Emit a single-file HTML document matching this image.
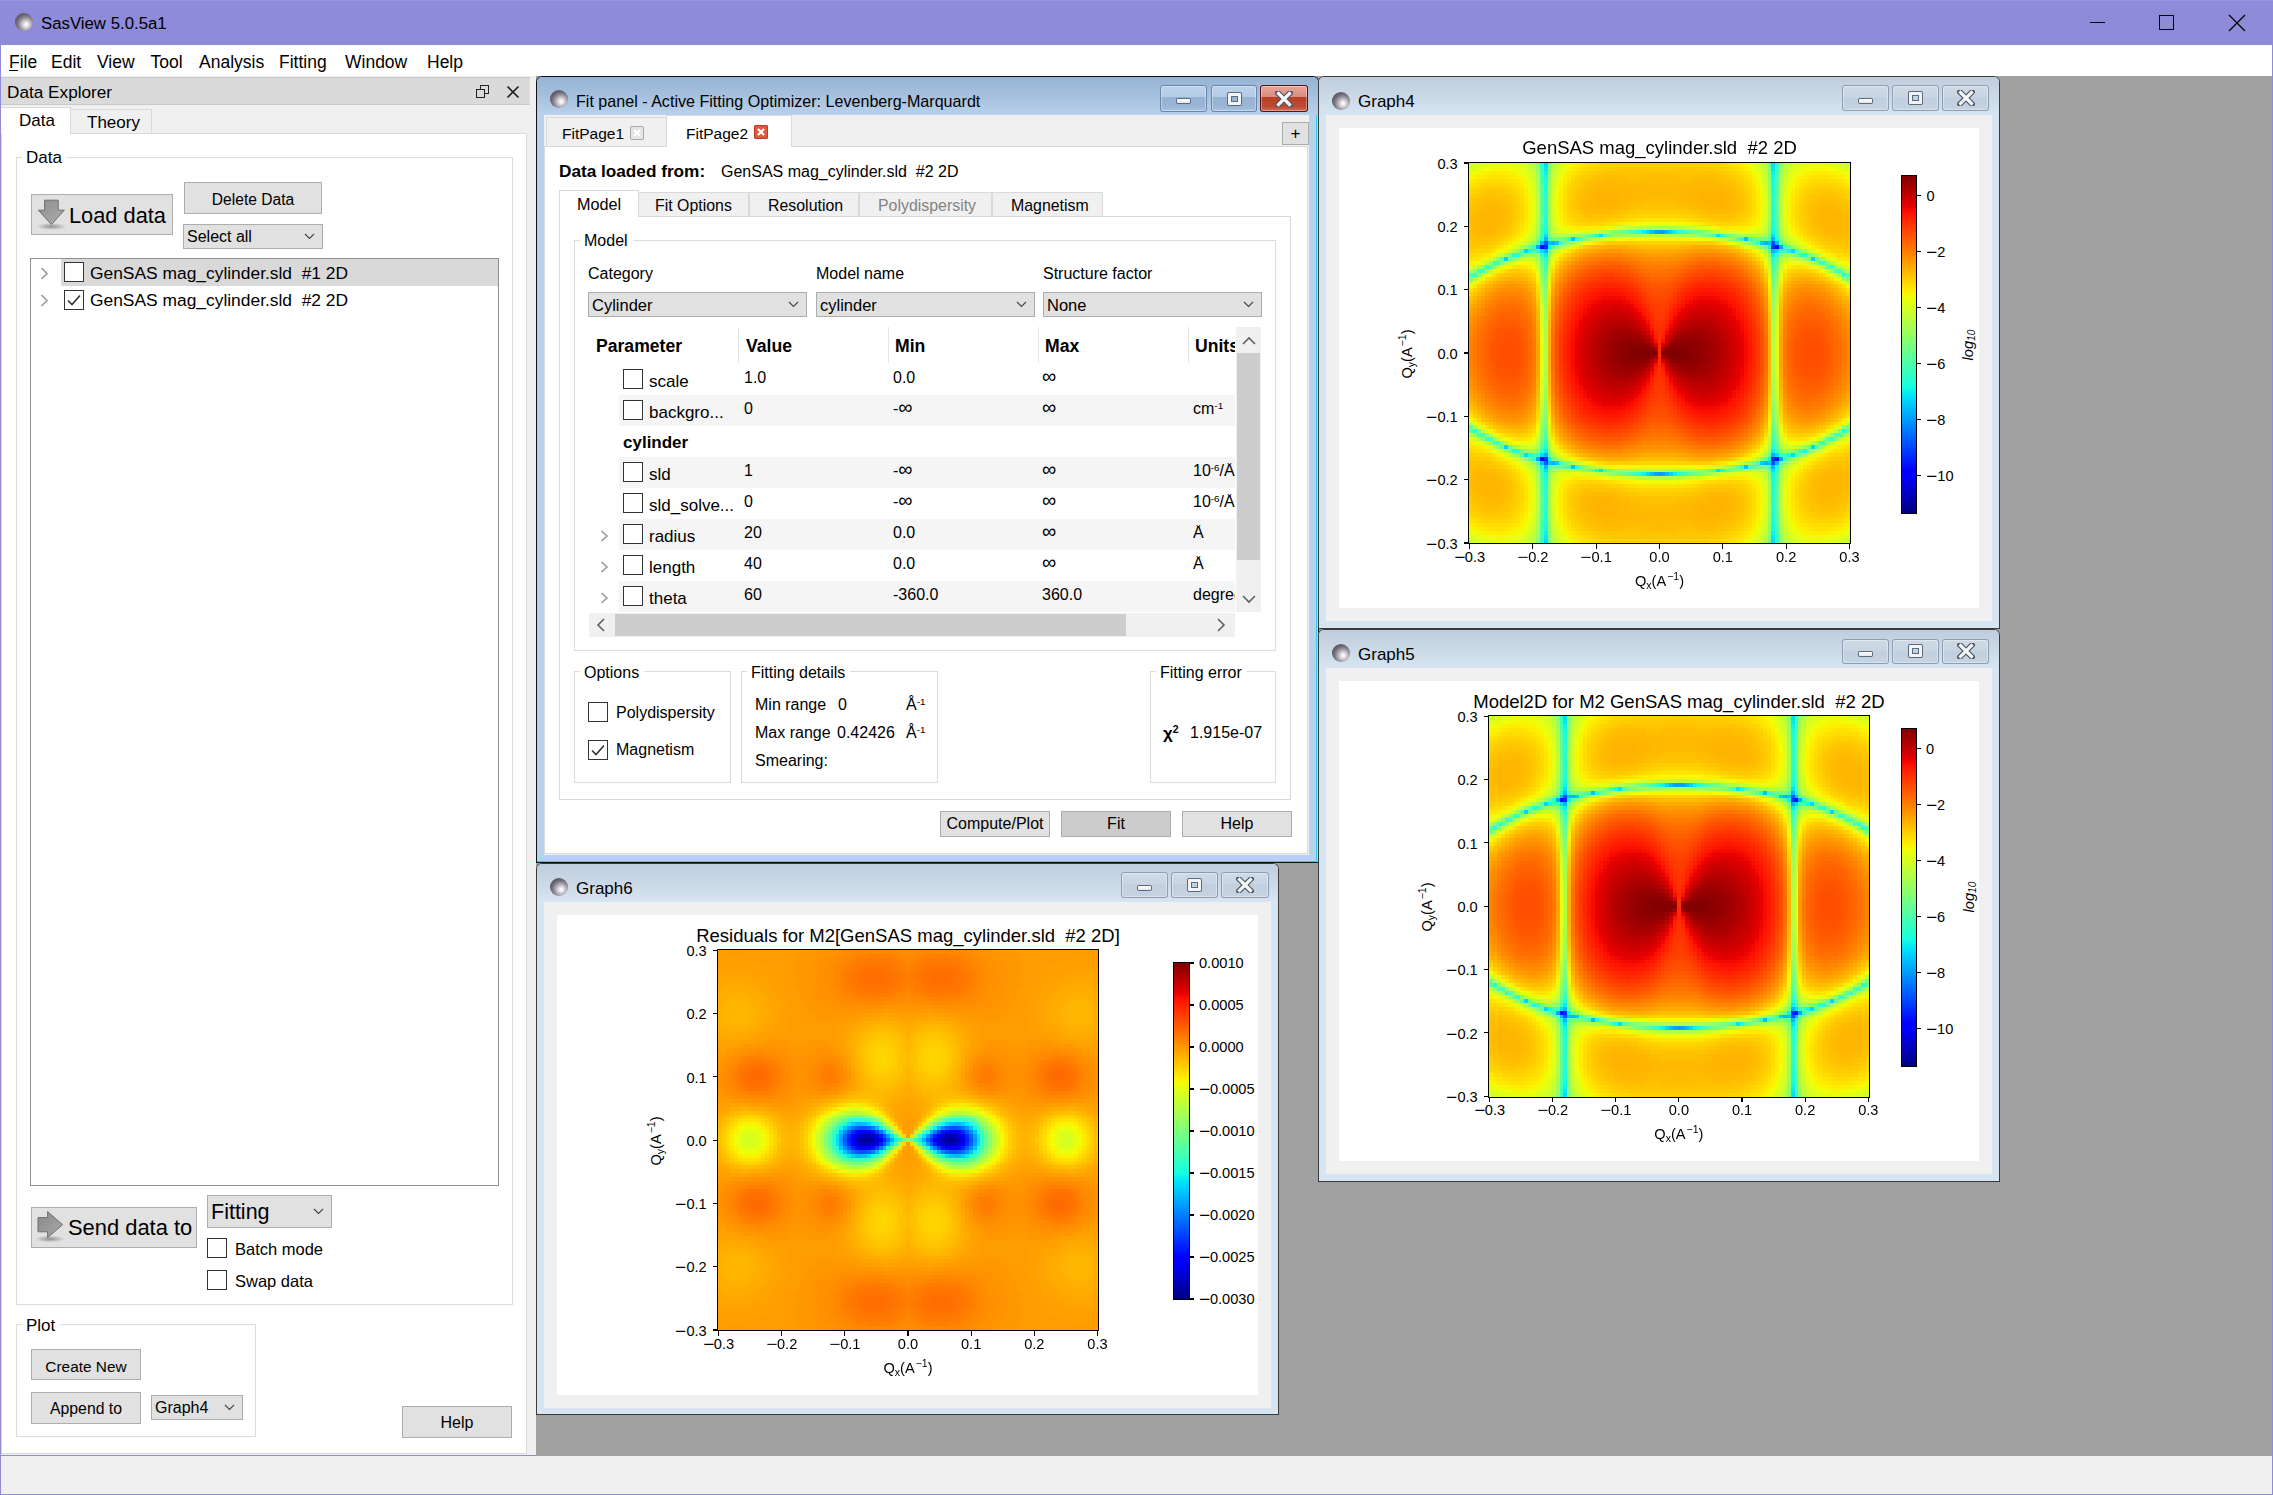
<!DOCTYPE html>
<html><head><meta charset="utf-8"><title>SasView</title><style>
*{margin:0;padding:0;box-sizing:border-box}
html,body{width:2273px;height:1495px;overflow:hidden;background:#a0a0a0}
body{position:relative;font-family:"Liberation Sans",sans-serif;color:#000}
.a{position:absolute}
.t{position:absolute;white-space:pre}
canvas{image-rendering:pixelated}
.hm{overflow:hidden}.hm>div{position:absolute;left:0;width:100%}
sup{font-size:0.62em;vertical-align:0.55em;line-height:0}
sub{font-size:0.7em;vertical-align:-0.25em;line-height:0}
sup.ms{font-size:0.72em;vertical-align:0.6em;margin-left:1px}
sub.ms{font-size:0.72em;vertical-align:-0.3em}
</style></head>
<body>
<div class="a" style="left:0px;top:0px;width:2273px;height:1495px;background:#8e8bd8;"></div>
<div class="a" style="left:1px;top:45px;width:2271px;height:31px;background:#fff;"></div>
<div class="a" style="left:1px;top:76px;width:527px;height:1379px;background:#f0f0f0;"></div>
<div class="a" style="left:528px;top:76px;width:8px;height:1379px;background:#f0f0f0;"></div>
<div class="a" style="left:536px;top:76px;width:1736px;height:1380px;background:#a0a0a0;"></div>
<div class="a" style="left:1px;top:1456px;width:2271px;height:38px;background:#f0f0f0;"></div>
<div class="a" style="left:0px;top:0px;width:2273px;height:1px;background:#9894dc;"></div>
<div class="a" style="left:15px;top:13px;width:18px;height:18px;border-radius:50%;background:radial-gradient(circle farthest-corner at 62% 64%, #ffffff 0%, #f3eff3 10%, #b4b0b8 32%, #75717e 55%, #4d4a58 80%, #474453 100%);"></div>
<div class="t" style="top:15.78px;font-size:16.8px;line-height:16.8px;left:41px;">SasView 5.0.5a1</div>
<div class="a" style="left:2090px;top:22px;width:15px;height:1px;background:#000;"></div>
<div class="a" style="left:2159px;top:15px;width:15px;height:15px;box-shadow:inset 0 0 0 1px #000;"></div>
<svg class="a" style="left:2228px;top:14px" width="18" height="18"><path d="M1 1 L17 17 M17 1 L1 17" stroke="#000" stroke-width="1.2"/></svg>
<div class="t" style="top:53.69px;font-size:17.5px;line-height:17.5px;left:9px;">File</div>
<div class="t" style="top:53.69px;font-size:17.5px;line-height:17.5px;left:51px;">Edit</div>
<div class="t" style="top:53.69px;font-size:17.5px;line-height:17.5px;left:97px;">View</div>
<div class="t" style="top:53.69px;font-size:17.5px;line-height:17.5px;left:150.5px;">Tool</div>
<div class="t" style="top:53.69px;font-size:17.5px;line-height:17.5px;left:199px;">Analysis</div>
<div class="t" style="top:53.69px;font-size:17.5px;line-height:17.5px;left:279px;">Fitting</div>
<div class="t" style="top:53.69px;font-size:17.5px;line-height:17.5px;left:345px;">Window</div>
<div class="t" style="top:53.69px;font-size:17.5px;line-height:17.5px;left:427px;">Help</div>
<div class="a" style="left:9px;top:70px;width:9px;height:1px;background:#000;"></div>
<div class="a" style="left:1px;top:77px;width:529px;height:28px;background:#dadada;box-shadow:inset 0 1px 0 #c9c9c9, inset 0 -1px 0 #c9c9c9;"></div>
<div class="t" style="top:84.44px;font-size:17.2px;line-height:17.2px;left:7px;">Data Explorer</div>
<div class="a" style="left:480px;top:85px;width:9px;height:9px;box-shadow:inset 0 0 0 1px #222;"></div>
<div class="a" style="left:476px;top:89px;width:9px;height:9px;background:#dadada;box-shadow:inset 0 0 0 1px #222;"></div>
<svg class="a" style="left:506px;top:85px" width="14" height="14"><path d="M1.5 1.5 L12.5 12.5 M12.5 1.5 L1.5 12.5" stroke="#222" stroke-width="1.7"/></svg>
<div class="a" style="left:1px;top:133px;width:526px;height:1321px;background:#fff;box-shadow:inset 0 0 0 1px #d9d9d9;"></div>
<div class="a" style="left:70px;top:109px;width:82px;height:25px;background:#f0f0f0;box-shadow:inset 0 0 0 1px #d9d9d9;"></div>
<div class="a" style="left:1px;top:107px;width:70px;height:27px;background:#fff;box-shadow:inset -1px 1px 0 #d9d9d9;"></div>
<div class="t" style="top:112.41px;font-size:17px;line-height:17px;left:19px;">Data</div>
<div class="t" style="top:114.11px;font-size:17px;line-height:17px;left:87px;">Theory</div>
<div class="a" style="left:16px;top:157px;width:497px;height:1148px;box-shadow:inset 0 0 0 1px #dcdcdc;"></div>
<div class="a" style="left:22px;top:155px;width:44.90718749999999px;height:4px;background:#fff;"></div>
<div class="t" style="top:149.31px;font-size:17px;line-height:17px;left:26px;">Data</div>
<div class="a" style="left:31px;top:194px;width:142px;height:41px;background:#e1e1e1;box-shadow:inset 0 0 0 1px #adadad;"></div>
<svg class="a" style="left:36px;top:198px" width="32" height="34"><defs><linearGradient id="ga" x1="0" y1="0" x2="1" y2="1"><stop offset="0" stop-color="#8f8f8f"/><stop offset="0.5" stop-color="#9d9d9b"/><stop offset="1" stop-color="#b0b0ae"/></linearGradient><radialGradient id="gs"><stop offset="0" stop-color="#888" stop-opacity="0.9"/><stop offset="1" stop-color="#888" stop-opacity="0"/></radialGradient></defs><ellipse cx="15.4" cy="28.5" rx="15" ry="3.5" fill="url(#gs)"/><path d="M8.6 2.2 H22.2 V12.2 H28.3 L15.4 26.6 L2.4 12.2 H8.6 Z" fill="url(#ga)" stroke="#6f6f6f" stroke-width="1"/></svg>
<div class="t" style="top:204.55px;font-size:21.8px;line-height:21.8px;left:69px;">Load data</div>
<div class="a" style="left:184px;top:182px;width:138px;height:32px;background:#e1e1e1;box-shadow:inset 0 0 0 1px #adadad;"></div>
<div class="t" style="top:191.69px;font-size:15.6px;line-height:15.6px;left:253.0px;transform:translateX(-50%);">Delete Data</div>
<div class="a" style="left:183px;top:224px;width:140px;height:25px;background:#e1e1e1;box-shadow:inset 0 0 0 1px #adadad;"></div>
<div class="t" style="top:229.36px;font-size:16px;line-height:16px;left:187px;">Select all</div>
<svg class="a" style="left:303.5px;top:233.25px" width="11" height="6.5"><path d="M1 1 L5.5 5.5 L10 1" fill="none" stroke="#444" stroke-width="1.1"/></svg>
<div class="a" style="left:30px;top:258px;width:469px;height:928px;background:#fff;box-shadow:inset 0 0 0 1px #8e8f99;"></div>
<div class="a" style="left:61px;top:259px;width:437px;height:27px;background:#d9d9d9;"></div>
<svg class="a" style="left:40px;top:267px" width="9" height="13"><path d="M1.5 1 L7 6.5 L1.5 12" fill="none" stroke="#9a9a9a" stroke-width="1.6"/></svg>
<svg class="a" style="left:40px;top:294px" width="9" height="13"><path d="M1.5 1 L7 6.5 L1.5 12" fill="none" stroke="#9a9a9a" stroke-width="1.6"/></svg>
<div class="a" style="left:64px;top:262px;width:20px;height:20px;background:#fff;box-shadow:inset 0 0 0 1px #333;"></div>
<div class="a" style="left:64px;top:290px;width:20px;height:20px;background:#fff;box-shadow:inset 0 0 0 1px #333;"><svg width="20" height="20" style="position:absolute;left:0;top:0"><path d="M4 10.5 L8 14.5 L16 5.5" fill="none" stroke="#333" stroke-width="1.6"/></svg></div>
<div class="t" style="top:264.57px;font-size:17.4px;line-height:17.4px;left:90px;">GenSAS mag_cylinder.sld  #1 2D</div>
<div class="t" style="top:292.07px;font-size:17.4px;line-height:17.4px;left:90px;">GenSAS mag_cylinder.sld  #2 2D</div>
<div class="a" style="left:31px;top:1207px;width:166px;height:41px;background:#e1e1e1;box-shadow:inset 0 0 0 1px #adadad;"></div>
<svg class="a" style="left:35px;top:1208px" width="32" height="36"><defs><linearGradient id="gb" x1="0" y1="0" x2="1" y2="1"><stop offset="0" stop-color="#8a8b87"/><stop offset="0.6" stop-color="#9c9d9a"/><stop offset="1" stop-color="#a8a9a6"/></linearGradient><radialGradient id="gs2"><stop offset="0" stop-color="#888" stop-opacity="0.9"/><stop offset="1" stop-color="#888" stop-opacity="0"/></radialGradient></defs><ellipse cx="15" cy="31" rx="15" ry="3.5" fill="url(#gs2)"/><path d="M3 9.6 H12.6 V3.6 L27.6 16.7 L12.6 29.6 V23.8 H3 Z" fill="url(#gb)" stroke="#6f6f6f" stroke-width="1" stroke-linejoin="round"/></svg>
<div class="t" style="top:1216.96px;font-size:21.9px;line-height:21.9px;left:68px;">Send data to</div>
<div class="a" style="left:207px;top:1195px;width:125px;height:33px;background:#e1e1e1;box-shadow:inset 0 0 0 1px #adadad;"></div>
<div class="t" style="top:1201.50px;font-size:21.5px;line-height:21.5px;left:211px;">Fitting</div>
<svg class="a" style="left:312.5px;top:1208.25px" width="11" height="6.5"><path d="M1 1 L5.5 5.5 L10 1" fill="none" stroke="#444" stroke-width="1.1"/></svg>
<div class="a" style="left:207px;top:1238px;width:20px;height:20px;background:#fff;box-shadow:inset 0 0 0 1px #333;"></div>
<div class="t" style="top:1240.73px;font-size:16.5px;line-height:16.5px;left:235px;">Batch mode</div>
<div class="a" style="left:207px;top:1270px;width:20px;height:20px;background:#fff;box-shadow:inset 0 0 0 1px #333;"></div>
<div class="t" style="top:1272.73px;font-size:16.5px;line-height:16.5px;left:235px;">Swap data</div>
<div class="a" style="left:16px;top:1324px;width:240px;height:113px;box-shadow:inset 0 0 0 1px #dcdcdc;"></div>
<div class="a" style="left:22px;top:1322px;width:38.293125px;height:4px;background:#fff;"></div>
<div class="t" style="top:1316.61px;font-size:17px;line-height:17px;left:26px;">Plot</div>
<div class="a" style="left:31px;top:1349px;width:110px;height:31px;background:#e1e1e1;box-shadow:inset 0 0 0 1px #adadad;"></div>
<div class="t" style="top:1358.66px;font-size:15.4px;line-height:15.4px;left:86.0px;transform:translateX(-50%);">Create New</div>
<div class="a" style="left:31px;top:1392px;width:110px;height:32px;background:#e1e1e1;box-shadow:inset 0 0 0 1px #adadad;"></div>
<div class="t" style="top:1401.43px;font-size:15.8px;line-height:15.8px;left:86.0px;transform:translateX(-50%);">Append to</div>
<div class="a" style="left:151px;top:1395px;width:92px;height:25px;background:#e1e1e1;box-shadow:inset 0 0 0 1px #adadad;"></div>
<div class="t" style="top:1400.06px;font-size:16px;line-height:16px;left:155px;">Graph4</div>
<svg class="a" style="left:223.5px;top:1404.25px" width="11" height="6.5"><path d="M1 1 L5.5 5.5 L10 1" fill="none" stroke="#444" stroke-width="1.1"/></svg>
<div class="a" style="left:402px;top:1406px;width:110px;height:32px;background:#e1e1e1;box-shadow:inset 0 0 0 1px #adadad;"></div>
<div class="t" style="top:1414.86px;font-size:16px;line-height:16px;left:457.0px;transform:translateX(-50%);">Help</div>
<div class="a" style="left:536px;top:76px;width:783px;height:787px;background:#b9d1ea;box-shadow:inset 0 0 0 1px #111;border-radius:6px 6px 0 0;"></div>
<div class="a" style="left:537px;top:77px;width:781px;height:38px;background:linear-gradient(#97b3d3 0%,#a6c1df 50%,#b9d1ea 100%);border-radius:5px 5px 0 0;"></div>
<div class="a" style="left:550px;top:90px;width:18px;height:18px;border-radius:50%;background:radial-gradient(circle farthest-corner at 62% 64%, #ffffff 0%, #f3eff3 10%, #b4b0b8 32%, #75717e 55%, #4d4a58 80%, #474453 100%);"></div>
<div class="t" style="top:93.37px;font-size:16.1px;line-height:16.1px;left:576px;">Fit panel - Active Fitting Optimizer: Levenberg-Marquardt</div>
<div class="a" style="left:1160px;top:85px;width:47px;height:27px;background:linear-gradient(#bcd3ea 0%,#b3cbe5 45%,#98b2d2 46%,#9ab5d6 80%,#aec8e6 100%);border-radius:3px;box-shadow:inset 0 0 0 1px #6b86a8, inset 0 0 0 2px rgba(255,255,255,0.35);"></div>
<div class="a" style="left:1177.0px;top:99.0px;width:13px;height:4px;background:linear-gradient(#fff,#e6e6e6);box-shadow:0 0 0 1px #5a6a80;border-radius:1px;"></div>
<div class="a" style="left:1211px;top:85px;width:46px;height:27px;background:linear-gradient(#bcd3ea 0%,#b3cbe5 45%,#98b2d2 46%,#9ab5d6 80%,#aec8e6 100%);border-radius:3px;box-shadow:inset 0 0 0 1px #6b86a8, inset 0 0 0 2px rgba(255,255,255,0.35);"></div>
<div class="a" style="left:1227.5px;top:92.5px;width:13px;height:12px;box-shadow:inset 0 0 0 3px #f4f4f4,0 0 0 1px #5a6a80,inset 0 0 0 4px #5a6a80;border-radius:1px;"></div>
<div class="a" style="left:1260px;top:85px;width:48px;height:27px;background:linear-gradient(#eaa79c 0%,#d98c7d 45%,#b83f25 46%,#c04a31 80%,#d07868 100%);border-radius:3px;box-shadow:inset 0 0 0 1px #4f1515, inset 0 0 0 2px rgba(255,255,255,0.35);"></div>
<svg class="a" style="left:1275.0px;top:90.5px" width="18" height="16"><path d="M3 2 L15 14 M15 2 L3 14" stroke="#4a5668" stroke-width="5.5" stroke-linecap="square"/><path d="M3.5 2.5 L14.5 13.5 M14.5 2.5 L3.5 13.5" stroke="#f7f7f7" stroke-width="3.2" stroke-linecap="square"/></svg>
<div class="a" style="left:544px;top:115px;width:765px;height:740px;background:#f0f0f0;"></div>
<div class="a" style="left:1316px;top:115px;width:1px;height:747px;background:#2fd0f0;"></div>
<div class="a" style="left:537px;top:861px;width:780px;height:1px;background:#2fd0f0;"></div>
<div class="a" style="left:544px;top:146px;width:764px;height:708px;background:#fff;box-shadow:inset 0 0 0 1px #d9d9d9;"></div>
<div class="a" style="left:546px;top:117px;width:121px;height:30px;background:#f0f0f0;box-shadow:inset 0 0 0 1px #d9d9d9;"></div>
<div class="a" style="left:666px;top:115px;width:126px;height:32px;background:#fff;box-shadow:inset 1px 1px 0 #d9d9d9, inset -1px 0 0 #d9d9d9;"></div>
<div class="t" style="top:125.98px;font-size:15.5px;line-height:15.5px;left:562px;">FitPage1</div>
<div class="a" style="left:630px;top:126px;width:14px;height:14px;background:#e4e4e4;box-shadow:inset 0 0 0 1px #aaa;border-radius:2px;"></div>
<svg class="a" style="left:630px;top:126px" width="14" height="14"><path d="M4 4 L10 10 M10 4 L4 10" stroke="#fff" stroke-width="2.2"/></svg>
<div class="t" style="top:125.98px;font-size:15.5px;line-height:15.5px;left:686px;">FitPage2</div>
<div class="a" style="left:754px;top:125px;width:14px;height:14px;background:#e05a3c;box-shadow:inset 0 0 0 1px #c0392b;border-radius:2px;"></div>
<svg class="a" style="left:754px;top:125px" width="14" height="14"><path d="M4 4 L10 10 M10 4 L4 10" stroke="#fff" stroke-width="2.2"/></svg>
<div class="a" style="left:1282px;top:122px;width:27px;height:23px;background:#e1e1e1;box-shadow:inset 0 0 0 1px #adadad;"></div>
<div class="t" style="top:125.11px;font-size:17px;line-height:17px;left:1295.5px;transform:translateX(-50%);">+</div>
<div class="t" style="top:162.84px;font-size:17.2px;line-height:17.2px;left:559px;font-weight:bold;">Data loaded from:</div>
<div class="t" style="top:163.86px;font-size:16px;line-height:16px;left:721px;">GenSAS mag_cylinder.sld  #2 2D</div>
<div class="a" style="left:559px;top:216px;width:732px;height:584px;background:#fff;box-shadow:inset 0 0 0 1px #d9d9d9;"></div>
<div class="a" style="left:638px;top:192px;width:111px;height:25px;background:#f0f0f0;box-shadow:inset 0 0 0 1px #d9d9d9;"></div>
<div class="t" style="top:198.04px;font-size:15.9px;line-height:15.9px;left:655px;">Fit Options</div>
<div class="a" style="left:749px;top:192px;width:110px;height:25px;background:#f0f0f0;box-shadow:inset 0 0 0 1px #d9d9d9;"></div>
<div class="t" style="top:198.04px;font-size:15.9px;line-height:15.9px;left:768px;">Resolution</div>
<div class="a" style="left:859px;top:192px;width:133px;height:25px;background:#f0f0f0;box-shadow:inset 0 0 0 1px #d9d9d9;"></div>
<div class="t" style="top:198.04px;font-size:15.9px;line-height:15.9px;left:878px;color:#838383;">Polydispersity</div>
<div class="a" style="left:992px;top:192px;width:111px;height:25px;background:#f0f0f0;box-shadow:inset 0 0 0 1px #d9d9d9;"></div>
<div class="t" style="top:198.04px;font-size:15.9px;line-height:15.9px;left:1011px;">Magnetism</div>
<div class="a" style="left:559px;top:190px;width:80px;height:27px;background:#fff;box-shadow:inset 1px 1px 0 #d9d9d9, inset -1px 0 0 #d9d9d9;"></div>
<div class="t" style="top:195.69px;font-size:16.2px;line-height:16.2px;left:577px;">Model</div>
<div class="a" style="left:574px;top:240px;width:702px;height:411px;box-shadow:inset 0 0 0 1px #dcdcdc;"></div>
<div class="a" style="left:580px;top:238px;width:52.575000000000045px;height:4px;background:#fff;"></div>
<div class="t" style="top:233.06px;font-size:16px;line-height:16px;left:584px;">Model</div>
<div class="t" style="top:266.16px;font-size:16px;line-height:16px;left:588px;">Category</div>
<div class="t" style="top:266.16px;font-size:16px;line-height:16px;left:816px;">Model name</div>
<div class="t" style="top:266.16px;font-size:16px;line-height:16px;left:1043px;">Structure factor</div>
<div class="a" style="left:588px;top:292px;width:219px;height:25px;background:#e1e1e1;box-shadow:inset 0 0 0 1px #adadad;"></div>
<div class="t" style="top:296.73px;font-size:16.5px;line-height:16.5px;left:592px;">Cylinder</div>
<svg class="a" style="left:787.5px;top:301.25px" width="11" height="6.5"><path d="M1 1 L5.5 5.5 L10 1" fill="none" stroke="#444" stroke-width="1.1"/></svg>
<div class="a" style="left:816px;top:292px;width:219px;height:25px;background:#e1e1e1;box-shadow:inset 0 0 0 1px #adadad;"></div>
<div class="t" style="top:296.73px;font-size:16.5px;line-height:16.5px;left:820px;">cylinder</div>
<svg class="a" style="left:1015.5px;top:301.25px" width="11" height="6.5"><path d="M1 1 L5.5 5.5 L10 1" fill="none" stroke="#444" stroke-width="1.1"/></svg>
<div class="a" style="left:1043px;top:292px;width:219px;height:25px;background:#e1e1e1;box-shadow:inset 0 0 0 1px #adadad;"></div>
<div class="t" style="top:296.73px;font-size:16.5px;line-height:16.5px;left:1047px;">None</div>
<svg class="a" style="left:1242.5px;top:301.25px" width="11" height="6.5"><path d="M1 1 L5.5 5.5 L10 1" fill="none" stroke="#444" stroke-width="1.1"/></svg>
<div class="a" style="left:738px;top:327px;width:1px;height:36px;background:#e6e6e6;"></div>
<div class="a" style="left:888px;top:327px;width:1px;height:36px;background:#e6e6e6;"></div>
<div class="a" style="left:1038px;top:327px;width:1px;height:36px;background:#e6e6e6;"></div>
<div class="a" style="left:1188px;top:327px;width:1px;height:36px;background:#e6e6e6;"></div>
<div class="t" style="top:338.30px;font-size:17.6px;line-height:17.6px;left:596px;font-weight:bold;">Parameter</div>
<div class="t" style="top:338.30px;font-size:17.6px;line-height:17.6px;left:746px;font-weight:bold;">Value</div>
<div class="t" style="top:338.30px;font-size:17.6px;line-height:17.6px;left:895px;font-weight:bold;">Min</div>
<div class="t" style="top:338.30px;font-size:17.6px;line-height:17.6px;left:1045px;font-weight:bold;">Max</div>
<div class="t" style="top:338.30px;font-size:17.6px;line-height:17.6px;left:1195px;font-weight:bold;width:40px;overflow:hidden;">Units</div>
<div class="a" style="left:623px;top:369px;width:20px;height:20px;background:#fff;box-shadow:inset 0 0 0 1px #333;"></div>
<div class="t" style="top:373.01px;font-size:17px;line-height:17px;left:649px;">scale</div>
<div class="t" style="top:369.76px;font-size:16px;line-height:16px;left:744px;">1.0</div>
<div class="t" style="top:369.76px;font-size:16px;line-height:16px;left:893px;">0.0</div>
<div class="t" style="top:369.76px;font-size:16px;line-height:16px;left:1042px;"><span style="font-size:1.25em;line-height:0">∞</span></div>
<div class="a" style="left:619px;top:395px;width:616px;height:31px;background:#f5f5f5;"></div>
<div class="a" style="left:623px;top:400px;width:20px;height:20px;background:#fff;box-shadow:inset 0 0 0 1px #333;"></div>
<div class="t" style="top:404.01px;font-size:17px;line-height:17px;left:649px;">backgro...</div>
<div class="t" style="top:400.76px;font-size:16px;line-height:16px;left:744px;">0</div>
<div class="t" style="top:400.76px;font-size:16px;line-height:16px;left:893px;">-<span style="font-size:1.25em;line-height:0">∞</span></div>
<div class="t" style="top:400.76px;font-size:16px;line-height:16px;left:1042px;"><span style="font-size:1.25em;line-height:0">∞</span></div>
<div class="t" style="top:400.76px;font-size:16px;line-height:16px;left:1193px;width:42px;overflow:hidden;">cm<sup>-1</sup></div>
<div class="t" style="top:434.01px;font-size:17px;line-height:17px;left:623px;font-weight:bold;">cylinder</div>
<div class="a" style="left:619px;top:457px;width:616px;height:31px;background:#f5f5f5;"></div>
<div class="a" style="left:623px;top:462px;width:20px;height:20px;background:#fff;box-shadow:inset 0 0 0 1px #333;"></div>
<div class="t" style="top:466.01px;font-size:17px;line-height:17px;left:649px;">sld</div>
<div class="t" style="top:462.76px;font-size:16px;line-height:16px;left:744px;">1</div>
<div class="t" style="top:462.76px;font-size:16px;line-height:16px;left:893px;">-<span style="font-size:1.25em;line-height:0">∞</span></div>
<div class="t" style="top:462.76px;font-size:16px;line-height:16px;left:1042px;"><span style="font-size:1.25em;line-height:0">∞</span></div>
<div class="t" style="top:462.76px;font-size:16px;line-height:16px;left:1193px;width:42px;overflow:hidden;">10<sup>-6</sup>/Å</div>
<div class="a" style="left:623px;top:493px;width:20px;height:20px;background:#fff;box-shadow:inset 0 0 0 1px #333;"></div>
<div class="t" style="top:497.01px;font-size:17px;line-height:17px;left:649px;">sld_solve...</div>
<div class="t" style="top:493.76px;font-size:16px;line-height:16px;left:744px;">0</div>
<div class="t" style="top:493.76px;font-size:16px;line-height:16px;left:893px;">-<span style="font-size:1.25em;line-height:0">∞</span></div>
<div class="t" style="top:493.76px;font-size:16px;line-height:16px;left:1042px;"><span style="font-size:1.25em;line-height:0">∞</span></div>
<div class="t" style="top:493.76px;font-size:16px;line-height:16px;left:1193px;width:42px;overflow:hidden;">10<sup>-6</sup>/Å</div>
<div class="a" style="left:619px;top:519px;width:616px;height:31px;background:#f5f5f5;"></div>
<div class="a" style="left:623px;top:524px;width:20px;height:20px;background:#fff;box-shadow:inset 0 0 0 1px #333;"></div>
<div class="t" style="top:528.01px;font-size:17px;line-height:17px;left:649px;">radius</div>
<div class="t" style="top:524.76px;font-size:16px;line-height:16px;left:744px;">20</div>
<div class="t" style="top:524.76px;font-size:16px;line-height:16px;left:893px;">0.0</div>
<div class="t" style="top:524.76px;font-size:16px;line-height:16px;left:1042px;"><span style="font-size:1.25em;line-height:0">∞</span></div>
<div class="t" style="top:524.76px;font-size:16px;line-height:16px;left:1193px;width:42px;overflow:hidden;">Å</div>
<svg class="a" style="left:600px;top:530px" width="9" height="12"><path d="M1.5 1 L7 6.0 L1.5 11" fill="none" stroke="#999" stroke-width="1.6"/></svg>
<div class="a" style="left:623px;top:555px;width:20px;height:20px;background:#fff;box-shadow:inset 0 0 0 1px #333;"></div>
<div class="t" style="top:559.01px;font-size:17px;line-height:17px;left:649px;">length</div>
<div class="t" style="top:555.76px;font-size:16px;line-height:16px;left:744px;">40</div>
<div class="t" style="top:555.76px;font-size:16px;line-height:16px;left:893px;">0.0</div>
<div class="t" style="top:555.76px;font-size:16px;line-height:16px;left:1042px;"><span style="font-size:1.25em;line-height:0">∞</span></div>
<div class="t" style="top:555.76px;font-size:16px;line-height:16px;left:1193px;width:42px;overflow:hidden;">Å</div>
<svg class="a" style="left:600px;top:561px" width="9" height="12"><path d="M1.5 1 L7 6.0 L1.5 11" fill="none" stroke="#999" stroke-width="1.6"/></svg>
<div class="a" style="left:619px;top:581px;width:616px;height:31px;background:#f5f5f5;"></div>
<div class="a" style="left:623px;top:586px;width:20px;height:20px;background:#fff;box-shadow:inset 0 0 0 1px #333;"></div>
<div class="t" style="top:590.01px;font-size:17px;line-height:17px;left:649px;">theta</div>
<div class="t" style="top:586.76px;font-size:16px;line-height:16px;left:744px;">60</div>
<div class="t" style="top:586.76px;font-size:16px;line-height:16px;left:893px;">-360.0</div>
<div class="t" style="top:586.76px;font-size:16px;line-height:16px;left:1042px;">360.0</div>
<div class="t" style="top:586.76px;font-size:16px;line-height:16px;left:1193px;width:42px;overflow:hidden;">degrees</div>
<svg class="a" style="left:600px;top:592px" width="9" height="12"><path d="M1.5 1 L7 6.0 L1.5 11" fill="none" stroke="#999" stroke-width="1.6"/></svg>
<div class="a" style="left:1236px;top:327px;width:25px;height:285px;background:#f0f0f0;"></div>
<div class="a" style="left:1237px;top:353px;width:23px;height:207px;background:#cdcdcd;"></div>
<svg class="a" style="left:1241px;top:336px" width="16" height="10"><path d="M2 8 L8 2 L14 8" fill="none" stroke="#606060" stroke-width="1.6"/></svg>
<svg class="a" style="left:1241px;top:594px" width="16" height="10"><path d="M2 2 L8 8 L14 2" fill="none" stroke="#606060" stroke-width="1.6"/></svg>
<div class="a" style="left:589px;top:613px;width:646px;height:24px;background:#f0f0f0;"></div>
<div class="a" style="left:615px;top:614px;width:511px;height:22px;background:#cdcdcd;"></div>
<svg class="a" style="left:596px;top:617px" width="10" height="16"><path d="M8 2 L2 8 L8 14" fill="none" stroke="#606060" stroke-width="1.6"/></svg>
<svg class="a" style="left:1216px;top:617px" width="10" height="16"><path d="M2 2 L8 8 L2 14" fill="none" stroke="#606060" stroke-width="1.6"/></svg>
<div class="a" style="left:574px;top:671px;width:157px;height:112px;box-shadow:inset 0 0 0 1px #dcdcdc;"></div>
<div class="a" style="left:580px;top:669px;width:64.13750000000005px;height:4px;background:#fff;"></div>
<div class="t" style="top:664.76px;font-size:16px;line-height:16px;left:584px;">Options</div>
<div class="a" style="left:588px;top:702px;width:20px;height:20px;background:#fff;box-shadow:inset 0 0 0 1px #333;"></div>
<div class="t" style="top:704.96px;font-size:16px;line-height:16px;left:616px;">Polydispersity</div>
<div class="a" style="left:588px;top:740px;width:20px;height:20px;background:#fff;box-shadow:inset 0 0 0 1px #333;"><svg width="20" height="20" style="position:absolute;left:0;top:0"><path d="M4 10.5 L8 14.5 L16 5.5" fill="none" stroke="#333" stroke-width="1.6"/></svg></div>
<div class="t" style="top:742.46px;font-size:16px;line-height:16px;left:616px;">Magnetism</div>
<div class="a" style="left:741px;top:671px;width:197px;height:112px;box-shadow:inset 0 0 0 1px #dcdcdc;"></div>
<div class="a" style="left:747px;top:669px;width:103.25999999999999px;height:4px;background:#fff;"></div>
<div class="t" style="top:664.76px;font-size:16px;line-height:16px;left:751px;">Fitting details</div>
<div class="t" style="top:697.46px;font-size:16px;line-height:16px;left:755px;">Min range</div>
<div class="t" style="top:697.46px;font-size:16px;line-height:16px;left:838px;">0</div>
<div class="t" style="top:697.46px;font-size:16px;line-height:16px;left:906px;">Å<sup>-1</sup></div>
<div class="t" style="top:725.16px;font-size:16px;line-height:16px;left:755px;">Max range</div>
<div class="t" style="top:725.16px;font-size:16px;line-height:16px;left:837px;">0.42426</div>
<div class="t" style="top:725.16px;font-size:16px;line-height:16px;left:906px;">Å<sup>-1</sup></div>
<div class="t" style="top:753.46px;font-size:16px;line-height:16px;left:755px;">Smearing:</div>
<div class="a" style="left:1150px;top:671px;width:126px;height:112px;box-shadow:inset 0 0 0 1px #dcdcdc;"></div>
<div class="a" style="left:1156px;top:669px;width:90.78999999999996px;height:4px;background:#fff;"></div>
<div class="t" style="top:664.76px;font-size:16px;line-height:16px;left:1160px;">Fitting error</div>
<div class="t" style="top:724.61px;font-size:17px;line-height:17px;left:1163px;font-weight:bold;">χ<sup>2</sup></div>
<div class="t" style="top:725.46px;font-size:16px;line-height:16px;left:1190px;">1.915e-07</div>
<div class="a" style="left:940px;top:811px;width:110px;height:26px;background:#e1e1e1;box-shadow:inset 0 0 0 1px #adadad;"></div>
<div class="t" style="top:816.46px;font-size:16px;line-height:16px;left:995.0px;transform:translateX(-50%);">Compute/Plot</div>
<div class="a" style="left:1061px;top:811px;width:110px;height:26px;background:#cccccc;box-shadow:inset 0 0 0 1px #adadad;"></div>
<div class="t" style="top:816.46px;font-size:16px;line-height:16px;left:1116.0px;transform:translateX(-50%);">Fit</div>
<div class="a" style="left:1182px;top:811px;width:110px;height:26px;background:#e1e1e1;box-shadow:inset 0 0 0 1px #adadad;"></div>
<div class="t" style="top:816.46px;font-size:16px;line-height:16px;left:1237.0px;transform:translateX(-50%);">Help</div>
<div class="a" style="left:1318px;top:76px;width:682px;height:553px;background:#d7e4f2;box-shadow:inset 0 0 0 1px #3a3a3a;border-radius:6px 6px 0 0;"></div>
<div class="a" style="left:1319px;top:77px;width:680px;height:38px;background:linear-gradient(#bfcddd 0%,#cbd8e6 50%,#d7e4f2 100%);border-radius:5px 5px 0 0;"></div>
<div class="a" style="left:1332px;top:91.6px;width:18px;height:18px;border-radius:50%;background:radial-gradient(circle farthest-corner at 62% 64%, #ffffff 0%, #f3eff3 10%, #b4b0b8 32%, #75717e 55%, #4d4a58 80%, #474453 100%);"></div>
<div class="t" style="top:93.21px;font-size:17px;line-height:17px;left:1358px;">Graph4</div>
<div class="a" style="left:1842px;top:85px;width:47px;height:26px;background:linear-gradient(#cfdae6 0%,#c9d5e2 45%,#c2cfde 50%,#c6d3e1 100%);border-radius:3px;box-shadow:inset 0 0 0 1px #8e9db0, inset 0 0 0 2px rgba(255,255,255,0.35);"></div>
<div class="a" style="left:1859.0px;top:98.5px;width:13px;height:4px;background:linear-gradient(#fff,#e6e6e6);box-shadow:0 0 0 1px #5a6a80;border-radius:1px;"></div>
<div class="a" style="left:1892px;top:85px;width:47px;height:26px;background:linear-gradient(#cfdae6 0%,#c9d5e2 45%,#c2cfde 50%,#c6d3e1 100%);border-radius:3px;box-shadow:inset 0 0 0 1px #8e9db0, inset 0 0 0 2px rgba(255,255,255,0.35);"></div>
<div class="a" style="left:1909.0px;top:92.0px;width:13px;height:12px;box-shadow:inset 0 0 0 3px #f4f4f4,0 0 0 1px #5a6a80,inset 0 0 0 4px #5a6a80;border-radius:1px;"></div>
<div class="a" style="left:1942px;top:85px;width:47px;height:26px;background:linear-gradient(#cfdae6 0%,#c9d5e2 45%,#c2cfde 50%,#c6d3e1 100%);border-radius:3px;box-shadow:inset 0 0 0 1px #8e9db0, inset 0 0 0 2px rgba(255,255,255,0.35);"></div>
<svg class="a" style="left:1956.5px;top:90.0px" width="18" height="16"><path d="M3 2 L15 14 M15 2 L3 14" stroke="#4a5668" stroke-width="5.5" stroke-linecap="square"/><path d="M3.5 2.5 L14.5 13.5 M14.5 2.5 L3.5 13.5" stroke="#f7f7f7" stroke-width="3.2" stroke-linecap="square"/></svg>
<div class="a" style="left:1326px;top:115px;width:666px;height:506px;background:#f0f0f0;"></div>
<div class="a" style="left:1339px;top:128px;width:640px;height:480px;background:#fff;"></div>
<div class="a hm" style="left:1469.5px;top:163px;width:380.0px;height:380px"><div style="top:0.00px;height:4.52px;background:linear-gradient(90deg,#caff2c 0.52%,#d1ff26,#d7ff1f,#deff19,#e1ff16,#e4ff13,#e7ff0f,#e7ff0f,#e7ff0f,#e7ff0f,#e7ff0f,#e4ff13,#deff19,#d7ff1f,#d1ff26,#c4ff33,#b4ff43,#8dff6a,#33ffc4,#00e0fb,#7aff7d,#b1ff46,#caff2c,#d7ff1f,#e4ff13,#eeff09,#f8f500,#feed00,#ffe600,#ffe200,#ffde00,#ffdb00,#ffd700,#ffd300,#ffd300,#ffd300,#ffd000,#ffd000,#ffd000,#ffd000,#ffd000,#ffd000,#ffd000,#ffd000,#ffd000,#ffd000,#ffcc00,#ffcc00,#ffcc00,#ffcc00,#ffcc00,#ffd000,#ffd000,#ffd000,#ffd000,#ffd000,#ffd000,#ffd000,#ffd000,#ffd000,#ffd000,#ffd300,#ffd300,#ffd300,#ffd700,#ffdb00,#ffde00,#ffe200,#ffe600,#feed00,#f8f500,#eeff09,#e4ff13,#d7ff1f,#caff2c,#b1ff46,#7aff7d,#00e0fb,#33ffc4,#8dff6a,#b4ff43,#c4ff33,#d1ff26,#d7ff1f,#deff19,#e4ff13,#e7ff0f,#e7ff0f,#e7ff0f,#e7ff0f,#e7ff0f,#e4ff13,#e1ff16,#deff19,#d7ff1f,#d1ff26,#caff2c 99.48%)"></div><div style="top:3.92px;height:4.52px;background:linear-gradient(90deg,#dbff1c 0.52%,#e1ff16,#e7ff0f,#ebff0c,#eeff09,#f1fc06,#f4f802,#f4f802,#f4f802,#f4f802,#f1fc06,#eeff09,#ebff0c,#e4ff13,#dbff1c,#ceff29,#beff39,#97ff60,#39ffbe,#02e9f4,#80ff77,#baff3c,#d1ff26,#e1ff16,#eeff09,#f8f500,#feed00,#ffe600,#ffde00,#ffdb00,#ffd300,#ffd300,#ffd000,#ffcc00,#ffcc00,#ffcc00,#ffc800,#ffc800,#ffc800,#ffc800,#ffc800,#ffc800,#ffc800,#ffc800,#ffc800,#ffc800,#ffc800,#ffc800,#ffc800,#ffc800,#ffc800,#ffc800,#ffc800,#ffc800,#ffc800,#ffc800,#ffc800,#ffc800,#ffc800,#ffc800,#ffc800,#ffcc00,#ffcc00,#ffcc00,#ffd000,#ffd300,#ffd300,#ffdb00,#ffde00,#ffe600,#feed00,#f8f500,#eeff09,#e1ff16,#d1ff26,#baff3c,#80ff77,#02e9f4,#39ffbe,#97ff60,#beff39,#ceff29,#dbff1c,#e4ff13,#ebff0c,#eeff09,#f1fc06,#f4f802,#f4f802,#f4f802,#f4f802,#f1fc06,#eeff09,#ebff0c,#e7ff0f,#e1ff16,#dbff1c 99.48%)"></div><div style="top:7.84px;height:4.52px;background:linear-gradient(90deg,#ebff0c 0.52%,#eeff09,#f4f802,#f8f500,#fbf100,#feed00,#feed00,#feed00,#feed00,#feed00,#fbf100,#f8f500,#f1fc06,#ebff0c,#e4ff13,#d7ff1f,#c4ff33,#9dff5a,#43ffb4,#0cf4eb,#8aff6d,#c1ff36,#d7ff1f,#e7ff0f,#f4f802,#feed00,#ffe600,#ffde00,#ffd700,#ffd300,#ffd000,#ffcc00,#ffc800,#ffc800,#ffc400,#ffc400,#ffc400,#ffc400,#ffc400,#ffc400,#ffc400,#ffc400,#ffc400,#ffc400,#ffc400,#ffc100,#ffc100,#ffc100,#ffc100,#ffc100,#ffc100,#ffc100,#ffc400,#ffc400,#ffc400,#ffc400,#ffc400,#ffc400,#ffc400,#ffc400,#ffc400,#ffc400,#ffc400,#ffc800,#ffc800,#ffcc00,#ffd000,#ffd300,#ffd700,#ffde00,#ffe600,#feed00,#f4f802,#e7ff0f,#d7ff1f,#c1ff36,#8aff6d,#0cf4eb,#43ffb4,#9dff5a,#c4ff33,#d7ff1f,#e4ff13,#ebff0c,#f1fc06,#f8f500,#fbf100,#feed00,#feed00,#feed00,#feed00,#feed00,#fbf100,#f8f500,#f4f802,#eeff09,#ebff0c 99.48%)"></div><div style="top:11.75px;height:4.52px;background:linear-gradient(90deg,#f4f802 0.52%,#fbf100,#feed00,#ffea00,#ffe600,#ffe200,#ffe200,#ffe200,#ffe200,#ffe600,#ffea00,#feed00,#fbf100,#f4f802,#ebff0c,#deff19,#caff2c,#a7ff50,#49ffad,#13fce4,#90ff66,#c7ff30,#deff19,#eeff09,#fbf100,#ffe600,#ffde00,#ffd700,#ffd000,#ffcc00,#ffc800,#ffc400,#ffc100,#ffc100,#ffc100,#ffbd00,#ffbd00,#ffbd00,#ffbd00,#ffbd00,#ffc100,#ffc100,#ffc100,#ffc100,#ffbd00,#ffbd00,#ffbd00,#ffbd00,#ffbd00,#ffbd00,#ffbd00,#ffbd00,#ffbd00,#ffc100,#ffc100,#ffc100,#ffc100,#ffbd00,#ffbd00,#ffbd00,#ffbd00,#ffbd00,#ffc100,#ffc100,#ffc100,#ffc400,#ffc800,#ffcc00,#ffd000,#ffd700,#ffde00,#ffe600,#fbf100,#eeff09,#deff19,#c7ff30,#90ff66,#13fce4,#49ffad,#a7ff50,#caff2c,#deff19,#ebff0c,#f4f802,#fbf100,#feed00,#ffea00,#ffe600,#ffe200,#ffe200,#ffe200,#ffe200,#ffe600,#ffea00,#feed00,#fbf100,#f4f802 99.48%)"></div><div style="top:15.67px;height:4.52px;background:linear-gradient(90deg,#feed00 0.52%,#ffea00,#ffe200,#ffde00,#ffde00,#ffdb00,#ffdb00,#ffdb00,#ffdb00,#ffde00,#ffde00,#ffe600,#ffea00,#fbf100,#f1fc06,#e4ff13,#d1ff26,#aaff4d,#50ffa7,#19ffde,#94ff63,#ceff29,#e4ff13,#f4f802,#feed00,#ffe200,#ffd700,#ffd000,#ffcc00,#ffc400,#ffc100,#ffc100,#ffbd00,#ffbd00,#ffb900,#ffb900,#ffb900,#ffb900,#ffb900,#ffb900,#ffbd00,#ffbd00,#ffbd00,#ffbd00,#ffbd00,#ffbd00,#ffbd00,#ffb900,#ffb900,#ffb900,#ffbd00,#ffbd00,#ffbd00,#ffbd00,#ffbd00,#ffbd00,#ffbd00,#ffb900,#ffb900,#ffb900,#ffb900,#ffb900,#ffb900,#ffbd00,#ffbd00,#ffc100,#ffc100,#ffc400,#ffcc00,#ffd000,#ffd700,#ffe200,#feed00,#f4f802,#e4ff13,#ceff29,#94ff63,#19ffde,#50ffa7,#aaff4d,#d1ff26,#e4ff13,#f1fc06,#fbf100,#ffea00,#ffe600,#ffde00,#ffde00,#ffdb00,#ffdb00,#ffdb00,#ffdb00,#ffde00,#ffde00,#ffe200,#ffea00,#feed00 99.48%)"></div><div style="top:19.59px;height:4.52px;background:linear-gradient(90deg,#ffe600 0.52%,#ffde00,#ffdb00,#ffd700,#ffd300,#ffd300,#ffd300,#ffd300,#ffd300,#ffd700,#ffdb00,#ffde00,#ffe200,#feed00,#f4f802,#ebff0c,#d7ff1f,#b1ff46,#53ffa4,#1cffdb,#9aff5d,#d1ff26,#e7ff0f,#f8f500,#ffe600,#ffdb00,#ffd300,#ffcc00,#ffc800,#ffc100,#ffbd00,#ffbd00,#ffb900,#ffb900,#ffb600,#ffb600,#ffb600,#ffb600,#ffb900,#ffb900,#ffb900,#ffb900,#ffb900,#ffb900,#ffb900,#ffb900,#ffb900,#ffb900,#ffb900,#ffb900,#ffb900,#ffb900,#ffb900,#ffb900,#ffb900,#ffb900,#ffb900,#ffb900,#ffb900,#ffb600,#ffb600,#ffb600,#ffb600,#ffb900,#ffb900,#ffbd00,#ffbd00,#ffc100,#ffc800,#ffcc00,#ffd300,#ffdb00,#ffe600,#f8f500,#e7ff0f,#d1ff26,#9aff5d,#1cffdb,#53ffa4,#b1ff46,#d7ff1f,#ebff0c,#f4f802,#feed00,#ffe200,#ffde00,#ffdb00,#ffd700,#ffd300,#ffd300,#ffd300,#ffd300,#ffd300,#ffd700,#ffdb00,#ffde00,#ffe600 99.48%)"></div><div style="top:23.51px;height:4.52px;background:linear-gradient(90deg,#ffdb00 0.52%,#ffd700,#ffd300,#ffd000,#ffcc00,#ffcc00,#ffcc00,#ffcc00,#ffcc00,#ffd000,#ffd300,#ffd700,#ffde00,#ffe600,#fbf100,#eeff09,#dbff1c,#b4ff43,#5aff9d,#1fffd7,#9dff5a,#d4ff23,#eeff09,#fbf100,#ffe200,#ffd700,#ffd000,#ffc800,#ffc400,#ffbd00,#ffb900,#ffb900,#ffb600,#ffb600,#ffb600,#ffb600,#ffb600,#ffb600,#ffb600,#ffb600,#ffb600,#ffb900,#ffb900,#ffb900,#ffb900,#ffb900,#ffb900,#ffb900,#ffb900,#ffb900,#ffb900,#ffb900,#ffb900,#ffb900,#ffb900,#ffb900,#ffb600,#ffb600,#ffb600,#ffb600,#ffb600,#ffb600,#ffb600,#ffb600,#ffb600,#ffb900,#ffb900,#ffbd00,#ffc400,#ffc800,#ffd000,#ffd700,#ffe200,#fbf100,#eeff09,#d4ff23,#9dff5a,#1fffd7,#5aff9d,#b4ff43,#dbff1c,#eeff09,#fbf100,#ffe600,#ffde00,#ffd700,#ffd300,#ffd000,#ffcc00,#ffcc00,#ffcc00,#ffcc00,#ffcc00,#ffd000,#ffd300,#ffd700,#ffdb00 99.48%)"></div><div style="top:27.42px;height:4.52px;background:linear-gradient(90deg,#ffd700 0.52%,#ffd000,#ffcc00,#ffc800,#ffc800,#ffc400,#ffc400,#ffc800,#ffc800,#ffcc00,#ffd000,#ffd300,#ffdb00,#ffe200,#feed00,#f1fc06,#deff19,#b7ff40,#5dff9a,#23ffd4,#a0ff56,#d7ff1f,#eeff09,#feed00,#ffde00,#ffd300,#ffcc00,#ffc400,#ffc100,#ffbd00,#ffb900,#ffb600,#ffb600,#ffb200,#ffb200,#ffb200,#ffb200,#ffb200,#ffb600,#ffb600,#ffb600,#ffb600,#ffb900,#ffb900,#ffb900,#ffb900,#ffb900,#ffb900,#ffb900,#ffb900,#ffb900,#ffb900,#ffb900,#ffb900,#ffb900,#ffb600,#ffb600,#ffb600,#ffb600,#ffb200,#ffb200,#ffb200,#ffb200,#ffb200,#ffb600,#ffb600,#ffb900,#ffbd00,#ffc100,#ffc400,#ffcc00,#ffd300,#ffde00,#feed00,#eeff09,#d7ff1f,#a0ff56,#23ffd4,#5dff9a,#b7ff40,#deff19,#f1fc06,#feed00,#ffe200,#ffdb00,#ffd300,#ffd000,#ffcc00,#ffc800,#ffc800,#ffc400,#ffc400,#ffc800,#ffc800,#ffcc00,#ffd000,#ffd700 99.48%)"></div><div style="top:31.34px;height:4.52px;background:linear-gradient(90deg,#ffd000 0.52%,#ffcc00,#ffc800,#ffc400,#ffc100,#ffc100,#ffc100,#ffc100,#ffc400,#ffc400,#ffc800,#ffd000,#ffd700,#ffde00,#ffea00,#f4f802,#e1ff16,#baff3c,#5dff9a,#26ffd1,#a4ff53,#dbff1c,#f1fc06,#ffea00,#ffde00,#ffd300,#ffcc00,#ffc400,#ffbd00,#ffb900,#ffb600,#ffb600,#ffb200,#ffb200,#ffb200,#ffb200,#ffb200,#ffb200,#ffb600,#ffb600,#ffb600,#ffb900,#ffb900,#ffb900,#ffb900,#ffb900,#ffb900,#ffb900,#ffb900,#ffb900,#ffb900,#ffb900,#ffb900,#ffb900,#ffb900,#ffb900,#ffb600,#ffb600,#ffb600,#ffb200,#ffb200,#ffb200,#ffb200,#ffb200,#ffb200,#ffb600,#ffb600,#ffb900,#ffbd00,#ffc400,#ffcc00,#ffd300,#ffde00,#ffea00,#f1fc06,#dbff1c,#a4ff53,#26ffd1,#5dff9a,#baff3c,#e1ff16,#f4f802,#ffea00,#ffde00,#ffd700,#ffd000,#ffc800,#ffc400,#ffc400,#ffc100,#ffc100,#ffc100,#ffc100,#ffc400,#ffc800,#ffcc00,#ffd000 99.48%)"></div><div style="top:35.26px;height:4.52px;background:linear-gradient(90deg,#ffcc00 0.52%,#ffc400,#ffc400,#ffc100,#ffbd00,#ffbd00,#ffbd00,#ffbd00,#ffc100,#ffc100,#ffc800,#ffcc00,#ffd300,#ffdb00,#ffe600,#f8f500,#e4ff13,#beff39,#60ff97,#29ffce,#a4ff53,#dbff1c,#f4f802,#ffea00,#ffdb00,#ffd000,#ffc800,#ffc100,#ffbd00,#ffb900,#ffb600,#ffb600,#ffb200,#ffb200,#ffb200,#ffb200,#ffb200,#ffb200,#ffb600,#ffb600,#ffb900,#ffb900,#ffb900,#ffb900,#ffbd00,#ffbd00,#ffbd00,#ffbd00,#ffbd00,#ffbd00,#ffbd00,#ffbd00,#ffbd00,#ffb900,#ffb900,#ffb900,#ffb900,#ffb600,#ffb600,#ffb200,#ffb200,#ffb200,#ffb200,#ffb200,#ffb200,#ffb600,#ffb600,#ffb900,#ffbd00,#ffc100,#ffc800,#ffd000,#ffdb00,#ffea00,#f4f802,#dbff1c,#a4ff53,#29ffce,#60ff97,#beff39,#e4ff13,#f8f500,#ffe600,#ffdb00,#ffd300,#ffcc00,#ffc800,#ffc100,#ffc100,#ffbd00,#ffbd00,#ffbd00,#ffbd00,#ffc100,#ffc400,#ffc400,#ffcc00 99.48%)"></div><div style="top:39.18px;height:4.52px;background:linear-gradient(90deg,#ffc800 0.52%,#ffc100,#ffbd00,#ffbd00,#ffb900,#ffb900,#ffb900,#ffb900,#ffbd00,#ffc100,#ffc400,#ffc800,#ffd000,#ffdb00,#ffe600,#f8f500,#e4ff13,#beff39,#60ff97,#29ffce,#a7ff50,#deff19,#f4f802,#ffea00,#ffdb00,#ffd000,#ffc800,#ffc100,#ffbd00,#ffb900,#ffb600,#ffb600,#ffb200,#ffb200,#ffb200,#ffb200,#ffb600,#ffb600,#ffb600,#ffb900,#ffb900,#ffbd00,#ffbd00,#ffbd00,#ffc100,#ffc100,#ffc100,#ffc100,#ffc100,#ffc100,#ffc100,#ffc100,#ffc100,#ffbd00,#ffbd00,#ffbd00,#ffb900,#ffb900,#ffb600,#ffb600,#ffb600,#ffb200,#ffb200,#ffb200,#ffb200,#ffb600,#ffb600,#ffb900,#ffbd00,#ffc100,#ffc800,#ffd000,#ffdb00,#ffea00,#f4f802,#deff19,#a7ff50,#29ffce,#60ff97,#beff39,#e4ff13,#f8f500,#ffe600,#ffdb00,#ffd000,#ffc800,#ffc400,#ffc100,#ffbd00,#ffb900,#ffb900,#ffb900,#ffb900,#ffbd00,#ffbd00,#ffc100,#ffc800 99.48%)"></div><div style="top:43.09px;height:4.52px;background:linear-gradient(90deg,#ffc400 0.52%,#ffbd00,#ffbd00,#ffb900,#ffb900,#ffb600,#ffb600,#ffb900,#ffb900,#ffbd00,#ffc100,#ffc800,#ffd000,#ffd700,#ffe200,#fbf100,#e7ff0f,#beff39,#63ff94,#29ffce,#a7ff50,#deff19,#f4f802,#ffea00,#ffdb00,#ffd300,#ffc800,#ffc400,#ffbd00,#ffb900,#ffb900,#ffb600,#ffb600,#ffb600,#ffb600,#ffb600,#ffb600,#ffb900,#ffb900,#ffbd00,#ffbd00,#ffc100,#ffc100,#ffc400,#ffc400,#ffc400,#ffc400,#ffc400,#ffc400,#ffc400,#ffc400,#ffc400,#ffc400,#ffc400,#ffc100,#ffc100,#ffbd00,#ffbd00,#ffb900,#ffb900,#ffb600,#ffb600,#ffb600,#ffb600,#ffb600,#ffb600,#ffb900,#ffb900,#ffbd00,#ffc400,#ffc800,#ffd300,#ffdb00,#ffea00,#f4f802,#deff19,#a7ff50,#29ffce,#63ff94,#beff39,#e7ff0f,#fbf100,#ffe200,#ffd700,#ffd000,#ffc800,#ffc100,#ffbd00,#ffb900,#ffb900,#ffb600,#ffb600,#ffb900,#ffb900,#ffbd00,#ffbd00,#ffc400 99.48%)"></div><div style="top:47.01px;height:4.52px;background:linear-gradient(90deg,#ffc100 0.52%,#ffbd00,#ffb900,#ffb600,#ffb600,#ffb600,#ffb600,#ffb600,#ffb900,#ffbd00,#ffc100,#ffc800,#ffd000,#ffd700,#ffe200,#fbf100,#e7ff0f,#beff39,#60ff97,#29ffce,#a4ff53,#dbff1c,#f1fc06,#ffea00,#ffde00,#ffd300,#ffcc00,#ffc800,#ffc100,#ffbd00,#ffbd00,#ffb900,#ffb900,#ffb900,#ffb900,#ffb900,#ffbd00,#ffbd00,#ffc100,#ffc400,#ffc400,#ffc800,#ffc800,#ffcc00,#ffcc00,#ffcc00,#ffcc00,#ffcc00,#ffcc00,#ffcc00,#ffcc00,#ffcc00,#ffcc00,#ffcc00,#ffc800,#ffc800,#ffc400,#ffc400,#ffc100,#ffbd00,#ffbd00,#ffb900,#ffb900,#ffb900,#ffb900,#ffb900,#ffbd00,#ffbd00,#ffc100,#ffc800,#ffcc00,#ffd300,#ffde00,#ffea00,#f1fc06,#dbff1c,#a4ff53,#29ffce,#60ff97,#beff39,#e7ff0f,#fbf100,#ffe200,#ffd700,#ffd000,#ffc800,#ffc100,#ffbd00,#ffb900,#ffb600,#ffb600,#ffb600,#ffb600,#ffb600,#ffb900,#ffbd00,#ffc100 99.48%)"></div><div style="top:50.93px;height:4.52px;background:linear-gradient(90deg,#ffbd00 0.52%,#ffb900,#ffb600,#ffb600,#ffb600,#ffb600,#ffb600,#ffb600,#ffb900,#ffbd00,#ffc100,#ffc800,#ffd000,#ffd700,#ffe600,#f8f500,#e4ff13,#beff39,#60ff97,#26ffd1,#a4ff53,#d7ff1f,#f1fc06,#feed00,#ffe200,#ffd700,#ffd000,#ffcc00,#ffc800,#ffc400,#ffc100,#ffc100,#ffc100,#ffc100,#ffc100,#ffc100,#ffc400,#ffc400,#ffc800,#ffcc00,#ffd000,#ffd000,#ffd300,#ffd300,#ffd700,#ffd700,#ffd700,#ffd700,#ffd700,#ffd700,#ffd700,#ffd700,#ffd700,#ffd300,#ffd300,#ffd000,#ffd000,#ffcc00,#ffc800,#ffc400,#ffc400,#ffc100,#ffc100,#ffc100,#ffc100,#ffc100,#ffc100,#ffc400,#ffc800,#ffcc00,#ffd000,#ffd700,#ffe200,#feed00,#f1fc06,#d7ff1f,#a4ff53,#26ffd1,#60ff97,#beff39,#e4ff13,#f8f500,#ffe600,#ffd700,#ffd000,#ffc800,#ffc100,#ffbd00,#ffb900,#ffb600,#ffb600,#ffb600,#ffb600,#ffb600,#ffb600,#ffb900,#ffbd00 99.48%)"></div><div style="top:54.85px;height:4.52px;background:linear-gradient(90deg,#ffbd00 0.52%,#ffb900,#ffb600,#ffb600,#ffb600,#ffb600,#ffb600,#ffb600,#ffb900,#ffbd00,#ffc100,#ffc800,#ffd000,#ffdb00,#ffe600,#f8f500,#e4ff13,#baff3c,#5dff9a,#23ffd4,#a0ff56,#d4ff23,#ebff0c,#fbf100,#ffe600,#ffde00,#ffd700,#ffd000,#ffcc00,#ffcc00,#ffc800,#ffc800,#ffc800,#ffc800,#ffc800,#ffcc00,#ffd000,#ffd000,#ffd300,#ffd700,#ffdb00,#ffde00,#ffe200,#ffe200,#ffe600,#ffe600,#ffe600,#ffe600,#ffe600,#ffe600,#ffe600,#ffe600,#ffe600,#ffe200,#ffe200,#ffde00,#ffdb00,#ffd700,#ffd300,#ffd000,#ffd000,#ffcc00,#ffc800,#ffc800,#ffc800,#ffc800,#ffc800,#ffcc00,#ffcc00,#ffd000,#ffd700,#ffde00,#ffe600,#fbf100,#ebff0c,#d4ff23,#a0ff56,#23ffd4,#5dff9a,#baff3c,#e4ff13,#f8f500,#ffe600,#ffdb00,#ffd000,#ffc800,#ffc100,#ffbd00,#ffb900,#ffb600,#ffb600,#ffb600,#ffb600,#ffb600,#ffb600,#ffb900,#ffbd00 99.48%)"></div><div style="top:58.76px;height:4.52px;background:linear-gradient(90deg,#ffbd00 0.52%,#ffb900,#ffb600,#ffb600,#ffb600,#ffb600,#ffb600,#ffb900,#ffb900,#ffbd00,#ffc400,#ffcc00,#ffd300,#ffde00,#ffea00,#f4f802,#deff19,#b7ff40,#5aff9d,#1fffd7,#9aff5d,#d1ff26,#e4ff13,#f4f802,#feed00,#ffe600,#ffde00,#ffdb00,#ffd700,#ffd700,#ffd300,#ffd300,#ffd700,#ffd700,#ffdb00,#ffdb00,#ffde00,#ffe200,#ffea00,#feed00,#fbf100,#f8f500,#f4f802,#f1fc06,#eeff09,#eeff09,#ebff0c,#ebff0c,#ebff0c,#ebff0c,#ebff0c,#eeff09,#eeff09,#f1fc06,#f4f802,#f8f500,#fbf100,#feed00,#ffea00,#ffe200,#ffde00,#ffdb00,#ffdb00,#ffd700,#ffd700,#ffd300,#ffd300,#ffd700,#ffd700,#ffdb00,#ffde00,#ffe600,#feed00,#f4f802,#e4ff13,#d1ff26,#9aff5d,#1fffd7,#5aff9d,#b7ff40,#deff19,#f4f802,#ffea00,#ffde00,#ffd300,#ffcc00,#ffc400,#ffbd00,#ffb900,#ffb900,#ffb600,#ffb600,#ffb600,#ffb600,#ffb600,#ffb900,#ffbd00 99.48%)"></div><div style="top:62.68px;height:4.52px;background:linear-gradient(90deg,#ffbd00 0.52%,#ffb900,#ffb600,#ffb600,#ffb600,#ffb600,#ffb600,#ffb900,#ffbd00,#ffc100,#ffc800,#ffd000,#ffd700,#ffe200,#feed00,#eeff09,#dbff1c,#b1ff46,#53ffa4,#19ffde,#94ff63,#c7ff30,#deff19,#ebff0c,#f1fc06,#f8f500,#feed00,#ffea00,#ffea00,#ffea00,#ffea00,#feed00,#feed00,#f8f500,#f4f802,#eeff09,#e7ff0f,#e1ff16,#dbff1c,#d4ff23,#ceff29,#c7ff30,#c1ff36,#baff3c,#b7ff40,#b4ff43,#b1ff46,#b1ff46,#b1ff46,#b1ff46,#b1ff46,#b4ff43,#b7ff40,#baff3c,#c1ff36,#c7ff30,#ceff29,#d4ff23,#dbff1c,#e1ff16,#e7ff0f,#eeff09,#f4f802,#f8f500,#feed00,#feed00,#ffea00,#ffea00,#ffea00,#ffea00,#feed00,#f8f500,#f1fc06,#ebff0c,#deff19,#c7ff30,#94ff63,#19ffde,#53ffa4,#b1ff46,#dbff1c,#eeff09,#feed00,#ffe200,#ffd700,#ffd000,#ffc800,#ffc100,#ffbd00,#ffb900,#ffb600,#ffb600,#ffb600,#ffb600,#ffb600,#ffb900,#ffbd00 99.48%)"></div><div style="top:66.60px;height:4.52px;background:linear-gradient(90deg,#ffbd00 0.52%,#ffb900,#ffb900,#ffb600,#ffb600,#ffb900,#ffb900,#ffbd00,#ffc100,#ffc400,#ffcc00,#ffd300,#ffde00,#ffea00,#f8f500,#e7ff0f,#d1ff26,#aaff4d,#49ffad,#0ff9e7,#87ff70,#baff3c,#d1ff26,#dbff1c,#e1ff16,#e4ff13,#e7ff0f,#e4ff13,#e1ff16,#deff19,#d7ff1f,#ceff29,#c7ff30,#baff3c,#b1ff46,#a4ff53,#97ff60,#8aff6d,#7aff7d,#6dff8a,#5dff9a,#49ffad,#36ffc1,#23ffd4,#0cf4eb,#00d9ff,#00bcff,#00a4ff,#009cff,#00a4ff,#00bcff,#00d9ff,#0cf4eb,#23ffd4,#36ffc1,#49ffad,#5dff9a,#6dff8a,#7aff7d,#8aff6d,#97ff60,#a4ff53,#b1ff46,#baff3c,#c7ff30,#ceff29,#d7ff1f,#deff19,#e1ff16,#e4ff13,#e7ff0f,#e4ff13,#e1ff16,#dbff1c,#d1ff26,#baff3c,#87ff70,#0ff9e7,#49ffad,#aaff4d,#d1ff26,#e7ff0f,#f8f500,#ffea00,#ffde00,#ffd300,#ffcc00,#ffc400,#ffc100,#ffbd00,#ffb900,#ffb900,#ffb600,#ffb600,#ffb900,#ffb900,#ffbd00 99.48%)"></div><div style="top:70.52px;height:4.52px;background:linear-gradient(90deg,#ffbd00 0.52%,#ffbd00,#ffb900,#ffb900,#ffb900,#ffbd00,#ffbd00,#ffc100,#ffc400,#ffcc00,#ffd300,#ffdb00,#ffe600,#fbf100,#eeff09,#deff19,#c7ff30,#9dff5a,#3cffba,#00e4f8,#77ff80,#a4ff53,#b4ff43,#baff3c,#baff3c,#b4ff43,#adff49,#a4ff53,#97ff60,#87ff70,#70ff87,#53ffa4,#16ffe1,#00e4f8,#46ffb1,#66ff90,#7aff7d,#8aff6d,#94ff63,#9aff5d,#a0ff56,#a4ff53,#a7ff50,#aaff4d,#adff49,#adff49,#b1ff46,#b1ff46,#b1ff46,#b1ff46,#b1ff46,#adff49,#adff49,#aaff4d,#a7ff50,#a4ff53,#a0ff56,#9aff5d,#94ff63,#8aff6d,#7aff7d,#66ff90,#46ffb1,#00e4f8,#16ffe1,#53ffa4,#70ff87,#87ff70,#97ff60,#a4ff53,#adff49,#b4ff43,#baff3c,#baff3c,#b4ff43,#a4ff53,#77ff80,#00e4f8,#3cffba,#9dff5a,#c7ff30,#deff19,#eeff09,#fbf100,#ffe600,#ffdb00,#ffd300,#ffcc00,#ffc400,#ffc100,#ffbd00,#ffbd00,#ffb900,#ffb900,#ffb900,#ffbd00,#ffbd00 99.48%)"></div><div style="top:74.43px;height:4.52px;background:linear-gradient(90deg,#ffc100 0.52%,#ffc100,#ffbd00,#ffbd00,#ffc100,#ffc100,#ffc400,#ffc800,#ffcc00,#ffd300,#ffdb00,#ffe600,#fbf100,#eeff09,#e1ff16,#ceff29,#b7ff40,#87ff70,#1fffd7,#00b9ff,#49ffad,#70ff87,#73ff83,#6dff8a,#5dff9a,#3cffba,#00c0ff,#29ffce,#63ff94,#83ff73,#9dff5a,#b1ff46,#c1ff36,#ceff29,#d7ff1f,#e1ff16,#e7ff0f,#eeff09,#f1fc06,#f1fc06,#f4f802,#f4f802,#f4f802,#f4f802,#f4f802,#f4f802,#f4f802,#f4f802,#f4f802,#f4f802,#f4f802,#f4f802,#f4f802,#f4f802,#f4f802,#f4f802,#f4f802,#f1fc06,#f1fc06,#eeff09,#e7ff0f,#e1ff16,#d7ff1f,#ceff29,#c1ff36,#b1ff46,#9dff5a,#83ff73,#63ff94,#29ffce,#00c0ff,#3cffba,#5dff9a,#6dff8a,#73ff83,#70ff87,#49ffad,#00b9ff,#1fffd7,#87ff70,#b7ff40,#ceff29,#e1ff16,#eeff09,#fbf100,#ffe600,#ffdb00,#ffd300,#ffcc00,#ffc800,#ffc400,#ffc100,#ffc100,#ffbd00,#ffbd00,#ffc100,#ffc100 99.48%)"></div><div style="top:78.35px;height:4.52px;background:linear-gradient(90deg,#ffc400 0.52%,#ffc400,#ffc400,#ffc400,#ffc400,#ffc800,#ffcc00,#ffd000,#ffd700,#ffde00,#ffea00,#f8f500,#ebff0c,#deff19,#caff2c,#b1ff46,#8dff6a,#53ffa4,#00bcff,#0055ff,#00c4ff,#00b4ff,#00ccff,#40ffb7,#70ff87,#90ff66,#adff49,#c4ff33,#d7ff1f,#e7ff0f,#f4f802,#ffea00,#ffe200,#ffdb00,#ffd300,#ffd000,#ffcc00,#ffcc00,#ffcc00,#ffcc00,#ffcc00,#ffd000,#ffd000,#ffd300,#ffd300,#ffd300,#ffd300,#ffd300,#ffd300,#ffd300,#ffd300,#ffd300,#ffd300,#ffd300,#ffd000,#ffd000,#ffcc00,#ffcc00,#ffcc00,#ffcc00,#ffcc00,#ffd000,#ffd300,#ffdb00,#ffe200,#ffea00,#f4f802,#e7ff0f,#d7ff1f,#c4ff33,#adff49,#90ff66,#70ff87,#40ffb7,#00ccff,#00b4ff,#00c4ff,#0055ff,#00bcff,#53ffa4,#8dff6a,#b1ff46,#caff2c,#deff19,#ebff0c,#f8f500,#ffea00,#ffde00,#ffd700,#ffd000,#ffcc00,#ffc800,#ffc400,#ffc400,#ffc400,#ffc400,#ffc400 99.48%)"></div><div style="top:82.27px;height:4.52px;background:linear-gradient(90deg,#ffc800 0.52%,#ffc800,#ffc800,#ffcc00,#ffcc00,#ffd000,#ffd700,#ffde00,#ffe600,#fbf100,#f1fc06,#e1ff16,#ceff29,#b4ff43,#94ff63,#6aff8d,#33ffc4,#00a9ff,#0008ff,#002dff,#0cf4eb,#60ff97,#90ff66,#b1ff46,#ceff29,#e1ff16,#f4f802,#ffea00,#ffdb00,#ffd000,#ffc400,#ffbd00,#ffb900,#ffb600,#ffb200,#ffae00,#ffae00,#ffae00,#ffae00,#ffae00,#ffb200,#ffb600,#ffb600,#ffb900,#ffbd00,#ffbd00,#ffbd00,#ffbd00,#ffbd00,#ffbd00,#ffbd00,#ffbd00,#ffbd00,#ffb900,#ffb600,#ffb600,#ffb200,#ffae00,#ffae00,#ffae00,#ffae00,#ffae00,#ffb200,#ffb600,#ffb900,#ffbd00,#ffc400,#ffd000,#ffdb00,#ffea00,#f4f802,#e1ff16,#ceff29,#b1ff46,#90ff66,#60ff97,#0cf4eb,#002dff,#0008ff,#00a9ff,#33ffc4,#6aff8d,#94ff63,#b4ff43,#ceff29,#e1ff16,#f1fc06,#fbf100,#ffe600,#ffde00,#ffd700,#ffd000,#ffcc00,#ffcc00,#ffc800,#ffc800,#ffc800 99.48%)"></div><div style="top:86.19px;height:4.52px;background:linear-gradient(90deg,#ffd000 0.52%,#ffd000,#ffd300,#ffd300,#ffd700,#ffde00,#ffe600,#fbf100,#f1fc06,#deff19,#caff2c,#aaff4d,#87ff70,#56ffa0,#00d9ff,#13fce4,#3cffba,#39ffbe,#00dcfe,#00b4ff,#66ff90,#aaff4d,#ceff29,#e7ff0f,#fbf100,#ffe200,#ffd300,#ffc400,#ffb900,#ffb200,#ffab00,#ffa300,#ff9f00,#ff9c00,#ff9800,#ff9800,#ff9800,#ff9800,#ff9800,#ff9c00,#ff9c00,#ff9f00,#ffa300,#ffa700,#ffab00,#ffab00,#ffab00,#ffab00,#ffab00,#ffab00,#ffab00,#ffab00,#ffab00,#ffa700,#ffa300,#ff9f00,#ff9c00,#ff9c00,#ff9800,#ff9800,#ff9800,#ff9800,#ff9800,#ff9c00,#ff9f00,#ffa300,#ffab00,#ffb200,#ffb900,#ffc400,#ffd300,#ffe200,#fbf100,#e7ff0f,#ceff29,#aaff4d,#66ff90,#00b4ff,#00dcfe,#39ffbe,#3cffba,#13fce4,#00d9ff,#56ffa0,#87ff70,#aaff4d,#caff2c,#deff19,#f1fc06,#fbf100,#ffe600,#ffde00,#ffd700,#ffd300,#ffd300,#ffd000,#ffd000 99.48%)"></div><div style="top:90.10px;height:4.52px;background:linear-gradient(90deg,#ffd700 0.52%,#ffdb00,#ffde00,#ffe200,#ffea00,#fbf100,#eeff09,#dbff1c,#c1ff36,#a0ff56,#73ff83,#1fffd7,#2cffca,#66ff90,#87ff70,#97ff60,#9aff5d,#87ff70,#36ffc1,#09f0ee,#90ff66,#ceff29,#ebff0c,#ffea00,#ffd700,#ffc800,#ffb900,#ffae00,#ffa300,#ff9c00,#ff9400,#ff9100,#ff8d00,#ff8900,#ff8600,#ff8600,#ff8600,#ff8600,#ff8600,#ff8900,#ff8d00,#ff9100,#ff9400,#ff9800,#ff9800,#ff9c00,#ff9c00,#ff9c00,#ff9c00,#ff9c00,#ff9c00,#ff9c00,#ff9800,#ff9800,#ff9400,#ff9100,#ff8d00,#ff8900,#ff8600,#ff8600,#ff8600,#ff8600,#ff8600,#ff8900,#ff8d00,#ff9100,#ff9400,#ff9c00,#ffa300,#ffae00,#ffb900,#ffc800,#ffd700,#ffea00,#ebff0c,#ceff29,#90ff66,#09f0ee,#36ffc1,#87ff70,#9aff5d,#97ff60,#87ff70,#66ff90,#2cffca,#1fffd7,#73ff83,#a0ff56,#c1ff36,#dbff1c,#eeff09,#fbf100,#ffea00,#ffe200,#ffde00,#ffdb00,#ffd700 99.48%)"></div><div style="top:94.02px;height:4.52px;background:linear-gradient(90deg,#ffe200 0.52%,#ffe600,#feed00,#f8f500,#ebff0c,#d7ff1f,#baff3c,#94ff63,#5aff9d,#00d4ff,#6aff8d,#94ff63,#b1ff46,#c4ff33,#ceff29,#d1ff26,#c7ff30,#aaff4d,#56ffa0,#26ffd1,#a7ff50,#e4ff13,#ffea00,#ffd300,#ffc100,#ffb200,#ffa700,#ff9c00,#ff9100,#ff8900,#ff8200,#ff7e00,#ff7a00,#ff7700,#ff7300,#ff7300,#ff7300,#ff7300,#ff7700,#ff7a00,#ff7e00,#ff8200,#ff8600,#ff8900,#ff8d00,#ff8d00,#ff9100,#ff9100,#ff9100,#ff9100,#ff9100,#ff8d00,#ff8d00,#ff8900,#ff8600,#ff8200,#ff7e00,#ff7a00,#ff7700,#ff7300,#ff7300,#ff7300,#ff7300,#ff7700,#ff7a00,#ff7e00,#ff8200,#ff8900,#ff9100,#ff9c00,#ffa700,#ffb200,#ffc100,#ffd300,#ffea00,#e4ff13,#a7ff50,#26ffd1,#56ffa0,#aaff4d,#c7ff30,#d1ff26,#ceff29,#c4ff33,#b1ff46,#94ff63,#6aff8d,#00d4ff,#5aff9d,#94ff63,#baff3c,#d7ff1f,#ebff0c,#f8f500,#feed00,#ffe600,#ffe200 99.48%)"></div><div style="top:97.94px;height:4.52px;background:linear-gradient(90deg,#fbf100 0.52%,#f1fc06,#e7ff0f,#d4ff23,#b4ff43,#8aff6d,#40ffb7,#3cffba,#87ff70,#b1ff46,#ceff29,#e1ff16,#ebff0c,#f1fc06,#f1fc06,#ebff0c,#e1ff16,#c1ff36,#6aff8d,#36ffc1,#baff3c,#f4f802,#ffd700,#ffc100,#ffae00,#ff9f00,#ff9400,#ff8900,#ff8200,#ff7a00,#ff7300,#ff6f00,#ff6c00,#ff6800,#ff6400,#ff6400,#ff6400,#ff6400,#ff6800,#ff6c00,#ff6f00,#ff7300,#ff7700,#ff7e00,#ff8200,#ff8200,#ff8600,#ff8600,#ff8600,#ff8600,#ff8600,#ff8200,#ff8200,#ff7e00,#ff7700,#ff7300,#ff6f00,#ff6c00,#ff6800,#ff6400,#ff6400,#ff6400,#ff6400,#ff6800,#ff6c00,#ff6f00,#ff7300,#ff7a00,#ff8200,#ff8900,#ff9400,#ff9f00,#ffae00,#ffc100,#ffd700,#f4f802,#baff3c,#36ffc1,#6aff8d,#c1ff36,#e1ff16,#ebff0c,#f1fc06,#f1fc06,#ebff0c,#e1ff16,#ceff29,#b1ff46,#87ff70,#3cffba,#40ffb7,#8aff6d,#b4ff43,#d4ff23,#e7ff0f,#f1fc06,#fbf100 99.48%)"></div><div style="top:101.86px;height:4.52px;background:linear-gradient(90deg,#e4ff13 0.52%,#d1ff26,#b4ff43,#87ff70,#36ffc1,#50ffa7,#97ff60,#c1ff36,#deff19,#f1fc06,#fbf100,#ffe600,#ffe200,#ffe200,#ffe600,#feed00,#f1fc06,#d1ff26,#7aff7d,#46ffb1,#c7ff30,#ffea00,#ffc800,#ffb200,#ff9f00,#ff9100,#ff8600,#ff7a00,#ff7300,#ff6c00,#ff6400,#ff6000,#ff5d00,#ff5900,#ff5900,#ff5900,#ff5900,#ff5900,#ff5900,#ff5d00,#ff6000,#ff6800,#ff6c00,#ff7300,#ff7700,#ff7a00,#ff7a00,#ff7a00,#ff7a00,#ff7a00,#ff7a00,#ff7a00,#ff7700,#ff7300,#ff6c00,#ff6800,#ff6000,#ff5d00,#ff5900,#ff5900,#ff5900,#ff5900,#ff5900,#ff5900,#ff5d00,#ff6000,#ff6400,#ff6c00,#ff7300,#ff7a00,#ff8600,#ff9100,#ff9f00,#ffb200,#ffc800,#ffea00,#c7ff30,#46ffb1,#7aff7d,#d1ff26,#f1fc06,#feed00,#ffe600,#ffe200,#ffe200,#ffe600,#fbf100,#f1fc06,#deff19,#c1ff36,#97ff60,#50ffa7,#36ffc1,#87ff70,#b4ff43,#d1ff26,#e4ff13 99.48%)"></div><div style="top:105.77px;height:4.52px;background:linear-gradient(90deg,#b4ff43 0.52%,#8aff6d,#40ffb7,#49ffad,#97ff60,#c4ff33,#e4ff13,#f8f500,#ffe600,#ffdb00,#ffd300,#ffd000,#ffcc00,#ffd000,#ffd300,#ffdb00,#ffea00,#deff19,#87ff70,#53ffa4,#d4ff23,#ffdb00,#ffb900,#ffa300,#ff9400,#ff8600,#ff7a00,#ff6f00,#ff6800,#ff6000,#ff5900,#ff5500,#ff5200,#ff4e00,#ff4a00,#ff4a00,#ff4a00,#ff4e00,#ff4e00,#ff5200,#ff5500,#ff5d00,#ff6000,#ff6800,#ff6c00,#ff6f00,#ff7300,#ff7300,#ff7300,#ff7300,#ff7300,#ff6f00,#ff6c00,#ff6800,#ff6000,#ff5d00,#ff5500,#ff5200,#ff4e00,#ff4e00,#ff4a00,#ff4a00,#ff4a00,#ff4e00,#ff5200,#ff5500,#ff5900,#ff6000,#ff6800,#ff6f00,#ff7a00,#ff8600,#ff9400,#ffa300,#ffb900,#ffdb00,#d4ff23,#53ffa4,#87ff70,#deff19,#ffea00,#ffdb00,#ffd300,#ffd000,#ffcc00,#ffd000,#ffd300,#ffdb00,#ffe600,#f8f500,#e4ff13,#c4ff33,#97ff60,#49ffad,#40ffb7,#8aff6d,#b4ff43 99.48%)"></div><div style="top:109.69px;height:4.52px;background:linear-gradient(90deg,#56ffa0 0.52%,#26ffd1,#8aff6d,#beff39,#e1ff16,#fbf100,#ffe200,#ffd300,#ffcc00,#ffc400,#ffc100,#ffbd00,#ffbd00,#ffbd00,#ffc400,#ffcc00,#ffdb00,#ebff0c,#94ff63,#60ff97,#deff19,#ffcc00,#ffae00,#ff9800,#ff8900,#ff7a00,#ff6f00,#ff6400,#ff5d00,#ff5500,#ff4e00,#ff4a00,#ff4700,#ff4300,#ff3f00,#ff3f00,#ff3f00,#ff4300,#ff4300,#ff4700,#ff4a00,#ff5200,#ff5500,#ff5d00,#ff6400,#ff6800,#ff6c00,#ff6c00,#ff6c00,#ff6c00,#ff6c00,#ff6800,#ff6400,#ff5d00,#ff5500,#ff5200,#ff4a00,#ff4700,#ff4300,#ff4300,#ff3f00,#ff3f00,#ff3f00,#ff4300,#ff4700,#ff4a00,#ff4e00,#ff5500,#ff5d00,#ff6400,#ff6f00,#ff7a00,#ff8900,#ff9800,#ffae00,#ffcc00,#deff19,#60ff97,#94ff63,#ebff0c,#ffdb00,#ffcc00,#ffc400,#ffbd00,#ffbd00,#ffbd00,#ffc100,#ffc400,#ffcc00,#ffd300,#ffe200,#fbf100,#e1ff16,#beff39,#8aff6d,#26ffd1,#56ffa0 99.48%)"></div><div style="top:113.61px;height:4.52px;background:linear-gradient(90deg,#6dff8a 0.52%,#adff49,#d7ff1f,#f4f802,#ffe200,#ffd300,#ffc800,#ffc100,#ffb900,#ffb200,#ffae00,#ffae00,#ffae00,#ffb200,#ffb600,#ffc100,#ffd000,#f4f802,#9dff5a,#6aff8d,#e7ff0f,#ffc100,#ffa300,#ff8d00,#ff7e00,#ff6f00,#ff6400,#ff5900,#ff5200,#ff4a00,#ff4300,#ff3f00,#ff3b00,#ff3800,#ff3400,#ff3400,#ff3400,#ff3800,#ff3800,#ff3b00,#ff3f00,#ff4700,#ff4e00,#ff5500,#ff5900,#ff6000,#ff6400,#ff6400,#ff6400,#ff6400,#ff6400,#ff6000,#ff5900,#ff5500,#ff4e00,#ff4700,#ff3f00,#ff3b00,#ff3800,#ff3800,#ff3400,#ff3400,#ff3400,#ff3800,#ff3b00,#ff3f00,#ff4300,#ff4a00,#ff5200,#ff5900,#ff6400,#ff6f00,#ff7e00,#ff8d00,#ffa300,#ffc100,#e7ff0f,#6aff8d,#9dff5a,#f4f802,#ffd000,#ffc100,#ffb600,#ffb200,#ffae00,#ffae00,#ffae00,#ffb200,#ffb900,#ffc100,#ffc800,#ffd300,#ffe200,#f4f802,#d7ff1f,#adff49,#6dff8a 99.48%)"></div><div style="top:117.53px;height:4.52px;background:linear-gradient(90deg,#c4ff33 0.52%,#e7ff0f,#feed00,#ffdb00,#ffcc00,#ffc100,#ffb600,#ffae00,#ffab00,#ffa300,#ffa300,#ff9f00,#ffa300,#ffa300,#ffab00,#ffb600,#ffc400,#feed00,#a7ff50,#70ff87,#f1fc06,#ffb900,#ff9800,#ff8600,#ff7300,#ff6400,#ff5900,#ff4e00,#ff4700,#ff3f00,#ff3800,#ff3400,#ff3000,#ff2d00,#ff2d00,#ff2900,#ff2d00,#ff2d00,#ff2d00,#ff3000,#ff3800,#ff3b00,#ff4300,#ff4a00,#ff5200,#ff5900,#ff5d00,#ff5d00,#ff5d00,#ff5d00,#ff5d00,#ff5900,#ff5200,#ff4a00,#ff4300,#ff3b00,#ff3800,#ff3000,#ff2d00,#ff2d00,#ff2d00,#ff2900,#ff2d00,#ff2d00,#ff3000,#ff3400,#ff3800,#ff3f00,#ff4700,#ff4e00,#ff5900,#ff6400,#ff7300,#ff8600,#ff9800,#ffb900,#f1fc06,#70ff87,#a7ff50,#feed00,#ffc400,#ffb600,#ffab00,#ffa300,#ffa300,#ff9f00,#ffa300,#ffa300,#ffab00,#ffae00,#ffb600,#ffc100,#ffcc00,#ffdb00,#feed00,#e7ff0f,#c4ff33 99.48%)"></div><div style="top:121.44px;height:4.52px;background:linear-gradient(90deg,#f1fc06 0.52%,#ffe600,#ffd300,#ffc400,#ffb900,#ffae00,#ffa700,#ff9f00,#ff9c00,#ff9800,#ff9400,#ff9400,#ff9800,#ff9c00,#ff9f00,#ffab00,#ffb900,#ffe200,#adff49,#7aff7d,#fbf100,#ffae00,#ff9100,#ff7a00,#ff6c00,#ff5d00,#ff5200,#ff4700,#ff3f00,#ff3800,#ff3000,#ff2d00,#ff2900,#ff2500,#ff2200,#ff2200,#ff2200,#ff2200,#ff2500,#ff2900,#ff2d00,#ff3400,#ff3b00,#ff4300,#ff4a00,#ff5200,#ff5500,#ff5500,#ff5900,#ff5500,#ff5500,#ff5200,#ff4a00,#ff4300,#ff3b00,#ff3400,#ff2d00,#ff2900,#ff2500,#ff2200,#ff2200,#ff2200,#ff2200,#ff2500,#ff2900,#ff2d00,#ff3000,#ff3800,#ff3f00,#ff4700,#ff5200,#ff5d00,#ff6c00,#ff7a00,#ff9100,#ffae00,#fbf100,#7aff7d,#adff49,#ffe200,#ffb900,#ffab00,#ff9f00,#ff9c00,#ff9800,#ff9400,#ff9400,#ff9800,#ff9c00,#ff9f00,#ffa700,#ffae00,#ffb900,#ffc400,#ffd300,#ffe600,#f1fc06 99.48%)"></div><div style="top:125.36px;height:4.52px;background:linear-gradient(90deg,#ffe200 0.52%,#ffd000,#ffc400,#ffb600,#ffab00,#ffa300,#ff9c00,#ff9400,#ff9100,#ff8d00,#ff8d00,#ff8d00,#ff8d00,#ff9100,#ff9800,#ffa300,#ffb200,#ffdb00,#b4ff43,#80ff77,#ffea00,#ffa700,#ff8900,#ff7300,#ff6000,#ff5500,#ff4700,#ff3f00,#ff3400,#ff2d00,#ff2900,#ff2200,#ff1e00,#ff1a00,#ff1a00,#ff1600,#ff1600,#ff1a00,#ff1a00,#ff1e00,#ff2500,#ff2900,#ff3000,#ff3b00,#ff4300,#ff4a00,#ff4e00,#ff5200,#ff5200,#ff5200,#ff4e00,#ff4a00,#ff4300,#ff3b00,#ff3000,#ff2900,#ff2500,#ff1e00,#ff1a00,#ff1a00,#ff1600,#ff1600,#ff1a00,#ff1a00,#ff1e00,#ff2200,#ff2900,#ff2d00,#ff3400,#ff3f00,#ff4700,#ff5500,#ff6000,#ff7300,#ff8900,#ffa700,#ffea00,#80ff77,#b4ff43,#ffdb00,#ffb200,#ffa300,#ff9800,#ff9100,#ff8d00,#ff8d00,#ff8d00,#ff8d00,#ff9100,#ff9400,#ff9c00,#ffa300,#ffab00,#ffb600,#ffc400,#ffd000,#ffe200 99.48%)"></div><div style="top:129.28px;height:4.52px;background:linear-gradient(90deg,#ffd000 0.52%,#ffc100,#ffb600,#ffab00,#ff9f00,#ff9800,#ff9100,#ff8d00,#ff8600,#ff8600,#ff8200,#ff8200,#ff8600,#ff8900,#ff9100,#ff9800,#ffab00,#ffd300,#baff3c,#87ff70,#ffe200,#ff9f00,#ff8200,#ff6c00,#ff5900,#ff4e00,#ff3f00,#ff3800,#ff2d00,#ff2500,#ff2200,#ff1a00,#ff1600,#ff1300,#fa0f00,#fa0f00,#fa0f00,#fa0f00,#ff1300,#ff1600,#ff1a00,#ff2200,#ff2900,#ff3000,#ff3b00,#ff4300,#ff4a00,#ff4e00,#ff4e00,#ff4e00,#ff4a00,#ff4300,#ff3b00,#ff3000,#ff2900,#ff2200,#ff1a00,#ff1600,#ff1300,#fa0f00,#fa0f00,#fa0f00,#fa0f00,#ff1300,#ff1600,#ff1a00,#ff2200,#ff2500,#ff2d00,#ff3800,#ff3f00,#ff4e00,#ff5900,#ff6c00,#ff8200,#ff9f00,#ffe200,#87ff70,#baff3c,#ffd300,#ffab00,#ff9800,#ff9100,#ff8900,#ff8600,#ff8200,#ff8200,#ff8600,#ff8600,#ff8d00,#ff9100,#ff9800,#ff9f00,#ffab00,#ffb600,#ffc100,#ffd000 99.48%)"></div><div style="top:133.20px;height:4.52px;background:linear-gradient(90deg,#ffc400 0.52%,#ffb600,#ffab00,#ff9f00,#ff9400,#ff8d00,#ff8900,#ff8200,#ff7e00,#ff7e00,#ff7a00,#ff7a00,#ff7e00,#ff8200,#ff8900,#ff9100,#ffa300,#ffcc00,#c1ff36,#8dff6a,#ffdb00,#ff9800,#ff7a00,#ff6400,#ff5200,#ff4700,#ff3800,#ff3000,#ff2500,#ff1e00,#ff1a00,#ff1300,#fa0f00,#f60b00,#f10800,#f10800,#f10800,#f10800,#f10800,#f60b00,#ff1300,#ff1600,#ff1e00,#ff2900,#ff3400,#ff3f00,#ff4700,#ff4700,#ff4a00,#ff4700,#ff4700,#ff3f00,#ff3400,#ff2900,#ff1e00,#ff1600,#ff1300,#f60b00,#f10800,#f10800,#f10800,#f10800,#f10800,#f60b00,#fa0f00,#ff1300,#ff1a00,#ff1e00,#ff2500,#ff3000,#ff3800,#ff4700,#ff5200,#ff6400,#ff7a00,#ff9800,#ffdb00,#8dff6a,#c1ff36,#ffcc00,#ffa300,#ff9100,#ff8900,#ff8200,#ff7e00,#ff7a00,#ff7a00,#ff7e00,#ff7e00,#ff8200,#ff8900,#ff8d00,#ff9400,#ff9f00,#ffab00,#ffb600,#ffc400 99.48%)"></div><div style="top:137.11px;height:4.52px;background:linear-gradient(90deg,#ffb600 0.52%,#ffab00,#ff9f00,#ff9400,#ff8d00,#ff8600,#ff7e00,#ff7a00,#ff7700,#ff7700,#ff7300,#ff7300,#ff7700,#ff7a00,#ff8200,#ff8d00,#ff9c00,#ffc400,#c7ff30,#94ff63,#ffd700,#ff9100,#ff7300,#ff5d00,#ff4e00,#ff3f00,#ff3400,#ff2900,#ff2200,#ff1600,#ff1300,#f60b00,#f10800,#ed0400,#e80000,#e80000,#e80000,#e80000,#e80000,#ed0400,#f10800,#fa0f00,#ff1600,#ff2200,#ff2d00,#ff3800,#ff3f00,#ff4300,#ff4300,#ff4300,#ff3f00,#ff3800,#ff2d00,#ff2200,#ff1600,#fa0f00,#f10800,#ed0400,#e80000,#e80000,#e80000,#e80000,#e80000,#ed0400,#f10800,#f60b00,#ff1300,#ff1600,#ff2200,#ff2900,#ff3400,#ff3f00,#ff4e00,#ff5d00,#ff7300,#ff9100,#ffd700,#94ff63,#c7ff30,#ffc400,#ff9c00,#ff8d00,#ff8200,#ff7a00,#ff7700,#ff7300,#ff7300,#ff7700,#ff7700,#ff7a00,#ff7e00,#ff8600,#ff8d00,#ff9400,#ff9f00,#ffab00,#ffb600 99.48%)"></div><div style="top:141.03px;height:4.52px;background:linear-gradient(90deg,#ffae00 0.52%,#ffa300,#ff9800,#ff8d00,#ff8600,#ff7e00,#ff7a00,#ff7300,#ff6f00,#ff6f00,#ff6f00,#ff6f00,#ff6f00,#ff7300,#ff7a00,#ff8600,#ff9800,#ffc100,#ceff29,#97ff60,#ffd000,#ff8d00,#ff6f00,#ff5900,#ff4700,#ff3800,#ff2d00,#ff2200,#ff1a00,#ff1300,#f60b00,#ed0400,#e80000,#e40000,#df0000,#df0000,#da0000,#da0000,#df0000,#e40000,#e80000,#ed0400,#fa0f00,#ff1600,#ff2500,#ff3000,#ff3b00,#ff3f00,#ff3f00,#ff3f00,#ff3b00,#ff3000,#ff2500,#ff1600,#fa0f00,#ed0400,#e80000,#e40000,#df0000,#da0000,#da0000,#df0000,#df0000,#e40000,#e80000,#ed0400,#f60b00,#ff1300,#ff1a00,#ff2200,#ff2d00,#ff3800,#ff4700,#ff5900,#ff6f00,#ff8d00,#ffd000,#97ff60,#ceff29,#ffc100,#ff9800,#ff8600,#ff7a00,#ff7300,#ff6f00,#ff6f00,#ff6f00,#ff6f00,#ff6f00,#ff7300,#ff7a00,#ff7e00,#ff8600,#ff8d00,#ff9800,#ffa300,#ffae00 99.48%)"></div><div style="top:144.95px;height:4.52px;background:linear-gradient(90deg,#ffa700 0.52%,#ff9800,#ff9100,#ff8600,#ff7e00,#ff7700,#ff7300,#ff6f00,#ff6c00,#ff6800,#ff6800,#ff6800,#ff6c00,#ff6f00,#ff7700,#ff8200,#ff9100,#ffb900,#d1ff26,#9dff5a,#ffcc00,#ff8900,#ff6800,#ff5200,#ff4300,#ff3400,#ff2900,#ff1e00,#ff1300,#f60b00,#ed0400,#e80000,#df0000,#da0000,#d60000,#d60000,#d10000,#d10000,#d60000,#d60000,#da0000,#e40000,#ed0400,#fa0f00,#ff1a00,#ff2900,#ff3400,#ff3b00,#ff3f00,#ff3b00,#ff3400,#ff2900,#ff1a00,#fa0f00,#ed0400,#e40000,#da0000,#d60000,#d60000,#d10000,#d10000,#d60000,#d60000,#da0000,#df0000,#e80000,#ed0400,#f60b00,#ff1300,#ff1e00,#ff2900,#ff3400,#ff4300,#ff5200,#ff6800,#ff8900,#ffcc00,#9dff5a,#d1ff26,#ffb900,#ff9100,#ff8200,#ff7700,#ff6f00,#ff6c00,#ff6800,#ff6800,#ff6800,#ff6c00,#ff6f00,#ff7300,#ff7700,#ff7e00,#ff8600,#ff9100,#ff9800,#ffa700 99.48%)"></div><div style="top:148.87px;height:4.52px;background:linear-gradient(90deg,#ff9f00 0.52%,#ff9400,#ff8900,#ff8200,#ff7a00,#ff7300,#ff6c00,#ff6800,#ff6400,#ff6400,#ff6400,#ff6400,#ff6800,#ff6c00,#ff7300,#ff7a00,#ff8d00,#ffb600,#d4ff23,#a0ff56,#ffc400,#ff8200,#ff6400,#ff4e00,#ff3b00,#ff3000,#ff2200,#ff1600,#fa0f00,#f10800,#e80000,#df0000,#da0000,#d60000,#d10000,#cd0000,#c80000,#c80000,#cd0000,#cd0000,#d10000,#d60000,#e40000,#ed0400,#ff1300,#ff2200,#ff3000,#ff3800,#ff3b00,#ff3800,#ff3000,#ff2200,#ff1300,#ed0400,#e40000,#d60000,#d10000,#cd0000,#cd0000,#c80000,#c80000,#cd0000,#d10000,#d60000,#da0000,#df0000,#e80000,#f10800,#fa0f00,#ff1600,#ff2200,#ff3000,#ff3b00,#ff4e00,#ff6400,#ff8200,#ffc400,#a0ff56,#d4ff23,#ffb600,#ff8d00,#ff7a00,#ff7300,#ff6c00,#ff6800,#ff6400,#ff6400,#ff6400,#ff6400,#ff6800,#ff6c00,#ff7300,#ff7a00,#ff8200,#ff8900,#ff9400,#ff9f00 99.48%)"></div><div style="top:152.78px;height:4.52px;background:linear-gradient(90deg,#ff9800 0.52%,#ff8d00,#ff8200,#ff7a00,#ff7300,#ff6c00,#ff6800,#ff6400,#ff6000,#ff6000,#ff6000,#ff6000,#ff6000,#ff6800,#ff6c00,#ff7700,#ff8900,#ffb200,#d7ff1f,#a4ff53,#ffc100,#ff7e00,#ff6000,#ff4a00,#ff3800,#ff2900,#ff1e00,#ff1300,#f60b00,#e80000,#df0000,#da0000,#d10000,#cd0000,#c80000,#c40000,#c40000,#bf0000,#bf0000,#c40000,#c80000,#cd0000,#d60000,#e40000,#f10800,#ff1a00,#ff2900,#ff3800,#ff3800,#ff3800,#ff2900,#ff1a00,#f10800,#e40000,#d60000,#cd0000,#c80000,#c40000,#bf0000,#bf0000,#c40000,#c40000,#c80000,#cd0000,#d10000,#da0000,#df0000,#e80000,#f60b00,#ff1300,#ff1e00,#ff2900,#ff3800,#ff4a00,#ff6000,#ff7e00,#ffc100,#a4ff53,#d7ff1f,#ffb200,#ff8900,#ff7700,#ff6c00,#ff6800,#ff6000,#ff6000,#ff6000,#ff6000,#ff6000,#ff6400,#ff6800,#ff6c00,#ff7300,#ff7a00,#ff8200,#ff8d00,#ff9800 99.48%)"></div><div style="top:156.70px;height:4.52px;background:linear-gradient(90deg,#ff9400 0.52%,#ff8900,#ff7e00,#ff7700,#ff6f00,#ff6800,#ff6400,#ff6000,#ff5d00,#ff5d00,#ff5d00,#ff5d00,#ff5d00,#ff6400,#ff6800,#ff7300,#ff8600,#ffae00,#dbff1c,#a7ff50,#ffbd00,#ff7a00,#ff5d00,#ff4700,#ff3400,#ff2500,#ff1a00,#fa0f00,#ed0400,#e40000,#da0000,#d10000,#cd0000,#c80000,#bf0000,#bf0000,#bb0000,#bb0000,#bb0000,#bb0000,#bb0000,#c40000,#c80000,#d60000,#e80000,#fa0f00,#ff2500,#ff3400,#ff3400,#ff3400,#ff2500,#fa0f00,#e80000,#d60000,#c80000,#c40000,#bb0000,#bb0000,#bb0000,#bb0000,#bb0000,#bf0000,#bf0000,#c80000,#cd0000,#d10000,#da0000,#e40000,#ed0400,#fa0f00,#ff1a00,#ff2500,#ff3400,#ff4700,#ff5d00,#ff7a00,#ffbd00,#a7ff50,#dbff1c,#ffae00,#ff8600,#ff7300,#ff6800,#ff6400,#ff5d00,#ff5d00,#ff5d00,#ff5d00,#ff5d00,#ff6000,#ff6400,#ff6800,#ff6f00,#ff7700,#ff7e00,#ff8900,#ff9400 99.48%)"></div><div style="top:160.62px;height:4.52px;background:linear-gradient(90deg,#ff8d00 0.52%,#ff8600,#ff7a00,#ff7300,#ff6c00,#ff6400,#ff6000,#ff5d00,#ff5900,#ff5900,#ff5900,#ff5900,#ff5d00,#ff6000,#ff6800,#ff6f00,#ff8200,#ffab00,#deff19,#aaff4d,#ffb900,#ff7700,#ff5900,#ff4300,#ff3000,#ff2200,#ff1600,#f60b00,#e80000,#df0000,#d60000,#cd0000,#c80000,#bf0000,#bb0000,#b60000,#b10000,#b10000,#b10000,#b10000,#b10000,#b60000,#bf0000,#c80000,#da0000,#ed0400,#ff1e00,#ff3000,#ff3400,#ff3000,#ff1e00,#ed0400,#da0000,#c80000,#bf0000,#b60000,#b10000,#b10000,#b10000,#b10000,#b10000,#b60000,#bb0000,#bf0000,#c80000,#cd0000,#d60000,#df0000,#e80000,#f60b00,#ff1600,#ff2200,#ff3000,#ff4300,#ff5900,#ff7700,#ffb900,#aaff4d,#deff19,#ffab00,#ff8200,#ff6f00,#ff6800,#ff6000,#ff5d00,#ff5900,#ff5900,#ff5900,#ff5900,#ff5d00,#ff6000,#ff6400,#ff6c00,#ff7300,#ff7a00,#ff8600,#ff8d00 99.48%)"></div><div style="top:164.54px;height:4.52px;background:linear-gradient(90deg,#ff8900 0.52%,#ff8200,#ff7700,#ff6f00,#ff6800,#ff6000,#ff5d00,#ff5900,#ff5500,#ff5500,#ff5500,#ff5500,#ff5900,#ff5d00,#ff6400,#ff6f00,#ff7e00,#ffa700,#e1ff16,#adff49,#ffb900,#ff7300,#ff5500,#ff3f00,#ff2d00,#ff1e00,#ff1300,#f10800,#e40000,#da0000,#d10000,#c80000,#c40000,#bb0000,#b60000,#b10000,#ad0000,#a80000,#a80000,#a80000,#a80000,#ad0000,#b10000,#bb0000,#c80000,#df0000,#ff1300,#ff2d00,#ff3000,#ff2d00,#ff1300,#df0000,#c80000,#bb0000,#b10000,#ad0000,#a80000,#a80000,#a80000,#a80000,#ad0000,#b10000,#b60000,#bb0000,#c40000,#c80000,#d10000,#da0000,#e40000,#f10800,#ff1300,#ff1e00,#ff2d00,#ff3f00,#ff5500,#ff7300,#ffb900,#adff49,#e1ff16,#ffa700,#ff7e00,#ff6f00,#ff6400,#ff5d00,#ff5900,#ff5500,#ff5500,#ff5500,#ff5500,#ff5900,#ff5d00,#ff6000,#ff6800,#ff6f00,#ff7700,#ff8200,#ff8900 99.48%)"></div><div style="top:168.45px;height:4.52px;background:linear-gradient(90deg,#ff8900 0.52%,#ff7e00,#ff7300,#ff6c00,#ff6400,#ff6000,#ff5900,#ff5500,#ff5500,#ff5200,#ff5200,#ff5200,#ff5500,#ff5900,#ff6000,#ff6c00,#ff7e00,#ffa700,#e4ff13,#adff49,#ffb600,#ff7300,#ff5200,#ff3b00,#ff2d00,#ff1e00,#fa0f00,#ed0400,#e40000,#d60000,#cd0000,#c40000,#bf0000,#b60000,#b10000,#ad0000,#a80000,#a40000,#9f0000,#9f0000,#9f0000,#a40000,#a80000,#ad0000,#bb0000,#d10000,#f10800,#ff2500,#ff3000,#ff2500,#f10800,#d10000,#bb0000,#ad0000,#a80000,#a40000,#9f0000,#9f0000,#9f0000,#a40000,#a80000,#ad0000,#b10000,#b60000,#bf0000,#c40000,#cd0000,#d60000,#e40000,#ed0400,#fa0f00,#ff1e00,#ff2d00,#ff3b00,#ff5200,#ff7300,#ffb600,#adff49,#e4ff13,#ffa700,#ff7e00,#ff6c00,#ff6000,#ff5900,#ff5500,#ff5200,#ff5200,#ff5200,#ff5500,#ff5500,#ff5900,#ff6000,#ff6400,#ff6c00,#ff7300,#ff7e00,#ff8900 99.48%)"></div><div style="top:172.37px;height:4.52px;background:linear-gradient(90deg,#ff8600 0.52%,#ff7a00,#ff7300,#ff6c00,#ff6400,#ff5d00,#ff5900,#ff5500,#ff5200,#ff5200,#ff5200,#ff5200,#ff5500,#ff5900,#ff6000,#ff6c00,#ff7a00,#ffa300,#e4ff13,#b1ff46,#ffb200,#ff6f00,#ff5200,#ff3b00,#ff2900,#ff1a00,#fa0f00,#ed0400,#df0000,#d60000,#c80000,#c40000,#bb0000,#b10000,#ad0000,#a80000,#a40000,#9f0000,#9b0000,#9b0000,#960000,#9b0000,#9b0000,#9f0000,#a80000,#bb0000,#da0000,#ff1e00,#ff3000,#ff1e00,#da0000,#bb0000,#a80000,#9f0000,#9b0000,#9b0000,#960000,#9b0000,#9b0000,#9f0000,#a40000,#a80000,#ad0000,#b10000,#bb0000,#c40000,#c80000,#d60000,#df0000,#ed0400,#fa0f00,#ff1a00,#ff2900,#ff3b00,#ff5200,#ff6f00,#ffb200,#b1ff46,#e4ff13,#ffa300,#ff7a00,#ff6c00,#ff6000,#ff5900,#ff5500,#ff5200,#ff5200,#ff5200,#ff5200,#ff5500,#ff5900,#ff5d00,#ff6400,#ff6c00,#ff7300,#ff7a00,#ff8600 99.48%)"></div><div style="top:176.29px;height:4.52px;background:linear-gradient(90deg,#ff8200 0.52%,#ff7a00,#ff6f00,#ff6800,#ff6000,#ff5d00,#ff5500,#ff5200,#ff5200,#ff4e00,#ff4e00,#ff5200,#ff5200,#ff5500,#ff5d00,#ff6800,#ff7a00,#ffa300,#e4ff13,#b1ff46,#ffb200,#ff6f00,#ff4e00,#ff3800,#ff2900,#ff1a00,#f60b00,#e80000,#df0000,#d10000,#c80000,#bf0000,#b60000,#b10000,#a80000,#a40000,#9f0000,#9b0000,#960000,#920000,#920000,#920000,#920000,#960000,#9b0000,#a80000,#c40000,#fa0f00,#ff2d00,#fa0f00,#c40000,#a80000,#9b0000,#960000,#920000,#920000,#920000,#920000,#960000,#9b0000,#9f0000,#a40000,#a80000,#b10000,#b60000,#bf0000,#c80000,#d10000,#df0000,#e80000,#f60b00,#ff1a00,#ff2900,#ff3800,#ff4e00,#ff6f00,#ffb200,#b1ff46,#e4ff13,#ffa300,#ff7a00,#ff6800,#ff5d00,#ff5500,#ff5200,#ff5200,#ff4e00,#ff4e00,#ff5200,#ff5200,#ff5500,#ff5d00,#ff6000,#ff6800,#ff6f00,#ff7a00,#ff8200 99.48%)"></div><div style="top:180.21px;height:4.52px;background:linear-gradient(90deg,#ff8200 0.52%,#ff7700,#ff6f00,#ff6800,#ff6000,#ff5900,#ff5500,#ff5200,#ff4e00,#ff4e00,#ff4e00,#ff4e00,#ff5200,#ff5500,#ff5d00,#ff6800,#ff7a00,#ffa300,#e7ff0f,#b4ff43,#ffb200,#ff6c00,#ff4e00,#ff3800,#ff2500,#ff1600,#f60b00,#e80000,#da0000,#d10000,#c80000,#bf0000,#b60000,#ad0000,#a80000,#9f0000,#9b0000,#960000,#920000,#8d0000,#8d0000,#890000,#890000,#890000,#8d0000,#920000,#a80000,#da0000,#ff2d00,#da0000,#a80000,#920000,#8d0000,#890000,#890000,#890000,#8d0000,#8d0000,#920000,#960000,#9b0000,#9f0000,#a80000,#ad0000,#b60000,#bf0000,#c80000,#d10000,#da0000,#e80000,#f60b00,#ff1600,#ff2500,#ff3800,#ff4e00,#ff6c00,#ffb200,#b4ff43,#e7ff0f,#ffa300,#ff7a00,#ff6800,#ff5d00,#ff5500,#ff5200,#ff4e00,#ff4e00,#ff4e00,#ff4e00,#ff5200,#ff5500,#ff5900,#ff6000,#ff6800,#ff6f00,#ff7700,#ff8200 99.48%)"></div><div style="top:184.12px;height:4.52px;background:linear-gradient(90deg,#ff8200 0.52%,#ff7700,#ff6f00,#ff6800,#ff6000,#ff5900,#ff5500,#ff5200,#ff4e00,#ff4e00,#ff4e00,#ff4e00,#ff5200,#ff5500,#ff5d00,#ff6800,#ff7700,#ff9f00,#e7ff0f,#b4ff43,#ffb200,#ff6c00,#ff4e00,#ff3800,#ff2500,#ff1600,#f60b00,#e80000,#da0000,#d10000,#c40000,#bb0000,#b10000,#ad0000,#a40000,#9f0000,#9b0000,#960000,#920000,#8d0000,#890000,#840000,#840000,#840000,#800000,#840000,#890000,#a40000,#ff2d00,#a40000,#890000,#840000,#800000,#840000,#840000,#840000,#890000,#8d0000,#920000,#960000,#9b0000,#9f0000,#a40000,#ad0000,#b10000,#bb0000,#c40000,#d10000,#da0000,#e80000,#f60b00,#ff1600,#ff2500,#ff3800,#ff4e00,#ff6c00,#ffb200,#b4ff43,#e7ff0f,#ff9f00,#ff7700,#ff6800,#ff5d00,#ff5500,#ff5200,#ff4e00,#ff4e00,#ff4e00,#ff4e00,#ff5200,#ff5500,#ff5900,#ff6000,#ff6800,#ff6f00,#ff7700,#ff8200 99.48%)"></div><div style="top:188.04px;height:4.52px;background:linear-gradient(90deg,#ff8200 0.52%,#ff7700,#ff6f00,#ff6800,#ff6000,#ff5900,#ff5500,#ff5200,#ff4e00,#ff4e00,#ff4e00,#ff4e00,#ff5200,#ff5500,#ff5d00,#ff6800,#ff7700,#ff9f00,#e7ff0f,#b4ff43,#ffae00,#ff6c00,#ff4e00,#ff3800,#ff2500,#ff1600,#f60b00,#e80000,#da0000,#cd0000,#c40000,#bb0000,#b10000,#ad0000,#a40000,#9f0000,#9b0000,#920000,#8d0000,#8d0000,#890000,#840000,#840000,#800000,#800000,#800000,#800000,#800000,#ff2d00,#800000,#800000,#800000,#800000,#800000,#840000,#840000,#890000,#8d0000,#8d0000,#920000,#9b0000,#9f0000,#a40000,#ad0000,#b10000,#bb0000,#c40000,#cd0000,#da0000,#e80000,#f60b00,#ff1600,#ff2500,#ff3800,#ff4e00,#ff6c00,#ffae00,#b4ff43,#e7ff0f,#ff9f00,#ff7700,#ff6800,#ff5d00,#ff5500,#ff5200,#ff4e00,#ff4e00,#ff4e00,#ff4e00,#ff5200,#ff5500,#ff5900,#ff6000,#ff6800,#ff6f00,#ff7700,#ff8200 99.48%)"></div><div style="top:191.96px;height:4.52px;background:linear-gradient(90deg,#ff8200 0.52%,#ff7700,#ff6f00,#ff6800,#ff6000,#ff5900,#ff5500,#ff5200,#ff4e00,#ff4e00,#ff4e00,#ff4e00,#ff5200,#ff5500,#ff5d00,#ff6800,#ff7700,#ff9f00,#e7ff0f,#b4ff43,#ffb200,#ff6c00,#ff4e00,#ff3800,#ff2500,#ff1600,#f60b00,#e80000,#da0000,#d10000,#c40000,#bb0000,#b10000,#ad0000,#a40000,#9f0000,#9b0000,#960000,#920000,#8d0000,#890000,#840000,#840000,#840000,#800000,#840000,#890000,#a40000,#ff2d00,#a40000,#890000,#840000,#800000,#840000,#840000,#840000,#890000,#8d0000,#920000,#960000,#9b0000,#9f0000,#a40000,#ad0000,#b10000,#bb0000,#c40000,#d10000,#da0000,#e80000,#f60b00,#ff1600,#ff2500,#ff3800,#ff4e00,#ff6c00,#ffb200,#b4ff43,#e7ff0f,#ff9f00,#ff7700,#ff6800,#ff5d00,#ff5500,#ff5200,#ff4e00,#ff4e00,#ff4e00,#ff4e00,#ff5200,#ff5500,#ff5900,#ff6000,#ff6800,#ff6f00,#ff7700,#ff8200 99.48%)"></div><div style="top:195.88px;height:4.52px;background:linear-gradient(90deg,#ff8200 0.52%,#ff7700,#ff6f00,#ff6800,#ff6000,#ff5900,#ff5500,#ff5200,#ff4e00,#ff4e00,#ff4e00,#ff4e00,#ff5200,#ff5500,#ff5d00,#ff6800,#ff7a00,#ffa300,#e7ff0f,#b4ff43,#ffb200,#ff6c00,#ff4e00,#ff3800,#ff2500,#ff1600,#f60b00,#e80000,#da0000,#d10000,#c80000,#bf0000,#b60000,#ad0000,#a80000,#9f0000,#9b0000,#960000,#920000,#8d0000,#8d0000,#890000,#890000,#890000,#8d0000,#920000,#a80000,#da0000,#ff2d00,#da0000,#a80000,#920000,#8d0000,#890000,#890000,#890000,#8d0000,#8d0000,#920000,#960000,#9b0000,#9f0000,#a80000,#ad0000,#b60000,#bf0000,#c80000,#d10000,#da0000,#e80000,#f60b00,#ff1600,#ff2500,#ff3800,#ff4e00,#ff6c00,#ffb200,#b4ff43,#e7ff0f,#ffa300,#ff7a00,#ff6800,#ff5d00,#ff5500,#ff5200,#ff4e00,#ff4e00,#ff4e00,#ff4e00,#ff5200,#ff5500,#ff5900,#ff6000,#ff6800,#ff6f00,#ff7700,#ff8200 99.48%)"></div><div style="top:199.79px;height:4.52px;background:linear-gradient(90deg,#ff8200 0.52%,#ff7a00,#ff6f00,#ff6800,#ff6000,#ff5d00,#ff5500,#ff5200,#ff5200,#ff4e00,#ff4e00,#ff5200,#ff5200,#ff5500,#ff5d00,#ff6800,#ff7a00,#ffa300,#e4ff13,#b1ff46,#ffb200,#ff6f00,#ff4e00,#ff3800,#ff2900,#ff1a00,#f60b00,#e80000,#df0000,#d10000,#c80000,#bf0000,#b60000,#b10000,#a80000,#a40000,#9f0000,#9b0000,#960000,#920000,#920000,#920000,#920000,#960000,#9b0000,#a80000,#c40000,#fa0f00,#ff2d00,#fa0f00,#c40000,#a80000,#9b0000,#960000,#920000,#920000,#920000,#920000,#960000,#9b0000,#9f0000,#a40000,#a80000,#b10000,#b60000,#bf0000,#c80000,#d10000,#df0000,#e80000,#f60b00,#ff1a00,#ff2900,#ff3800,#ff4e00,#ff6f00,#ffb200,#b1ff46,#e4ff13,#ffa300,#ff7a00,#ff6800,#ff5d00,#ff5500,#ff5200,#ff5200,#ff4e00,#ff4e00,#ff5200,#ff5200,#ff5500,#ff5d00,#ff6000,#ff6800,#ff6f00,#ff7a00,#ff8200 99.48%)"></div><div style="top:203.71px;height:4.52px;background:linear-gradient(90deg,#ff8600 0.52%,#ff7a00,#ff7300,#ff6c00,#ff6400,#ff5d00,#ff5900,#ff5500,#ff5200,#ff5200,#ff5200,#ff5200,#ff5500,#ff5900,#ff6000,#ff6c00,#ff7a00,#ffa300,#e4ff13,#b1ff46,#ffb200,#ff6f00,#ff5200,#ff3b00,#ff2900,#ff1a00,#fa0f00,#ed0400,#df0000,#d60000,#c80000,#c40000,#bb0000,#b10000,#ad0000,#a80000,#a40000,#9f0000,#9b0000,#9b0000,#960000,#9b0000,#9b0000,#9f0000,#a80000,#bb0000,#da0000,#ff1e00,#ff3000,#ff1e00,#da0000,#bb0000,#a80000,#9f0000,#9b0000,#9b0000,#960000,#9b0000,#9b0000,#9f0000,#a40000,#a80000,#ad0000,#b10000,#bb0000,#c40000,#c80000,#d60000,#df0000,#ed0400,#fa0f00,#ff1a00,#ff2900,#ff3b00,#ff5200,#ff6f00,#ffb200,#b1ff46,#e4ff13,#ffa300,#ff7a00,#ff6c00,#ff6000,#ff5900,#ff5500,#ff5200,#ff5200,#ff5200,#ff5200,#ff5500,#ff5900,#ff5d00,#ff6400,#ff6c00,#ff7300,#ff7a00,#ff8600 99.48%)"></div><div style="top:207.63px;height:4.52px;background:linear-gradient(90deg,#ff8900 0.52%,#ff7e00,#ff7300,#ff6c00,#ff6400,#ff6000,#ff5900,#ff5500,#ff5500,#ff5200,#ff5200,#ff5200,#ff5500,#ff5900,#ff6000,#ff6c00,#ff7e00,#ffa700,#e4ff13,#adff49,#ffb600,#ff7300,#ff5200,#ff3b00,#ff2d00,#ff1e00,#fa0f00,#ed0400,#e40000,#d60000,#cd0000,#c40000,#bf0000,#b60000,#b10000,#ad0000,#a80000,#a40000,#9f0000,#9f0000,#9f0000,#a40000,#a80000,#ad0000,#bb0000,#d10000,#f10800,#ff2500,#ff3000,#ff2500,#f10800,#d10000,#bb0000,#ad0000,#a80000,#a40000,#9f0000,#9f0000,#9f0000,#a40000,#a80000,#ad0000,#b10000,#b60000,#bf0000,#c40000,#cd0000,#d60000,#e40000,#ed0400,#fa0f00,#ff1e00,#ff2d00,#ff3b00,#ff5200,#ff7300,#ffb600,#adff49,#e4ff13,#ffa700,#ff7e00,#ff6c00,#ff6000,#ff5900,#ff5500,#ff5200,#ff5200,#ff5200,#ff5500,#ff5500,#ff5900,#ff6000,#ff6400,#ff6c00,#ff7300,#ff7e00,#ff8900 99.48%)"></div><div style="top:211.55px;height:4.52px;background:linear-gradient(90deg,#ff8900 0.52%,#ff8200,#ff7700,#ff6f00,#ff6800,#ff6000,#ff5d00,#ff5900,#ff5500,#ff5500,#ff5500,#ff5500,#ff5900,#ff5d00,#ff6400,#ff6f00,#ff7e00,#ffa700,#e1ff16,#adff49,#ffb900,#ff7300,#ff5500,#ff3f00,#ff2d00,#ff1e00,#ff1300,#f10800,#e40000,#da0000,#d10000,#c80000,#c40000,#bb0000,#b60000,#b10000,#ad0000,#a80000,#a80000,#a80000,#a80000,#ad0000,#b10000,#bb0000,#c80000,#df0000,#ff1300,#ff2d00,#ff3000,#ff2d00,#ff1300,#df0000,#c80000,#bb0000,#b10000,#ad0000,#a80000,#a80000,#a80000,#a80000,#ad0000,#b10000,#b60000,#bb0000,#c40000,#c80000,#d10000,#da0000,#e40000,#f10800,#ff1300,#ff1e00,#ff2d00,#ff3f00,#ff5500,#ff7300,#ffb900,#adff49,#e1ff16,#ffa700,#ff7e00,#ff6f00,#ff6400,#ff5d00,#ff5900,#ff5500,#ff5500,#ff5500,#ff5500,#ff5900,#ff5d00,#ff6000,#ff6800,#ff6f00,#ff7700,#ff8200,#ff8900 99.48%)"></div><div style="top:215.46px;height:4.52px;background:linear-gradient(90deg,#ff8d00 0.52%,#ff8600,#ff7a00,#ff7300,#ff6c00,#ff6400,#ff6000,#ff5d00,#ff5900,#ff5900,#ff5900,#ff5900,#ff5d00,#ff6000,#ff6800,#ff6f00,#ff8200,#ffab00,#deff19,#aaff4d,#ffb900,#ff7700,#ff5900,#ff4300,#ff3000,#ff2200,#ff1600,#f60b00,#e80000,#df0000,#d60000,#cd0000,#c80000,#bf0000,#bb0000,#b60000,#b10000,#b10000,#b10000,#b10000,#b10000,#b60000,#bf0000,#c80000,#da0000,#ed0400,#ff1e00,#ff3000,#ff3400,#ff3000,#ff1e00,#ed0400,#da0000,#c80000,#bf0000,#b60000,#b10000,#b10000,#b10000,#b10000,#b10000,#b60000,#bb0000,#bf0000,#c80000,#cd0000,#d60000,#df0000,#e80000,#f60b00,#ff1600,#ff2200,#ff3000,#ff4300,#ff5900,#ff7700,#ffb900,#aaff4d,#deff19,#ffab00,#ff8200,#ff6f00,#ff6800,#ff6000,#ff5d00,#ff5900,#ff5900,#ff5900,#ff5900,#ff5d00,#ff6000,#ff6400,#ff6c00,#ff7300,#ff7a00,#ff8600,#ff8d00 99.48%)"></div><div style="top:219.38px;height:4.52px;background:linear-gradient(90deg,#ff9400 0.52%,#ff8900,#ff7e00,#ff7700,#ff6f00,#ff6800,#ff6400,#ff6000,#ff5d00,#ff5d00,#ff5d00,#ff5d00,#ff5d00,#ff6400,#ff6800,#ff7300,#ff8600,#ffae00,#dbff1c,#a7ff50,#ffbd00,#ff7a00,#ff5d00,#ff4700,#ff3400,#ff2500,#ff1a00,#fa0f00,#ed0400,#e40000,#da0000,#d10000,#cd0000,#c80000,#bf0000,#bf0000,#bb0000,#bb0000,#bb0000,#bb0000,#bb0000,#c40000,#c80000,#d60000,#e80000,#fa0f00,#ff2500,#ff3400,#ff3400,#ff3400,#ff2500,#fa0f00,#e80000,#d60000,#c80000,#c40000,#bb0000,#bb0000,#bb0000,#bb0000,#bb0000,#bf0000,#bf0000,#c80000,#cd0000,#d10000,#da0000,#e40000,#ed0400,#fa0f00,#ff1a00,#ff2500,#ff3400,#ff4700,#ff5d00,#ff7a00,#ffbd00,#a7ff50,#dbff1c,#ffae00,#ff8600,#ff7300,#ff6800,#ff6400,#ff5d00,#ff5d00,#ff5d00,#ff5d00,#ff5d00,#ff6000,#ff6400,#ff6800,#ff6f00,#ff7700,#ff7e00,#ff8900,#ff9400 99.48%)"></div><div style="top:223.30px;height:4.52px;background:linear-gradient(90deg,#ff9800 0.52%,#ff8d00,#ff8200,#ff7a00,#ff7300,#ff6c00,#ff6800,#ff6400,#ff6000,#ff6000,#ff6000,#ff6000,#ff6000,#ff6800,#ff6c00,#ff7700,#ff8900,#ffb200,#d7ff1f,#a4ff53,#ffc100,#ff7e00,#ff6000,#ff4a00,#ff3800,#ff2900,#ff1e00,#ff1300,#f60b00,#e80000,#df0000,#da0000,#d10000,#cd0000,#c80000,#c40000,#c40000,#bf0000,#bf0000,#c40000,#c80000,#cd0000,#d60000,#e40000,#f10800,#ff1a00,#ff2900,#ff3800,#ff3800,#ff3800,#ff2900,#ff1a00,#f10800,#e40000,#d60000,#cd0000,#c80000,#c40000,#bf0000,#bf0000,#c40000,#c40000,#c80000,#cd0000,#d10000,#da0000,#df0000,#e80000,#f60b00,#ff1300,#ff1e00,#ff2900,#ff3800,#ff4a00,#ff6000,#ff7e00,#ffc100,#a4ff53,#d7ff1f,#ffb200,#ff8900,#ff7700,#ff6c00,#ff6800,#ff6000,#ff6000,#ff6000,#ff6000,#ff6000,#ff6400,#ff6800,#ff6c00,#ff7300,#ff7a00,#ff8200,#ff8d00,#ff9800 99.48%)"></div><div style="top:227.22px;height:4.52px;background:linear-gradient(90deg,#ff9f00 0.52%,#ff9400,#ff8900,#ff8200,#ff7a00,#ff7300,#ff6c00,#ff6800,#ff6400,#ff6400,#ff6400,#ff6400,#ff6800,#ff6c00,#ff7300,#ff7a00,#ff8d00,#ffb600,#d4ff23,#a0ff56,#ffc400,#ff8200,#ff6400,#ff4e00,#ff3b00,#ff3000,#ff2200,#ff1600,#fa0f00,#f10800,#e80000,#df0000,#da0000,#d60000,#d10000,#cd0000,#c80000,#c80000,#cd0000,#cd0000,#d10000,#d60000,#e40000,#ed0400,#ff1300,#ff2200,#ff3000,#ff3800,#ff3b00,#ff3800,#ff3000,#ff2200,#ff1300,#ed0400,#e40000,#d60000,#d10000,#cd0000,#cd0000,#c80000,#c80000,#cd0000,#d10000,#d60000,#da0000,#df0000,#e80000,#f10800,#fa0f00,#ff1600,#ff2200,#ff3000,#ff3b00,#ff4e00,#ff6400,#ff8200,#ffc400,#a0ff56,#d4ff23,#ffb600,#ff8d00,#ff7a00,#ff7300,#ff6c00,#ff6800,#ff6400,#ff6400,#ff6400,#ff6400,#ff6800,#ff6c00,#ff7300,#ff7a00,#ff8200,#ff8900,#ff9400,#ff9f00 99.48%)"></div><div style="top:231.13px;height:4.52px;background:linear-gradient(90deg,#ffa700 0.52%,#ff9800,#ff9100,#ff8600,#ff7e00,#ff7700,#ff7300,#ff6f00,#ff6c00,#ff6800,#ff6800,#ff6800,#ff6c00,#ff6f00,#ff7700,#ff8200,#ff9100,#ffb900,#d1ff26,#9dff5a,#ffcc00,#ff8900,#ff6800,#ff5200,#ff4300,#ff3400,#ff2900,#ff1e00,#ff1300,#f60b00,#ed0400,#e80000,#df0000,#da0000,#d60000,#d60000,#d10000,#d10000,#d60000,#d60000,#da0000,#e40000,#ed0400,#fa0f00,#ff1a00,#ff2900,#ff3400,#ff3b00,#ff3f00,#ff3b00,#ff3400,#ff2900,#ff1a00,#fa0f00,#ed0400,#e40000,#da0000,#d60000,#d60000,#d10000,#d10000,#d60000,#d60000,#da0000,#df0000,#e80000,#ed0400,#f60b00,#ff1300,#ff1e00,#ff2900,#ff3400,#ff4300,#ff5200,#ff6800,#ff8900,#ffcc00,#9dff5a,#d1ff26,#ffb900,#ff9100,#ff8200,#ff7700,#ff6f00,#ff6c00,#ff6800,#ff6800,#ff6800,#ff6c00,#ff6f00,#ff7300,#ff7700,#ff7e00,#ff8600,#ff9100,#ff9800,#ffa700 99.48%)"></div><div style="top:235.05px;height:4.52px;background:linear-gradient(90deg,#ffae00 0.52%,#ffa300,#ff9800,#ff8d00,#ff8600,#ff7e00,#ff7a00,#ff7300,#ff6f00,#ff6f00,#ff6f00,#ff6f00,#ff6f00,#ff7300,#ff7a00,#ff8600,#ff9800,#ffc100,#ceff29,#97ff60,#ffd000,#ff8d00,#ff6f00,#ff5900,#ff4700,#ff3800,#ff2d00,#ff2200,#ff1a00,#ff1300,#f60b00,#ed0400,#e80000,#e40000,#df0000,#df0000,#da0000,#da0000,#df0000,#e40000,#e80000,#ed0400,#fa0f00,#ff1600,#ff2500,#ff3000,#ff3b00,#ff3f00,#ff3f00,#ff3f00,#ff3b00,#ff3000,#ff2500,#ff1600,#fa0f00,#ed0400,#e80000,#e40000,#df0000,#da0000,#da0000,#df0000,#df0000,#e40000,#e80000,#ed0400,#f60b00,#ff1300,#ff1a00,#ff2200,#ff2d00,#ff3800,#ff4700,#ff5900,#ff6f00,#ff8d00,#ffd000,#97ff60,#ceff29,#ffc100,#ff9800,#ff8600,#ff7a00,#ff7300,#ff6f00,#ff6f00,#ff6f00,#ff6f00,#ff6f00,#ff7300,#ff7a00,#ff7e00,#ff8600,#ff8d00,#ff9800,#ffa300,#ffae00 99.48%)"></div><div style="top:238.97px;height:4.52px;background:linear-gradient(90deg,#ffb600 0.52%,#ffab00,#ff9f00,#ff9400,#ff8d00,#ff8600,#ff7e00,#ff7a00,#ff7700,#ff7700,#ff7300,#ff7300,#ff7700,#ff7a00,#ff8200,#ff8d00,#ff9c00,#ffc400,#c7ff30,#94ff63,#ffd700,#ff9100,#ff7300,#ff5d00,#ff4e00,#ff3f00,#ff3400,#ff2900,#ff2200,#ff1600,#ff1300,#f60b00,#f10800,#ed0400,#e80000,#e80000,#e80000,#e80000,#e80000,#ed0400,#f10800,#fa0f00,#ff1600,#ff2200,#ff2d00,#ff3800,#ff3f00,#ff4300,#ff4300,#ff4300,#ff3f00,#ff3800,#ff2d00,#ff2200,#ff1600,#fa0f00,#f10800,#ed0400,#e80000,#e80000,#e80000,#e80000,#e80000,#ed0400,#f10800,#f60b00,#ff1300,#ff1600,#ff2200,#ff2900,#ff3400,#ff3f00,#ff4e00,#ff5d00,#ff7300,#ff9100,#ffd700,#94ff63,#c7ff30,#ffc400,#ff9c00,#ff8d00,#ff8200,#ff7a00,#ff7700,#ff7300,#ff7300,#ff7700,#ff7700,#ff7a00,#ff7e00,#ff8600,#ff8d00,#ff9400,#ff9f00,#ffab00,#ffb600 99.48%)"></div><div style="top:242.89px;height:4.52px;background:linear-gradient(90deg,#ffc400 0.52%,#ffb600,#ffab00,#ff9f00,#ff9400,#ff8d00,#ff8900,#ff8200,#ff7e00,#ff7e00,#ff7a00,#ff7a00,#ff7e00,#ff8200,#ff8900,#ff9100,#ffa300,#ffcc00,#c1ff36,#8dff6a,#ffdb00,#ff9800,#ff7a00,#ff6400,#ff5200,#ff4700,#ff3800,#ff3000,#ff2500,#ff1e00,#ff1a00,#ff1300,#fa0f00,#f60b00,#f10800,#f10800,#f10800,#f10800,#f10800,#f60b00,#ff1300,#ff1600,#ff1e00,#ff2900,#ff3400,#ff3f00,#ff4700,#ff4700,#ff4a00,#ff4700,#ff4700,#ff3f00,#ff3400,#ff2900,#ff1e00,#ff1600,#ff1300,#f60b00,#f10800,#f10800,#f10800,#f10800,#f10800,#f60b00,#fa0f00,#ff1300,#ff1a00,#ff1e00,#ff2500,#ff3000,#ff3800,#ff4700,#ff5200,#ff6400,#ff7a00,#ff9800,#ffdb00,#8dff6a,#c1ff36,#ffcc00,#ffa300,#ff9100,#ff8900,#ff8200,#ff7e00,#ff7a00,#ff7a00,#ff7e00,#ff7e00,#ff8200,#ff8900,#ff8d00,#ff9400,#ff9f00,#ffab00,#ffb600,#ffc400 99.48%)"></div><div style="top:246.80px;height:4.52px;background:linear-gradient(90deg,#ffd000 0.52%,#ffc100,#ffb600,#ffab00,#ff9f00,#ff9800,#ff9100,#ff8d00,#ff8600,#ff8600,#ff8200,#ff8200,#ff8600,#ff8900,#ff9100,#ff9800,#ffab00,#ffd300,#baff3c,#87ff70,#ffe200,#ff9f00,#ff8200,#ff6c00,#ff5900,#ff4e00,#ff3f00,#ff3800,#ff2d00,#ff2500,#ff2200,#ff1a00,#ff1600,#ff1300,#fa0f00,#fa0f00,#fa0f00,#fa0f00,#ff1300,#ff1600,#ff1a00,#ff2200,#ff2900,#ff3000,#ff3b00,#ff4300,#ff4a00,#ff4e00,#ff4e00,#ff4e00,#ff4a00,#ff4300,#ff3b00,#ff3000,#ff2900,#ff2200,#ff1a00,#ff1600,#ff1300,#fa0f00,#fa0f00,#fa0f00,#fa0f00,#ff1300,#ff1600,#ff1a00,#ff2200,#ff2500,#ff2d00,#ff3800,#ff3f00,#ff4e00,#ff5900,#ff6c00,#ff8200,#ff9f00,#ffe200,#87ff70,#baff3c,#ffd300,#ffab00,#ff9800,#ff9100,#ff8900,#ff8600,#ff8200,#ff8200,#ff8600,#ff8600,#ff8d00,#ff9100,#ff9800,#ff9f00,#ffab00,#ffb600,#ffc100,#ffd000 99.48%)"></div><div style="top:250.72px;height:4.52px;background:linear-gradient(90deg,#ffe200 0.52%,#ffd000,#ffc400,#ffb600,#ffab00,#ffa300,#ff9c00,#ff9400,#ff9100,#ff8d00,#ff8d00,#ff8d00,#ff8d00,#ff9100,#ff9800,#ffa300,#ffb200,#ffdb00,#b4ff43,#80ff77,#ffea00,#ffa700,#ff8900,#ff7300,#ff6000,#ff5500,#ff4700,#ff3f00,#ff3400,#ff2d00,#ff2900,#ff2200,#ff1e00,#ff1a00,#ff1a00,#ff1600,#ff1600,#ff1a00,#ff1a00,#ff1e00,#ff2500,#ff2900,#ff3000,#ff3b00,#ff4300,#ff4a00,#ff4e00,#ff5200,#ff5200,#ff5200,#ff4e00,#ff4a00,#ff4300,#ff3b00,#ff3000,#ff2900,#ff2500,#ff1e00,#ff1a00,#ff1a00,#ff1600,#ff1600,#ff1a00,#ff1a00,#ff1e00,#ff2200,#ff2900,#ff2d00,#ff3400,#ff3f00,#ff4700,#ff5500,#ff6000,#ff7300,#ff8900,#ffa700,#ffea00,#80ff77,#b4ff43,#ffdb00,#ffb200,#ffa300,#ff9800,#ff9100,#ff8d00,#ff8d00,#ff8d00,#ff8d00,#ff9100,#ff9400,#ff9c00,#ffa300,#ffab00,#ffb600,#ffc400,#ffd000,#ffe200 99.48%)"></div><div style="top:254.64px;height:4.52px;background:linear-gradient(90deg,#f1fc06 0.52%,#ffe600,#ffd300,#ffc400,#ffb900,#ffae00,#ffa700,#ff9f00,#ff9c00,#ff9800,#ff9400,#ff9400,#ff9800,#ff9c00,#ff9f00,#ffab00,#ffb900,#ffe200,#adff49,#7aff7d,#fbf100,#ffae00,#ff9100,#ff7a00,#ff6c00,#ff5d00,#ff5200,#ff4700,#ff3f00,#ff3800,#ff3000,#ff2d00,#ff2900,#ff2500,#ff2200,#ff2200,#ff2200,#ff2200,#ff2500,#ff2900,#ff2d00,#ff3400,#ff3b00,#ff4300,#ff4a00,#ff5200,#ff5500,#ff5500,#ff5900,#ff5500,#ff5500,#ff5200,#ff4a00,#ff4300,#ff3b00,#ff3400,#ff2d00,#ff2900,#ff2500,#ff2200,#ff2200,#ff2200,#ff2200,#ff2500,#ff2900,#ff2d00,#ff3000,#ff3800,#ff3f00,#ff4700,#ff5200,#ff5d00,#ff6c00,#ff7a00,#ff9100,#ffae00,#fbf100,#7aff7d,#adff49,#ffe200,#ffb900,#ffab00,#ff9f00,#ff9c00,#ff9800,#ff9400,#ff9400,#ff9800,#ff9c00,#ff9f00,#ffa700,#ffae00,#ffb900,#ffc400,#ffd300,#ffe600,#f1fc06 99.48%)"></div><div style="top:258.56px;height:4.52px;background:linear-gradient(90deg,#c4ff33 0.52%,#e7ff0f,#feed00,#ffdb00,#ffcc00,#ffc100,#ffb600,#ffae00,#ffab00,#ffa300,#ffa300,#ff9f00,#ffa300,#ffa300,#ffab00,#ffb600,#ffc400,#feed00,#a7ff50,#70ff87,#f1fc06,#ffb900,#ff9800,#ff8600,#ff7300,#ff6400,#ff5900,#ff4e00,#ff4700,#ff3f00,#ff3800,#ff3400,#ff3000,#ff2d00,#ff2d00,#ff2900,#ff2d00,#ff2d00,#ff2d00,#ff3000,#ff3800,#ff3b00,#ff4300,#ff4a00,#ff5200,#ff5900,#ff5d00,#ff5d00,#ff5d00,#ff5d00,#ff5d00,#ff5900,#ff5200,#ff4a00,#ff4300,#ff3b00,#ff3800,#ff3000,#ff2d00,#ff2d00,#ff2d00,#ff2900,#ff2d00,#ff2d00,#ff3000,#ff3400,#ff3800,#ff3f00,#ff4700,#ff4e00,#ff5900,#ff6400,#ff7300,#ff8600,#ff9800,#ffb900,#f1fc06,#70ff87,#a7ff50,#feed00,#ffc400,#ffb600,#ffab00,#ffa300,#ffa300,#ff9f00,#ffa300,#ffa300,#ffab00,#ffae00,#ffb600,#ffc100,#ffcc00,#ffdb00,#feed00,#e7ff0f,#c4ff33 99.48%)"></div><div style="top:262.47px;height:4.52px;background:linear-gradient(90deg,#6dff8a 0.52%,#adff49,#d7ff1f,#f4f802,#ffe200,#ffd300,#ffc800,#ffc100,#ffb900,#ffb200,#ffae00,#ffae00,#ffae00,#ffb200,#ffb600,#ffc100,#ffd000,#f4f802,#9dff5a,#6aff8d,#e7ff0f,#ffc100,#ffa300,#ff8d00,#ff7e00,#ff6f00,#ff6400,#ff5900,#ff5200,#ff4a00,#ff4300,#ff3f00,#ff3b00,#ff3800,#ff3400,#ff3400,#ff3400,#ff3800,#ff3800,#ff3b00,#ff3f00,#ff4700,#ff4e00,#ff5500,#ff5900,#ff6000,#ff6400,#ff6400,#ff6400,#ff6400,#ff6400,#ff6000,#ff5900,#ff5500,#ff4e00,#ff4700,#ff3f00,#ff3b00,#ff3800,#ff3800,#ff3400,#ff3400,#ff3400,#ff3800,#ff3b00,#ff3f00,#ff4300,#ff4a00,#ff5200,#ff5900,#ff6400,#ff6f00,#ff7e00,#ff8d00,#ffa300,#ffc100,#e7ff0f,#6aff8d,#9dff5a,#f4f802,#ffd000,#ffc100,#ffb600,#ffb200,#ffae00,#ffae00,#ffae00,#ffb200,#ffb900,#ffc100,#ffc800,#ffd300,#ffe200,#f4f802,#d7ff1f,#adff49,#6dff8a 99.48%)"></div><div style="top:266.39px;height:4.52px;background:linear-gradient(90deg,#56ffa0 0.52%,#26ffd1,#8aff6d,#beff39,#e1ff16,#fbf100,#ffe200,#ffd300,#ffcc00,#ffc400,#ffc100,#ffbd00,#ffbd00,#ffbd00,#ffc400,#ffcc00,#ffdb00,#ebff0c,#94ff63,#60ff97,#deff19,#ffcc00,#ffae00,#ff9800,#ff8900,#ff7a00,#ff6f00,#ff6400,#ff5d00,#ff5500,#ff4e00,#ff4a00,#ff4700,#ff4300,#ff3f00,#ff3f00,#ff3f00,#ff4300,#ff4300,#ff4700,#ff4a00,#ff5200,#ff5500,#ff5d00,#ff6400,#ff6800,#ff6c00,#ff6c00,#ff6c00,#ff6c00,#ff6c00,#ff6800,#ff6400,#ff5d00,#ff5500,#ff5200,#ff4a00,#ff4700,#ff4300,#ff4300,#ff3f00,#ff3f00,#ff3f00,#ff4300,#ff4700,#ff4a00,#ff4e00,#ff5500,#ff5d00,#ff6400,#ff6f00,#ff7a00,#ff8900,#ff9800,#ffae00,#ffcc00,#deff19,#60ff97,#94ff63,#ebff0c,#ffdb00,#ffcc00,#ffc400,#ffbd00,#ffbd00,#ffbd00,#ffc100,#ffc400,#ffcc00,#ffd300,#ffe200,#fbf100,#e1ff16,#beff39,#8aff6d,#26ffd1,#56ffa0 99.48%)"></div><div style="top:270.31px;height:4.52px;background:linear-gradient(90deg,#b4ff43 0.52%,#8aff6d,#40ffb7,#49ffad,#97ff60,#c4ff33,#e4ff13,#f8f500,#ffe600,#ffdb00,#ffd300,#ffd000,#ffcc00,#ffd000,#ffd300,#ffdb00,#ffea00,#deff19,#87ff70,#53ffa4,#d4ff23,#ffdb00,#ffb900,#ffa300,#ff9400,#ff8600,#ff7a00,#ff6f00,#ff6800,#ff6000,#ff5900,#ff5500,#ff5200,#ff4e00,#ff4a00,#ff4a00,#ff4a00,#ff4e00,#ff4e00,#ff5200,#ff5500,#ff5d00,#ff6000,#ff6800,#ff6c00,#ff6f00,#ff7300,#ff7300,#ff7300,#ff7300,#ff7300,#ff6f00,#ff6c00,#ff6800,#ff6000,#ff5d00,#ff5500,#ff5200,#ff4e00,#ff4e00,#ff4a00,#ff4a00,#ff4a00,#ff4e00,#ff5200,#ff5500,#ff5900,#ff6000,#ff6800,#ff6f00,#ff7a00,#ff8600,#ff9400,#ffa300,#ffb900,#ffdb00,#d4ff23,#53ffa4,#87ff70,#deff19,#ffea00,#ffdb00,#ffd300,#ffd000,#ffcc00,#ffd000,#ffd300,#ffdb00,#ffe600,#f8f500,#e4ff13,#c4ff33,#97ff60,#49ffad,#40ffb7,#8aff6d,#b4ff43 99.48%)"></div><div style="top:274.23px;height:4.52px;background:linear-gradient(90deg,#e4ff13 0.52%,#d1ff26,#b4ff43,#87ff70,#36ffc1,#50ffa7,#97ff60,#c1ff36,#deff19,#f1fc06,#fbf100,#ffe600,#ffe200,#ffe200,#ffe600,#feed00,#f1fc06,#d1ff26,#7aff7d,#46ffb1,#c7ff30,#ffea00,#ffc800,#ffb200,#ff9f00,#ff9100,#ff8600,#ff7a00,#ff7300,#ff6c00,#ff6400,#ff6000,#ff5d00,#ff5900,#ff5900,#ff5900,#ff5900,#ff5900,#ff5900,#ff5d00,#ff6000,#ff6800,#ff6c00,#ff7300,#ff7700,#ff7a00,#ff7a00,#ff7a00,#ff7a00,#ff7a00,#ff7a00,#ff7a00,#ff7700,#ff7300,#ff6c00,#ff6800,#ff6000,#ff5d00,#ff5900,#ff5900,#ff5900,#ff5900,#ff5900,#ff5900,#ff5d00,#ff6000,#ff6400,#ff6c00,#ff7300,#ff7a00,#ff8600,#ff9100,#ff9f00,#ffb200,#ffc800,#ffea00,#c7ff30,#46ffb1,#7aff7d,#d1ff26,#f1fc06,#feed00,#ffe600,#ffe200,#ffe200,#ffe600,#fbf100,#f1fc06,#deff19,#c1ff36,#97ff60,#50ffa7,#36ffc1,#87ff70,#b4ff43,#d1ff26,#e4ff13 99.48%)"></div><div style="top:278.14px;height:4.52px;background:linear-gradient(90deg,#fbf100 0.52%,#f1fc06,#e7ff0f,#d4ff23,#b4ff43,#8aff6d,#40ffb7,#3cffba,#87ff70,#b1ff46,#ceff29,#e1ff16,#ebff0c,#f1fc06,#f1fc06,#ebff0c,#e1ff16,#c1ff36,#6aff8d,#36ffc1,#baff3c,#f4f802,#ffd700,#ffc100,#ffae00,#ff9f00,#ff9400,#ff8900,#ff8200,#ff7a00,#ff7300,#ff6f00,#ff6c00,#ff6800,#ff6400,#ff6400,#ff6400,#ff6400,#ff6800,#ff6c00,#ff6f00,#ff7300,#ff7700,#ff7e00,#ff8200,#ff8200,#ff8600,#ff8600,#ff8600,#ff8600,#ff8600,#ff8200,#ff8200,#ff7e00,#ff7700,#ff7300,#ff6f00,#ff6c00,#ff6800,#ff6400,#ff6400,#ff6400,#ff6400,#ff6800,#ff6c00,#ff6f00,#ff7300,#ff7a00,#ff8200,#ff8900,#ff9400,#ff9f00,#ffae00,#ffc100,#ffd700,#f4f802,#baff3c,#36ffc1,#6aff8d,#c1ff36,#e1ff16,#ebff0c,#f1fc06,#f1fc06,#ebff0c,#e1ff16,#ceff29,#b1ff46,#87ff70,#3cffba,#40ffb7,#8aff6d,#b4ff43,#d4ff23,#e7ff0f,#f1fc06,#fbf100 99.48%)"></div><div style="top:282.06px;height:4.52px;background:linear-gradient(90deg,#ffe200 0.52%,#ffe600,#feed00,#f8f500,#ebff0c,#d7ff1f,#baff3c,#94ff63,#5aff9d,#00d4ff,#6aff8d,#94ff63,#b1ff46,#c4ff33,#ceff29,#d1ff26,#c7ff30,#aaff4d,#56ffa0,#26ffd1,#a7ff50,#e4ff13,#ffea00,#ffd300,#ffc100,#ffb200,#ffa700,#ff9c00,#ff9100,#ff8900,#ff8200,#ff7e00,#ff7a00,#ff7700,#ff7300,#ff7300,#ff7300,#ff7300,#ff7700,#ff7a00,#ff7e00,#ff8200,#ff8600,#ff8900,#ff8d00,#ff8d00,#ff9100,#ff9100,#ff9100,#ff9100,#ff9100,#ff8d00,#ff8d00,#ff8900,#ff8600,#ff8200,#ff7e00,#ff7a00,#ff7700,#ff7300,#ff7300,#ff7300,#ff7300,#ff7700,#ff7a00,#ff7e00,#ff8200,#ff8900,#ff9100,#ff9c00,#ffa700,#ffb200,#ffc100,#ffd300,#ffea00,#e4ff13,#a7ff50,#26ffd1,#56ffa0,#aaff4d,#c7ff30,#d1ff26,#ceff29,#c4ff33,#b1ff46,#94ff63,#6aff8d,#00d4ff,#5aff9d,#94ff63,#baff3c,#d7ff1f,#ebff0c,#f8f500,#feed00,#ffe600,#ffe200 99.48%)"></div><div style="top:285.98px;height:4.52px;background:linear-gradient(90deg,#ffd700 0.52%,#ffdb00,#ffde00,#ffe200,#ffea00,#fbf100,#eeff09,#dbff1c,#c1ff36,#a0ff56,#73ff83,#1fffd7,#2cffca,#66ff90,#87ff70,#97ff60,#9aff5d,#87ff70,#36ffc1,#09f0ee,#90ff66,#ceff29,#ebff0c,#ffea00,#ffd700,#ffc800,#ffb900,#ffae00,#ffa300,#ff9c00,#ff9400,#ff9100,#ff8d00,#ff8900,#ff8600,#ff8600,#ff8600,#ff8600,#ff8600,#ff8900,#ff8d00,#ff9100,#ff9400,#ff9800,#ff9800,#ff9c00,#ff9c00,#ff9c00,#ff9c00,#ff9c00,#ff9c00,#ff9c00,#ff9800,#ff9800,#ff9400,#ff9100,#ff8d00,#ff8900,#ff8600,#ff8600,#ff8600,#ff8600,#ff8600,#ff8900,#ff8d00,#ff9100,#ff9400,#ff9c00,#ffa300,#ffae00,#ffb900,#ffc800,#ffd700,#ffea00,#ebff0c,#ceff29,#90ff66,#09f0ee,#36ffc1,#87ff70,#9aff5d,#97ff60,#87ff70,#66ff90,#2cffca,#1fffd7,#73ff83,#a0ff56,#c1ff36,#dbff1c,#eeff09,#fbf100,#ffea00,#ffe200,#ffde00,#ffdb00,#ffd700 99.48%)"></div><div style="top:289.90px;height:4.52px;background:linear-gradient(90deg,#ffd000 0.52%,#ffd000,#ffd300,#ffd300,#ffd700,#ffde00,#ffe600,#fbf100,#f1fc06,#deff19,#caff2c,#aaff4d,#87ff70,#56ffa0,#00d9ff,#13fce4,#3cffba,#39ffbe,#00dcfe,#00b4ff,#66ff90,#aaff4d,#ceff29,#e7ff0f,#fbf100,#ffe200,#ffd300,#ffc400,#ffb900,#ffb200,#ffab00,#ffa300,#ff9f00,#ff9c00,#ff9800,#ff9800,#ff9800,#ff9800,#ff9800,#ff9c00,#ff9c00,#ff9f00,#ffa300,#ffa700,#ffab00,#ffab00,#ffab00,#ffab00,#ffab00,#ffab00,#ffab00,#ffab00,#ffab00,#ffa700,#ffa300,#ff9f00,#ff9c00,#ff9c00,#ff9800,#ff9800,#ff9800,#ff9800,#ff9800,#ff9c00,#ff9f00,#ffa300,#ffab00,#ffb200,#ffb900,#ffc400,#ffd300,#ffe200,#fbf100,#e7ff0f,#ceff29,#aaff4d,#66ff90,#00b4ff,#00dcfe,#39ffbe,#3cffba,#13fce4,#00d9ff,#56ffa0,#87ff70,#aaff4d,#caff2c,#deff19,#f1fc06,#fbf100,#ffe600,#ffde00,#ffd700,#ffd300,#ffd300,#ffd000,#ffd000 99.48%)"></div><div style="top:293.81px;height:4.52px;background:linear-gradient(90deg,#ffc800 0.52%,#ffc800,#ffc800,#ffcc00,#ffcc00,#ffd000,#ffd700,#ffde00,#ffe600,#fbf100,#f1fc06,#e1ff16,#ceff29,#b4ff43,#94ff63,#6aff8d,#33ffc4,#00a9ff,#0008ff,#002dff,#0cf4eb,#60ff97,#90ff66,#b1ff46,#ceff29,#e1ff16,#f4f802,#ffea00,#ffdb00,#ffd000,#ffc400,#ffbd00,#ffb900,#ffb600,#ffb200,#ffae00,#ffae00,#ffae00,#ffae00,#ffae00,#ffb200,#ffb600,#ffb600,#ffb900,#ffbd00,#ffbd00,#ffbd00,#ffbd00,#ffbd00,#ffbd00,#ffbd00,#ffbd00,#ffbd00,#ffb900,#ffb600,#ffb600,#ffb200,#ffae00,#ffae00,#ffae00,#ffae00,#ffae00,#ffb200,#ffb600,#ffb900,#ffbd00,#ffc400,#ffd000,#ffdb00,#ffea00,#f4f802,#e1ff16,#ceff29,#b1ff46,#90ff66,#60ff97,#0cf4eb,#002dff,#0008ff,#00a9ff,#33ffc4,#6aff8d,#94ff63,#b4ff43,#ceff29,#e1ff16,#f1fc06,#fbf100,#ffe600,#ffde00,#ffd700,#ffd000,#ffcc00,#ffcc00,#ffc800,#ffc800,#ffc800 99.48%)"></div><div style="top:297.73px;height:4.52px;background:linear-gradient(90deg,#ffc400 0.52%,#ffc400,#ffc400,#ffc400,#ffc400,#ffc800,#ffcc00,#ffd000,#ffd700,#ffde00,#ffea00,#f8f500,#ebff0c,#deff19,#caff2c,#b1ff46,#8dff6a,#53ffa4,#00bcff,#0055ff,#00c4ff,#00b4ff,#00ccff,#40ffb7,#70ff87,#90ff66,#adff49,#c4ff33,#d7ff1f,#e7ff0f,#f4f802,#ffea00,#ffe200,#ffdb00,#ffd300,#ffd000,#ffcc00,#ffcc00,#ffcc00,#ffcc00,#ffcc00,#ffd000,#ffd000,#ffd300,#ffd300,#ffd300,#ffd300,#ffd300,#ffd300,#ffd300,#ffd300,#ffd300,#ffd300,#ffd300,#ffd000,#ffd000,#ffcc00,#ffcc00,#ffcc00,#ffcc00,#ffcc00,#ffd000,#ffd300,#ffdb00,#ffe200,#ffea00,#f4f802,#e7ff0f,#d7ff1f,#c4ff33,#adff49,#90ff66,#70ff87,#40ffb7,#00ccff,#00b4ff,#00c4ff,#0055ff,#00bcff,#53ffa4,#8dff6a,#b1ff46,#caff2c,#deff19,#ebff0c,#f8f500,#ffea00,#ffde00,#ffd700,#ffd000,#ffcc00,#ffc800,#ffc400,#ffc400,#ffc400,#ffc400,#ffc400 99.48%)"></div><div style="top:301.65px;height:4.52px;background:linear-gradient(90deg,#ffc100 0.52%,#ffc100,#ffbd00,#ffbd00,#ffc100,#ffc100,#ffc400,#ffc800,#ffcc00,#ffd300,#ffdb00,#ffe600,#fbf100,#eeff09,#e1ff16,#ceff29,#b7ff40,#87ff70,#1fffd7,#00b9ff,#49ffad,#70ff87,#73ff83,#6dff8a,#5dff9a,#3cffba,#00c0ff,#29ffce,#63ff94,#83ff73,#9dff5a,#b1ff46,#c1ff36,#ceff29,#d7ff1f,#e1ff16,#e7ff0f,#eeff09,#f1fc06,#f1fc06,#f4f802,#f4f802,#f4f802,#f4f802,#f4f802,#f4f802,#f4f802,#f4f802,#f4f802,#f4f802,#f4f802,#f4f802,#f4f802,#f4f802,#f4f802,#f4f802,#f4f802,#f1fc06,#f1fc06,#eeff09,#e7ff0f,#e1ff16,#d7ff1f,#ceff29,#c1ff36,#b1ff46,#9dff5a,#83ff73,#63ff94,#29ffce,#00c0ff,#3cffba,#5dff9a,#6dff8a,#73ff83,#70ff87,#49ffad,#00b9ff,#1fffd7,#87ff70,#b7ff40,#ceff29,#e1ff16,#eeff09,#fbf100,#ffe600,#ffdb00,#ffd300,#ffcc00,#ffc800,#ffc400,#ffc100,#ffc100,#ffbd00,#ffbd00,#ffc100,#ffc100 99.48%)"></div><div style="top:305.57px;height:4.52px;background:linear-gradient(90deg,#ffbd00 0.52%,#ffbd00,#ffb900,#ffb900,#ffb900,#ffbd00,#ffbd00,#ffc100,#ffc400,#ffcc00,#ffd300,#ffdb00,#ffe600,#fbf100,#eeff09,#deff19,#c7ff30,#9dff5a,#3cffba,#00e4f8,#77ff80,#a4ff53,#b4ff43,#baff3c,#baff3c,#b4ff43,#adff49,#a4ff53,#97ff60,#87ff70,#70ff87,#53ffa4,#16ffe1,#00e4f8,#46ffb1,#66ff90,#7aff7d,#8aff6d,#94ff63,#9aff5d,#a0ff56,#a4ff53,#a7ff50,#aaff4d,#adff49,#adff49,#b1ff46,#b1ff46,#b1ff46,#b1ff46,#b1ff46,#adff49,#adff49,#aaff4d,#a7ff50,#a4ff53,#a0ff56,#9aff5d,#94ff63,#8aff6d,#7aff7d,#66ff90,#46ffb1,#00e4f8,#16ffe1,#53ffa4,#70ff87,#87ff70,#97ff60,#a4ff53,#adff49,#b4ff43,#baff3c,#baff3c,#b4ff43,#a4ff53,#77ff80,#00e4f8,#3cffba,#9dff5a,#c7ff30,#deff19,#eeff09,#fbf100,#ffe600,#ffdb00,#ffd300,#ffcc00,#ffc400,#ffc100,#ffbd00,#ffbd00,#ffb900,#ffb900,#ffb900,#ffbd00,#ffbd00 99.48%)"></div><div style="top:309.48px;height:4.52px;background:linear-gradient(90deg,#ffbd00 0.52%,#ffb900,#ffb900,#ffb600,#ffb600,#ffb900,#ffb900,#ffbd00,#ffc100,#ffc400,#ffcc00,#ffd300,#ffde00,#ffea00,#f8f500,#e7ff0f,#d1ff26,#aaff4d,#49ffad,#0ff9e7,#87ff70,#baff3c,#d1ff26,#dbff1c,#e1ff16,#e4ff13,#e7ff0f,#e4ff13,#e1ff16,#deff19,#d7ff1f,#ceff29,#c7ff30,#baff3c,#b1ff46,#a4ff53,#97ff60,#8aff6d,#7aff7d,#6dff8a,#5dff9a,#49ffad,#36ffc1,#23ffd4,#0cf4eb,#00d9ff,#00bcff,#00a4ff,#009cff,#00a4ff,#00bcff,#00d9ff,#0cf4eb,#23ffd4,#36ffc1,#49ffad,#5dff9a,#6dff8a,#7aff7d,#8aff6d,#97ff60,#a4ff53,#b1ff46,#baff3c,#c7ff30,#ceff29,#d7ff1f,#deff19,#e1ff16,#e4ff13,#e7ff0f,#e4ff13,#e1ff16,#dbff1c,#d1ff26,#baff3c,#87ff70,#0ff9e7,#49ffad,#aaff4d,#d1ff26,#e7ff0f,#f8f500,#ffea00,#ffde00,#ffd300,#ffcc00,#ffc400,#ffc100,#ffbd00,#ffb900,#ffb900,#ffb600,#ffb600,#ffb900,#ffb900,#ffbd00 99.48%)"></div><div style="top:313.40px;height:4.52px;background:linear-gradient(90deg,#ffbd00 0.52%,#ffb900,#ffb600,#ffb600,#ffb600,#ffb600,#ffb600,#ffb900,#ffbd00,#ffc100,#ffc800,#ffd000,#ffd700,#ffe200,#feed00,#eeff09,#dbff1c,#b1ff46,#53ffa4,#19ffde,#94ff63,#c7ff30,#deff19,#ebff0c,#f1fc06,#f8f500,#feed00,#ffea00,#ffea00,#ffea00,#ffea00,#feed00,#feed00,#f8f500,#f4f802,#eeff09,#e7ff0f,#e1ff16,#dbff1c,#d4ff23,#ceff29,#c7ff30,#c1ff36,#baff3c,#b7ff40,#b4ff43,#b1ff46,#b1ff46,#b1ff46,#b1ff46,#b1ff46,#b4ff43,#b7ff40,#baff3c,#c1ff36,#c7ff30,#ceff29,#d4ff23,#dbff1c,#e1ff16,#e7ff0f,#eeff09,#f4f802,#f8f500,#feed00,#feed00,#ffea00,#ffea00,#ffea00,#ffea00,#feed00,#f8f500,#f1fc06,#ebff0c,#deff19,#c7ff30,#94ff63,#19ffde,#53ffa4,#b1ff46,#dbff1c,#eeff09,#feed00,#ffe200,#ffd700,#ffd000,#ffc800,#ffc100,#ffbd00,#ffb900,#ffb600,#ffb600,#ffb600,#ffb600,#ffb600,#ffb900,#ffbd00 99.48%)"></div><div style="top:317.32px;height:4.52px;background:linear-gradient(90deg,#ffbd00 0.52%,#ffb900,#ffb600,#ffb600,#ffb600,#ffb600,#ffb600,#ffb900,#ffb900,#ffbd00,#ffc400,#ffcc00,#ffd300,#ffde00,#ffea00,#f4f802,#deff19,#b7ff40,#5aff9d,#1fffd7,#9aff5d,#d1ff26,#e4ff13,#f4f802,#feed00,#ffe600,#ffde00,#ffdb00,#ffd700,#ffd700,#ffd300,#ffd300,#ffd700,#ffd700,#ffdb00,#ffdb00,#ffde00,#ffe200,#ffea00,#feed00,#fbf100,#f8f500,#f4f802,#f1fc06,#eeff09,#eeff09,#ebff0c,#ebff0c,#ebff0c,#ebff0c,#ebff0c,#eeff09,#eeff09,#f1fc06,#f4f802,#f8f500,#fbf100,#feed00,#ffea00,#ffe200,#ffde00,#ffdb00,#ffdb00,#ffd700,#ffd700,#ffd300,#ffd300,#ffd700,#ffd700,#ffdb00,#ffde00,#ffe600,#feed00,#f4f802,#e4ff13,#d1ff26,#9aff5d,#1fffd7,#5aff9d,#b7ff40,#deff19,#f4f802,#ffea00,#ffde00,#ffd300,#ffcc00,#ffc400,#ffbd00,#ffb900,#ffb900,#ffb600,#ffb600,#ffb600,#ffb600,#ffb600,#ffb900,#ffbd00 99.48%)"></div><div style="top:321.24px;height:4.52px;background:linear-gradient(90deg,#ffbd00 0.52%,#ffb900,#ffb600,#ffb600,#ffb600,#ffb600,#ffb600,#ffb600,#ffb900,#ffbd00,#ffc100,#ffc800,#ffd000,#ffdb00,#ffe600,#f8f500,#e4ff13,#baff3c,#5dff9a,#23ffd4,#a0ff56,#d4ff23,#ebff0c,#fbf100,#ffe600,#ffde00,#ffd700,#ffd000,#ffcc00,#ffcc00,#ffc800,#ffc800,#ffc800,#ffc800,#ffc800,#ffcc00,#ffd000,#ffd000,#ffd300,#ffd700,#ffdb00,#ffde00,#ffe200,#ffe200,#ffe600,#ffe600,#ffe600,#ffe600,#ffe600,#ffe600,#ffe600,#ffe600,#ffe600,#ffe200,#ffe200,#ffde00,#ffdb00,#ffd700,#ffd300,#ffd000,#ffd000,#ffcc00,#ffc800,#ffc800,#ffc800,#ffc800,#ffc800,#ffcc00,#ffcc00,#ffd000,#ffd700,#ffde00,#ffe600,#fbf100,#ebff0c,#d4ff23,#a0ff56,#23ffd4,#5dff9a,#baff3c,#e4ff13,#f8f500,#ffe600,#ffdb00,#ffd000,#ffc800,#ffc100,#ffbd00,#ffb900,#ffb600,#ffb600,#ffb600,#ffb600,#ffb600,#ffb600,#ffb900,#ffbd00 99.48%)"></div><div style="top:325.15px;height:4.52px;background:linear-gradient(90deg,#ffbd00 0.52%,#ffb900,#ffb600,#ffb600,#ffb600,#ffb600,#ffb600,#ffb600,#ffb900,#ffbd00,#ffc100,#ffc800,#ffd000,#ffd700,#ffe600,#f8f500,#e4ff13,#beff39,#60ff97,#26ffd1,#a4ff53,#d7ff1f,#f1fc06,#feed00,#ffe200,#ffd700,#ffd000,#ffcc00,#ffc800,#ffc400,#ffc100,#ffc100,#ffc100,#ffc100,#ffc100,#ffc100,#ffc400,#ffc400,#ffc800,#ffcc00,#ffd000,#ffd000,#ffd300,#ffd300,#ffd700,#ffd700,#ffd700,#ffd700,#ffd700,#ffd700,#ffd700,#ffd700,#ffd700,#ffd300,#ffd300,#ffd000,#ffd000,#ffcc00,#ffc800,#ffc400,#ffc400,#ffc100,#ffc100,#ffc100,#ffc100,#ffc100,#ffc100,#ffc400,#ffc800,#ffcc00,#ffd000,#ffd700,#ffe200,#feed00,#f1fc06,#d7ff1f,#a4ff53,#26ffd1,#60ff97,#beff39,#e4ff13,#f8f500,#ffe600,#ffd700,#ffd000,#ffc800,#ffc100,#ffbd00,#ffb900,#ffb600,#ffb600,#ffb600,#ffb600,#ffb600,#ffb600,#ffb900,#ffbd00 99.48%)"></div><div style="top:329.07px;height:4.52px;background:linear-gradient(90deg,#ffc100 0.52%,#ffbd00,#ffb900,#ffb600,#ffb600,#ffb600,#ffb600,#ffb600,#ffb900,#ffbd00,#ffc100,#ffc800,#ffd000,#ffd700,#ffe200,#fbf100,#e7ff0f,#beff39,#60ff97,#29ffce,#a4ff53,#dbff1c,#f1fc06,#ffea00,#ffde00,#ffd300,#ffcc00,#ffc800,#ffc100,#ffbd00,#ffbd00,#ffb900,#ffb900,#ffb900,#ffb900,#ffb900,#ffbd00,#ffbd00,#ffc100,#ffc400,#ffc400,#ffc800,#ffc800,#ffcc00,#ffcc00,#ffcc00,#ffcc00,#ffcc00,#ffcc00,#ffcc00,#ffcc00,#ffcc00,#ffcc00,#ffcc00,#ffc800,#ffc800,#ffc400,#ffc400,#ffc100,#ffbd00,#ffbd00,#ffb900,#ffb900,#ffb900,#ffb900,#ffb900,#ffbd00,#ffbd00,#ffc100,#ffc800,#ffcc00,#ffd300,#ffde00,#ffea00,#f1fc06,#dbff1c,#a4ff53,#29ffce,#60ff97,#beff39,#e7ff0f,#fbf100,#ffe200,#ffd700,#ffd000,#ffc800,#ffc100,#ffbd00,#ffb900,#ffb600,#ffb600,#ffb600,#ffb600,#ffb600,#ffb900,#ffbd00,#ffc100 99.48%)"></div><div style="top:332.99px;height:4.52px;background:linear-gradient(90deg,#ffc400 0.52%,#ffbd00,#ffbd00,#ffb900,#ffb900,#ffb600,#ffb600,#ffb900,#ffb900,#ffbd00,#ffc100,#ffc800,#ffd000,#ffd700,#ffe200,#fbf100,#e7ff0f,#beff39,#63ff94,#29ffce,#a7ff50,#deff19,#f4f802,#ffea00,#ffdb00,#ffd300,#ffc800,#ffc400,#ffbd00,#ffb900,#ffb900,#ffb600,#ffb600,#ffb600,#ffb600,#ffb600,#ffb600,#ffb900,#ffb900,#ffbd00,#ffbd00,#ffc100,#ffc100,#ffc400,#ffc400,#ffc400,#ffc400,#ffc400,#ffc400,#ffc400,#ffc400,#ffc400,#ffc400,#ffc400,#ffc100,#ffc100,#ffbd00,#ffbd00,#ffb900,#ffb900,#ffb600,#ffb600,#ffb600,#ffb600,#ffb600,#ffb600,#ffb900,#ffb900,#ffbd00,#ffc400,#ffc800,#ffd300,#ffdb00,#ffea00,#f4f802,#deff19,#a7ff50,#29ffce,#63ff94,#beff39,#e7ff0f,#fbf100,#ffe200,#ffd700,#ffd000,#ffc800,#ffc100,#ffbd00,#ffb900,#ffb900,#ffb600,#ffb600,#ffb900,#ffb900,#ffbd00,#ffbd00,#ffc400 99.48%)"></div><div style="top:336.91px;height:4.52px;background:linear-gradient(90deg,#ffc800 0.52%,#ffc100,#ffbd00,#ffbd00,#ffb900,#ffb900,#ffb900,#ffb900,#ffbd00,#ffc100,#ffc400,#ffc800,#ffd000,#ffdb00,#ffe600,#f8f500,#e4ff13,#beff39,#60ff97,#29ffce,#a7ff50,#deff19,#f4f802,#ffea00,#ffdb00,#ffd000,#ffc800,#ffc100,#ffbd00,#ffb900,#ffb600,#ffb600,#ffb200,#ffb200,#ffb200,#ffb200,#ffb600,#ffb600,#ffb600,#ffb900,#ffb900,#ffbd00,#ffbd00,#ffbd00,#ffc100,#ffc100,#ffc100,#ffc100,#ffc100,#ffc100,#ffc100,#ffc100,#ffc100,#ffbd00,#ffbd00,#ffbd00,#ffb900,#ffb900,#ffb600,#ffb600,#ffb600,#ffb200,#ffb200,#ffb200,#ffb200,#ffb600,#ffb600,#ffb900,#ffbd00,#ffc100,#ffc800,#ffd000,#ffdb00,#ffea00,#f4f802,#deff19,#a7ff50,#29ffce,#60ff97,#beff39,#e4ff13,#f8f500,#ffe600,#ffdb00,#ffd000,#ffc800,#ffc400,#ffc100,#ffbd00,#ffb900,#ffb900,#ffb900,#ffb900,#ffbd00,#ffbd00,#ffc100,#ffc800 99.48%)"></div><div style="top:340.82px;height:4.52px;background:linear-gradient(90deg,#ffcc00 0.52%,#ffc400,#ffc400,#ffc100,#ffbd00,#ffbd00,#ffbd00,#ffbd00,#ffc100,#ffc100,#ffc800,#ffcc00,#ffd300,#ffdb00,#ffe600,#f8f500,#e4ff13,#beff39,#60ff97,#29ffce,#a4ff53,#dbff1c,#f4f802,#ffea00,#ffdb00,#ffd000,#ffc800,#ffc100,#ffbd00,#ffb900,#ffb600,#ffb600,#ffb200,#ffb200,#ffb200,#ffb200,#ffb200,#ffb200,#ffb600,#ffb600,#ffb900,#ffb900,#ffb900,#ffb900,#ffbd00,#ffbd00,#ffbd00,#ffbd00,#ffbd00,#ffbd00,#ffbd00,#ffbd00,#ffbd00,#ffb900,#ffb900,#ffb900,#ffb900,#ffb600,#ffb600,#ffb200,#ffb200,#ffb200,#ffb200,#ffb200,#ffb200,#ffb600,#ffb600,#ffb900,#ffbd00,#ffc100,#ffc800,#ffd000,#ffdb00,#ffea00,#f4f802,#dbff1c,#a4ff53,#29ffce,#60ff97,#beff39,#e4ff13,#f8f500,#ffe600,#ffdb00,#ffd300,#ffcc00,#ffc800,#ffc100,#ffc100,#ffbd00,#ffbd00,#ffbd00,#ffbd00,#ffc100,#ffc400,#ffc400,#ffcc00 99.48%)"></div><div style="top:344.74px;height:4.52px;background:linear-gradient(90deg,#ffd000 0.52%,#ffcc00,#ffc800,#ffc400,#ffc100,#ffc100,#ffc100,#ffc100,#ffc400,#ffc400,#ffc800,#ffd000,#ffd700,#ffde00,#ffea00,#f4f802,#e1ff16,#baff3c,#5dff9a,#26ffd1,#a4ff53,#dbff1c,#f1fc06,#ffea00,#ffde00,#ffd300,#ffcc00,#ffc400,#ffbd00,#ffb900,#ffb600,#ffb600,#ffb200,#ffb200,#ffb200,#ffb200,#ffb200,#ffb200,#ffb600,#ffb600,#ffb600,#ffb900,#ffb900,#ffb900,#ffb900,#ffb900,#ffb900,#ffb900,#ffb900,#ffb900,#ffb900,#ffb900,#ffb900,#ffb900,#ffb900,#ffb900,#ffb600,#ffb600,#ffb600,#ffb200,#ffb200,#ffb200,#ffb200,#ffb200,#ffb200,#ffb600,#ffb600,#ffb900,#ffbd00,#ffc400,#ffcc00,#ffd300,#ffde00,#ffea00,#f1fc06,#dbff1c,#a4ff53,#26ffd1,#5dff9a,#baff3c,#e1ff16,#f4f802,#ffea00,#ffde00,#ffd700,#ffd000,#ffc800,#ffc400,#ffc400,#ffc100,#ffc100,#ffc100,#ffc100,#ffc400,#ffc800,#ffcc00,#ffd000 99.48%)"></div><div style="top:348.66px;height:4.52px;background:linear-gradient(90deg,#ffd700 0.52%,#ffd000,#ffcc00,#ffc800,#ffc800,#ffc400,#ffc400,#ffc800,#ffc800,#ffcc00,#ffd000,#ffd300,#ffdb00,#ffe200,#feed00,#f1fc06,#deff19,#b7ff40,#5dff9a,#23ffd4,#a0ff56,#d7ff1f,#eeff09,#feed00,#ffde00,#ffd300,#ffcc00,#ffc400,#ffc100,#ffbd00,#ffb900,#ffb600,#ffb600,#ffb200,#ffb200,#ffb200,#ffb200,#ffb200,#ffb600,#ffb600,#ffb600,#ffb600,#ffb900,#ffb900,#ffb900,#ffb900,#ffb900,#ffb900,#ffb900,#ffb900,#ffb900,#ffb900,#ffb900,#ffb900,#ffb900,#ffb600,#ffb600,#ffb600,#ffb600,#ffb200,#ffb200,#ffb200,#ffb200,#ffb200,#ffb600,#ffb600,#ffb900,#ffbd00,#ffc100,#ffc400,#ffcc00,#ffd300,#ffde00,#feed00,#eeff09,#d7ff1f,#a0ff56,#23ffd4,#5dff9a,#b7ff40,#deff19,#f1fc06,#feed00,#ffe200,#ffdb00,#ffd300,#ffd000,#ffcc00,#ffc800,#ffc800,#ffc400,#ffc400,#ffc800,#ffc800,#ffcc00,#ffd000,#ffd700 99.48%)"></div><div style="top:352.58px;height:4.52px;background:linear-gradient(90deg,#ffdb00 0.52%,#ffd700,#ffd300,#ffd000,#ffcc00,#ffcc00,#ffcc00,#ffcc00,#ffcc00,#ffd000,#ffd300,#ffd700,#ffde00,#ffe600,#fbf100,#eeff09,#dbff1c,#b4ff43,#5aff9d,#1fffd7,#9dff5a,#d4ff23,#eeff09,#fbf100,#ffe200,#ffd700,#ffd000,#ffc800,#ffc400,#ffbd00,#ffb900,#ffb900,#ffb600,#ffb600,#ffb600,#ffb600,#ffb600,#ffb600,#ffb600,#ffb600,#ffb600,#ffb900,#ffb900,#ffb900,#ffb900,#ffb900,#ffb900,#ffb900,#ffb900,#ffb900,#ffb900,#ffb900,#ffb900,#ffb900,#ffb900,#ffb900,#ffb600,#ffb600,#ffb600,#ffb600,#ffb600,#ffb600,#ffb600,#ffb600,#ffb600,#ffb900,#ffb900,#ffbd00,#ffc400,#ffc800,#ffd000,#ffd700,#ffe200,#fbf100,#eeff09,#d4ff23,#9dff5a,#1fffd7,#5aff9d,#b4ff43,#dbff1c,#eeff09,#fbf100,#ffe600,#ffde00,#ffd700,#ffd300,#ffd000,#ffcc00,#ffcc00,#ffcc00,#ffcc00,#ffcc00,#ffd000,#ffd300,#ffd700,#ffdb00 99.48%)"></div><div style="top:356.49px;height:4.52px;background:linear-gradient(90deg,#ffe600 0.52%,#ffde00,#ffdb00,#ffd700,#ffd300,#ffd300,#ffd300,#ffd300,#ffd300,#ffd700,#ffdb00,#ffde00,#ffe200,#feed00,#f4f802,#ebff0c,#d7ff1f,#b1ff46,#53ffa4,#1cffdb,#9aff5d,#d1ff26,#e7ff0f,#f8f500,#ffe600,#ffdb00,#ffd300,#ffcc00,#ffc800,#ffc100,#ffbd00,#ffbd00,#ffb900,#ffb900,#ffb600,#ffb600,#ffb600,#ffb600,#ffb900,#ffb900,#ffb900,#ffb900,#ffb900,#ffb900,#ffb900,#ffb900,#ffb900,#ffb900,#ffb900,#ffb900,#ffb900,#ffb900,#ffb900,#ffb900,#ffb900,#ffb900,#ffb900,#ffb900,#ffb900,#ffb600,#ffb600,#ffb600,#ffb600,#ffb900,#ffb900,#ffbd00,#ffbd00,#ffc100,#ffc800,#ffcc00,#ffd300,#ffdb00,#ffe600,#f8f500,#e7ff0f,#d1ff26,#9aff5d,#1cffdb,#53ffa4,#b1ff46,#d7ff1f,#ebff0c,#f4f802,#feed00,#ffe200,#ffde00,#ffdb00,#ffd700,#ffd300,#ffd300,#ffd300,#ffd300,#ffd300,#ffd700,#ffdb00,#ffde00,#ffe600 99.48%)"></div><div style="top:360.41px;height:4.52px;background:linear-gradient(90deg,#feed00 0.52%,#ffea00,#ffe200,#ffde00,#ffde00,#ffdb00,#ffdb00,#ffdb00,#ffdb00,#ffde00,#ffde00,#ffe600,#ffea00,#fbf100,#f1fc06,#e4ff13,#d1ff26,#aaff4d,#50ffa7,#19ffde,#94ff63,#ceff29,#e4ff13,#f4f802,#feed00,#ffe200,#ffd700,#ffd000,#ffcc00,#ffc400,#ffc100,#ffc100,#ffbd00,#ffbd00,#ffb900,#ffb900,#ffb900,#ffb900,#ffb900,#ffb900,#ffbd00,#ffbd00,#ffbd00,#ffbd00,#ffbd00,#ffbd00,#ffbd00,#ffb900,#ffb900,#ffb900,#ffbd00,#ffbd00,#ffbd00,#ffbd00,#ffbd00,#ffbd00,#ffbd00,#ffb900,#ffb900,#ffb900,#ffb900,#ffb900,#ffb900,#ffbd00,#ffbd00,#ffc100,#ffc100,#ffc400,#ffcc00,#ffd000,#ffd700,#ffe200,#feed00,#f4f802,#e4ff13,#ceff29,#94ff63,#19ffde,#50ffa7,#aaff4d,#d1ff26,#e4ff13,#f1fc06,#fbf100,#ffea00,#ffe600,#ffde00,#ffde00,#ffdb00,#ffdb00,#ffdb00,#ffdb00,#ffde00,#ffde00,#ffe200,#ffea00,#feed00 99.48%)"></div><div style="top:364.33px;height:4.52px;background:linear-gradient(90deg,#f4f802 0.52%,#fbf100,#feed00,#ffea00,#ffe600,#ffe200,#ffe200,#ffe200,#ffe200,#ffe600,#ffea00,#feed00,#fbf100,#f4f802,#ebff0c,#deff19,#caff2c,#a7ff50,#49ffad,#13fce4,#90ff66,#c7ff30,#deff19,#eeff09,#fbf100,#ffe600,#ffde00,#ffd700,#ffd000,#ffcc00,#ffc800,#ffc400,#ffc100,#ffc100,#ffc100,#ffbd00,#ffbd00,#ffbd00,#ffbd00,#ffbd00,#ffc100,#ffc100,#ffc100,#ffc100,#ffbd00,#ffbd00,#ffbd00,#ffbd00,#ffbd00,#ffbd00,#ffbd00,#ffbd00,#ffbd00,#ffc100,#ffc100,#ffc100,#ffc100,#ffbd00,#ffbd00,#ffbd00,#ffbd00,#ffbd00,#ffc100,#ffc100,#ffc100,#ffc400,#ffc800,#ffcc00,#ffd000,#ffd700,#ffde00,#ffe600,#fbf100,#eeff09,#deff19,#c7ff30,#90ff66,#13fce4,#49ffad,#a7ff50,#caff2c,#deff19,#ebff0c,#f4f802,#fbf100,#feed00,#ffea00,#ffe600,#ffe200,#ffe200,#ffe200,#ffe200,#ffe600,#ffea00,#feed00,#fbf100,#f4f802 99.48%)"></div><div style="top:368.25px;height:4.52px;background:linear-gradient(90deg,#ebff0c 0.52%,#eeff09,#f4f802,#f8f500,#fbf100,#feed00,#feed00,#feed00,#feed00,#feed00,#fbf100,#f8f500,#f1fc06,#ebff0c,#e4ff13,#d7ff1f,#c4ff33,#9dff5a,#43ffb4,#0cf4eb,#8aff6d,#c1ff36,#d7ff1f,#e7ff0f,#f4f802,#feed00,#ffe600,#ffde00,#ffd700,#ffd300,#ffd000,#ffcc00,#ffc800,#ffc800,#ffc400,#ffc400,#ffc400,#ffc400,#ffc400,#ffc400,#ffc400,#ffc400,#ffc400,#ffc400,#ffc400,#ffc100,#ffc100,#ffc100,#ffc100,#ffc100,#ffc100,#ffc100,#ffc400,#ffc400,#ffc400,#ffc400,#ffc400,#ffc400,#ffc400,#ffc400,#ffc400,#ffc400,#ffc400,#ffc800,#ffc800,#ffcc00,#ffd000,#ffd300,#ffd700,#ffde00,#ffe600,#feed00,#f4f802,#e7ff0f,#d7ff1f,#c1ff36,#8aff6d,#0cf4eb,#43ffb4,#9dff5a,#c4ff33,#d7ff1f,#e4ff13,#ebff0c,#f1fc06,#f8f500,#fbf100,#feed00,#feed00,#feed00,#feed00,#feed00,#fbf100,#f8f500,#f4f802,#eeff09,#ebff0c 99.48%)"></div><div style="top:372.16px;height:4.52px;background:linear-gradient(90deg,#dbff1c 0.52%,#e1ff16,#e7ff0f,#ebff0c,#eeff09,#f1fc06,#f4f802,#f4f802,#f4f802,#f4f802,#f1fc06,#eeff09,#ebff0c,#e4ff13,#dbff1c,#ceff29,#beff39,#97ff60,#39ffbe,#02e9f4,#80ff77,#baff3c,#d1ff26,#e1ff16,#eeff09,#f8f500,#feed00,#ffe600,#ffde00,#ffdb00,#ffd300,#ffd300,#ffd000,#ffcc00,#ffcc00,#ffcc00,#ffc800,#ffc800,#ffc800,#ffc800,#ffc800,#ffc800,#ffc800,#ffc800,#ffc800,#ffc800,#ffc800,#ffc800,#ffc800,#ffc800,#ffc800,#ffc800,#ffc800,#ffc800,#ffc800,#ffc800,#ffc800,#ffc800,#ffc800,#ffc800,#ffc800,#ffcc00,#ffcc00,#ffcc00,#ffd000,#ffd300,#ffd300,#ffdb00,#ffde00,#ffe600,#feed00,#f8f500,#eeff09,#e1ff16,#d1ff26,#baff3c,#80ff77,#02e9f4,#39ffbe,#97ff60,#beff39,#ceff29,#dbff1c,#e4ff13,#ebff0c,#eeff09,#f1fc06,#f4f802,#f4f802,#f4f802,#f4f802,#f1fc06,#eeff09,#ebff0c,#e7ff0f,#e1ff16,#dbff1c 99.48%)"></div><div style="top:376.08px;height:4.52px;background:linear-gradient(90deg,#caff2c 0.52%,#d1ff26,#d7ff1f,#deff19,#e1ff16,#e4ff13,#e7ff0f,#e7ff0f,#e7ff0f,#e7ff0f,#e7ff0f,#e4ff13,#deff19,#d7ff1f,#d1ff26,#c4ff33,#b4ff43,#8dff6a,#33ffc4,#00e0fb,#7aff7d,#b1ff46,#caff2c,#d7ff1f,#e4ff13,#eeff09,#f8f500,#feed00,#ffe600,#ffe200,#ffde00,#ffdb00,#ffd700,#ffd300,#ffd300,#ffd300,#ffd000,#ffd000,#ffd000,#ffd000,#ffd000,#ffd000,#ffd000,#ffd000,#ffd000,#ffd000,#ffcc00,#ffcc00,#ffcc00,#ffcc00,#ffcc00,#ffd000,#ffd000,#ffd000,#ffd000,#ffd000,#ffd000,#ffd000,#ffd000,#ffd000,#ffd000,#ffd300,#ffd300,#ffd300,#ffd700,#ffdb00,#ffde00,#ffe200,#ffe600,#feed00,#f8f500,#eeff09,#e4ff13,#d7ff1f,#caff2c,#b1ff46,#7aff7d,#00e0fb,#33ffc4,#8dff6a,#b4ff43,#c4ff33,#d1ff26,#d7ff1f,#deff19,#e4ff13,#e7ff0f,#e7ff0f,#e7ff0f,#e7ff0f,#e7ff0f,#e4ff13,#e1ff16,#deff19,#d7ff1f,#d1ff26,#caff2c 99.48%)"></div></div>
<canvas id="g4" class="a" style="left:1469.1px;top:162.6px;width:380.8px;height:380.8px;outline:1.1px solid #000"></canvas>
<div class="t" style="top:139.34px;font-size:18.5px;line-height:18.5px;left:1659.5px;transform:translateX(-50%);">GenSAS mag_cylinder.sld  #2 2D</div>
<div class="a" style="left:1468.95px;top:543.5px;width:1.1px;height:5px;background:#000;"></div>
<div class="t" style="top:550.14px;font-size:14.6px;line-height:14.6px;left:1469.5px;transform:translateX(-50%);"><span style="display:inline-block;width:0.75em;text-align:center;transform:scaleX(1.3)">−</span>0.3</div>
<div class="a" style="left:1464.0px;top:542.45px;width:5px;height:1.1px;background:#000;"></div>
<div class="t" style="top:536.67px;font-size:14.6px;line-height:14.6px;right:815.3px;"><span style="display:inline-block;width:0.75em;text-align:center;transform:scaleX(1.3)">−</span>0.3</div>
<div class="a" style="left:1532.2833333333333px;top:543.5px;width:1.1px;height:5px;background:#000;"></div>
<div class="t" style="top:550.14px;font-size:14.6px;line-height:14.6px;left:1532.8333333333333px;transform:translateX(-50%);"><span style="display:inline-block;width:0.75em;text-align:center;transform:scaleX(1.3)">−</span>0.2</div>
<div class="a" style="left:1464.0px;top:479.1166666666667px;width:5px;height:1.1px;background:#000;"></div>
<div class="t" style="top:473.33px;font-size:14.6px;line-height:14.6px;right:815.3px;"><span style="display:inline-block;width:0.75em;text-align:center;transform:scaleX(1.3)">−</span>0.2</div>
<div class="a" style="left:1595.6166666666668px;top:543.5px;width:1.1px;height:5px;background:#000;"></div>
<div class="t" style="top:550.14px;font-size:14.6px;line-height:14.6px;left:1596.1666666666667px;transform:translateX(-50%);"><span style="display:inline-block;width:0.75em;text-align:center;transform:scaleX(1.3)">−</span>0.1</div>
<div class="a" style="left:1464.0px;top:415.7833333333333px;width:5px;height:1.1px;background:#000;"></div>
<div class="t" style="top:410.00px;font-size:14.6px;line-height:14.6px;right:815.3px;"><span style="display:inline-block;width:0.75em;text-align:center;transform:scaleX(1.3)">−</span>0.1</div>
<div class="a" style="left:1658.95px;top:543.5px;width:1.1px;height:5px;background:#000;"></div>
<div class="t" style="top:550.14px;font-size:14.6px;line-height:14.6px;left:1659.5px;transform:translateX(-50%);">0.0</div>
<div class="a" style="left:1464.0px;top:352.45px;width:5px;height:1.1px;background:#000;"></div>
<div class="t" style="top:346.67px;font-size:14.6px;line-height:14.6px;right:815.3px;">0.0</div>
<div class="a" style="left:1722.2833333333333px;top:543.5px;width:1.1px;height:5px;background:#000;"></div>
<div class="t" style="top:550.14px;font-size:14.6px;line-height:14.6px;left:1722.8333333333333px;transform:translateX(-50%);">0.1</div>
<div class="a" style="left:1464.0px;top:289.1166666666666px;width:5px;height:1.1px;background:#000;"></div>
<div class="t" style="top:283.33px;font-size:14.6px;line-height:14.6px;right:815.3px;">0.1</div>
<div class="a" style="left:1785.6166666666668px;top:543.5px;width:1.1px;height:5px;background:#000;"></div>
<div class="t" style="top:550.14px;font-size:14.6px;line-height:14.6px;left:1786.1666666666667px;transform:translateX(-50%);">0.2</div>
<div class="a" style="left:1464.0px;top:225.7833333333333px;width:5px;height:1.1px;background:#000;"></div>
<div class="t" style="top:220.00px;font-size:14.6px;line-height:14.6px;right:815.3px;">0.2</div>
<div class="a" style="left:1848.95px;top:543.5px;width:1.1px;height:5px;background:#000;"></div>
<div class="t" style="top:550.14px;font-size:14.6px;line-height:14.6px;left:1849.5px;transform:translateX(-50%);">0.3</div>
<div class="a" style="left:1464.0px;top:162.45px;width:5px;height:1.1px;background:#000;"></div>
<div class="t" style="top:156.67px;font-size:14.6px;line-height:14.6px;right:815.3px;">0.3</div>
<div class="t" style="top:574.24px;font-size:14.6px;line-height:14.6px;left:1659.5px;transform:translateX(-50%);">Q<sub class="ms">x</sub>(A<sup class="ms">−1</sup>)</div>
<div class="t" style="left:1407.0px;top:353.6px;font-size:14.6px;line-height:14.6px;transform:translate(-50%,-50%) rotate(-90deg);">Q<sub class="ms">y</sub>(A<sup class="ms">−1</sup>)</div>
<div class="a" style="left:1901.8px;top:175.9px;width:14.500000000000046px;height:337.5px;background:linear-gradient(to top,rgb(0,0,128) 0.0%,rgb(0,0,255) 11.0%,rgb(0,0,255) 12.5%,rgb(0,219,255) 34.0%,rgb(0,229,247) 35.0%,rgb(21,255,226) 37.5%,rgb(239,255,8) 64.0%,rgb(247,246,0) 65.0%,rgb(255,236,0) 66.0%,rgb(255,19,0) 89.0%,rgb(232,0,0) 91.0%,rgb(128,0,0) 100.0%);outline:1.1px solid #000"></div>
<div class="a" style="left:1916.4px;top:194.63927917429663px;width:5px;height:1.1px;background:#000;"></div>
<div class="t" style="top:188.56px;font-size:14.6px;line-height:14.6px;left:1926.4px;">0</div>
<div class="a" style="left:1916.4px;top:250.69055268853003px;width:5px;height:1.1px;background:#000;"></div>
<div class="t" style="top:244.61px;font-size:14.6px;line-height:14.6px;left:1926.4px;"><span style="display:inline-block;width:0.75em;text-align:center;transform:scaleX(1.3)">−</span>2</div>
<div class="a" style="left:1916.4px;top:306.74182620276343px;width:5px;height:1.1px;background:#000;"></div>
<div class="t" style="top:300.66px;font-size:14.6px;line-height:14.6px;left:1926.4px;"><span style="display:inline-block;width:0.75em;text-align:center;transform:scaleX(1.3)">−</span>4</div>
<div class="a" style="left:1916.4px;top:362.79309971699684px;width:5px;height:1.1px;background:#000;"></div>
<div class="t" style="top:356.71px;font-size:14.6px;line-height:14.6px;left:1926.4px;"><span style="display:inline-block;width:0.75em;text-align:center;transform:scaleX(1.3)">−</span>6</div>
<div class="a" style="left:1916.4px;top:418.84437323123024px;width:5px;height:1.1px;background:#000;"></div>
<div class="t" style="top:412.76px;font-size:14.6px;line-height:14.6px;left:1926.4px;"><span style="display:inline-block;width:0.75em;text-align:center;transform:scaleX(1.3)">−</span>8</div>
<div class="a" style="left:1916.4px;top:474.89564674546364px;width:5px;height:1.1px;background:#000;"></div>
<div class="t" style="top:468.81px;font-size:14.6px;line-height:14.6px;left:1926.4px;"><span style="display:inline-block;width:0.75em;text-align:center;transform:scaleX(1.3)">−</span>10</div>
<div class="t" style="left:1968px;top:344.5px;font-size:14.6px;line-height:14.6px;font-style:italic;transform:translate(-50%,-50%) rotate(-90deg);">log<sub>10</sub></div>
<div class="a" style="left:1318px;top:629px;width:682px;height:553px;background:#d7e4f2;box-shadow:inset 0 0 0 1px #3a3a3a;border-radius:6px 6px 0 0;"></div>
<div class="a" style="left:1319px;top:630px;width:680px;height:38px;background:linear-gradient(#bfcddd 0%,#cbd8e6 50%,#d7e4f2 100%);border-radius:5px 5px 0 0;"></div>
<div class="a" style="left:1332px;top:644px;width:18px;height:18px;border-radius:50%;background:radial-gradient(circle farthest-corner at 62% 64%, #ffffff 0%, #f3eff3 10%, #b4b0b8 32%, #75717e 55%, #4d4a58 80%, #474453 100%);"></div>
<div class="t" style="top:646.21px;font-size:17px;line-height:17px;left:1358px;">Graph5</div>
<div class="a" style="left:1842px;top:638.6px;width:47px;height:25.699999999999932px;background:linear-gradient(#cfdae6 0%,#c9d5e2 45%,#c2cfde 50%,#c6d3e1 100%);border-radius:3px;box-shadow:inset 0 0 0 1px #8e9db0, inset 0 0 0 2px rgba(255,255,255,0.35);"></div>
<div class="a" style="left:1859.0px;top:651.95px;width:13px;height:4px;background:linear-gradient(#fff,#e6e6e6);box-shadow:0 0 0 1px #5a6a80;border-radius:1px;"></div>
<div class="a" style="left:1892px;top:638.6px;width:47px;height:25.699999999999932px;background:linear-gradient(#cfdae6 0%,#c9d5e2 45%,#c2cfde 50%,#c6d3e1 100%);border-radius:3px;box-shadow:inset 0 0 0 1px #8e9db0, inset 0 0 0 2px rgba(255,255,255,0.35);"></div>
<div class="a" style="left:1909.0px;top:645.45px;width:13px;height:12px;box-shadow:inset 0 0 0 3px #f4f4f4,0 0 0 1px #5a6a80,inset 0 0 0 4px #5a6a80;border-radius:1px;"></div>
<div class="a" style="left:1942px;top:638.6px;width:47px;height:25.699999999999932px;background:linear-gradient(#cfdae6 0%,#c9d5e2 45%,#c2cfde 50%,#c6d3e1 100%);border-radius:3px;box-shadow:inset 0 0 0 1px #8e9db0, inset 0 0 0 2px rgba(255,255,255,0.35);"></div>
<svg class="a" style="left:1956.5px;top:643.45px" width="18" height="16"><path d="M3 2 L15 14 M15 2 L3 14" stroke="#4a5668" stroke-width="5.5" stroke-linecap="square"/><path d="M3.5 2.5 L14.5 13.5 M14.5 2.5 L3.5 13.5" stroke="#f7f7f7" stroke-width="3.2" stroke-linecap="square"/></svg>
<div class="a" style="left:1326px;top:668px;width:666px;height:506px;background:#f0f0f0;"></div>
<div class="a" style="left:1339px;top:681px;width:640px;height:480px;background:#fff;"></div>
<div class="a hm" style="left:1489.5px;top:716.2px;width:378.79999999999995px;height:380.0px"><div style="top:0.00px;height:4.52px;background:linear-gradient(90deg,#caff2c 0.52%,#d1ff26,#d7ff1f,#deff19,#e1ff16,#e4ff13,#e7ff0f,#e7ff0f,#e7ff0f,#e7ff0f,#e7ff0f,#e4ff13,#deff19,#d7ff1f,#d1ff26,#c4ff33,#b4ff43,#8dff6a,#33ffc4,#00e0fb,#7aff7d,#b1ff46,#caff2c,#d7ff1f,#e4ff13,#eeff09,#f8f500,#feed00,#ffe600,#ffe200,#ffde00,#ffdb00,#ffd700,#ffd300,#ffd300,#ffd300,#ffd000,#ffd000,#ffd000,#ffd000,#ffd000,#ffd000,#ffd000,#ffd000,#ffd000,#ffd000,#ffcc00,#ffcc00,#ffcc00,#ffcc00,#ffcc00,#ffd000,#ffd000,#ffd000,#ffd000,#ffd000,#ffd000,#ffd000,#ffd000,#ffd000,#ffd000,#ffd300,#ffd300,#ffd300,#ffd700,#ffdb00,#ffde00,#ffe200,#ffe600,#feed00,#f8f500,#eeff09,#e4ff13,#d7ff1f,#caff2c,#b1ff46,#7aff7d,#00e0fb,#33ffc4,#8dff6a,#b4ff43,#c4ff33,#d1ff26,#d7ff1f,#deff19,#e4ff13,#e7ff0f,#e7ff0f,#e7ff0f,#e7ff0f,#e7ff0f,#e4ff13,#e1ff16,#deff19,#d7ff1f,#d1ff26,#caff2c 99.48%)"></div><div style="top:3.92px;height:4.52px;background:linear-gradient(90deg,#dbff1c 0.52%,#e1ff16,#e7ff0f,#ebff0c,#eeff09,#f1fc06,#f4f802,#f4f802,#f4f802,#f4f802,#f1fc06,#eeff09,#ebff0c,#e4ff13,#dbff1c,#ceff29,#beff39,#97ff60,#39ffbe,#02e9f4,#80ff77,#baff3c,#d1ff26,#e1ff16,#eeff09,#f8f500,#feed00,#ffe600,#ffde00,#ffdb00,#ffd300,#ffd300,#ffd000,#ffcc00,#ffcc00,#ffcc00,#ffc800,#ffc800,#ffc800,#ffc800,#ffc800,#ffc800,#ffc800,#ffc800,#ffc800,#ffc800,#ffc800,#ffc800,#ffc800,#ffc800,#ffc800,#ffc800,#ffc800,#ffc800,#ffc800,#ffc800,#ffc800,#ffc800,#ffc800,#ffc800,#ffc800,#ffcc00,#ffcc00,#ffcc00,#ffd000,#ffd300,#ffd300,#ffdb00,#ffde00,#ffe600,#feed00,#f8f500,#eeff09,#e1ff16,#d1ff26,#baff3c,#80ff77,#02e9f4,#39ffbe,#97ff60,#beff39,#ceff29,#dbff1c,#e4ff13,#ebff0c,#eeff09,#f1fc06,#f4f802,#f4f802,#f4f802,#f4f802,#f1fc06,#eeff09,#ebff0c,#e7ff0f,#e1ff16,#dbff1c 99.48%)"></div><div style="top:7.84px;height:4.52px;background:linear-gradient(90deg,#ebff0c 0.52%,#eeff09,#f4f802,#f8f500,#fbf100,#feed00,#feed00,#feed00,#feed00,#feed00,#fbf100,#f8f500,#f1fc06,#ebff0c,#e4ff13,#d7ff1f,#c4ff33,#9dff5a,#43ffb4,#0cf4eb,#8aff6d,#c1ff36,#d7ff1f,#e7ff0f,#f4f802,#feed00,#ffe600,#ffde00,#ffd700,#ffd300,#ffd000,#ffcc00,#ffc800,#ffc800,#ffc400,#ffc400,#ffc400,#ffc400,#ffc400,#ffc400,#ffc400,#ffc400,#ffc400,#ffc400,#ffc400,#ffc100,#ffc100,#ffc100,#ffc100,#ffc100,#ffc100,#ffc100,#ffc400,#ffc400,#ffc400,#ffc400,#ffc400,#ffc400,#ffc400,#ffc400,#ffc400,#ffc400,#ffc400,#ffc800,#ffc800,#ffcc00,#ffd000,#ffd300,#ffd700,#ffde00,#ffe600,#feed00,#f4f802,#e7ff0f,#d7ff1f,#c1ff36,#8aff6d,#0cf4eb,#43ffb4,#9dff5a,#c4ff33,#d7ff1f,#e4ff13,#ebff0c,#f1fc06,#f8f500,#fbf100,#feed00,#feed00,#feed00,#feed00,#feed00,#fbf100,#f8f500,#f4f802,#eeff09,#ebff0c 99.48%)"></div><div style="top:11.75px;height:4.52px;background:linear-gradient(90deg,#f4f802 0.52%,#fbf100,#feed00,#ffea00,#ffe600,#ffe200,#ffe200,#ffe200,#ffe200,#ffe600,#ffea00,#feed00,#fbf100,#f4f802,#ebff0c,#deff19,#caff2c,#a7ff50,#49ffad,#13fce4,#90ff66,#c7ff30,#deff19,#eeff09,#fbf100,#ffe600,#ffde00,#ffd700,#ffd000,#ffcc00,#ffc800,#ffc400,#ffc100,#ffc100,#ffc100,#ffbd00,#ffbd00,#ffbd00,#ffbd00,#ffbd00,#ffc100,#ffc100,#ffc100,#ffc100,#ffbd00,#ffbd00,#ffbd00,#ffbd00,#ffbd00,#ffbd00,#ffbd00,#ffbd00,#ffbd00,#ffc100,#ffc100,#ffc100,#ffc100,#ffbd00,#ffbd00,#ffbd00,#ffbd00,#ffbd00,#ffc100,#ffc100,#ffc100,#ffc400,#ffc800,#ffcc00,#ffd000,#ffd700,#ffde00,#ffe600,#fbf100,#eeff09,#deff19,#c7ff30,#90ff66,#13fce4,#49ffad,#a7ff50,#caff2c,#deff19,#ebff0c,#f4f802,#fbf100,#feed00,#ffea00,#ffe600,#ffe200,#ffe200,#ffe200,#ffe200,#ffe600,#ffea00,#feed00,#fbf100,#f4f802 99.48%)"></div><div style="top:15.67px;height:4.52px;background:linear-gradient(90deg,#feed00 0.52%,#ffea00,#ffe200,#ffde00,#ffde00,#ffdb00,#ffdb00,#ffdb00,#ffdb00,#ffde00,#ffde00,#ffe600,#ffea00,#fbf100,#f1fc06,#e4ff13,#d1ff26,#aaff4d,#50ffa7,#19ffde,#94ff63,#ceff29,#e4ff13,#f4f802,#feed00,#ffe200,#ffd700,#ffd000,#ffcc00,#ffc400,#ffc100,#ffc100,#ffbd00,#ffbd00,#ffb900,#ffb900,#ffb900,#ffb900,#ffb900,#ffb900,#ffbd00,#ffbd00,#ffbd00,#ffbd00,#ffbd00,#ffbd00,#ffbd00,#ffb900,#ffb900,#ffb900,#ffbd00,#ffbd00,#ffbd00,#ffbd00,#ffbd00,#ffbd00,#ffbd00,#ffb900,#ffb900,#ffb900,#ffb900,#ffb900,#ffb900,#ffbd00,#ffbd00,#ffc100,#ffc100,#ffc400,#ffcc00,#ffd000,#ffd700,#ffe200,#feed00,#f4f802,#e4ff13,#ceff29,#94ff63,#19ffde,#50ffa7,#aaff4d,#d1ff26,#e4ff13,#f1fc06,#fbf100,#ffea00,#ffe600,#ffde00,#ffde00,#ffdb00,#ffdb00,#ffdb00,#ffdb00,#ffde00,#ffde00,#ffe200,#ffea00,#feed00 99.48%)"></div><div style="top:19.59px;height:4.52px;background:linear-gradient(90deg,#ffe600 0.52%,#ffde00,#ffdb00,#ffd700,#ffd300,#ffd300,#ffd300,#ffd300,#ffd300,#ffd700,#ffdb00,#ffde00,#ffe200,#feed00,#f4f802,#ebff0c,#d7ff1f,#b1ff46,#53ffa4,#1cffdb,#9aff5d,#d1ff26,#e7ff0f,#f8f500,#ffe600,#ffdb00,#ffd300,#ffcc00,#ffc800,#ffc100,#ffbd00,#ffbd00,#ffb900,#ffb900,#ffb600,#ffb600,#ffb600,#ffb600,#ffb900,#ffb900,#ffb900,#ffb900,#ffb900,#ffb900,#ffb900,#ffb900,#ffb900,#ffb900,#ffb900,#ffb900,#ffb900,#ffb900,#ffb900,#ffb900,#ffb900,#ffb900,#ffb900,#ffb900,#ffb900,#ffb600,#ffb600,#ffb600,#ffb600,#ffb900,#ffb900,#ffbd00,#ffbd00,#ffc100,#ffc800,#ffcc00,#ffd300,#ffdb00,#ffe600,#f8f500,#e7ff0f,#d1ff26,#9aff5d,#1cffdb,#53ffa4,#b1ff46,#d7ff1f,#ebff0c,#f4f802,#feed00,#ffe200,#ffde00,#ffdb00,#ffd700,#ffd300,#ffd300,#ffd300,#ffd300,#ffd300,#ffd700,#ffdb00,#ffde00,#ffe600 99.48%)"></div><div style="top:23.51px;height:4.52px;background:linear-gradient(90deg,#ffdb00 0.52%,#ffd700,#ffd300,#ffd000,#ffcc00,#ffcc00,#ffcc00,#ffcc00,#ffcc00,#ffd000,#ffd300,#ffd700,#ffde00,#ffe600,#fbf100,#eeff09,#dbff1c,#b4ff43,#5aff9d,#1fffd7,#9dff5a,#d4ff23,#eeff09,#fbf100,#ffe200,#ffd700,#ffd000,#ffc800,#ffc400,#ffbd00,#ffb900,#ffb900,#ffb600,#ffb600,#ffb600,#ffb600,#ffb600,#ffb600,#ffb600,#ffb600,#ffb600,#ffb900,#ffb900,#ffb900,#ffb900,#ffb900,#ffb900,#ffb900,#ffb900,#ffb900,#ffb900,#ffb900,#ffb900,#ffb900,#ffb900,#ffb900,#ffb600,#ffb600,#ffb600,#ffb600,#ffb600,#ffb600,#ffb600,#ffb600,#ffb600,#ffb900,#ffb900,#ffbd00,#ffc400,#ffc800,#ffd000,#ffd700,#ffe200,#fbf100,#eeff09,#d4ff23,#9dff5a,#1fffd7,#5aff9d,#b4ff43,#dbff1c,#eeff09,#fbf100,#ffe600,#ffde00,#ffd700,#ffd300,#ffd000,#ffcc00,#ffcc00,#ffcc00,#ffcc00,#ffcc00,#ffd000,#ffd300,#ffd700,#ffdb00 99.48%)"></div><div style="top:27.42px;height:4.52px;background:linear-gradient(90deg,#ffd700 0.52%,#ffd000,#ffcc00,#ffc800,#ffc800,#ffc400,#ffc400,#ffc800,#ffc800,#ffcc00,#ffd000,#ffd300,#ffdb00,#ffe200,#feed00,#f1fc06,#deff19,#b7ff40,#5dff9a,#23ffd4,#a0ff56,#d7ff1f,#eeff09,#feed00,#ffde00,#ffd300,#ffcc00,#ffc400,#ffc100,#ffbd00,#ffb900,#ffb600,#ffb600,#ffb200,#ffb200,#ffb200,#ffb200,#ffb200,#ffb600,#ffb600,#ffb600,#ffb600,#ffb900,#ffb900,#ffb900,#ffb900,#ffb900,#ffb900,#ffb900,#ffb900,#ffb900,#ffb900,#ffb900,#ffb900,#ffb900,#ffb600,#ffb600,#ffb600,#ffb600,#ffb200,#ffb200,#ffb200,#ffb200,#ffb200,#ffb600,#ffb600,#ffb900,#ffbd00,#ffc100,#ffc400,#ffcc00,#ffd300,#ffde00,#feed00,#eeff09,#d7ff1f,#a0ff56,#23ffd4,#5dff9a,#b7ff40,#deff19,#f1fc06,#feed00,#ffe200,#ffdb00,#ffd300,#ffd000,#ffcc00,#ffc800,#ffc800,#ffc400,#ffc400,#ffc800,#ffc800,#ffcc00,#ffd000,#ffd700 99.48%)"></div><div style="top:31.34px;height:4.52px;background:linear-gradient(90deg,#ffd000 0.52%,#ffcc00,#ffc800,#ffc400,#ffc100,#ffc100,#ffc100,#ffc100,#ffc400,#ffc400,#ffc800,#ffd000,#ffd700,#ffde00,#ffea00,#f4f802,#e1ff16,#baff3c,#5dff9a,#26ffd1,#a4ff53,#dbff1c,#f1fc06,#ffea00,#ffde00,#ffd300,#ffcc00,#ffc400,#ffbd00,#ffb900,#ffb600,#ffb600,#ffb200,#ffb200,#ffb200,#ffb200,#ffb200,#ffb200,#ffb600,#ffb600,#ffb600,#ffb900,#ffb900,#ffb900,#ffb900,#ffb900,#ffb900,#ffb900,#ffb900,#ffb900,#ffb900,#ffb900,#ffb900,#ffb900,#ffb900,#ffb900,#ffb600,#ffb600,#ffb600,#ffb200,#ffb200,#ffb200,#ffb200,#ffb200,#ffb200,#ffb600,#ffb600,#ffb900,#ffbd00,#ffc400,#ffcc00,#ffd300,#ffde00,#ffea00,#f1fc06,#dbff1c,#a4ff53,#26ffd1,#5dff9a,#baff3c,#e1ff16,#f4f802,#ffea00,#ffde00,#ffd700,#ffd000,#ffc800,#ffc400,#ffc400,#ffc100,#ffc100,#ffc100,#ffc100,#ffc400,#ffc800,#ffcc00,#ffd000 99.48%)"></div><div style="top:35.26px;height:4.52px;background:linear-gradient(90deg,#ffcc00 0.52%,#ffc400,#ffc400,#ffc100,#ffbd00,#ffbd00,#ffbd00,#ffbd00,#ffc100,#ffc100,#ffc800,#ffcc00,#ffd300,#ffdb00,#ffe600,#f8f500,#e4ff13,#beff39,#60ff97,#29ffce,#a4ff53,#dbff1c,#f4f802,#ffea00,#ffdb00,#ffd000,#ffc800,#ffc100,#ffbd00,#ffb900,#ffb600,#ffb600,#ffb200,#ffb200,#ffb200,#ffb200,#ffb200,#ffb200,#ffb600,#ffb600,#ffb900,#ffb900,#ffb900,#ffb900,#ffbd00,#ffbd00,#ffbd00,#ffbd00,#ffbd00,#ffbd00,#ffbd00,#ffbd00,#ffbd00,#ffb900,#ffb900,#ffb900,#ffb900,#ffb600,#ffb600,#ffb200,#ffb200,#ffb200,#ffb200,#ffb200,#ffb200,#ffb600,#ffb600,#ffb900,#ffbd00,#ffc100,#ffc800,#ffd000,#ffdb00,#ffea00,#f4f802,#dbff1c,#a4ff53,#29ffce,#60ff97,#beff39,#e4ff13,#f8f500,#ffe600,#ffdb00,#ffd300,#ffcc00,#ffc800,#ffc100,#ffc100,#ffbd00,#ffbd00,#ffbd00,#ffbd00,#ffc100,#ffc400,#ffc400,#ffcc00 99.48%)"></div><div style="top:39.18px;height:4.52px;background:linear-gradient(90deg,#ffc800 0.52%,#ffc100,#ffbd00,#ffbd00,#ffb900,#ffb900,#ffb900,#ffb900,#ffbd00,#ffc100,#ffc400,#ffc800,#ffd000,#ffdb00,#ffe600,#f8f500,#e4ff13,#beff39,#60ff97,#29ffce,#a7ff50,#deff19,#f4f802,#ffea00,#ffdb00,#ffd000,#ffc800,#ffc100,#ffbd00,#ffb900,#ffb600,#ffb600,#ffb200,#ffb200,#ffb200,#ffb200,#ffb600,#ffb600,#ffb600,#ffb900,#ffb900,#ffbd00,#ffbd00,#ffbd00,#ffc100,#ffc100,#ffc100,#ffc100,#ffc100,#ffc100,#ffc100,#ffc100,#ffc100,#ffbd00,#ffbd00,#ffbd00,#ffb900,#ffb900,#ffb600,#ffb600,#ffb600,#ffb200,#ffb200,#ffb200,#ffb200,#ffb600,#ffb600,#ffb900,#ffbd00,#ffc100,#ffc800,#ffd000,#ffdb00,#ffea00,#f4f802,#deff19,#a7ff50,#29ffce,#60ff97,#beff39,#e4ff13,#f8f500,#ffe600,#ffdb00,#ffd000,#ffc800,#ffc400,#ffc100,#ffbd00,#ffb900,#ffb900,#ffb900,#ffb900,#ffbd00,#ffbd00,#ffc100,#ffc800 99.48%)"></div><div style="top:43.09px;height:4.52px;background:linear-gradient(90deg,#ffc400 0.52%,#ffbd00,#ffbd00,#ffb900,#ffb900,#ffb600,#ffb600,#ffb900,#ffb900,#ffbd00,#ffc100,#ffc800,#ffd000,#ffd700,#ffe200,#fbf100,#e7ff0f,#beff39,#63ff94,#29ffce,#a7ff50,#deff19,#f4f802,#ffea00,#ffdb00,#ffd300,#ffc800,#ffc400,#ffbd00,#ffb900,#ffb900,#ffb600,#ffb600,#ffb600,#ffb600,#ffb600,#ffb600,#ffb900,#ffb900,#ffbd00,#ffbd00,#ffc100,#ffc100,#ffc400,#ffc400,#ffc400,#ffc400,#ffc400,#ffc400,#ffc400,#ffc400,#ffc400,#ffc400,#ffc400,#ffc100,#ffc100,#ffbd00,#ffbd00,#ffb900,#ffb900,#ffb600,#ffb600,#ffb600,#ffb600,#ffb600,#ffb600,#ffb900,#ffb900,#ffbd00,#ffc400,#ffc800,#ffd300,#ffdb00,#ffea00,#f4f802,#deff19,#a7ff50,#29ffce,#63ff94,#beff39,#e7ff0f,#fbf100,#ffe200,#ffd700,#ffd000,#ffc800,#ffc100,#ffbd00,#ffb900,#ffb900,#ffb600,#ffb600,#ffb900,#ffb900,#ffbd00,#ffbd00,#ffc400 99.48%)"></div><div style="top:47.01px;height:4.52px;background:linear-gradient(90deg,#ffc100 0.52%,#ffbd00,#ffb900,#ffb600,#ffb600,#ffb600,#ffb600,#ffb600,#ffb900,#ffbd00,#ffc100,#ffc800,#ffd000,#ffd700,#ffe200,#fbf100,#e7ff0f,#beff39,#60ff97,#29ffce,#a4ff53,#dbff1c,#f1fc06,#ffea00,#ffde00,#ffd300,#ffcc00,#ffc800,#ffc100,#ffbd00,#ffbd00,#ffb900,#ffb900,#ffb900,#ffb900,#ffb900,#ffbd00,#ffbd00,#ffc100,#ffc400,#ffc400,#ffc800,#ffc800,#ffcc00,#ffcc00,#ffcc00,#ffcc00,#ffcc00,#ffcc00,#ffcc00,#ffcc00,#ffcc00,#ffcc00,#ffcc00,#ffc800,#ffc800,#ffc400,#ffc400,#ffc100,#ffbd00,#ffbd00,#ffb900,#ffb900,#ffb900,#ffb900,#ffb900,#ffbd00,#ffbd00,#ffc100,#ffc800,#ffcc00,#ffd300,#ffde00,#ffea00,#f1fc06,#dbff1c,#a4ff53,#29ffce,#60ff97,#beff39,#e7ff0f,#fbf100,#ffe200,#ffd700,#ffd000,#ffc800,#ffc100,#ffbd00,#ffb900,#ffb600,#ffb600,#ffb600,#ffb600,#ffb600,#ffb900,#ffbd00,#ffc100 99.48%)"></div><div style="top:50.93px;height:4.52px;background:linear-gradient(90deg,#ffbd00 0.52%,#ffb900,#ffb600,#ffb600,#ffb600,#ffb600,#ffb600,#ffb600,#ffb900,#ffbd00,#ffc100,#ffc800,#ffd000,#ffd700,#ffe600,#f8f500,#e4ff13,#beff39,#60ff97,#26ffd1,#a4ff53,#d7ff1f,#f1fc06,#feed00,#ffe200,#ffd700,#ffd000,#ffcc00,#ffc800,#ffc400,#ffc100,#ffc100,#ffc100,#ffc100,#ffc100,#ffc100,#ffc400,#ffc400,#ffc800,#ffcc00,#ffd000,#ffd000,#ffd300,#ffd300,#ffd700,#ffd700,#ffd700,#ffd700,#ffd700,#ffd700,#ffd700,#ffd700,#ffd700,#ffd300,#ffd300,#ffd000,#ffd000,#ffcc00,#ffc800,#ffc400,#ffc400,#ffc100,#ffc100,#ffc100,#ffc100,#ffc100,#ffc100,#ffc400,#ffc800,#ffcc00,#ffd000,#ffd700,#ffe200,#feed00,#f1fc06,#d7ff1f,#a4ff53,#26ffd1,#60ff97,#beff39,#e4ff13,#f8f500,#ffe600,#ffd700,#ffd000,#ffc800,#ffc100,#ffbd00,#ffb900,#ffb600,#ffb600,#ffb600,#ffb600,#ffb600,#ffb600,#ffb900,#ffbd00 99.48%)"></div><div style="top:54.85px;height:4.52px;background:linear-gradient(90deg,#ffbd00 0.52%,#ffb900,#ffb600,#ffb600,#ffb600,#ffb600,#ffb600,#ffb600,#ffb900,#ffbd00,#ffc100,#ffc800,#ffd000,#ffdb00,#ffe600,#f8f500,#e4ff13,#baff3c,#5dff9a,#23ffd4,#a0ff56,#d4ff23,#ebff0c,#fbf100,#ffe600,#ffde00,#ffd700,#ffd000,#ffcc00,#ffcc00,#ffc800,#ffc800,#ffc800,#ffc800,#ffc800,#ffcc00,#ffd000,#ffd000,#ffd300,#ffd700,#ffdb00,#ffde00,#ffe200,#ffe200,#ffe600,#ffe600,#ffe600,#ffe600,#ffe600,#ffe600,#ffe600,#ffe600,#ffe600,#ffe200,#ffe200,#ffde00,#ffdb00,#ffd700,#ffd300,#ffd000,#ffd000,#ffcc00,#ffc800,#ffc800,#ffc800,#ffc800,#ffc800,#ffcc00,#ffcc00,#ffd000,#ffd700,#ffde00,#ffe600,#fbf100,#ebff0c,#d4ff23,#a0ff56,#23ffd4,#5dff9a,#baff3c,#e4ff13,#f8f500,#ffe600,#ffdb00,#ffd000,#ffc800,#ffc100,#ffbd00,#ffb900,#ffb600,#ffb600,#ffb600,#ffb600,#ffb600,#ffb600,#ffb900,#ffbd00 99.48%)"></div><div style="top:58.76px;height:4.52px;background:linear-gradient(90deg,#ffbd00 0.52%,#ffb900,#ffb600,#ffb600,#ffb600,#ffb600,#ffb600,#ffb900,#ffb900,#ffbd00,#ffc400,#ffcc00,#ffd300,#ffde00,#ffea00,#f4f802,#deff19,#b7ff40,#5aff9d,#1fffd7,#9aff5d,#d1ff26,#e4ff13,#f4f802,#feed00,#ffe600,#ffde00,#ffdb00,#ffd700,#ffd700,#ffd300,#ffd300,#ffd700,#ffd700,#ffdb00,#ffdb00,#ffde00,#ffe200,#ffea00,#feed00,#fbf100,#f8f500,#f4f802,#f1fc06,#eeff09,#eeff09,#ebff0c,#ebff0c,#ebff0c,#ebff0c,#ebff0c,#eeff09,#eeff09,#f1fc06,#f4f802,#f8f500,#fbf100,#feed00,#ffea00,#ffe200,#ffde00,#ffdb00,#ffdb00,#ffd700,#ffd700,#ffd300,#ffd300,#ffd700,#ffd700,#ffdb00,#ffde00,#ffe600,#feed00,#f4f802,#e4ff13,#d1ff26,#9aff5d,#1fffd7,#5aff9d,#b7ff40,#deff19,#f4f802,#ffea00,#ffde00,#ffd300,#ffcc00,#ffc400,#ffbd00,#ffb900,#ffb900,#ffb600,#ffb600,#ffb600,#ffb600,#ffb600,#ffb900,#ffbd00 99.48%)"></div><div style="top:62.68px;height:4.52px;background:linear-gradient(90deg,#ffbd00 0.52%,#ffb900,#ffb600,#ffb600,#ffb600,#ffb600,#ffb600,#ffb900,#ffbd00,#ffc100,#ffc800,#ffd000,#ffd700,#ffe200,#feed00,#eeff09,#dbff1c,#b1ff46,#53ffa4,#19ffde,#94ff63,#c7ff30,#deff19,#ebff0c,#f1fc06,#f8f500,#feed00,#ffea00,#ffea00,#ffea00,#ffea00,#feed00,#feed00,#f8f500,#f4f802,#eeff09,#e7ff0f,#e1ff16,#dbff1c,#d4ff23,#ceff29,#c7ff30,#c1ff36,#baff3c,#b7ff40,#b4ff43,#b1ff46,#b1ff46,#b1ff46,#b1ff46,#b1ff46,#b4ff43,#b7ff40,#baff3c,#c1ff36,#c7ff30,#ceff29,#d4ff23,#dbff1c,#e1ff16,#e7ff0f,#eeff09,#f4f802,#f8f500,#feed00,#feed00,#ffea00,#ffea00,#ffea00,#ffea00,#feed00,#f8f500,#f1fc06,#ebff0c,#deff19,#c7ff30,#94ff63,#19ffde,#53ffa4,#b1ff46,#dbff1c,#eeff09,#feed00,#ffe200,#ffd700,#ffd000,#ffc800,#ffc100,#ffbd00,#ffb900,#ffb600,#ffb600,#ffb600,#ffb600,#ffb600,#ffb900,#ffbd00 99.48%)"></div><div style="top:66.60px;height:4.52px;background:linear-gradient(90deg,#ffbd00 0.52%,#ffb900,#ffb900,#ffb600,#ffb600,#ffb900,#ffb900,#ffbd00,#ffc100,#ffc400,#ffcc00,#ffd300,#ffde00,#ffea00,#f8f500,#e7ff0f,#d1ff26,#aaff4d,#49ffad,#0ff9e7,#87ff70,#baff3c,#d1ff26,#dbff1c,#e1ff16,#e4ff13,#e7ff0f,#e4ff13,#e1ff16,#deff19,#d7ff1f,#ceff29,#c7ff30,#baff3c,#b1ff46,#a4ff53,#97ff60,#8aff6d,#7aff7d,#6dff8a,#5dff9a,#49ffad,#36ffc1,#23ffd4,#0cf4eb,#00d9ff,#00bcff,#00a4ff,#009cff,#00a4ff,#00bcff,#00d9ff,#0cf4eb,#23ffd4,#36ffc1,#49ffad,#5dff9a,#6dff8a,#7aff7d,#8aff6d,#97ff60,#a4ff53,#b1ff46,#baff3c,#c7ff30,#ceff29,#d7ff1f,#deff19,#e1ff16,#e4ff13,#e7ff0f,#e4ff13,#e1ff16,#dbff1c,#d1ff26,#baff3c,#87ff70,#0ff9e7,#49ffad,#aaff4d,#d1ff26,#e7ff0f,#f8f500,#ffea00,#ffde00,#ffd300,#ffcc00,#ffc400,#ffc100,#ffbd00,#ffb900,#ffb900,#ffb600,#ffb600,#ffb900,#ffb900,#ffbd00 99.48%)"></div><div style="top:70.52px;height:4.52px;background:linear-gradient(90deg,#ffbd00 0.52%,#ffbd00,#ffb900,#ffb900,#ffb900,#ffbd00,#ffbd00,#ffc100,#ffc400,#ffcc00,#ffd300,#ffdb00,#ffe600,#fbf100,#eeff09,#deff19,#c7ff30,#9dff5a,#3cffba,#00e4f8,#77ff80,#a4ff53,#b4ff43,#baff3c,#baff3c,#b4ff43,#adff49,#a4ff53,#97ff60,#87ff70,#70ff87,#53ffa4,#16ffe1,#00e4f8,#46ffb1,#66ff90,#7aff7d,#8aff6d,#94ff63,#9aff5d,#a0ff56,#a4ff53,#a7ff50,#aaff4d,#adff49,#adff49,#b1ff46,#b1ff46,#b1ff46,#b1ff46,#b1ff46,#adff49,#adff49,#aaff4d,#a7ff50,#a4ff53,#a0ff56,#9aff5d,#94ff63,#8aff6d,#7aff7d,#66ff90,#46ffb1,#00e4f8,#16ffe1,#53ffa4,#70ff87,#87ff70,#97ff60,#a4ff53,#adff49,#b4ff43,#baff3c,#baff3c,#b4ff43,#a4ff53,#77ff80,#00e4f8,#3cffba,#9dff5a,#c7ff30,#deff19,#eeff09,#fbf100,#ffe600,#ffdb00,#ffd300,#ffcc00,#ffc400,#ffc100,#ffbd00,#ffbd00,#ffb900,#ffb900,#ffb900,#ffbd00,#ffbd00 99.48%)"></div><div style="top:74.43px;height:4.52px;background:linear-gradient(90deg,#ffc100 0.52%,#ffc100,#ffbd00,#ffbd00,#ffc100,#ffc100,#ffc400,#ffc800,#ffcc00,#ffd300,#ffdb00,#ffe600,#fbf100,#eeff09,#e1ff16,#ceff29,#b7ff40,#87ff70,#1fffd7,#00b9ff,#49ffad,#70ff87,#73ff83,#6dff8a,#5dff9a,#3cffba,#00c0ff,#29ffce,#63ff94,#83ff73,#9dff5a,#b1ff46,#c1ff36,#ceff29,#d7ff1f,#e1ff16,#e7ff0f,#eeff09,#f1fc06,#f1fc06,#f4f802,#f4f802,#f4f802,#f4f802,#f4f802,#f4f802,#f4f802,#f4f802,#f4f802,#f4f802,#f4f802,#f4f802,#f4f802,#f4f802,#f4f802,#f4f802,#f4f802,#f1fc06,#f1fc06,#eeff09,#e7ff0f,#e1ff16,#d7ff1f,#ceff29,#c1ff36,#b1ff46,#9dff5a,#83ff73,#63ff94,#29ffce,#00c0ff,#3cffba,#5dff9a,#6dff8a,#73ff83,#70ff87,#49ffad,#00b9ff,#1fffd7,#87ff70,#b7ff40,#ceff29,#e1ff16,#eeff09,#fbf100,#ffe600,#ffdb00,#ffd300,#ffcc00,#ffc800,#ffc400,#ffc100,#ffc100,#ffbd00,#ffbd00,#ffc100,#ffc100 99.48%)"></div><div style="top:78.35px;height:4.52px;background:linear-gradient(90deg,#ffc400 0.52%,#ffc400,#ffc400,#ffc400,#ffc400,#ffc800,#ffcc00,#ffd000,#ffd700,#ffde00,#ffea00,#f8f500,#ebff0c,#deff19,#caff2c,#b1ff46,#8dff6a,#53ffa4,#00bcff,#0055ff,#00c4ff,#00b4ff,#00ccff,#40ffb7,#70ff87,#90ff66,#adff49,#c4ff33,#d7ff1f,#e7ff0f,#f4f802,#ffea00,#ffe200,#ffdb00,#ffd300,#ffd000,#ffcc00,#ffcc00,#ffcc00,#ffcc00,#ffcc00,#ffd000,#ffd000,#ffd300,#ffd300,#ffd300,#ffd300,#ffd300,#ffd300,#ffd300,#ffd300,#ffd300,#ffd300,#ffd300,#ffd000,#ffd000,#ffcc00,#ffcc00,#ffcc00,#ffcc00,#ffcc00,#ffd000,#ffd300,#ffdb00,#ffe200,#ffea00,#f4f802,#e7ff0f,#d7ff1f,#c4ff33,#adff49,#90ff66,#70ff87,#40ffb7,#00ccff,#00b4ff,#00c4ff,#0055ff,#00bcff,#53ffa4,#8dff6a,#b1ff46,#caff2c,#deff19,#ebff0c,#f8f500,#ffea00,#ffde00,#ffd700,#ffd000,#ffcc00,#ffc800,#ffc400,#ffc400,#ffc400,#ffc400,#ffc400 99.48%)"></div><div style="top:82.27px;height:4.52px;background:linear-gradient(90deg,#ffc800 0.52%,#ffc800,#ffc800,#ffcc00,#ffcc00,#ffd000,#ffd700,#ffde00,#ffe600,#fbf100,#f1fc06,#e1ff16,#ceff29,#b4ff43,#94ff63,#6aff8d,#33ffc4,#00a9ff,#0008ff,#002dff,#0cf4eb,#60ff97,#90ff66,#b1ff46,#ceff29,#e1ff16,#f4f802,#ffea00,#ffdb00,#ffd000,#ffc400,#ffbd00,#ffb900,#ffb600,#ffb200,#ffae00,#ffae00,#ffae00,#ffae00,#ffae00,#ffb200,#ffb600,#ffb600,#ffb900,#ffbd00,#ffbd00,#ffbd00,#ffbd00,#ffbd00,#ffbd00,#ffbd00,#ffbd00,#ffbd00,#ffb900,#ffb600,#ffb600,#ffb200,#ffae00,#ffae00,#ffae00,#ffae00,#ffae00,#ffb200,#ffb600,#ffb900,#ffbd00,#ffc400,#ffd000,#ffdb00,#ffea00,#f4f802,#e1ff16,#ceff29,#b1ff46,#90ff66,#60ff97,#0cf4eb,#002dff,#0008ff,#00a9ff,#33ffc4,#6aff8d,#94ff63,#b4ff43,#ceff29,#e1ff16,#f1fc06,#fbf100,#ffe600,#ffde00,#ffd700,#ffd000,#ffcc00,#ffcc00,#ffc800,#ffc800,#ffc800 99.48%)"></div><div style="top:86.19px;height:4.52px;background:linear-gradient(90deg,#ffd000 0.52%,#ffd000,#ffd300,#ffd300,#ffd700,#ffde00,#ffe600,#fbf100,#f1fc06,#deff19,#caff2c,#aaff4d,#87ff70,#56ffa0,#00d9ff,#13fce4,#3cffba,#39ffbe,#00dcfe,#00b4ff,#66ff90,#aaff4d,#ceff29,#e7ff0f,#fbf100,#ffe200,#ffd300,#ffc400,#ffb900,#ffb200,#ffab00,#ffa300,#ff9f00,#ff9c00,#ff9800,#ff9800,#ff9800,#ff9800,#ff9800,#ff9c00,#ff9c00,#ff9f00,#ffa300,#ffa700,#ffab00,#ffab00,#ffab00,#ffab00,#ffab00,#ffab00,#ffab00,#ffab00,#ffab00,#ffa700,#ffa300,#ff9f00,#ff9c00,#ff9c00,#ff9800,#ff9800,#ff9800,#ff9800,#ff9800,#ff9c00,#ff9f00,#ffa300,#ffab00,#ffb200,#ffb900,#ffc400,#ffd300,#ffe200,#fbf100,#e7ff0f,#ceff29,#aaff4d,#66ff90,#00b4ff,#00dcfe,#39ffbe,#3cffba,#13fce4,#00d9ff,#56ffa0,#87ff70,#aaff4d,#caff2c,#deff19,#f1fc06,#fbf100,#ffe600,#ffde00,#ffd700,#ffd300,#ffd300,#ffd000,#ffd000 99.48%)"></div><div style="top:90.10px;height:4.52px;background:linear-gradient(90deg,#ffd700 0.52%,#ffdb00,#ffde00,#ffe200,#ffea00,#fbf100,#eeff09,#dbff1c,#c1ff36,#a0ff56,#73ff83,#1fffd7,#2cffca,#66ff90,#87ff70,#97ff60,#9aff5d,#87ff70,#36ffc1,#09f0ee,#90ff66,#ceff29,#ebff0c,#ffea00,#ffd700,#ffc800,#ffb900,#ffae00,#ffa300,#ff9c00,#ff9400,#ff9100,#ff8d00,#ff8900,#ff8600,#ff8600,#ff8600,#ff8600,#ff8600,#ff8900,#ff8d00,#ff9100,#ff9400,#ff9800,#ff9800,#ff9c00,#ff9c00,#ff9c00,#ff9c00,#ff9c00,#ff9c00,#ff9c00,#ff9800,#ff9800,#ff9400,#ff9100,#ff8d00,#ff8900,#ff8600,#ff8600,#ff8600,#ff8600,#ff8600,#ff8900,#ff8d00,#ff9100,#ff9400,#ff9c00,#ffa300,#ffae00,#ffb900,#ffc800,#ffd700,#ffea00,#ebff0c,#ceff29,#90ff66,#09f0ee,#36ffc1,#87ff70,#9aff5d,#97ff60,#87ff70,#66ff90,#2cffca,#1fffd7,#73ff83,#a0ff56,#c1ff36,#dbff1c,#eeff09,#fbf100,#ffea00,#ffe200,#ffde00,#ffdb00,#ffd700 99.48%)"></div><div style="top:94.02px;height:4.52px;background:linear-gradient(90deg,#ffe200 0.52%,#ffe600,#feed00,#f8f500,#ebff0c,#d7ff1f,#baff3c,#94ff63,#5aff9d,#00d4ff,#6aff8d,#94ff63,#b1ff46,#c4ff33,#ceff29,#d1ff26,#c7ff30,#aaff4d,#56ffa0,#26ffd1,#a7ff50,#e4ff13,#ffea00,#ffd300,#ffc100,#ffb200,#ffa700,#ff9c00,#ff9100,#ff8900,#ff8200,#ff7e00,#ff7a00,#ff7700,#ff7300,#ff7300,#ff7300,#ff7300,#ff7700,#ff7a00,#ff7e00,#ff8200,#ff8600,#ff8900,#ff8d00,#ff8d00,#ff9100,#ff9100,#ff9100,#ff9100,#ff9100,#ff8d00,#ff8d00,#ff8900,#ff8600,#ff8200,#ff7e00,#ff7a00,#ff7700,#ff7300,#ff7300,#ff7300,#ff7300,#ff7700,#ff7a00,#ff7e00,#ff8200,#ff8900,#ff9100,#ff9c00,#ffa700,#ffb200,#ffc100,#ffd300,#ffea00,#e4ff13,#a7ff50,#26ffd1,#56ffa0,#aaff4d,#c7ff30,#d1ff26,#ceff29,#c4ff33,#b1ff46,#94ff63,#6aff8d,#00d4ff,#5aff9d,#94ff63,#baff3c,#d7ff1f,#ebff0c,#f8f500,#feed00,#ffe600,#ffe200 99.48%)"></div><div style="top:97.94px;height:4.52px;background:linear-gradient(90deg,#fbf100 0.52%,#f1fc06,#e7ff0f,#d4ff23,#b4ff43,#8aff6d,#40ffb7,#3cffba,#87ff70,#b1ff46,#ceff29,#e1ff16,#ebff0c,#f1fc06,#f1fc06,#ebff0c,#e1ff16,#c1ff36,#6aff8d,#36ffc1,#baff3c,#f4f802,#ffd700,#ffc100,#ffae00,#ff9f00,#ff9400,#ff8900,#ff8200,#ff7a00,#ff7300,#ff6f00,#ff6c00,#ff6800,#ff6400,#ff6400,#ff6400,#ff6400,#ff6800,#ff6c00,#ff6f00,#ff7300,#ff7700,#ff7e00,#ff8200,#ff8200,#ff8600,#ff8600,#ff8600,#ff8600,#ff8600,#ff8200,#ff8200,#ff7e00,#ff7700,#ff7300,#ff6f00,#ff6c00,#ff6800,#ff6400,#ff6400,#ff6400,#ff6400,#ff6800,#ff6c00,#ff6f00,#ff7300,#ff7a00,#ff8200,#ff8900,#ff9400,#ff9f00,#ffae00,#ffc100,#ffd700,#f4f802,#baff3c,#36ffc1,#6aff8d,#c1ff36,#e1ff16,#ebff0c,#f1fc06,#f1fc06,#ebff0c,#e1ff16,#ceff29,#b1ff46,#87ff70,#3cffba,#40ffb7,#8aff6d,#b4ff43,#d4ff23,#e7ff0f,#f1fc06,#fbf100 99.48%)"></div><div style="top:101.86px;height:4.52px;background:linear-gradient(90deg,#e4ff13 0.52%,#d1ff26,#b4ff43,#87ff70,#36ffc1,#50ffa7,#97ff60,#c1ff36,#deff19,#f1fc06,#fbf100,#ffe600,#ffe200,#ffe200,#ffe600,#feed00,#f1fc06,#d1ff26,#7aff7d,#46ffb1,#c7ff30,#ffea00,#ffc800,#ffb200,#ff9f00,#ff9100,#ff8600,#ff7a00,#ff7300,#ff6c00,#ff6400,#ff6000,#ff5d00,#ff5900,#ff5900,#ff5900,#ff5900,#ff5900,#ff5900,#ff5d00,#ff6000,#ff6800,#ff6c00,#ff7300,#ff7700,#ff7a00,#ff7a00,#ff7a00,#ff7a00,#ff7a00,#ff7a00,#ff7a00,#ff7700,#ff7300,#ff6c00,#ff6800,#ff6000,#ff5d00,#ff5900,#ff5900,#ff5900,#ff5900,#ff5900,#ff5900,#ff5d00,#ff6000,#ff6400,#ff6c00,#ff7300,#ff7a00,#ff8600,#ff9100,#ff9f00,#ffb200,#ffc800,#ffea00,#c7ff30,#46ffb1,#7aff7d,#d1ff26,#f1fc06,#feed00,#ffe600,#ffe200,#ffe200,#ffe600,#fbf100,#f1fc06,#deff19,#c1ff36,#97ff60,#50ffa7,#36ffc1,#87ff70,#b4ff43,#d1ff26,#e4ff13 99.48%)"></div><div style="top:105.77px;height:4.52px;background:linear-gradient(90deg,#b4ff43 0.52%,#8aff6d,#40ffb7,#49ffad,#97ff60,#c4ff33,#e4ff13,#f8f500,#ffe600,#ffdb00,#ffd300,#ffd000,#ffcc00,#ffd000,#ffd300,#ffdb00,#ffea00,#deff19,#87ff70,#53ffa4,#d4ff23,#ffdb00,#ffb900,#ffa300,#ff9400,#ff8600,#ff7a00,#ff6f00,#ff6800,#ff6000,#ff5900,#ff5500,#ff5200,#ff4e00,#ff4a00,#ff4a00,#ff4a00,#ff4e00,#ff4e00,#ff5200,#ff5500,#ff5d00,#ff6000,#ff6800,#ff6c00,#ff6f00,#ff7300,#ff7300,#ff7300,#ff7300,#ff7300,#ff6f00,#ff6c00,#ff6800,#ff6000,#ff5d00,#ff5500,#ff5200,#ff4e00,#ff4e00,#ff4a00,#ff4a00,#ff4a00,#ff4e00,#ff5200,#ff5500,#ff5900,#ff6000,#ff6800,#ff6f00,#ff7a00,#ff8600,#ff9400,#ffa300,#ffb900,#ffdb00,#d4ff23,#53ffa4,#87ff70,#deff19,#ffea00,#ffdb00,#ffd300,#ffd000,#ffcc00,#ffd000,#ffd300,#ffdb00,#ffe600,#f8f500,#e4ff13,#c4ff33,#97ff60,#49ffad,#40ffb7,#8aff6d,#b4ff43 99.48%)"></div><div style="top:109.69px;height:4.52px;background:linear-gradient(90deg,#56ffa0 0.52%,#26ffd1,#8aff6d,#beff39,#e1ff16,#fbf100,#ffe200,#ffd300,#ffcc00,#ffc400,#ffc100,#ffbd00,#ffbd00,#ffbd00,#ffc400,#ffcc00,#ffdb00,#ebff0c,#94ff63,#60ff97,#deff19,#ffcc00,#ffae00,#ff9800,#ff8900,#ff7a00,#ff6f00,#ff6400,#ff5d00,#ff5500,#ff4e00,#ff4a00,#ff4700,#ff4300,#ff3f00,#ff3f00,#ff3f00,#ff4300,#ff4300,#ff4700,#ff4a00,#ff5200,#ff5500,#ff5d00,#ff6400,#ff6800,#ff6c00,#ff6c00,#ff6c00,#ff6c00,#ff6c00,#ff6800,#ff6400,#ff5d00,#ff5500,#ff5200,#ff4a00,#ff4700,#ff4300,#ff4300,#ff3f00,#ff3f00,#ff3f00,#ff4300,#ff4700,#ff4a00,#ff4e00,#ff5500,#ff5d00,#ff6400,#ff6f00,#ff7a00,#ff8900,#ff9800,#ffae00,#ffcc00,#deff19,#60ff97,#94ff63,#ebff0c,#ffdb00,#ffcc00,#ffc400,#ffbd00,#ffbd00,#ffbd00,#ffc100,#ffc400,#ffcc00,#ffd300,#ffe200,#fbf100,#e1ff16,#beff39,#8aff6d,#26ffd1,#56ffa0 99.48%)"></div><div style="top:113.61px;height:4.52px;background:linear-gradient(90deg,#6dff8a 0.52%,#adff49,#d7ff1f,#f4f802,#ffe200,#ffd300,#ffc800,#ffc100,#ffb900,#ffb200,#ffae00,#ffae00,#ffae00,#ffb200,#ffb600,#ffc100,#ffd000,#f4f802,#9dff5a,#6aff8d,#e7ff0f,#ffc100,#ffa300,#ff8d00,#ff7e00,#ff6f00,#ff6400,#ff5900,#ff5200,#ff4a00,#ff4300,#ff3f00,#ff3b00,#ff3800,#ff3400,#ff3400,#ff3400,#ff3800,#ff3800,#ff3b00,#ff3f00,#ff4700,#ff4e00,#ff5500,#ff5900,#ff6000,#ff6400,#ff6400,#ff6400,#ff6400,#ff6400,#ff6000,#ff5900,#ff5500,#ff4e00,#ff4700,#ff3f00,#ff3b00,#ff3800,#ff3800,#ff3400,#ff3400,#ff3400,#ff3800,#ff3b00,#ff3f00,#ff4300,#ff4a00,#ff5200,#ff5900,#ff6400,#ff6f00,#ff7e00,#ff8d00,#ffa300,#ffc100,#e7ff0f,#6aff8d,#9dff5a,#f4f802,#ffd000,#ffc100,#ffb600,#ffb200,#ffae00,#ffae00,#ffae00,#ffb200,#ffb900,#ffc100,#ffc800,#ffd300,#ffe200,#f4f802,#d7ff1f,#adff49,#6dff8a 99.48%)"></div><div style="top:117.53px;height:4.52px;background:linear-gradient(90deg,#c4ff33 0.52%,#e7ff0f,#feed00,#ffdb00,#ffcc00,#ffc100,#ffb600,#ffae00,#ffab00,#ffa300,#ffa300,#ff9f00,#ffa300,#ffa300,#ffab00,#ffb600,#ffc400,#feed00,#a7ff50,#70ff87,#f1fc06,#ffb900,#ff9800,#ff8600,#ff7300,#ff6400,#ff5900,#ff4e00,#ff4700,#ff3f00,#ff3800,#ff3400,#ff3000,#ff2d00,#ff2d00,#ff2900,#ff2d00,#ff2d00,#ff2d00,#ff3000,#ff3800,#ff3b00,#ff4300,#ff4a00,#ff5200,#ff5900,#ff5d00,#ff5d00,#ff5d00,#ff5d00,#ff5d00,#ff5900,#ff5200,#ff4a00,#ff4300,#ff3b00,#ff3800,#ff3000,#ff2d00,#ff2d00,#ff2d00,#ff2900,#ff2d00,#ff2d00,#ff3000,#ff3400,#ff3800,#ff3f00,#ff4700,#ff4e00,#ff5900,#ff6400,#ff7300,#ff8600,#ff9800,#ffb900,#f1fc06,#70ff87,#a7ff50,#feed00,#ffc400,#ffb600,#ffab00,#ffa300,#ffa300,#ff9f00,#ffa300,#ffa300,#ffab00,#ffae00,#ffb600,#ffc100,#ffcc00,#ffdb00,#feed00,#e7ff0f,#c4ff33 99.48%)"></div><div style="top:121.44px;height:4.52px;background:linear-gradient(90deg,#f1fc06 0.52%,#ffe600,#ffd300,#ffc400,#ffb900,#ffae00,#ffa700,#ff9f00,#ff9c00,#ff9800,#ff9400,#ff9400,#ff9800,#ff9c00,#ff9f00,#ffab00,#ffb900,#ffe200,#adff49,#7aff7d,#fbf100,#ffae00,#ff9100,#ff7a00,#ff6c00,#ff5d00,#ff5200,#ff4700,#ff3f00,#ff3800,#ff3000,#ff2d00,#ff2900,#ff2500,#ff2200,#ff2200,#ff2200,#ff2200,#ff2500,#ff2900,#ff2d00,#ff3400,#ff3b00,#ff4300,#ff4a00,#ff5200,#ff5500,#ff5500,#ff5900,#ff5500,#ff5500,#ff5200,#ff4a00,#ff4300,#ff3b00,#ff3400,#ff2d00,#ff2900,#ff2500,#ff2200,#ff2200,#ff2200,#ff2200,#ff2500,#ff2900,#ff2d00,#ff3000,#ff3800,#ff3f00,#ff4700,#ff5200,#ff5d00,#ff6c00,#ff7a00,#ff9100,#ffae00,#fbf100,#7aff7d,#adff49,#ffe200,#ffb900,#ffab00,#ff9f00,#ff9c00,#ff9800,#ff9400,#ff9400,#ff9800,#ff9c00,#ff9f00,#ffa700,#ffae00,#ffb900,#ffc400,#ffd300,#ffe600,#f1fc06 99.48%)"></div><div style="top:125.36px;height:4.52px;background:linear-gradient(90deg,#ffe200 0.52%,#ffd000,#ffc400,#ffb600,#ffab00,#ffa300,#ff9c00,#ff9400,#ff9100,#ff8d00,#ff8d00,#ff8d00,#ff8d00,#ff9100,#ff9800,#ffa300,#ffb200,#ffdb00,#b4ff43,#80ff77,#ffea00,#ffa700,#ff8900,#ff7300,#ff6000,#ff5500,#ff4700,#ff3f00,#ff3400,#ff2d00,#ff2900,#ff2200,#ff1e00,#ff1a00,#ff1a00,#ff1600,#ff1600,#ff1a00,#ff1a00,#ff1e00,#ff2500,#ff2900,#ff3000,#ff3b00,#ff4300,#ff4a00,#ff4e00,#ff5200,#ff5200,#ff5200,#ff4e00,#ff4a00,#ff4300,#ff3b00,#ff3000,#ff2900,#ff2500,#ff1e00,#ff1a00,#ff1a00,#ff1600,#ff1600,#ff1a00,#ff1a00,#ff1e00,#ff2200,#ff2900,#ff2d00,#ff3400,#ff3f00,#ff4700,#ff5500,#ff6000,#ff7300,#ff8900,#ffa700,#ffea00,#80ff77,#b4ff43,#ffdb00,#ffb200,#ffa300,#ff9800,#ff9100,#ff8d00,#ff8d00,#ff8d00,#ff8d00,#ff9100,#ff9400,#ff9c00,#ffa300,#ffab00,#ffb600,#ffc400,#ffd000,#ffe200 99.48%)"></div><div style="top:129.28px;height:4.52px;background:linear-gradient(90deg,#ffd000 0.52%,#ffc100,#ffb600,#ffab00,#ff9f00,#ff9800,#ff9100,#ff8d00,#ff8600,#ff8600,#ff8200,#ff8200,#ff8600,#ff8900,#ff9100,#ff9800,#ffab00,#ffd300,#baff3c,#87ff70,#ffe200,#ff9f00,#ff8200,#ff6c00,#ff5900,#ff4e00,#ff3f00,#ff3800,#ff2d00,#ff2500,#ff2200,#ff1a00,#ff1600,#ff1300,#fa0f00,#fa0f00,#fa0f00,#fa0f00,#ff1300,#ff1600,#ff1a00,#ff2200,#ff2900,#ff3000,#ff3b00,#ff4300,#ff4a00,#ff4e00,#ff4e00,#ff4e00,#ff4a00,#ff4300,#ff3b00,#ff3000,#ff2900,#ff2200,#ff1a00,#ff1600,#ff1300,#fa0f00,#fa0f00,#fa0f00,#fa0f00,#ff1300,#ff1600,#ff1a00,#ff2200,#ff2500,#ff2d00,#ff3800,#ff3f00,#ff4e00,#ff5900,#ff6c00,#ff8200,#ff9f00,#ffe200,#87ff70,#baff3c,#ffd300,#ffab00,#ff9800,#ff9100,#ff8900,#ff8600,#ff8200,#ff8200,#ff8600,#ff8600,#ff8d00,#ff9100,#ff9800,#ff9f00,#ffab00,#ffb600,#ffc100,#ffd000 99.48%)"></div><div style="top:133.20px;height:4.52px;background:linear-gradient(90deg,#ffc400 0.52%,#ffb600,#ffab00,#ff9f00,#ff9400,#ff8d00,#ff8900,#ff8200,#ff7e00,#ff7e00,#ff7a00,#ff7a00,#ff7e00,#ff8200,#ff8900,#ff9100,#ffa300,#ffcc00,#c1ff36,#8dff6a,#ffdb00,#ff9800,#ff7a00,#ff6400,#ff5200,#ff4700,#ff3800,#ff3000,#ff2500,#ff1e00,#ff1a00,#ff1300,#fa0f00,#f60b00,#f10800,#f10800,#f10800,#f10800,#f10800,#f60b00,#ff1300,#ff1600,#ff1e00,#ff2900,#ff3400,#ff3f00,#ff4700,#ff4700,#ff4a00,#ff4700,#ff4700,#ff3f00,#ff3400,#ff2900,#ff1e00,#ff1600,#ff1300,#f60b00,#f10800,#f10800,#f10800,#f10800,#f10800,#f60b00,#fa0f00,#ff1300,#ff1a00,#ff1e00,#ff2500,#ff3000,#ff3800,#ff4700,#ff5200,#ff6400,#ff7a00,#ff9800,#ffdb00,#8dff6a,#c1ff36,#ffcc00,#ffa300,#ff9100,#ff8900,#ff8200,#ff7e00,#ff7a00,#ff7a00,#ff7e00,#ff7e00,#ff8200,#ff8900,#ff8d00,#ff9400,#ff9f00,#ffab00,#ffb600,#ffc400 99.48%)"></div><div style="top:137.11px;height:4.52px;background:linear-gradient(90deg,#ffb600 0.52%,#ffab00,#ff9f00,#ff9400,#ff8d00,#ff8600,#ff7e00,#ff7a00,#ff7700,#ff7700,#ff7300,#ff7300,#ff7700,#ff7a00,#ff8200,#ff8d00,#ff9c00,#ffc400,#c7ff30,#94ff63,#ffd700,#ff9100,#ff7300,#ff5d00,#ff4e00,#ff3f00,#ff3400,#ff2900,#ff2200,#ff1600,#ff1300,#f60b00,#f10800,#ed0400,#e80000,#e80000,#e80000,#e80000,#e80000,#ed0400,#f10800,#fa0f00,#ff1600,#ff2200,#ff2d00,#ff3800,#ff3f00,#ff4300,#ff4300,#ff4300,#ff3f00,#ff3800,#ff2d00,#ff2200,#ff1600,#fa0f00,#f10800,#ed0400,#e80000,#e80000,#e80000,#e80000,#e80000,#ed0400,#f10800,#f60b00,#ff1300,#ff1600,#ff2200,#ff2900,#ff3400,#ff3f00,#ff4e00,#ff5d00,#ff7300,#ff9100,#ffd700,#94ff63,#c7ff30,#ffc400,#ff9c00,#ff8d00,#ff8200,#ff7a00,#ff7700,#ff7300,#ff7300,#ff7700,#ff7700,#ff7a00,#ff7e00,#ff8600,#ff8d00,#ff9400,#ff9f00,#ffab00,#ffb600 99.48%)"></div><div style="top:141.03px;height:4.52px;background:linear-gradient(90deg,#ffae00 0.52%,#ffa300,#ff9800,#ff8d00,#ff8600,#ff7e00,#ff7a00,#ff7300,#ff6f00,#ff6f00,#ff6f00,#ff6f00,#ff6f00,#ff7300,#ff7a00,#ff8600,#ff9800,#ffc100,#ceff29,#97ff60,#ffd000,#ff8d00,#ff6f00,#ff5900,#ff4700,#ff3800,#ff2d00,#ff2200,#ff1a00,#ff1300,#f60b00,#ed0400,#e80000,#e40000,#df0000,#df0000,#da0000,#da0000,#df0000,#e40000,#e80000,#ed0400,#fa0f00,#ff1600,#ff2500,#ff3000,#ff3b00,#ff3f00,#ff3f00,#ff3f00,#ff3b00,#ff3000,#ff2500,#ff1600,#fa0f00,#ed0400,#e80000,#e40000,#df0000,#da0000,#da0000,#df0000,#df0000,#e40000,#e80000,#ed0400,#f60b00,#ff1300,#ff1a00,#ff2200,#ff2d00,#ff3800,#ff4700,#ff5900,#ff6f00,#ff8d00,#ffd000,#97ff60,#ceff29,#ffc100,#ff9800,#ff8600,#ff7a00,#ff7300,#ff6f00,#ff6f00,#ff6f00,#ff6f00,#ff6f00,#ff7300,#ff7a00,#ff7e00,#ff8600,#ff8d00,#ff9800,#ffa300,#ffae00 99.48%)"></div><div style="top:144.95px;height:4.52px;background:linear-gradient(90deg,#ffa700 0.52%,#ff9800,#ff9100,#ff8600,#ff7e00,#ff7700,#ff7300,#ff6f00,#ff6c00,#ff6800,#ff6800,#ff6800,#ff6c00,#ff6f00,#ff7700,#ff8200,#ff9100,#ffb900,#d1ff26,#9dff5a,#ffcc00,#ff8900,#ff6800,#ff5200,#ff4300,#ff3400,#ff2900,#ff1e00,#ff1300,#f60b00,#ed0400,#e80000,#df0000,#da0000,#d60000,#d60000,#d10000,#d10000,#d60000,#d60000,#da0000,#e40000,#ed0400,#fa0f00,#ff1a00,#ff2900,#ff3400,#ff3b00,#ff3f00,#ff3b00,#ff3400,#ff2900,#ff1a00,#fa0f00,#ed0400,#e40000,#da0000,#d60000,#d60000,#d10000,#d10000,#d60000,#d60000,#da0000,#df0000,#e80000,#ed0400,#f60b00,#ff1300,#ff1e00,#ff2900,#ff3400,#ff4300,#ff5200,#ff6800,#ff8900,#ffcc00,#9dff5a,#d1ff26,#ffb900,#ff9100,#ff8200,#ff7700,#ff6f00,#ff6c00,#ff6800,#ff6800,#ff6800,#ff6c00,#ff6f00,#ff7300,#ff7700,#ff7e00,#ff8600,#ff9100,#ff9800,#ffa700 99.48%)"></div><div style="top:148.87px;height:4.52px;background:linear-gradient(90deg,#ff9f00 0.52%,#ff9400,#ff8900,#ff8200,#ff7a00,#ff7300,#ff6c00,#ff6800,#ff6400,#ff6400,#ff6400,#ff6400,#ff6800,#ff6c00,#ff7300,#ff7a00,#ff8d00,#ffb600,#d4ff23,#a0ff56,#ffc400,#ff8200,#ff6400,#ff4e00,#ff3b00,#ff3000,#ff2200,#ff1600,#fa0f00,#f10800,#e80000,#df0000,#da0000,#d60000,#d10000,#cd0000,#c80000,#c80000,#cd0000,#cd0000,#d10000,#d60000,#e40000,#ed0400,#ff1300,#ff2200,#ff3000,#ff3800,#ff3b00,#ff3800,#ff3000,#ff2200,#ff1300,#ed0400,#e40000,#d60000,#d10000,#cd0000,#cd0000,#c80000,#c80000,#cd0000,#d10000,#d60000,#da0000,#df0000,#e80000,#f10800,#fa0f00,#ff1600,#ff2200,#ff3000,#ff3b00,#ff4e00,#ff6400,#ff8200,#ffc400,#a0ff56,#d4ff23,#ffb600,#ff8d00,#ff7a00,#ff7300,#ff6c00,#ff6800,#ff6400,#ff6400,#ff6400,#ff6400,#ff6800,#ff6c00,#ff7300,#ff7a00,#ff8200,#ff8900,#ff9400,#ff9f00 99.48%)"></div><div style="top:152.78px;height:4.52px;background:linear-gradient(90deg,#ff9800 0.52%,#ff8d00,#ff8200,#ff7a00,#ff7300,#ff6c00,#ff6800,#ff6400,#ff6000,#ff6000,#ff6000,#ff6000,#ff6000,#ff6800,#ff6c00,#ff7700,#ff8900,#ffb200,#d7ff1f,#a4ff53,#ffc100,#ff7e00,#ff6000,#ff4a00,#ff3800,#ff2900,#ff1e00,#ff1300,#f60b00,#e80000,#df0000,#da0000,#d10000,#cd0000,#c80000,#c40000,#c40000,#bf0000,#bf0000,#c40000,#c80000,#cd0000,#d60000,#e40000,#f10800,#ff1a00,#ff2900,#ff3800,#ff3800,#ff3800,#ff2900,#ff1a00,#f10800,#e40000,#d60000,#cd0000,#c80000,#c40000,#bf0000,#bf0000,#c40000,#c40000,#c80000,#cd0000,#d10000,#da0000,#df0000,#e80000,#f60b00,#ff1300,#ff1e00,#ff2900,#ff3800,#ff4a00,#ff6000,#ff7e00,#ffc100,#a4ff53,#d7ff1f,#ffb200,#ff8900,#ff7700,#ff6c00,#ff6800,#ff6000,#ff6000,#ff6000,#ff6000,#ff6000,#ff6400,#ff6800,#ff6c00,#ff7300,#ff7a00,#ff8200,#ff8d00,#ff9800 99.48%)"></div><div style="top:156.70px;height:4.52px;background:linear-gradient(90deg,#ff9400 0.52%,#ff8900,#ff7e00,#ff7700,#ff6f00,#ff6800,#ff6400,#ff6000,#ff5d00,#ff5d00,#ff5d00,#ff5d00,#ff5d00,#ff6400,#ff6800,#ff7300,#ff8600,#ffae00,#dbff1c,#a7ff50,#ffbd00,#ff7a00,#ff5d00,#ff4700,#ff3400,#ff2500,#ff1a00,#fa0f00,#ed0400,#e40000,#da0000,#d10000,#cd0000,#c80000,#bf0000,#bf0000,#bb0000,#bb0000,#bb0000,#bb0000,#bb0000,#c40000,#c80000,#d60000,#e80000,#fa0f00,#ff2500,#ff3400,#ff3400,#ff3400,#ff2500,#fa0f00,#e80000,#d60000,#c80000,#c40000,#bb0000,#bb0000,#bb0000,#bb0000,#bb0000,#bf0000,#bf0000,#c80000,#cd0000,#d10000,#da0000,#e40000,#ed0400,#fa0f00,#ff1a00,#ff2500,#ff3400,#ff4700,#ff5d00,#ff7a00,#ffbd00,#a7ff50,#dbff1c,#ffae00,#ff8600,#ff7300,#ff6800,#ff6400,#ff5d00,#ff5d00,#ff5d00,#ff5d00,#ff5d00,#ff6000,#ff6400,#ff6800,#ff6f00,#ff7700,#ff7e00,#ff8900,#ff9400 99.48%)"></div><div style="top:160.62px;height:4.52px;background:linear-gradient(90deg,#ff8d00 0.52%,#ff8600,#ff7a00,#ff7300,#ff6c00,#ff6400,#ff6000,#ff5d00,#ff5900,#ff5900,#ff5900,#ff5900,#ff5d00,#ff6000,#ff6800,#ff6f00,#ff8200,#ffab00,#deff19,#aaff4d,#ffb900,#ff7700,#ff5900,#ff4300,#ff3000,#ff2200,#ff1600,#f60b00,#e80000,#df0000,#d60000,#cd0000,#c80000,#bf0000,#bb0000,#b60000,#b10000,#b10000,#b10000,#b10000,#b10000,#b60000,#bf0000,#c80000,#da0000,#ed0400,#ff1e00,#ff3000,#ff3400,#ff3000,#ff1e00,#ed0400,#da0000,#c80000,#bf0000,#b60000,#b10000,#b10000,#b10000,#b10000,#b10000,#b60000,#bb0000,#bf0000,#c80000,#cd0000,#d60000,#df0000,#e80000,#f60b00,#ff1600,#ff2200,#ff3000,#ff4300,#ff5900,#ff7700,#ffb900,#aaff4d,#deff19,#ffab00,#ff8200,#ff6f00,#ff6800,#ff6000,#ff5d00,#ff5900,#ff5900,#ff5900,#ff5900,#ff5d00,#ff6000,#ff6400,#ff6c00,#ff7300,#ff7a00,#ff8600,#ff8d00 99.48%)"></div><div style="top:164.54px;height:4.52px;background:linear-gradient(90deg,#ff8900 0.52%,#ff8200,#ff7700,#ff6f00,#ff6800,#ff6000,#ff5d00,#ff5900,#ff5500,#ff5500,#ff5500,#ff5500,#ff5900,#ff5d00,#ff6400,#ff6f00,#ff7e00,#ffa700,#e1ff16,#adff49,#ffb900,#ff7300,#ff5500,#ff3f00,#ff2d00,#ff1e00,#ff1300,#f10800,#e40000,#da0000,#d10000,#c80000,#c40000,#bb0000,#b60000,#b10000,#ad0000,#a80000,#a80000,#a80000,#a80000,#ad0000,#b10000,#bb0000,#c80000,#df0000,#ff1300,#ff2d00,#ff3000,#ff2d00,#ff1300,#df0000,#c80000,#bb0000,#b10000,#ad0000,#a80000,#a80000,#a80000,#a80000,#ad0000,#b10000,#b60000,#bb0000,#c40000,#c80000,#d10000,#da0000,#e40000,#f10800,#ff1300,#ff1e00,#ff2d00,#ff3f00,#ff5500,#ff7300,#ffb900,#adff49,#e1ff16,#ffa700,#ff7e00,#ff6f00,#ff6400,#ff5d00,#ff5900,#ff5500,#ff5500,#ff5500,#ff5500,#ff5900,#ff5d00,#ff6000,#ff6800,#ff6f00,#ff7700,#ff8200,#ff8900 99.48%)"></div><div style="top:168.45px;height:4.52px;background:linear-gradient(90deg,#ff8900 0.52%,#ff7e00,#ff7300,#ff6c00,#ff6400,#ff6000,#ff5900,#ff5500,#ff5500,#ff5200,#ff5200,#ff5200,#ff5500,#ff5900,#ff6000,#ff6c00,#ff7e00,#ffa700,#e4ff13,#adff49,#ffb600,#ff7300,#ff5200,#ff3b00,#ff2d00,#ff1e00,#fa0f00,#ed0400,#e40000,#d60000,#cd0000,#c40000,#bf0000,#b60000,#b10000,#ad0000,#a80000,#a40000,#9f0000,#9f0000,#9f0000,#a40000,#a80000,#ad0000,#bb0000,#d10000,#f10800,#ff2500,#ff3000,#ff2500,#f10800,#d10000,#bb0000,#ad0000,#a80000,#a40000,#9f0000,#9f0000,#9f0000,#a40000,#a80000,#ad0000,#b10000,#b60000,#bf0000,#c40000,#cd0000,#d60000,#e40000,#ed0400,#fa0f00,#ff1e00,#ff2d00,#ff3b00,#ff5200,#ff7300,#ffb600,#adff49,#e4ff13,#ffa700,#ff7e00,#ff6c00,#ff6000,#ff5900,#ff5500,#ff5200,#ff5200,#ff5200,#ff5500,#ff5500,#ff5900,#ff6000,#ff6400,#ff6c00,#ff7300,#ff7e00,#ff8900 99.48%)"></div><div style="top:172.37px;height:4.52px;background:linear-gradient(90deg,#ff8600 0.52%,#ff7a00,#ff7300,#ff6c00,#ff6400,#ff5d00,#ff5900,#ff5500,#ff5200,#ff5200,#ff5200,#ff5200,#ff5500,#ff5900,#ff6000,#ff6c00,#ff7a00,#ffa300,#e4ff13,#b1ff46,#ffb200,#ff6f00,#ff5200,#ff3b00,#ff2900,#ff1a00,#fa0f00,#ed0400,#df0000,#d60000,#c80000,#c40000,#bb0000,#b10000,#ad0000,#a80000,#a40000,#9f0000,#9b0000,#9b0000,#960000,#9b0000,#9b0000,#9f0000,#a80000,#bb0000,#da0000,#ff1e00,#ff3000,#ff1e00,#da0000,#bb0000,#a80000,#9f0000,#9b0000,#9b0000,#960000,#9b0000,#9b0000,#9f0000,#a40000,#a80000,#ad0000,#b10000,#bb0000,#c40000,#c80000,#d60000,#df0000,#ed0400,#fa0f00,#ff1a00,#ff2900,#ff3b00,#ff5200,#ff6f00,#ffb200,#b1ff46,#e4ff13,#ffa300,#ff7a00,#ff6c00,#ff6000,#ff5900,#ff5500,#ff5200,#ff5200,#ff5200,#ff5200,#ff5500,#ff5900,#ff5d00,#ff6400,#ff6c00,#ff7300,#ff7a00,#ff8600 99.48%)"></div><div style="top:176.29px;height:4.52px;background:linear-gradient(90deg,#ff8200 0.52%,#ff7a00,#ff6f00,#ff6800,#ff6000,#ff5d00,#ff5500,#ff5200,#ff5200,#ff4e00,#ff4e00,#ff5200,#ff5200,#ff5500,#ff5d00,#ff6800,#ff7a00,#ffa300,#e4ff13,#b1ff46,#ffb200,#ff6f00,#ff4e00,#ff3800,#ff2900,#ff1a00,#f60b00,#e80000,#df0000,#d10000,#c80000,#bf0000,#b60000,#b10000,#a80000,#a40000,#9f0000,#9b0000,#960000,#920000,#920000,#920000,#920000,#960000,#9b0000,#a80000,#c40000,#fa0f00,#ff2d00,#fa0f00,#c40000,#a80000,#9b0000,#960000,#920000,#920000,#920000,#920000,#960000,#9b0000,#9f0000,#a40000,#a80000,#b10000,#b60000,#bf0000,#c80000,#d10000,#df0000,#e80000,#f60b00,#ff1a00,#ff2900,#ff3800,#ff4e00,#ff6f00,#ffb200,#b1ff46,#e4ff13,#ffa300,#ff7a00,#ff6800,#ff5d00,#ff5500,#ff5200,#ff5200,#ff4e00,#ff4e00,#ff5200,#ff5200,#ff5500,#ff5d00,#ff6000,#ff6800,#ff6f00,#ff7a00,#ff8200 99.48%)"></div><div style="top:180.21px;height:4.52px;background:linear-gradient(90deg,#ff8200 0.52%,#ff7700,#ff6f00,#ff6800,#ff6000,#ff5900,#ff5500,#ff5200,#ff4e00,#ff4e00,#ff4e00,#ff4e00,#ff5200,#ff5500,#ff5d00,#ff6800,#ff7a00,#ffa300,#e7ff0f,#b4ff43,#ffb200,#ff6c00,#ff4e00,#ff3800,#ff2500,#ff1600,#f60b00,#e80000,#da0000,#d10000,#c80000,#bf0000,#b60000,#ad0000,#a80000,#9f0000,#9b0000,#960000,#920000,#8d0000,#8d0000,#890000,#890000,#890000,#8d0000,#920000,#a80000,#da0000,#ff2d00,#da0000,#a80000,#920000,#8d0000,#890000,#890000,#890000,#8d0000,#8d0000,#920000,#960000,#9b0000,#9f0000,#a80000,#ad0000,#b60000,#bf0000,#c80000,#d10000,#da0000,#e80000,#f60b00,#ff1600,#ff2500,#ff3800,#ff4e00,#ff6c00,#ffb200,#b4ff43,#e7ff0f,#ffa300,#ff7a00,#ff6800,#ff5d00,#ff5500,#ff5200,#ff4e00,#ff4e00,#ff4e00,#ff4e00,#ff5200,#ff5500,#ff5900,#ff6000,#ff6800,#ff6f00,#ff7700,#ff8200 99.48%)"></div><div style="top:184.12px;height:4.52px;background:linear-gradient(90deg,#ff8200 0.52%,#ff7700,#ff6f00,#ff6800,#ff6000,#ff5900,#ff5500,#ff5200,#ff4e00,#ff4e00,#ff4e00,#ff4e00,#ff5200,#ff5500,#ff5d00,#ff6800,#ff7700,#ff9f00,#e7ff0f,#b4ff43,#ffb200,#ff6c00,#ff4e00,#ff3800,#ff2500,#ff1600,#f60b00,#e80000,#da0000,#d10000,#c40000,#bb0000,#b10000,#ad0000,#a40000,#9f0000,#9b0000,#960000,#920000,#8d0000,#890000,#840000,#840000,#840000,#800000,#840000,#890000,#a40000,#ff2d00,#a40000,#890000,#840000,#800000,#840000,#840000,#840000,#890000,#8d0000,#920000,#960000,#9b0000,#9f0000,#a40000,#ad0000,#b10000,#bb0000,#c40000,#d10000,#da0000,#e80000,#f60b00,#ff1600,#ff2500,#ff3800,#ff4e00,#ff6c00,#ffb200,#b4ff43,#e7ff0f,#ff9f00,#ff7700,#ff6800,#ff5d00,#ff5500,#ff5200,#ff4e00,#ff4e00,#ff4e00,#ff4e00,#ff5200,#ff5500,#ff5900,#ff6000,#ff6800,#ff6f00,#ff7700,#ff8200 99.48%)"></div><div style="top:188.04px;height:4.52px;background:linear-gradient(90deg,#ff8200 0.52%,#ff7700,#ff6f00,#ff6800,#ff6000,#ff5900,#ff5500,#ff5200,#ff4e00,#ff4e00,#ff4e00,#ff4e00,#ff5200,#ff5500,#ff5d00,#ff6800,#ff7700,#ff9f00,#e7ff0f,#b4ff43,#ffae00,#ff6c00,#ff4e00,#ff3800,#ff2500,#ff1600,#f60b00,#e80000,#da0000,#cd0000,#c40000,#bb0000,#b10000,#ad0000,#a40000,#9f0000,#9b0000,#920000,#8d0000,#8d0000,#890000,#840000,#840000,#800000,#800000,#800000,#800000,#800000,#ff2d00,#800000,#800000,#800000,#800000,#800000,#840000,#840000,#890000,#8d0000,#8d0000,#920000,#9b0000,#9f0000,#a40000,#ad0000,#b10000,#bb0000,#c40000,#cd0000,#da0000,#e80000,#f60b00,#ff1600,#ff2500,#ff3800,#ff4e00,#ff6c00,#ffae00,#b4ff43,#e7ff0f,#ff9f00,#ff7700,#ff6800,#ff5d00,#ff5500,#ff5200,#ff4e00,#ff4e00,#ff4e00,#ff4e00,#ff5200,#ff5500,#ff5900,#ff6000,#ff6800,#ff6f00,#ff7700,#ff8200 99.48%)"></div><div style="top:191.96px;height:4.52px;background:linear-gradient(90deg,#ff8200 0.52%,#ff7700,#ff6f00,#ff6800,#ff6000,#ff5900,#ff5500,#ff5200,#ff4e00,#ff4e00,#ff4e00,#ff4e00,#ff5200,#ff5500,#ff5d00,#ff6800,#ff7700,#ff9f00,#e7ff0f,#b4ff43,#ffb200,#ff6c00,#ff4e00,#ff3800,#ff2500,#ff1600,#f60b00,#e80000,#da0000,#d10000,#c40000,#bb0000,#b10000,#ad0000,#a40000,#9f0000,#9b0000,#960000,#920000,#8d0000,#890000,#840000,#840000,#840000,#800000,#840000,#890000,#a40000,#ff2d00,#a40000,#890000,#840000,#800000,#840000,#840000,#840000,#890000,#8d0000,#920000,#960000,#9b0000,#9f0000,#a40000,#ad0000,#b10000,#bb0000,#c40000,#d10000,#da0000,#e80000,#f60b00,#ff1600,#ff2500,#ff3800,#ff4e00,#ff6c00,#ffb200,#b4ff43,#e7ff0f,#ff9f00,#ff7700,#ff6800,#ff5d00,#ff5500,#ff5200,#ff4e00,#ff4e00,#ff4e00,#ff4e00,#ff5200,#ff5500,#ff5900,#ff6000,#ff6800,#ff6f00,#ff7700,#ff8200 99.48%)"></div><div style="top:195.88px;height:4.52px;background:linear-gradient(90deg,#ff8200 0.52%,#ff7700,#ff6f00,#ff6800,#ff6000,#ff5900,#ff5500,#ff5200,#ff4e00,#ff4e00,#ff4e00,#ff4e00,#ff5200,#ff5500,#ff5d00,#ff6800,#ff7a00,#ffa300,#e7ff0f,#b4ff43,#ffb200,#ff6c00,#ff4e00,#ff3800,#ff2500,#ff1600,#f60b00,#e80000,#da0000,#d10000,#c80000,#bf0000,#b60000,#ad0000,#a80000,#9f0000,#9b0000,#960000,#920000,#8d0000,#8d0000,#890000,#890000,#890000,#8d0000,#920000,#a80000,#da0000,#ff2d00,#da0000,#a80000,#920000,#8d0000,#890000,#890000,#890000,#8d0000,#8d0000,#920000,#960000,#9b0000,#9f0000,#a80000,#ad0000,#b60000,#bf0000,#c80000,#d10000,#da0000,#e80000,#f60b00,#ff1600,#ff2500,#ff3800,#ff4e00,#ff6c00,#ffb200,#b4ff43,#e7ff0f,#ffa300,#ff7a00,#ff6800,#ff5d00,#ff5500,#ff5200,#ff4e00,#ff4e00,#ff4e00,#ff4e00,#ff5200,#ff5500,#ff5900,#ff6000,#ff6800,#ff6f00,#ff7700,#ff8200 99.48%)"></div><div style="top:199.79px;height:4.52px;background:linear-gradient(90deg,#ff8200 0.52%,#ff7a00,#ff6f00,#ff6800,#ff6000,#ff5d00,#ff5500,#ff5200,#ff5200,#ff4e00,#ff4e00,#ff5200,#ff5200,#ff5500,#ff5d00,#ff6800,#ff7a00,#ffa300,#e4ff13,#b1ff46,#ffb200,#ff6f00,#ff4e00,#ff3800,#ff2900,#ff1a00,#f60b00,#e80000,#df0000,#d10000,#c80000,#bf0000,#b60000,#b10000,#a80000,#a40000,#9f0000,#9b0000,#960000,#920000,#920000,#920000,#920000,#960000,#9b0000,#a80000,#c40000,#fa0f00,#ff2d00,#fa0f00,#c40000,#a80000,#9b0000,#960000,#920000,#920000,#920000,#920000,#960000,#9b0000,#9f0000,#a40000,#a80000,#b10000,#b60000,#bf0000,#c80000,#d10000,#df0000,#e80000,#f60b00,#ff1a00,#ff2900,#ff3800,#ff4e00,#ff6f00,#ffb200,#b1ff46,#e4ff13,#ffa300,#ff7a00,#ff6800,#ff5d00,#ff5500,#ff5200,#ff5200,#ff4e00,#ff4e00,#ff5200,#ff5200,#ff5500,#ff5d00,#ff6000,#ff6800,#ff6f00,#ff7a00,#ff8200 99.48%)"></div><div style="top:203.71px;height:4.52px;background:linear-gradient(90deg,#ff8600 0.52%,#ff7a00,#ff7300,#ff6c00,#ff6400,#ff5d00,#ff5900,#ff5500,#ff5200,#ff5200,#ff5200,#ff5200,#ff5500,#ff5900,#ff6000,#ff6c00,#ff7a00,#ffa300,#e4ff13,#b1ff46,#ffb200,#ff6f00,#ff5200,#ff3b00,#ff2900,#ff1a00,#fa0f00,#ed0400,#df0000,#d60000,#c80000,#c40000,#bb0000,#b10000,#ad0000,#a80000,#a40000,#9f0000,#9b0000,#9b0000,#960000,#9b0000,#9b0000,#9f0000,#a80000,#bb0000,#da0000,#ff1e00,#ff3000,#ff1e00,#da0000,#bb0000,#a80000,#9f0000,#9b0000,#9b0000,#960000,#9b0000,#9b0000,#9f0000,#a40000,#a80000,#ad0000,#b10000,#bb0000,#c40000,#c80000,#d60000,#df0000,#ed0400,#fa0f00,#ff1a00,#ff2900,#ff3b00,#ff5200,#ff6f00,#ffb200,#b1ff46,#e4ff13,#ffa300,#ff7a00,#ff6c00,#ff6000,#ff5900,#ff5500,#ff5200,#ff5200,#ff5200,#ff5200,#ff5500,#ff5900,#ff5d00,#ff6400,#ff6c00,#ff7300,#ff7a00,#ff8600 99.48%)"></div><div style="top:207.63px;height:4.52px;background:linear-gradient(90deg,#ff8900 0.52%,#ff7e00,#ff7300,#ff6c00,#ff6400,#ff6000,#ff5900,#ff5500,#ff5500,#ff5200,#ff5200,#ff5200,#ff5500,#ff5900,#ff6000,#ff6c00,#ff7e00,#ffa700,#e4ff13,#adff49,#ffb600,#ff7300,#ff5200,#ff3b00,#ff2d00,#ff1e00,#fa0f00,#ed0400,#e40000,#d60000,#cd0000,#c40000,#bf0000,#b60000,#b10000,#ad0000,#a80000,#a40000,#9f0000,#9f0000,#9f0000,#a40000,#a80000,#ad0000,#bb0000,#d10000,#f10800,#ff2500,#ff3000,#ff2500,#f10800,#d10000,#bb0000,#ad0000,#a80000,#a40000,#9f0000,#9f0000,#9f0000,#a40000,#a80000,#ad0000,#b10000,#b60000,#bf0000,#c40000,#cd0000,#d60000,#e40000,#ed0400,#fa0f00,#ff1e00,#ff2d00,#ff3b00,#ff5200,#ff7300,#ffb600,#adff49,#e4ff13,#ffa700,#ff7e00,#ff6c00,#ff6000,#ff5900,#ff5500,#ff5200,#ff5200,#ff5200,#ff5500,#ff5500,#ff5900,#ff6000,#ff6400,#ff6c00,#ff7300,#ff7e00,#ff8900 99.48%)"></div><div style="top:211.55px;height:4.52px;background:linear-gradient(90deg,#ff8900 0.52%,#ff8200,#ff7700,#ff6f00,#ff6800,#ff6000,#ff5d00,#ff5900,#ff5500,#ff5500,#ff5500,#ff5500,#ff5900,#ff5d00,#ff6400,#ff6f00,#ff7e00,#ffa700,#e1ff16,#adff49,#ffb900,#ff7300,#ff5500,#ff3f00,#ff2d00,#ff1e00,#ff1300,#f10800,#e40000,#da0000,#d10000,#c80000,#c40000,#bb0000,#b60000,#b10000,#ad0000,#a80000,#a80000,#a80000,#a80000,#ad0000,#b10000,#bb0000,#c80000,#df0000,#ff1300,#ff2d00,#ff3000,#ff2d00,#ff1300,#df0000,#c80000,#bb0000,#b10000,#ad0000,#a80000,#a80000,#a80000,#a80000,#ad0000,#b10000,#b60000,#bb0000,#c40000,#c80000,#d10000,#da0000,#e40000,#f10800,#ff1300,#ff1e00,#ff2d00,#ff3f00,#ff5500,#ff7300,#ffb900,#adff49,#e1ff16,#ffa700,#ff7e00,#ff6f00,#ff6400,#ff5d00,#ff5900,#ff5500,#ff5500,#ff5500,#ff5500,#ff5900,#ff5d00,#ff6000,#ff6800,#ff6f00,#ff7700,#ff8200,#ff8900 99.48%)"></div><div style="top:215.46px;height:4.52px;background:linear-gradient(90deg,#ff8d00 0.52%,#ff8600,#ff7a00,#ff7300,#ff6c00,#ff6400,#ff6000,#ff5d00,#ff5900,#ff5900,#ff5900,#ff5900,#ff5d00,#ff6000,#ff6800,#ff6f00,#ff8200,#ffab00,#deff19,#aaff4d,#ffb900,#ff7700,#ff5900,#ff4300,#ff3000,#ff2200,#ff1600,#f60b00,#e80000,#df0000,#d60000,#cd0000,#c80000,#bf0000,#bb0000,#b60000,#b10000,#b10000,#b10000,#b10000,#b10000,#b60000,#bf0000,#c80000,#da0000,#ed0400,#ff1e00,#ff3000,#ff3400,#ff3000,#ff1e00,#ed0400,#da0000,#c80000,#bf0000,#b60000,#b10000,#b10000,#b10000,#b10000,#b10000,#b60000,#bb0000,#bf0000,#c80000,#cd0000,#d60000,#df0000,#e80000,#f60b00,#ff1600,#ff2200,#ff3000,#ff4300,#ff5900,#ff7700,#ffb900,#aaff4d,#deff19,#ffab00,#ff8200,#ff6f00,#ff6800,#ff6000,#ff5d00,#ff5900,#ff5900,#ff5900,#ff5900,#ff5d00,#ff6000,#ff6400,#ff6c00,#ff7300,#ff7a00,#ff8600,#ff8d00 99.48%)"></div><div style="top:219.38px;height:4.52px;background:linear-gradient(90deg,#ff9400 0.52%,#ff8900,#ff7e00,#ff7700,#ff6f00,#ff6800,#ff6400,#ff6000,#ff5d00,#ff5d00,#ff5d00,#ff5d00,#ff5d00,#ff6400,#ff6800,#ff7300,#ff8600,#ffae00,#dbff1c,#a7ff50,#ffbd00,#ff7a00,#ff5d00,#ff4700,#ff3400,#ff2500,#ff1a00,#fa0f00,#ed0400,#e40000,#da0000,#d10000,#cd0000,#c80000,#bf0000,#bf0000,#bb0000,#bb0000,#bb0000,#bb0000,#bb0000,#c40000,#c80000,#d60000,#e80000,#fa0f00,#ff2500,#ff3400,#ff3400,#ff3400,#ff2500,#fa0f00,#e80000,#d60000,#c80000,#c40000,#bb0000,#bb0000,#bb0000,#bb0000,#bb0000,#bf0000,#bf0000,#c80000,#cd0000,#d10000,#da0000,#e40000,#ed0400,#fa0f00,#ff1a00,#ff2500,#ff3400,#ff4700,#ff5d00,#ff7a00,#ffbd00,#a7ff50,#dbff1c,#ffae00,#ff8600,#ff7300,#ff6800,#ff6400,#ff5d00,#ff5d00,#ff5d00,#ff5d00,#ff5d00,#ff6000,#ff6400,#ff6800,#ff6f00,#ff7700,#ff7e00,#ff8900,#ff9400 99.48%)"></div><div style="top:223.30px;height:4.52px;background:linear-gradient(90deg,#ff9800 0.52%,#ff8d00,#ff8200,#ff7a00,#ff7300,#ff6c00,#ff6800,#ff6400,#ff6000,#ff6000,#ff6000,#ff6000,#ff6000,#ff6800,#ff6c00,#ff7700,#ff8900,#ffb200,#d7ff1f,#a4ff53,#ffc100,#ff7e00,#ff6000,#ff4a00,#ff3800,#ff2900,#ff1e00,#ff1300,#f60b00,#e80000,#df0000,#da0000,#d10000,#cd0000,#c80000,#c40000,#c40000,#bf0000,#bf0000,#c40000,#c80000,#cd0000,#d60000,#e40000,#f10800,#ff1a00,#ff2900,#ff3800,#ff3800,#ff3800,#ff2900,#ff1a00,#f10800,#e40000,#d60000,#cd0000,#c80000,#c40000,#bf0000,#bf0000,#c40000,#c40000,#c80000,#cd0000,#d10000,#da0000,#df0000,#e80000,#f60b00,#ff1300,#ff1e00,#ff2900,#ff3800,#ff4a00,#ff6000,#ff7e00,#ffc100,#a4ff53,#d7ff1f,#ffb200,#ff8900,#ff7700,#ff6c00,#ff6800,#ff6000,#ff6000,#ff6000,#ff6000,#ff6000,#ff6400,#ff6800,#ff6c00,#ff7300,#ff7a00,#ff8200,#ff8d00,#ff9800 99.48%)"></div><div style="top:227.22px;height:4.52px;background:linear-gradient(90deg,#ff9f00 0.52%,#ff9400,#ff8900,#ff8200,#ff7a00,#ff7300,#ff6c00,#ff6800,#ff6400,#ff6400,#ff6400,#ff6400,#ff6800,#ff6c00,#ff7300,#ff7a00,#ff8d00,#ffb600,#d4ff23,#a0ff56,#ffc400,#ff8200,#ff6400,#ff4e00,#ff3b00,#ff3000,#ff2200,#ff1600,#fa0f00,#f10800,#e80000,#df0000,#da0000,#d60000,#d10000,#cd0000,#c80000,#c80000,#cd0000,#cd0000,#d10000,#d60000,#e40000,#ed0400,#ff1300,#ff2200,#ff3000,#ff3800,#ff3b00,#ff3800,#ff3000,#ff2200,#ff1300,#ed0400,#e40000,#d60000,#d10000,#cd0000,#cd0000,#c80000,#c80000,#cd0000,#d10000,#d60000,#da0000,#df0000,#e80000,#f10800,#fa0f00,#ff1600,#ff2200,#ff3000,#ff3b00,#ff4e00,#ff6400,#ff8200,#ffc400,#a0ff56,#d4ff23,#ffb600,#ff8d00,#ff7a00,#ff7300,#ff6c00,#ff6800,#ff6400,#ff6400,#ff6400,#ff6400,#ff6800,#ff6c00,#ff7300,#ff7a00,#ff8200,#ff8900,#ff9400,#ff9f00 99.48%)"></div><div style="top:231.13px;height:4.52px;background:linear-gradient(90deg,#ffa700 0.52%,#ff9800,#ff9100,#ff8600,#ff7e00,#ff7700,#ff7300,#ff6f00,#ff6c00,#ff6800,#ff6800,#ff6800,#ff6c00,#ff6f00,#ff7700,#ff8200,#ff9100,#ffb900,#d1ff26,#9dff5a,#ffcc00,#ff8900,#ff6800,#ff5200,#ff4300,#ff3400,#ff2900,#ff1e00,#ff1300,#f60b00,#ed0400,#e80000,#df0000,#da0000,#d60000,#d60000,#d10000,#d10000,#d60000,#d60000,#da0000,#e40000,#ed0400,#fa0f00,#ff1a00,#ff2900,#ff3400,#ff3b00,#ff3f00,#ff3b00,#ff3400,#ff2900,#ff1a00,#fa0f00,#ed0400,#e40000,#da0000,#d60000,#d60000,#d10000,#d10000,#d60000,#d60000,#da0000,#df0000,#e80000,#ed0400,#f60b00,#ff1300,#ff1e00,#ff2900,#ff3400,#ff4300,#ff5200,#ff6800,#ff8900,#ffcc00,#9dff5a,#d1ff26,#ffb900,#ff9100,#ff8200,#ff7700,#ff6f00,#ff6c00,#ff6800,#ff6800,#ff6800,#ff6c00,#ff6f00,#ff7300,#ff7700,#ff7e00,#ff8600,#ff9100,#ff9800,#ffa700 99.48%)"></div><div style="top:235.05px;height:4.52px;background:linear-gradient(90deg,#ffae00 0.52%,#ffa300,#ff9800,#ff8d00,#ff8600,#ff7e00,#ff7a00,#ff7300,#ff6f00,#ff6f00,#ff6f00,#ff6f00,#ff6f00,#ff7300,#ff7a00,#ff8600,#ff9800,#ffc100,#ceff29,#97ff60,#ffd000,#ff8d00,#ff6f00,#ff5900,#ff4700,#ff3800,#ff2d00,#ff2200,#ff1a00,#ff1300,#f60b00,#ed0400,#e80000,#e40000,#df0000,#df0000,#da0000,#da0000,#df0000,#e40000,#e80000,#ed0400,#fa0f00,#ff1600,#ff2500,#ff3000,#ff3b00,#ff3f00,#ff3f00,#ff3f00,#ff3b00,#ff3000,#ff2500,#ff1600,#fa0f00,#ed0400,#e80000,#e40000,#df0000,#da0000,#da0000,#df0000,#df0000,#e40000,#e80000,#ed0400,#f60b00,#ff1300,#ff1a00,#ff2200,#ff2d00,#ff3800,#ff4700,#ff5900,#ff6f00,#ff8d00,#ffd000,#97ff60,#ceff29,#ffc100,#ff9800,#ff8600,#ff7a00,#ff7300,#ff6f00,#ff6f00,#ff6f00,#ff6f00,#ff6f00,#ff7300,#ff7a00,#ff7e00,#ff8600,#ff8d00,#ff9800,#ffa300,#ffae00 99.48%)"></div><div style="top:238.97px;height:4.52px;background:linear-gradient(90deg,#ffb600 0.52%,#ffab00,#ff9f00,#ff9400,#ff8d00,#ff8600,#ff7e00,#ff7a00,#ff7700,#ff7700,#ff7300,#ff7300,#ff7700,#ff7a00,#ff8200,#ff8d00,#ff9c00,#ffc400,#c7ff30,#94ff63,#ffd700,#ff9100,#ff7300,#ff5d00,#ff4e00,#ff3f00,#ff3400,#ff2900,#ff2200,#ff1600,#ff1300,#f60b00,#f10800,#ed0400,#e80000,#e80000,#e80000,#e80000,#e80000,#ed0400,#f10800,#fa0f00,#ff1600,#ff2200,#ff2d00,#ff3800,#ff3f00,#ff4300,#ff4300,#ff4300,#ff3f00,#ff3800,#ff2d00,#ff2200,#ff1600,#fa0f00,#f10800,#ed0400,#e80000,#e80000,#e80000,#e80000,#e80000,#ed0400,#f10800,#f60b00,#ff1300,#ff1600,#ff2200,#ff2900,#ff3400,#ff3f00,#ff4e00,#ff5d00,#ff7300,#ff9100,#ffd700,#94ff63,#c7ff30,#ffc400,#ff9c00,#ff8d00,#ff8200,#ff7a00,#ff7700,#ff7300,#ff7300,#ff7700,#ff7700,#ff7a00,#ff7e00,#ff8600,#ff8d00,#ff9400,#ff9f00,#ffab00,#ffb600 99.48%)"></div><div style="top:242.89px;height:4.52px;background:linear-gradient(90deg,#ffc400 0.52%,#ffb600,#ffab00,#ff9f00,#ff9400,#ff8d00,#ff8900,#ff8200,#ff7e00,#ff7e00,#ff7a00,#ff7a00,#ff7e00,#ff8200,#ff8900,#ff9100,#ffa300,#ffcc00,#c1ff36,#8dff6a,#ffdb00,#ff9800,#ff7a00,#ff6400,#ff5200,#ff4700,#ff3800,#ff3000,#ff2500,#ff1e00,#ff1a00,#ff1300,#fa0f00,#f60b00,#f10800,#f10800,#f10800,#f10800,#f10800,#f60b00,#ff1300,#ff1600,#ff1e00,#ff2900,#ff3400,#ff3f00,#ff4700,#ff4700,#ff4a00,#ff4700,#ff4700,#ff3f00,#ff3400,#ff2900,#ff1e00,#ff1600,#ff1300,#f60b00,#f10800,#f10800,#f10800,#f10800,#f10800,#f60b00,#fa0f00,#ff1300,#ff1a00,#ff1e00,#ff2500,#ff3000,#ff3800,#ff4700,#ff5200,#ff6400,#ff7a00,#ff9800,#ffdb00,#8dff6a,#c1ff36,#ffcc00,#ffa300,#ff9100,#ff8900,#ff8200,#ff7e00,#ff7a00,#ff7a00,#ff7e00,#ff7e00,#ff8200,#ff8900,#ff8d00,#ff9400,#ff9f00,#ffab00,#ffb600,#ffc400 99.48%)"></div><div style="top:246.80px;height:4.52px;background:linear-gradient(90deg,#ffd000 0.52%,#ffc100,#ffb600,#ffab00,#ff9f00,#ff9800,#ff9100,#ff8d00,#ff8600,#ff8600,#ff8200,#ff8200,#ff8600,#ff8900,#ff9100,#ff9800,#ffab00,#ffd300,#baff3c,#87ff70,#ffe200,#ff9f00,#ff8200,#ff6c00,#ff5900,#ff4e00,#ff3f00,#ff3800,#ff2d00,#ff2500,#ff2200,#ff1a00,#ff1600,#ff1300,#fa0f00,#fa0f00,#fa0f00,#fa0f00,#ff1300,#ff1600,#ff1a00,#ff2200,#ff2900,#ff3000,#ff3b00,#ff4300,#ff4a00,#ff4e00,#ff4e00,#ff4e00,#ff4a00,#ff4300,#ff3b00,#ff3000,#ff2900,#ff2200,#ff1a00,#ff1600,#ff1300,#fa0f00,#fa0f00,#fa0f00,#fa0f00,#ff1300,#ff1600,#ff1a00,#ff2200,#ff2500,#ff2d00,#ff3800,#ff3f00,#ff4e00,#ff5900,#ff6c00,#ff8200,#ff9f00,#ffe200,#87ff70,#baff3c,#ffd300,#ffab00,#ff9800,#ff9100,#ff8900,#ff8600,#ff8200,#ff8200,#ff8600,#ff8600,#ff8d00,#ff9100,#ff9800,#ff9f00,#ffab00,#ffb600,#ffc100,#ffd000 99.48%)"></div><div style="top:250.72px;height:4.52px;background:linear-gradient(90deg,#ffe200 0.52%,#ffd000,#ffc400,#ffb600,#ffab00,#ffa300,#ff9c00,#ff9400,#ff9100,#ff8d00,#ff8d00,#ff8d00,#ff8d00,#ff9100,#ff9800,#ffa300,#ffb200,#ffdb00,#b4ff43,#80ff77,#ffea00,#ffa700,#ff8900,#ff7300,#ff6000,#ff5500,#ff4700,#ff3f00,#ff3400,#ff2d00,#ff2900,#ff2200,#ff1e00,#ff1a00,#ff1a00,#ff1600,#ff1600,#ff1a00,#ff1a00,#ff1e00,#ff2500,#ff2900,#ff3000,#ff3b00,#ff4300,#ff4a00,#ff4e00,#ff5200,#ff5200,#ff5200,#ff4e00,#ff4a00,#ff4300,#ff3b00,#ff3000,#ff2900,#ff2500,#ff1e00,#ff1a00,#ff1a00,#ff1600,#ff1600,#ff1a00,#ff1a00,#ff1e00,#ff2200,#ff2900,#ff2d00,#ff3400,#ff3f00,#ff4700,#ff5500,#ff6000,#ff7300,#ff8900,#ffa700,#ffea00,#80ff77,#b4ff43,#ffdb00,#ffb200,#ffa300,#ff9800,#ff9100,#ff8d00,#ff8d00,#ff8d00,#ff8d00,#ff9100,#ff9400,#ff9c00,#ffa300,#ffab00,#ffb600,#ffc400,#ffd000,#ffe200 99.48%)"></div><div style="top:254.64px;height:4.52px;background:linear-gradient(90deg,#f1fc06 0.52%,#ffe600,#ffd300,#ffc400,#ffb900,#ffae00,#ffa700,#ff9f00,#ff9c00,#ff9800,#ff9400,#ff9400,#ff9800,#ff9c00,#ff9f00,#ffab00,#ffb900,#ffe200,#adff49,#7aff7d,#fbf100,#ffae00,#ff9100,#ff7a00,#ff6c00,#ff5d00,#ff5200,#ff4700,#ff3f00,#ff3800,#ff3000,#ff2d00,#ff2900,#ff2500,#ff2200,#ff2200,#ff2200,#ff2200,#ff2500,#ff2900,#ff2d00,#ff3400,#ff3b00,#ff4300,#ff4a00,#ff5200,#ff5500,#ff5500,#ff5900,#ff5500,#ff5500,#ff5200,#ff4a00,#ff4300,#ff3b00,#ff3400,#ff2d00,#ff2900,#ff2500,#ff2200,#ff2200,#ff2200,#ff2200,#ff2500,#ff2900,#ff2d00,#ff3000,#ff3800,#ff3f00,#ff4700,#ff5200,#ff5d00,#ff6c00,#ff7a00,#ff9100,#ffae00,#fbf100,#7aff7d,#adff49,#ffe200,#ffb900,#ffab00,#ff9f00,#ff9c00,#ff9800,#ff9400,#ff9400,#ff9800,#ff9c00,#ff9f00,#ffa700,#ffae00,#ffb900,#ffc400,#ffd300,#ffe600,#f1fc06 99.48%)"></div><div style="top:258.56px;height:4.52px;background:linear-gradient(90deg,#c4ff33 0.52%,#e7ff0f,#feed00,#ffdb00,#ffcc00,#ffc100,#ffb600,#ffae00,#ffab00,#ffa300,#ffa300,#ff9f00,#ffa300,#ffa300,#ffab00,#ffb600,#ffc400,#feed00,#a7ff50,#70ff87,#f1fc06,#ffb900,#ff9800,#ff8600,#ff7300,#ff6400,#ff5900,#ff4e00,#ff4700,#ff3f00,#ff3800,#ff3400,#ff3000,#ff2d00,#ff2d00,#ff2900,#ff2d00,#ff2d00,#ff2d00,#ff3000,#ff3800,#ff3b00,#ff4300,#ff4a00,#ff5200,#ff5900,#ff5d00,#ff5d00,#ff5d00,#ff5d00,#ff5d00,#ff5900,#ff5200,#ff4a00,#ff4300,#ff3b00,#ff3800,#ff3000,#ff2d00,#ff2d00,#ff2d00,#ff2900,#ff2d00,#ff2d00,#ff3000,#ff3400,#ff3800,#ff3f00,#ff4700,#ff4e00,#ff5900,#ff6400,#ff7300,#ff8600,#ff9800,#ffb900,#f1fc06,#70ff87,#a7ff50,#feed00,#ffc400,#ffb600,#ffab00,#ffa300,#ffa300,#ff9f00,#ffa300,#ffa300,#ffab00,#ffae00,#ffb600,#ffc100,#ffcc00,#ffdb00,#feed00,#e7ff0f,#c4ff33 99.48%)"></div><div style="top:262.47px;height:4.52px;background:linear-gradient(90deg,#6dff8a 0.52%,#adff49,#d7ff1f,#f4f802,#ffe200,#ffd300,#ffc800,#ffc100,#ffb900,#ffb200,#ffae00,#ffae00,#ffae00,#ffb200,#ffb600,#ffc100,#ffd000,#f4f802,#9dff5a,#6aff8d,#e7ff0f,#ffc100,#ffa300,#ff8d00,#ff7e00,#ff6f00,#ff6400,#ff5900,#ff5200,#ff4a00,#ff4300,#ff3f00,#ff3b00,#ff3800,#ff3400,#ff3400,#ff3400,#ff3800,#ff3800,#ff3b00,#ff3f00,#ff4700,#ff4e00,#ff5500,#ff5900,#ff6000,#ff6400,#ff6400,#ff6400,#ff6400,#ff6400,#ff6000,#ff5900,#ff5500,#ff4e00,#ff4700,#ff3f00,#ff3b00,#ff3800,#ff3800,#ff3400,#ff3400,#ff3400,#ff3800,#ff3b00,#ff3f00,#ff4300,#ff4a00,#ff5200,#ff5900,#ff6400,#ff6f00,#ff7e00,#ff8d00,#ffa300,#ffc100,#e7ff0f,#6aff8d,#9dff5a,#f4f802,#ffd000,#ffc100,#ffb600,#ffb200,#ffae00,#ffae00,#ffae00,#ffb200,#ffb900,#ffc100,#ffc800,#ffd300,#ffe200,#f4f802,#d7ff1f,#adff49,#6dff8a 99.48%)"></div><div style="top:266.39px;height:4.52px;background:linear-gradient(90deg,#56ffa0 0.52%,#26ffd1,#8aff6d,#beff39,#e1ff16,#fbf100,#ffe200,#ffd300,#ffcc00,#ffc400,#ffc100,#ffbd00,#ffbd00,#ffbd00,#ffc400,#ffcc00,#ffdb00,#ebff0c,#94ff63,#60ff97,#deff19,#ffcc00,#ffae00,#ff9800,#ff8900,#ff7a00,#ff6f00,#ff6400,#ff5d00,#ff5500,#ff4e00,#ff4a00,#ff4700,#ff4300,#ff3f00,#ff3f00,#ff3f00,#ff4300,#ff4300,#ff4700,#ff4a00,#ff5200,#ff5500,#ff5d00,#ff6400,#ff6800,#ff6c00,#ff6c00,#ff6c00,#ff6c00,#ff6c00,#ff6800,#ff6400,#ff5d00,#ff5500,#ff5200,#ff4a00,#ff4700,#ff4300,#ff4300,#ff3f00,#ff3f00,#ff3f00,#ff4300,#ff4700,#ff4a00,#ff4e00,#ff5500,#ff5d00,#ff6400,#ff6f00,#ff7a00,#ff8900,#ff9800,#ffae00,#ffcc00,#deff19,#60ff97,#94ff63,#ebff0c,#ffdb00,#ffcc00,#ffc400,#ffbd00,#ffbd00,#ffbd00,#ffc100,#ffc400,#ffcc00,#ffd300,#ffe200,#fbf100,#e1ff16,#beff39,#8aff6d,#26ffd1,#56ffa0 99.48%)"></div><div style="top:270.31px;height:4.52px;background:linear-gradient(90deg,#b4ff43 0.52%,#8aff6d,#40ffb7,#49ffad,#97ff60,#c4ff33,#e4ff13,#f8f500,#ffe600,#ffdb00,#ffd300,#ffd000,#ffcc00,#ffd000,#ffd300,#ffdb00,#ffea00,#deff19,#87ff70,#53ffa4,#d4ff23,#ffdb00,#ffb900,#ffa300,#ff9400,#ff8600,#ff7a00,#ff6f00,#ff6800,#ff6000,#ff5900,#ff5500,#ff5200,#ff4e00,#ff4a00,#ff4a00,#ff4a00,#ff4e00,#ff4e00,#ff5200,#ff5500,#ff5d00,#ff6000,#ff6800,#ff6c00,#ff6f00,#ff7300,#ff7300,#ff7300,#ff7300,#ff7300,#ff6f00,#ff6c00,#ff6800,#ff6000,#ff5d00,#ff5500,#ff5200,#ff4e00,#ff4e00,#ff4a00,#ff4a00,#ff4a00,#ff4e00,#ff5200,#ff5500,#ff5900,#ff6000,#ff6800,#ff6f00,#ff7a00,#ff8600,#ff9400,#ffa300,#ffb900,#ffdb00,#d4ff23,#53ffa4,#87ff70,#deff19,#ffea00,#ffdb00,#ffd300,#ffd000,#ffcc00,#ffd000,#ffd300,#ffdb00,#ffe600,#f8f500,#e4ff13,#c4ff33,#97ff60,#49ffad,#40ffb7,#8aff6d,#b4ff43 99.48%)"></div><div style="top:274.23px;height:4.52px;background:linear-gradient(90deg,#e4ff13 0.52%,#d1ff26,#b4ff43,#87ff70,#36ffc1,#50ffa7,#97ff60,#c1ff36,#deff19,#f1fc06,#fbf100,#ffe600,#ffe200,#ffe200,#ffe600,#feed00,#f1fc06,#d1ff26,#7aff7d,#46ffb1,#c7ff30,#ffea00,#ffc800,#ffb200,#ff9f00,#ff9100,#ff8600,#ff7a00,#ff7300,#ff6c00,#ff6400,#ff6000,#ff5d00,#ff5900,#ff5900,#ff5900,#ff5900,#ff5900,#ff5900,#ff5d00,#ff6000,#ff6800,#ff6c00,#ff7300,#ff7700,#ff7a00,#ff7a00,#ff7a00,#ff7a00,#ff7a00,#ff7a00,#ff7a00,#ff7700,#ff7300,#ff6c00,#ff6800,#ff6000,#ff5d00,#ff5900,#ff5900,#ff5900,#ff5900,#ff5900,#ff5900,#ff5d00,#ff6000,#ff6400,#ff6c00,#ff7300,#ff7a00,#ff8600,#ff9100,#ff9f00,#ffb200,#ffc800,#ffea00,#c7ff30,#46ffb1,#7aff7d,#d1ff26,#f1fc06,#feed00,#ffe600,#ffe200,#ffe200,#ffe600,#fbf100,#f1fc06,#deff19,#c1ff36,#97ff60,#50ffa7,#36ffc1,#87ff70,#b4ff43,#d1ff26,#e4ff13 99.48%)"></div><div style="top:278.14px;height:4.52px;background:linear-gradient(90deg,#fbf100 0.52%,#f1fc06,#e7ff0f,#d4ff23,#b4ff43,#8aff6d,#40ffb7,#3cffba,#87ff70,#b1ff46,#ceff29,#e1ff16,#ebff0c,#f1fc06,#f1fc06,#ebff0c,#e1ff16,#c1ff36,#6aff8d,#36ffc1,#baff3c,#f4f802,#ffd700,#ffc100,#ffae00,#ff9f00,#ff9400,#ff8900,#ff8200,#ff7a00,#ff7300,#ff6f00,#ff6c00,#ff6800,#ff6400,#ff6400,#ff6400,#ff6400,#ff6800,#ff6c00,#ff6f00,#ff7300,#ff7700,#ff7e00,#ff8200,#ff8200,#ff8600,#ff8600,#ff8600,#ff8600,#ff8600,#ff8200,#ff8200,#ff7e00,#ff7700,#ff7300,#ff6f00,#ff6c00,#ff6800,#ff6400,#ff6400,#ff6400,#ff6400,#ff6800,#ff6c00,#ff6f00,#ff7300,#ff7a00,#ff8200,#ff8900,#ff9400,#ff9f00,#ffae00,#ffc100,#ffd700,#f4f802,#baff3c,#36ffc1,#6aff8d,#c1ff36,#e1ff16,#ebff0c,#f1fc06,#f1fc06,#ebff0c,#e1ff16,#ceff29,#b1ff46,#87ff70,#3cffba,#40ffb7,#8aff6d,#b4ff43,#d4ff23,#e7ff0f,#f1fc06,#fbf100 99.48%)"></div><div style="top:282.06px;height:4.52px;background:linear-gradient(90deg,#ffe200 0.52%,#ffe600,#feed00,#f8f500,#ebff0c,#d7ff1f,#baff3c,#94ff63,#5aff9d,#00d4ff,#6aff8d,#94ff63,#b1ff46,#c4ff33,#ceff29,#d1ff26,#c7ff30,#aaff4d,#56ffa0,#26ffd1,#a7ff50,#e4ff13,#ffea00,#ffd300,#ffc100,#ffb200,#ffa700,#ff9c00,#ff9100,#ff8900,#ff8200,#ff7e00,#ff7a00,#ff7700,#ff7300,#ff7300,#ff7300,#ff7300,#ff7700,#ff7a00,#ff7e00,#ff8200,#ff8600,#ff8900,#ff8d00,#ff8d00,#ff9100,#ff9100,#ff9100,#ff9100,#ff9100,#ff8d00,#ff8d00,#ff8900,#ff8600,#ff8200,#ff7e00,#ff7a00,#ff7700,#ff7300,#ff7300,#ff7300,#ff7300,#ff7700,#ff7a00,#ff7e00,#ff8200,#ff8900,#ff9100,#ff9c00,#ffa700,#ffb200,#ffc100,#ffd300,#ffea00,#e4ff13,#a7ff50,#26ffd1,#56ffa0,#aaff4d,#c7ff30,#d1ff26,#ceff29,#c4ff33,#b1ff46,#94ff63,#6aff8d,#00d4ff,#5aff9d,#94ff63,#baff3c,#d7ff1f,#ebff0c,#f8f500,#feed00,#ffe600,#ffe200 99.48%)"></div><div style="top:285.98px;height:4.52px;background:linear-gradient(90deg,#ffd700 0.52%,#ffdb00,#ffde00,#ffe200,#ffea00,#fbf100,#eeff09,#dbff1c,#c1ff36,#a0ff56,#73ff83,#1fffd7,#2cffca,#66ff90,#87ff70,#97ff60,#9aff5d,#87ff70,#36ffc1,#09f0ee,#90ff66,#ceff29,#ebff0c,#ffea00,#ffd700,#ffc800,#ffb900,#ffae00,#ffa300,#ff9c00,#ff9400,#ff9100,#ff8d00,#ff8900,#ff8600,#ff8600,#ff8600,#ff8600,#ff8600,#ff8900,#ff8d00,#ff9100,#ff9400,#ff9800,#ff9800,#ff9c00,#ff9c00,#ff9c00,#ff9c00,#ff9c00,#ff9c00,#ff9c00,#ff9800,#ff9800,#ff9400,#ff9100,#ff8d00,#ff8900,#ff8600,#ff8600,#ff8600,#ff8600,#ff8600,#ff8900,#ff8d00,#ff9100,#ff9400,#ff9c00,#ffa300,#ffae00,#ffb900,#ffc800,#ffd700,#ffea00,#ebff0c,#ceff29,#90ff66,#09f0ee,#36ffc1,#87ff70,#9aff5d,#97ff60,#87ff70,#66ff90,#2cffca,#1fffd7,#73ff83,#a0ff56,#c1ff36,#dbff1c,#eeff09,#fbf100,#ffea00,#ffe200,#ffde00,#ffdb00,#ffd700 99.48%)"></div><div style="top:289.90px;height:4.52px;background:linear-gradient(90deg,#ffd000 0.52%,#ffd000,#ffd300,#ffd300,#ffd700,#ffde00,#ffe600,#fbf100,#f1fc06,#deff19,#caff2c,#aaff4d,#87ff70,#56ffa0,#00d9ff,#13fce4,#3cffba,#39ffbe,#00dcfe,#00b4ff,#66ff90,#aaff4d,#ceff29,#e7ff0f,#fbf100,#ffe200,#ffd300,#ffc400,#ffb900,#ffb200,#ffab00,#ffa300,#ff9f00,#ff9c00,#ff9800,#ff9800,#ff9800,#ff9800,#ff9800,#ff9c00,#ff9c00,#ff9f00,#ffa300,#ffa700,#ffab00,#ffab00,#ffab00,#ffab00,#ffab00,#ffab00,#ffab00,#ffab00,#ffab00,#ffa700,#ffa300,#ff9f00,#ff9c00,#ff9c00,#ff9800,#ff9800,#ff9800,#ff9800,#ff9800,#ff9c00,#ff9f00,#ffa300,#ffab00,#ffb200,#ffb900,#ffc400,#ffd300,#ffe200,#fbf100,#e7ff0f,#ceff29,#aaff4d,#66ff90,#00b4ff,#00dcfe,#39ffbe,#3cffba,#13fce4,#00d9ff,#56ffa0,#87ff70,#aaff4d,#caff2c,#deff19,#f1fc06,#fbf100,#ffe600,#ffde00,#ffd700,#ffd300,#ffd300,#ffd000,#ffd000 99.48%)"></div><div style="top:293.81px;height:4.52px;background:linear-gradient(90deg,#ffc800 0.52%,#ffc800,#ffc800,#ffcc00,#ffcc00,#ffd000,#ffd700,#ffde00,#ffe600,#fbf100,#f1fc06,#e1ff16,#ceff29,#b4ff43,#94ff63,#6aff8d,#33ffc4,#00a9ff,#0008ff,#002dff,#0cf4eb,#60ff97,#90ff66,#b1ff46,#ceff29,#e1ff16,#f4f802,#ffea00,#ffdb00,#ffd000,#ffc400,#ffbd00,#ffb900,#ffb600,#ffb200,#ffae00,#ffae00,#ffae00,#ffae00,#ffae00,#ffb200,#ffb600,#ffb600,#ffb900,#ffbd00,#ffbd00,#ffbd00,#ffbd00,#ffbd00,#ffbd00,#ffbd00,#ffbd00,#ffbd00,#ffb900,#ffb600,#ffb600,#ffb200,#ffae00,#ffae00,#ffae00,#ffae00,#ffae00,#ffb200,#ffb600,#ffb900,#ffbd00,#ffc400,#ffd000,#ffdb00,#ffea00,#f4f802,#e1ff16,#ceff29,#b1ff46,#90ff66,#60ff97,#0cf4eb,#002dff,#0008ff,#00a9ff,#33ffc4,#6aff8d,#94ff63,#b4ff43,#ceff29,#e1ff16,#f1fc06,#fbf100,#ffe600,#ffde00,#ffd700,#ffd000,#ffcc00,#ffcc00,#ffc800,#ffc800,#ffc800 99.48%)"></div><div style="top:297.73px;height:4.52px;background:linear-gradient(90deg,#ffc400 0.52%,#ffc400,#ffc400,#ffc400,#ffc400,#ffc800,#ffcc00,#ffd000,#ffd700,#ffde00,#ffea00,#f8f500,#ebff0c,#deff19,#caff2c,#b1ff46,#8dff6a,#53ffa4,#00bcff,#0055ff,#00c4ff,#00b4ff,#00ccff,#40ffb7,#70ff87,#90ff66,#adff49,#c4ff33,#d7ff1f,#e7ff0f,#f4f802,#ffea00,#ffe200,#ffdb00,#ffd300,#ffd000,#ffcc00,#ffcc00,#ffcc00,#ffcc00,#ffcc00,#ffd000,#ffd000,#ffd300,#ffd300,#ffd300,#ffd300,#ffd300,#ffd300,#ffd300,#ffd300,#ffd300,#ffd300,#ffd300,#ffd000,#ffd000,#ffcc00,#ffcc00,#ffcc00,#ffcc00,#ffcc00,#ffd000,#ffd300,#ffdb00,#ffe200,#ffea00,#f4f802,#e7ff0f,#d7ff1f,#c4ff33,#adff49,#90ff66,#70ff87,#40ffb7,#00ccff,#00b4ff,#00c4ff,#0055ff,#00bcff,#53ffa4,#8dff6a,#b1ff46,#caff2c,#deff19,#ebff0c,#f8f500,#ffea00,#ffde00,#ffd700,#ffd000,#ffcc00,#ffc800,#ffc400,#ffc400,#ffc400,#ffc400,#ffc400 99.48%)"></div><div style="top:301.65px;height:4.52px;background:linear-gradient(90deg,#ffc100 0.52%,#ffc100,#ffbd00,#ffbd00,#ffc100,#ffc100,#ffc400,#ffc800,#ffcc00,#ffd300,#ffdb00,#ffe600,#fbf100,#eeff09,#e1ff16,#ceff29,#b7ff40,#87ff70,#1fffd7,#00b9ff,#49ffad,#70ff87,#73ff83,#6dff8a,#5dff9a,#3cffba,#00c0ff,#29ffce,#63ff94,#83ff73,#9dff5a,#b1ff46,#c1ff36,#ceff29,#d7ff1f,#e1ff16,#e7ff0f,#eeff09,#f1fc06,#f1fc06,#f4f802,#f4f802,#f4f802,#f4f802,#f4f802,#f4f802,#f4f802,#f4f802,#f4f802,#f4f802,#f4f802,#f4f802,#f4f802,#f4f802,#f4f802,#f4f802,#f4f802,#f1fc06,#f1fc06,#eeff09,#e7ff0f,#e1ff16,#d7ff1f,#ceff29,#c1ff36,#b1ff46,#9dff5a,#83ff73,#63ff94,#29ffce,#00c0ff,#3cffba,#5dff9a,#6dff8a,#73ff83,#70ff87,#49ffad,#00b9ff,#1fffd7,#87ff70,#b7ff40,#ceff29,#e1ff16,#eeff09,#fbf100,#ffe600,#ffdb00,#ffd300,#ffcc00,#ffc800,#ffc400,#ffc100,#ffc100,#ffbd00,#ffbd00,#ffc100,#ffc100 99.48%)"></div><div style="top:305.57px;height:4.52px;background:linear-gradient(90deg,#ffbd00 0.52%,#ffbd00,#ffb900,#ffb900,#ffb900,#ffbd00,#ffbd00,#ffc100,#ffc400,#ffcc00,#ffd300,#ffdb00,#ffe600,#fbf100,#eeff09,#deff19,#c7ff30,#9dff5a,#3cffba,#00e4f8,#77ff80,#a4ff53,#b4ff43,#baff3c,#baff3c,#b4ff43,#adff49,#a4ff53,#97ff60,#87ff70,#70ff87,#53ffa4,#16ffe1,#00e4f8,#46ffb1,#66ff90,#7aff7d,#8aff6d,#94ff63,#9aff5d,#a0ff56,#a4ff53,#a7ff50,#aaff4d,#adff49,#adff49,#b1ff46,#b1ff46,#b1ff46,#b1ff46,#b1ff46,#adff49,#adff49,#aaff4d,#a7ff50,#a4ff53,#a0ff56,#9aff5d,#94ff63,#8aff6d,#7aff7d,#66ff90,#46ffb1,#00e4f8,#16ffe1,#53ffa4,#70ff87,#87ff70,#97ff60,#a4ff53,#adff49,#b4ff43,#baff3c,#baff3c,#b4ff43,#a4ff53,#77ff80,#00e4f8,#3cffba,#9dff5a,#c7ff30,#deff19,#eeff09,#fbf100,#ffe600,#ffdb00,#ffd300,#ffcc00,#ffc400,#ffc100,#ffbd00,#ffbd00,#ffb900,#ffb900,#ffb900,#ffbd00,#ffbd00 99.48%)"></div><div style="top:309.48px;height:4.52px;background:linear-gradient(90deg,#ffbd00 0.52%,#ffb900,#ffb900,#ffb600,#ffb600,#ffb900,#ffb900,#ffbd00,#ffc100,#ffc400,#ffcc00,#ffd300,#ffde00,#ffea00,#f8f500,#e7ff0f,#d1ff26,#aaff4d,#49ffad,#0ff9e7,#87ff70,#baff3c,#d1ff26,#dbff1c,#e1ff16,#e4ff13,#e7ff0f,#e4ff13,#e1ff16,#deff19,#d7ff1f,#ceff29,#c7ff30,#baff3c,#b1ff46,#a4ff53,#97ff60,#8aff6d,#7aff7d,#6dff8a,#5dff9a,#49ffad,#36ffc1,#23ffd4,#0cf4eb,#00d9ff,#00bcff,#00a4ff,#009cff,#00a4ff,#00bcff,#00d9ff,#0cf4eb,#23ffd4,#36ffc1,#49ffad,#5dff9a,#6dff8a,#7aff7d,#8aff6d,#97ff60,#a4ff53,#b1ff46,#baff3c,#c7ff30,#ceff29,#d7ff1f,#deff19,#e1ff16,#e4ff13,#e7ff0f,#e4ff13,#e1ff16,#dbff1c,#d1ff26,#baff3c,#87ff70,#0ff9e7,#49ffad,#aaff4d,#d1ff26,#e7ff0f,#f8f500,#ffea00,#ffde00,#ffd300,#ffcc00,#ffc400,#ffc100,#ffbd00,#ffb900,#ffb900,#ffb600,#ffb600,#ffb900,#ffb900,#ffbd00 99.48%)"></div><div style="top:313.40px;height:4.52px;background:linear-gradient(90deg,#ffbd00 0.52%,#ffb900,#ffb600,#ffb600,#ffb600,#ffb600,#ffb600,#ffb900,#ffbd00,#ffc100,#ffc800,#ffd000,#ffd700,#ffe200,#feed00,#eeff09,#dbff1c,#b1ff46,#53ffa4,#19ffde,#94ff63,#c7ff30,#deff19,#ebff0c,#f1fc06,#f8f500,#feed00,#ffea00,#ffea00,#ffea00,#ffea00,#feed00,#feed00,#f8f500,#f4f802,#eeff09,#e7ff0f,#e1ff16,#dbff1c,#d4ff23,#ceff29,#c7ff30,#c1ff36,#baff3c,#b7ff40,#b4ff43,#b1ff46,#b1ff46,#b1ff46,#b1ff46,#b1ff46,#b4ff43,#b7ff40,#baff3c,#c1ff36,#c7ff30,#ceff29,#d4ff23,#dbff1c,#e1ff16,#e7ff0f,#eeff09,#f4f802,#f8f500,#feed00,#feed00,#ffea00,#ffea00,#ffea00,#ffea00,#feed00,#f8f500,#f1fc06,#ebff0c,#deff19,#c7ff30,#94ff63,#19ffde,#53ffa4,#b1ff46,#dbff1c,#eeff09,#feed00,#ffe200,#ffd700,#ffd000,#ffc800,#ffc100,#ffbd00,#ffb900,#ffb600,#ffb600,#ffb600,#ffb600,#ffb600,#ffb900,#ffbd00 99.48%)"></div><div style="top:317.32px;height:4.52px;background:linear-gradient(90deg,#ffbd00 0.52%,#ffb900,#ffb600,#ffb600,#ffb600,#ffb600,#ffb600,#ffb900,#ffb900,#ffbd00,#ffc400,#ffcc00,#ffd300,#ffde00,#ffea00,#f4f802,#deff19,#b7ff40,#5aff9d,#1fffd7,#9aff5d,#d1ff26,#e4ff13,#f4f802,#feed00,#ffe600,#ffde00,#ffdb00,#ffd700,#ffd700,#ffd300,#ffd300,#ffd700,#ffd700,#ffdb00,#ffdb00,#ffde00,#ffe200,#ffea00,#feed00,#fbf100,#f8f500,#f4f802,#f1fc06,#eeff09,#eeff09,#ebff0c,#ebff0c,#ebff0c,#ebff0c,#ebff0c,#eeff09,#eeff09,#f1fc06,#f4f802,#f8f500,#fbf100,#feed00,#ffea00,#ffe200,#ffde00,#ffdb00,#ffdb00,#ffd700,#ffd700,#ffd300,#ffd300,#ffd700,#ffd700,#ffdb00,#ffde00,#ffe600,#feed00,#f4f802,#e4ff13,#d1ff26,#9aff5d,#1fffd7,#5aff9d,#b7ff40,#deff19,#f4f802,#ffea00,#ffde00,#ffd300,#ffcc00,#ffc400,#ffbd00,#ffb900,#ffb900,#ffb600,#ffb600,#ffb600,#ffb600,#ffb600,#ffb900,#ffbd00 99.48%)"></div><div style="top:321.24px;height:4.52px;background:linear-gradient(90deg,#ffbd00 0.52%,#ffb900,#ffb600,#ffb600,#ffb600,#ffb600,#ffb600,#ffb600,#ffb900,#ffbd00,#ffc100,#ffc800,#ffd000,#ffdb00,#ffe600,#f8f500,#e4ff13,#baff3c,#5dff9a,#23ffd4,#a0ff56,#d4ff23,#ebff0c,#fbf100,#ffe600,#ffde00,#ffd700,#ffd000,#ffcc00,#ffcc00,#ffc800,#ffc800,#ffc800,#ffc800,#ffc800,#ffcc00,#ffd000,#ffd000,#ffd300,#ffd700,#ffdb00,#ffde00,#ffe200,#ffe200,#ffe600,#ffe600,#ffe600,#ffe600,#ffe600,#ffe600,#ffe600,#ffe600,#ffe600,#ffe200,#ffe200,#ffde00,#ffdb00,#ffd700,#ffd300,#ffd000,#ffd000,#ffcc00,#ffc800,#ffc800,#ffc800,#ffc800,#ffc800,#ffcc00,#ffcc00,#ffd000,#ffd700,#ffde00,#ffe600,#fbf100,#ebff0c,#d4ff23,#a0ff56,#23ffd4,#5dff9a,#baff3c,#e4ff13,#f8f500,#ffe600,#ffdb00,#ffd000,#ffc800,#ffc100,#ffbd00,#ffb900,#ffb600,#ffb600,#ffb600,#ffb600,#ffb600,#ffb600,#ffb900,#ffbd00 99.48%)"></div><div style="top:325.15px;height:4.52px;background:linear-gradient(90deg,#ffbd00 0.52%,#ffb900,#ffb600,#ffb600,#ffb600,#ffb600,#ffb600,#ffb600,#ffb900,#ffbd00,#ffc100,#ffc800,#ffd000,#ffd700,#ffe600,#f8f500,#e4ff13,#beff39,#60ff97,#26ffd1,#a4ff53,#d7ff1f,#f1fc06,#feed00,#ffe200,#ffd700,#ffd000,#ffcc00,#ffc800,#ffc400,#ffc100,#ffc100,#ffc100,#ffc100,#ffc100,#ffc100,#ffc400,#ffc400,#ffc800,#ffcc00,#ffd000,#ffd000,#ffd300,#ffd300,#ffd700,#ffd700,#ffd700,#ffd700,#ffd700,#ffd700,#ffd700,#ffd700,#ffd700,#ffd300,#ffd300,#ffd000,#ffd000,#ffcc00,#ffc800,#ffc400,#ffc400,#ffc100,#ffc100,#ffc100,#ffc100,#ffc100,#ffc100,#ffc400,#ffc800,#ffcc00,#ffd000,#ffd700,#ffe200,#feed00,#f1fc06,#d7ff1f,#a4ff53,#26ffd1,#60ff97,#beff39,#e4ff13,#f8f500,#ffe600,#ffd700,#ffd000,#ffc800,#ffc100,#ffbd00,#ffb900,#ffb600,#ffb600,#ffb600,#ffb600,#ffb600,#ffb600,#ffb900,#ffbd00 99.48%)"></div><div style="top:329.07px;height:4.52px;background:linear-gradient(90deg,#ffc100 0.52%,#ffbd00,#ffb900,#ffb600,#ffb600,#ffb600,#ffb600,#ffb600,#ffb900,#ffbd00,#ffc100,#ffc800,#ffd000,#ffd700,#ffe200,#fbf100,#e7ff0f,#beff39,#60ff97,#29ffce,#a4ff53,#dbff1c,#f1fc06,#ffea00,#ffde00,#ffd300,#ffcc00,#ffc800,#ffc100,#ffbd00,#ffbd00,#ffb900,#ffb900,#ffb900,#ffb900,#ffb900,#ffbd00,#ffbd00,#ffc100,#ffc400,#ffc400,#ffc800,#ffc800,#ffcc00,#ffcc00,#ffcc00,#ffcc00,#ffcc00,#ffcc00,#ffcc00,#ffcc00,#ffcc00,#ffcc00,#ffcc00,#ffc800,#ffc800,#ffc400,#ffc400,#ffc100,#ffbd00,#ffbd00,#ffb900,#ffb900,#ffb900,#ffb900,#ffb900,#ffbd00,#ffbd00,#ffc100,#ffc800,#ffcc00,#ffd300,#ffde00,#ffea00,#f1fc06,#dbff1c,#a4ff53,#29ffce,#60ff97,#beff39,#e7ff0f,#fbf100,#ffe200,#ffd700,#ffd000,#ffc800,#ffc100,#ffbd00,#ffb900,#ffb600,#ffb600,#ffb600,#ffb600,#ffb600,#ffb900,#ffbd00,#ffc100 99.48%)"></div><div style="top:332.99px;height:4.52px;background:linear-gradient(90deg,#ffc400 0.52%,#ffbd00,#ffbd00,#ffb900,#ffb900,#ffb600,#ffb600,#ffb900,#ffb900,#ffbd00,#ffc100,#ffc800,#ffd000,#ffd700,#ffe200,#fbf100,#e7ff0f,#beff39,#63ff94,#29ffce,#a7ff50,#deff19,#f4f802,#ffea00,#ffdb00,#ffd300,#ffc800,#ffc400,#ffbd00,#ffb900,#ffb900,#ffb600,#ffb600,#ffb600,#ffb600,#ffb600,#ffb600,#ffb900,#ffb900,#ffbd00,#ffbd00,#ffc100,#ffc100,#ffc400,#ffc400,#ffc400,#ffc400,#ffc400,#ffc400,#ffc400,#ffc400,#ffc400,#ffc400,#ffc400,#ffc100,#ffc100,#ffbd00,#ffbd00,#ffb900,#ffb900,#ffb600,#ffb600,#ffb600,#ffb600,#ffb600,#ffb600,#ffb900,#ffb900,#ffbd00,#ffc400,#ffc800,#ffd300,#ffdb00,#ffea00,#f4f802,#deff19,#a7ff50,#29ffce,#63ff94,#beff39,#e7ff0f,#fbf100,#ffe200,#ffd700,#ffd000,#ffc800,#ffc100,#ffbd00,#ffb900,#ffb900,#ffb600,#ffb600,#ffb900,#ffb900,#ffbd00,#ffbd00,#ffc400 99.48%)"></div><div style="top:336.91px;height:4.52px;background:linear-gradient(90deg,#ffc800 0.52%,#ffc100,#ffbd00,#ffbd00,#ffb900,#ffb900,#ffb900,#ffb900,#ffbd00,#ffc100,#ffc400,#ffc800,#ffd000,#ffdb00,#ffe600,#f8f500,#e4ff13,#beff39,#60ff97,#29ffce,#a7ff50,#deff19,#f4f802,#ffea00,#ffdb00,#ffd000,#ffc800,#ffc100,#ffbd00,#ffb900,#ffb600,#ffb600,#ffb200,#ffb200,#ffb200,#ffb200,#ffb600,#ffb600,#ffb600,#ffb900,#ffb900,#ffbd00,#ffbd00,#ffbd00,#ffc100,#ffc100,#ffc100,#ffc100,#ffc100,#ffc100,#ffc100,#ffc100,#ffc100,#ffbd00,#ffbd00,#ffbd00,#ffb900,#ffb900,#ffb600,#ffb600,#ffb600,#ffb200,#ffb200,#ffb200,#ffb200,#ffb600,#ffb600,#ffb900,#ffbd00,#ffc100,#ffc800,#ffd000,#ffdb00,#ffea00,#f4f802,#deff19,#a7ff50,#29ffce,#60ff97,#beff39,#e4ff13,#f8f500,#ffe600,#ffdb00,#ffd000,#ffc800,#ffc400,#ffc100,#ffbd00,#ffb900,#ffb900,#ffb900,#ffb900,#ffbd00,#ffbd00,#ffc100,#ffc800 99.48%)"></div><div style="top:340.82px;height:4.52px;background:linear-gradient(90deg,#ffcc00 0.52%,#ffc400,#ffc400,#ffc100,#ffbd00,#ffbd00,#ffbd00,#ffbd00,#ffc100,#ffc100,#ffc800,#ffcc00,#ffd300,#ffdb00,#ffe600,#f8f500,#e4ff13,#beff39,#60ff97,#29ffce,#a4ff53,#dbff1c,#f4f802,#ffea00,#ffdb00,#ffd000,#ffc800,#ffc100,#ffbd00,#ffb900,#ffb600,#ffb600,#ffb200,#ffb200,#ffb200,#ffb200,#ffb200,#ffb200,#ffb600,#ffb600,#ffb900,#ffb900,#ffb900,#ffb900,#ffbd00,#ffbd00,#ffbd00,#ffbd00,#ffbd00,#ffbd00,#ffbd00,#ffbd00,#ffbd00,#ffb900,#ffb900,#ffb900,#ffb900,#ffb600,#ffb600,#ffb200,#ffb200,#ffb200,#ffb200,#ffb200,#ffb200,#ffb600,#ffb600,#ffb900,#ffbd00,#ffc100,#ffc800,#ffd000,#ffdb00,#ffea00,#f4f802,#dbff1c,#a4ff53,#29ffce,#60ff97,#beff39,#e4ff13,#f8f500,#ffe600,#ffdb00,#ffd300,#ffcc00,#ffc800,#ffc100,#ffc100,#ffbd00,#ffbd00,#ffbd00,#ffbd00,#ffc100,#ffc400,#ffc400,#ffcc00 99.48%)"></div><div style="top:344.74px;height:4.52px;background:linear-gradient(90deg,#ffd000 0.52%,#ffcc00,#ffc800,#ffc400,#ffc100,#ffc100,#ffc100,#ffc100,#ffc400,#ffc400,#ffc800,#ffd000,#ffd700,#ffde00,#ffea00,#f4f802,#e1ff16,#baff3c,#5dff9a,#26ffd1,#a4ff53,#dbff1c,#f1fc06,#ffea00,#ffde00,#ffd300,#ffcc00,#ffc400,#ffbd00,#ffb900,#ffb600,#ffb600,#ffb200,#ffb200,#ffb200,#ffb200,#ffb200,#ffb200,#ffb600,#ffb600,#ffb600,#ffb900,#ffb900,#ffb900,#ffb900,#ffb900,#ffb900,#ffb900,#ffb900,#ffb900,#ffb900,#ffb900,#ffb900,#ffb900,#ffb900,#ffb900,#ffb600,#ffb600,#ffb600,#ffb200,#ffb200,#ffb200,#ffb200,#ffb200,#ffb200,#ffb600,#ffb600,#ffb900,#ffbd00,#ffc400,#ffcc00,#ffd300,#ffde00,#ffea00,#f1fc06,#dbff1c,#a4ff53,#26ffd1,#5dff9a,#baff3c,#e1ff16,#f4f802,#ffea00,#ffde00,#ffd700,#ffd000,#ffc800,#ffc400,#ffc400,#ffc100,#ffc100,#ffc100,#ffc100,#ffc400,#ffc800,#ffcc00,#ffd000 99.48%)"></div><div style="top:348.66px;height:4.52px;background:linear-gradient(90deg,#ffd700 0.52%,#ffd000,#ffcc00,#ffc800,#ffc800,#ffc400,#ffc400,#ffc800,#ffc800,#ffcc00,#ffd000,#ffd300,#ffdb00,#ffe200,#feed00,#f1fc06,#deff19,#b7ff40,#5dff9a,#23ffd4,#a0ff56,#d7ff1f,#eeff09,#feed00,#ffde00,#ffd300,#ffcc00,#ffc400,#ffc100,#ffbd00,#ffb900,#ffb600,#ffb600,#ffb200,#ffb200,#ffb200,#ffb200,#ffb200,#ffb600,#ffb600,#ffb600,#ffb600,#ffb900,#ffb900,#ffb900,#ffb900,#ffb900,#ffb900,#ffb900,#ffb900,#ffb900,#ffb900,#ffb900,#ffb900,#ffb900,#ffb600,#ffb600,#ffb600,#ffb600,#ffb200,#ffb200,#ffb200,#ffb200,#ffb200,#ffb600,#ffb600,#ffb900,#ffbd00,#ffc100,#ffc400,#ffcc00,#ffd300,#ffde00,#feed00,#eeff09,#d7ff1f,#a0ff56,#23ffd4,#5dff9a,#b7ff40,#deff19,#f1fc06,#feed00,#ffe200,#ffdb00,#ffd300,#ffd000,#ffcc00,#ffc800,#ffc800,#ffc400,#ffc400,#ffc800,#ffc800,#ffcc00,#ffd000,#ffd700 99.48%)"></div><div style="top:352.58px;height:4.52px;background:linear-gradient(90deg,#ffdb00 0.52%,#ffd700,#ffd300,#ffd000,#ffcc00,#ffcc00,#ffcc00,#ffcc00,#ffcc00,#ffd000,#ffd300,#ffd700,#ffde00,#ffe600,#fbf100,#eeff09,#dbff1c,#b4ff43,#5aff9d,#1fffd7,#9dff5a,#d4ff23,#eeff09,#fbf100,#ffe200,#ffd700,#ffd000,#ffc800,#ffc400,#ffbd00,#ffb900,#ffb900,#ffb600,#ffb600,#ffb600,#ffb600,#ffb600,#ffb600,#ffb600,#ffb600,#ffb600,#ffb900,#ffb900,#ffb900,#ffb900,#ffb900,#ffb900,#ffb900,#ffb900,#ffb900,#ffb900,#ffb900,#ffb900,#ffb900,#ffb900,#ffb900,#ffb600,#ffb600,#ffb600,#ffb600,#ffb600,#ffb600,#ffb600,#ffb600,#ffb600,#ffb900,#ffb900,#ffbd00,#ffc400,#ffc800,#ffd000,#ffd700,#ffe200,#fbf100,#eeff09,#d4ff23,#9dff5a,#1fffd7,#5aff9d,#b4ff43,#dbff1c,#eeff09,#fbf100,#ffe600,#ffde00,#ffd700,#ffd300,#ffd000,#ffcc00,#ffcc00,#ffcc00,#ffcc00,#ffcc00,#ffd000,#ffd300,#ffd700,#ffdb00 99.48%)"></div><div style="top:356.49px;height:4.52px;background:linear-gradient(90deg,#ffe600 0.52%,#ffde00,#ffdb00,#ffd700,#ffd300,#ffd300,#ffd300,#ffd300,#ffd300,#ffd700,#ffdb00,#ffde00,#ffe200,#feed00,#f4f802,#ebff0c,#d7ff1f,#b1ff46,#53ffa4,#1cffdb,#9aff5d,#d1ff26,#e7ff0f,#f8f500,#ffe600,#ffdb00,#ffd300,#ffcc00,#ffc800,#ffc100,#ffbd00,#ffbd00,#ffb900,#ffb900,#ffb600,#ffb600,#ffb600,#ffb600,#ffb900,#ffb900,#ffb900,#ffb900,#ffb900,#ffb900,#ffb900,#ffb900,#ffb900,#ffb900,#ffb900,#ffb900,#ffb900,#ffb900,#ffb900,#ffb900,#ffb900,#ffb900,#ffb900,#ffb900,#ffb900,#ffb600,#ffb600,#ffb600,#ffb600,#ffb900,#ffb900,#ffbd00,#ffbd00,#ffc100,#ffc800,#ffcc00,#ffd300,#ffdb00,#ffe600,#f8f500,#e7ff0f,#d1ff26,#9aff5d,#1cffdb,#53ffa4,#b1ff46,#d7ff1f,#ebff0c,#f4f802,#feed00,#ffe200,#ffde00,#ffdb00,#ffd700,#ffd300,#ffd300,#ffd300,#ffd300,#ffd300,#ffd700,#ffdb00,#ffde00,#ffe600 99.48%)"></div><div style="top:360.41px;height:4.52px;background:linear-gradient(90deg,#feed00 0.52%,#ffea00,#ffe200,#ffde00,#ffde00,#ffdb00,#ffdb00,#ffdb00,#ffdb00,#ffde00,#ffde00,#ffe600,#ffea00,#fbf100,#f1fc06,#e4ff13,#d1ff26,#aaff4d,#50ffa7,#19ffde,#94ff63,#ceff29,#e4ff13,#f4f802,#feed00,#ffe200,#ffd700,#ffd000,#ffcc00,#ffc400,#ffc100,#ffc100,#ffbd00,#ffbd00,#ffb900,#ffb900,#ffb900,#ffb900,#ffb900,#ffb900,#ffbd00,#ffbd00,#ffbd00,#ffbd00,#ffbd00,#ffbd00,#ffbd00,#ffb900,#ffb900,#ffb900,#ffbd00,#ffbd00,#ffbd00,#ffbd00,#ffbd00,#ffbd00,#ffbd00,#ffb900,#ffb900,#ffb900,#ffb900,#ffb900,#ffb900,#ffbd00,#ffbd00,#ffc100,#ffc100,#ffc400,#ffcc00,#ffd000,#ffd700,#ffe200,#feed00,#f4f802,#e4ff13,#ceff29,#94ff63,#19ffde,#50ffa7,#aaff4d,#d1ff26,#e4ff13,#f1fc06,#fbf100,#ffea00,#ffe600,#ffde00,#ffde00,#ffdb00,#ffdb00,#ffdb00,#ffdb00,#ffde00,#ffde00,#ffe200,#ffea00,#feed00 99.48%)"></div><div style="top:364.33px;height:4.52px;background:linear-gradient(90deg,#f4f802 0.52%,#fbf100,#feed00,#ffea00,#ffe600,#ffe200,#ffe200,#ffe200,#ffe200,#ffe600,#ffea00,#feed00,#fbf100,#f4f802,#ebff0c,#deff19,#caff2c,#a7ff50,#49ffad,#13fce4,#90ff66,#c7ff30,#deff19,#eeff09,#fbf100,#ffe600,#ffde00,#ffd700,#ffd000,#ffcc00,#ffc800,#ffc400,#ffc100,#ffc100,#ffc100,#ffbd00,#ffbd00,#ffbd00,#ffbd00,#ffbd00,#ffc100,#ffc100,#ffc100,#ffc100,#ffbd00,#ffbd00,#ffbd00,#ffbd00,#ffbd00,#ffbd00,#ffbd00,#ffbd00,#ffbd00,#ffc100,#ffc100,#ffc100,#ffc100,#ffbd00,#ffbd00,#ffbd00,#ffbd00,#ffbd00,#ffc100,#ffc100,#ffc100,#ffc400,#ffc800,#ffcc00,#ffd000,#ffd700,#ffde00,#ffe600,#fbf100,#eeff09,#deff19,#c7ff30,#90ff66,#13fce4,#49ffad,#a7ff50,#caff2c,#deff19,#ebff0c,#f4f802,#fbf100,#feed00,#ffea00,#ffe600,#ffe200,#ffe200,#ffe200,#ffe200,#ffe600,#ffea00,#feed00,#fbf100,#f4f802 99.48%)"></div><div style="top:368.25px;height:4.52px;background:linear-gradient(90deg,#ebff0c 0.52%,#eeff09,#f4f802,#f8f500,#fbf100,#feed00,#feed00,#feed00,#feed00,#feed00,#fbf100,#f8f500,#f1fc06,#ebff0c,#e4ff13,#d7ff1f,#c4ff33,#9dff5a,#43ffb4,#0cf4eb,#8aff6d,#c1ff36,#d7ff1f,#e7ff0f,#f4f802,#feed00,#ffe600,#ffde00,#ffd700,#ffd300,#ffd000,#ffcc00,#ffc800,#ffc800,#ffc400,#ffc400,#ffc400,#ffc400,#ffc400,#ffc400,#ffc400,#ffc400,#ffc400,#ffc400,#ffc400,#ffc100,#ffc100,#ffc100,#ffc100,#ffc100,#ffc100,#ffc100,#ffc400,#ffc400,#ffc400,#ffc400,#ffc400,#ffc400,#ffc400,#ffc400,#ffc400,#ffc400,#ffc400,#ffc800,#ffc800,#ffcc00,#ffd000,#ffd300,#ffd700,#ffde00,#ffe600,#feed00,#f4f802,#e7ff0f,#d7ff1f,#c1ff36,#8aff6d,#0cf4eb,#43ffb4,#9dff5a,#c4ff33,#d7ff1f,#e4ff13,#ebff0c,#f1fc06,#f8f500,#fbf100,#feed00,#feed00,#feed00,#feed00,#feed00,#fbf100,#f8f500,#f4f802,#eeff09,#ebff0c 99.48%)"></div><div style="top:372.16px;height:4.52px;background:linear-gradient(90deg,#dbff1c 0.52%,#e1ff16,#e7ff0f,#ebff0c,#eeff09,#f1fc06,#f4f802,#f4f802,#f4f802,#f4f802,#f1fc06,#eeff09,#ebff0c,#e4ff13,#dbff1c,#ceff29,#beff39,#97ff60,#39ffbe,#02e9f4,#80ff77,#baff3c,#d1ff26,#e1ff16,#eeff09,#f8f500,#feed00,#ffe600,#ffde00,#ffdb00,#ffd300,#ffd300,#ffd000,#ffcc00,#ffcc00,#ffcc00,#ffc800,#ffc800,#ffc800,#ffc800,#ffc800,#ffc800,#ffc800,#ffc800,#ffc800,#ffc800,#ffc800,#ffc800,#ffc800,#ffc800,#ffc800,#ffc800,#ffc800,#ffc800,#ffc800,#ffc800,#ffc800,#ffc800,#ffc800,#ffc800,#ffc800,#ffcc00,#ffcc00,#ffcc00,#ffd000,#ffd300,#ffd300,#ffdb00,#ffde00,#ffe600,#feed00,#f8f500,#eeff09,#e1ff16,#d1ff26,#baff3c,#80ff77,#02e9f4,#39ffbe,#97ff60,#beff39,#ceff29,#dbff1c,#e4ff13,#ebff0c,#eeff09,#f1fc06,#f4f802,#f4f802,#f4f802,#f4f802,#f1fc06,#eeff09,#ebff0c,#e7ff0f,#e1ff16,#dbff1c 99.48%)"></div><div style="top:376.08px;height:4.52px;background:linear-gradient(90deg,#caff2c 0.52%,#d1ff26,#d7ff1f,#deff19,#e1ff16,#e4ff13,#e7ff0f,#e7ff0f,#e7ff0f,#e7ff0f,#e7ff0f,#e4ff13,#deff19,#d7ff1f,#d1ff26,#c4ff33,#b4ff43,#8dff6a,#33ffc4,#00e0fb,#7aff7d,#b1ff46,#caff2c,#d7ff1f,#e4ff13,#eeff09,#f8f500,#feed00,#ffe600,#ffe200,#ffde00,#ffdb00,#ffd700,#ffd300,#ffd300,#ffd300,#ffd000,#ffd000,#ffd000,#ffd000,#ffd000,#ffd000,#ffd000,#ffd000,#ffd000,#ffd000,#ffcc00,#ffcc00,#ffcc00,#ffcc00,#ffcc00,#ffd000,#ffd000,#ffd000,#ffd000,#ffd000,#ffd000,#ffd000,#ffd000,#ffd000,#ffd000,#ffd300,#ffd300,#ffd300,#ffd700,#ffdb00,#ffde00,#ffe200,#ffe600,#feed00,#f8f500,#eeff09,#e4ff13,#d7ff1f,#caff2c,#b1ff46,#7aff7d,#00e0fb,#33ffc4,#8dff6a,#b4ff43,#c4ff33,#d1ff26,#d7ff1f,#deff19,#e4ff13,#e7ff0f,#e7ff0f,#e7ff0f,#e7ff0f,#e7ff0f,#e4ff13,#e1ff16,#deff19,#d7ff1f,#d1ff26,#caff2c 99.48%)"></div></div>
<canvas id="g5" class="a" style="left:1489.1px;top:715.8000000000001px;width:379.59999999999997px;height:380.8px;outline:1.1px solid #000"></canvas>
<div class="t" style="top:692.54px;font-size:18.5px;line-height:18.5px;left:1678.9px;transform:translateX(-50%);">Model2D for M2 GenSAS mag_cylinder.sld  #2 2D</div>
<div class="a" style="left:1488.95px;top:1096.7px;width:1.1px;height:5px;background:#000;"></div>
<div class="t" style="top:1103.34px;font-size:14.6px;line-height:14.6px;left:1489.5px;transform:translateX(-50%);"><span style="display:inline-block;width:0.75em;text-align:center;transform:scaleX(1.3)">−</span>0.3</div>
<div class="a" style="left:1484.0px;top:1095.65px;width:5px;height:1.1px;background:#000;"></div>
<div class="t" style="top:1089.87px;font-size:14.6px;line-height:14.6px;right:795.3px;"><span style="display:inline-block;width:0.75em;text-align:center;transform:scaleX(1.3)">−</span>0.3</div>
<div class="a" style="left:1552.0833333333333px;top:1096.7px;width:1.1px;height:5px;background:#000;"></div>
<div class="t" style="top:1103.34px;font-size:14.6px;line-height:14.6px;left:1552.6333333333332px;transform:translateX(-50%);"><span style="display:inline-block;width:0.75em;text-align:center;transform:scaleX(1.3)">−</span>0.2</div>
<div class="a" style="left:1484.0px;top:1032.3166666666668px;width:5px;height:1.1px;background:#000;"></div>
<div class="t" style="top:1026.53px;font-size:14.6px;line-height:14.6px;right:795.3px;"><span style="display:inline-block;width:0.75em;text-align:center;transform:scaleX(1.3)">−</span>0.2</div>
<div class="a" style="left:1615.2166666666667px;top:1096.7px;width:1.1px;height:5px;background:#000;"></div>
<div class="t" style="top:1103.34px;font-size:14.6px;line-height:14.6px;left:1615.7666666666667px;transform:translateX(-50%);"><span style="display:inline-block;width:0.75em;text-align:center;transform:scaleX(1.3)">−</span>0.1</div>
<div class="a" style="left:1484.0px;top:968.9833333333335px;width:5px;height:1.1px;background:#000;"></div>
<div class="t" style="top:963.20px;font-size:14.6px;line-height:14.6px;right:795.3px;"><span style="display:inline-block;width:0.75em;text-align:center;transform:scaleX(1.3)">−</span>0.1</div>
<div class="a" style="left:1678.3500000000001px;top:1096.7px;width:1.1px;height:5px;background:#000;"></div>
<div class="t" style="top:1103.34px;font-size:14.6px;line-height:14.6px;left:1678.9px;transform:translateX(-50%);">0.0</div>
<div class="a" style="left:1484.0px;top:905.6500000000001px;width:5px;height:1.1px;background:#000;"></div>
<div class="t" style="top:899.87px;font-size:14.6px;line-height:14.6px;right:795.3px;">0.0</div>
<div class="a" style="left:1741.4833333333333px;top:1096.7px;width:1.1px;height:5px;background:#000;"></div>
<div class="t" style="top:1103.34px;font-size:14.6px;line-height:14.6px;left:1742.0333333333333px;transform:translateX(-50%);">0.1</div>
<div class="a" style="left:1484.0px;top:842.3166666666667px;width:5px;height:1.1px;background:#000;"></div>
<div class="t" style="top:836.53px;font-size:14.6px;line-height:14.6px;right:795.3px;">0.1</div>
<div class="a" style="left:1804.6166666666666px;top:1096.7px;width:1.1px;height:5px;background:#000;"></div>
<div class="t" style="top:1103.34px;font-size:14.6px;line-height:14.6px;left:1805.1666666666665px;transform:translateX(-50%);">0.2</div>
<div class="a" style="left:1484.0px;top:778.9833333333333px;width:5px;height:1.1px;background:#000;"></div>
<div class="t" style="top:773.20px;font-size:14.6px;line-height:14.6px;right:795.3px;">0.2</div>
<div class="a" style="left:1867.75px;top:1096.7px;width:1.1px;height:5px;background:#000;"></div>
<div class="t" style="top:1103.34px;font-size:14.6px;line-height:14.6px;left:1868.3px;transform:translateX(-50%);">0.3</div>
<div class="a" style="left:1484.0px;top:715.6500000000001px;width:5px;height:1.1px;background:#000;"></div>
<div class="t" style="top:709.87px;font-size:14.6px;line-height:14.6px;right:795.3px;">0.3</div>
<div class="t" style="top:1127.44px;font-size:14.6px;line-height:14.6px;left:1678.9px;transform:translateX(-50%);">Q<sub class="ms">x</sub>(A<sup class="ms">−1</sup>)</div>
<div class="t" style="left:1427.0px;top:906.8000000000001px;font-size:14.6px;line-height:14.6px;transform:translate(-50%,-50%) rotate(-90deg);">Q<sub class="ms">y</sub>(A<sup class="ms">−1</sup>)</div>
<div class="a" style="left:1901.8px;top:728.8000000000001px;width:14.199999999999864px;height:337.09999999999997px;background:linear-gradient(to top,rgb(0,0,128) 0.0%,rgb(0,0,255) 11.0%,rgb(0,0,255) 12.5%,rgb(0,219,255) 34.0%,rgb(0,229,247) 35.0%,rgb(21,255,226) 37.5%,rgb(239,255,8) 64.0%,rgb(247,246,0) 65.0%,rgb(255,236,0) 66.0%,rgb(255,19,0) 89.0%,rgb(232,0,0) 91.0%,rgb(128,0,0) 100.0%);outline:1.1px solid #000"></div>
<div class="a" style="left:1916.1px;top:747.7439560439561px;width:5px;height:1.1px;background:#000;"></div>
<div class="t" style="top:741.66px;font-size:14.6px;line-height:14.6px;left:1926.1px;">0</div>
<div class="a" style="left:1916.1px;top:803.7379620379621px;width:5px;height:1.1px;background:#000;"></div>
<div class="t" style="top:797.66px;font-size:14.6px;line-height:14.6px;left:1926.1px;"><span style="display:inline-block;width:0.75em;text-align:center;transform:scaleX(1.3)">−</span>2</div>
<div class="a" style="left:1916.1px;top:859.7319680319681px;width:5px;height:1.1px;background:#000;"></div>
<div class="t" style="top:853.65px;font-size:14.6px;line-height:14.6px;left:1926.1px;"><span style="display:inline-block;width:0.75em;text-align:center;transform:scaleX(1.3)">−</span>4</div>
<div class="a" style="left:1916.1px;top:915.7259740259741px;width:5px;height:1.1px;background:#000;"></div>
<div class="t" style="top:909.64px;font-size:14.6px;line-height:14.6px;left:1926.1px;"><span style="display:inline-block;width:0.75em;text-align:center;transform:scaleX(1.3)">−</span>6</div>
<div class="a" style="left:1916.1px;top:971.7199800199801px;width:5px;height:1.1px;background:#000;"></div>
<div class="t" style="top:965.64px;font-size:14.6px;line-height:14.6px;left:1926.1px;"><span style="display:inline-block;width:0.75em;text-align:center;transform:scaleX(1.3)">−</span>8</div>
<div class="a" style="left:1916.1px;top:1027.713986013986px;width:5px;height:1.1px;background:#000;"></div>
<div class="t" style="top:1021.63px;font-size:14.6px;line-height:14.6px;left:1926.1px;"><span style="display:inline-block;width:0.75em;text-align:center;transform:scaleX(1.3)">−</span>10</div>
<div class="t" style="left:1968.8px;top:897px;font-size:14.6px;line-height:14.6px;font-style:italic;transform:translate(-50%,-50%) rotate(-90deg);">log<sub>10</sub></div>
<div class="a" style="left:536px;top:863px;width:743px;height:552px;background:#d7e4f2;box-shadow:inset 0 0 0 1px #3a3a3a;border-radius:6px 6px 0 0;"></div>
<div class="a" style="left:537px;top:864px;width:741px;height:38px;background:linear-gradient(#bfcddd 0%,#cbd8e6 50%,#d7e4f2 100%);border-radius:5px 5px 0 0;"></div>
<div class="a" style="left:550px;top:878px;width:18px;height:18px;border-radius:50%;background:radial-gradient(circle farthest-corner at 62% 64%, #ffffff 0%, #f3eff3 10%, #b4b0b8 32%, #75717e 55%, #4d4a58 80%, #474453 100%);"></div>
<div class="t" style="top:880.41px;font-size:17px;line-height:17px;left:576px;">Graph6</div>
<div class="a" style="left:1121px;top:872.4px;width:47px;height:25.800000000000068px;background:linear-gradient(#cfdae6 0%,#c9d5e2 45%,#c2cfde 50%,#c6d3e1 100%);border-radius:3px;box-shadow:inset 0 0 0 1px #8e9db0, inset 0 0 0 2px rgba(255,255,255,0.35);"></div>
<div class="a" style="left:1138.0px;top:885.8px;width:13px;height:4px;background:linear-gradient(#fff,#e6e6e6);box-shadow:0 0 0 1px #5a6a80;border-radius:1px;"></div>
<div class="a" style="left:1171px;top:872.4px;width:47px;height:25.800000000000068px;background:linear-gradient(#cfdae6 0%,#c9d5e2 45%,#c2cfde 50%,#c6d3e1 100%);border-radius:3px;box-shadow:inset 0 0 0 1px #8e9db0, inset 0 0 0 2px rgba(255,255,255,0.35);"></div>
<div class="a" style="left:1188.0px;top:879.3px;width:13px;height:12px;box-shadow:inset 0 0 0 3px #f4f4f4,0 0 0 1px #5a6a80,inset 0 0 0 4px #5a6a80;border-radius:1px;"></div>
<div class="a" style="left:1221px;top:872.4px;width:48px;height:25.800000000000068px;background:linear-gradient(#cfdae6 0%,#c9d5e2 45%,#c2cfde 50%,#c6d3e1 100%);border-radius:3px;box-shadow:inset 0 0 0 1px #8e9db0, inset 0 0 0 2px rgba(255,255,255,0.35);"></div>
<svg class="a" style="left:1236.0px;top:877.3px" width="18" height="16"><path d="M3 2 L15 14 M15 2 L3 14" stroke="#4a5668" stroke-width="5.5" stroke-linecap="square"/><path d="M3.5 2.5 L14.5 13.5 M14.5 2.5 L3.5 13.5" stroke="#f7f7f7" stroke-width="3.2" stroke-linecap="square"/></svg>
<div class="a" style="left:544px;top:902px;width:727px;height:506px;background:#f0f0f0;"></div>
<div class="a" style="left:557px;top:915px;width:701px;height:480px;background:#fff;"></div>
<div class="a hm" style="left:718.5px;top:950.4px;width:379.0px;height:379.6px"><div style="top:0.00px;height:4.51px;background:linear-gradient(90deg,#ff9c00 0.52%,#ff9c00,#ff9c00,#ff9c00,#ff9c00,#ff9c00,#ff9c00,#ff9c00,#ff9c00,#ff9c00,#ff9c00,#ff9c00,#ff9c00,#ff9c00,#ff9c00,#ff9c00,#ff9c00,#ff9c00,#ff9c00,#ff9c00,#ff9c00,#ff9800,#ff9800,#ff9800,#ff9800,#ff9800,#ff9400,#ff9400,#ff9400,#ff9100,#ff9100,#ff8d00,#ff8d00,#ff8900,#ff8900,#ff8900,#ff8600,#ff8600,#ff8600,#ff8600,#ff8600,#ff8600,#ff8600,#ff8600,#ff8600,#ff8900,#ff8900,#ff8d00,#ff8d00,#ff8d00,#ff8900,#ff8900,#ff8600,#ff8600,#ff8600,#ff8600,#ff8600,#ff8600,#ff8600,#ff8600,#ff8600,#ff8900,#ff8900,#ff8900,#ff8d00,#ff8d00,#ff9100,#ff9100,#ff9400,#ff9400,#ff9400,#ff9800,#ff9800,#ff9800,#ff9800,#ff9800,#ff9c00,#ff9c00,#ff9c00,#ff9c00,#ff9c00,#ff9c00,#ff9c00,#ff9c00,#ff9c00,#ff9c00,#ff9c00,#ff9c00,#ff9c00,#ff9c00,#ff9c00,#ff9c00,#ff9c00,#ff9c00,#ff9c00,#ff9c00,#ff9c00 99.48%)"></div><div style="top:3.91px;height:4.51px;background:linear-gradient(90deg,#ff9c00 0.52%,#ff9c00,#ff9c00,#ff9c00,#ff9c00,#ff9c00,#ff9c00,#ff9c00,#ff9c00,#ff9c00,#ff9c00,#ff9c00,#ff9c00,#ff9c00,#ff9c00,#ff9c00,#ff9c00,#ff9c00,#ff9c00,#ff9c00,#ff9800,#ff9800,#ff9800,#ff9800,#ff9800,#ff9400,#ff9400,#ff9400,#ff9100,#ff9100,#ff8d00,#ff8d00,#ff8900,#ff8900,#ff8600,#ff8200,#ff8200,#ff8200,#ff7e00,#ff7e00,#ff7e00,#ff7e00,#ff7e00,#ff8200,#ff8200,#ff8600,#ff8600,#ff8900,#ff8900,#ff8900,#ff8600,#ff8600,#ff8200,#ff8200,#ff7e00,#ff7e00,#ff7e00,#ff7e00,#ff7e00,#ff8200,#ff8200,#ff8200,#ff8600,#ff8900,#ff8900,#ff8d00,#ff8d00,#ff9100,#ff9100,#ff9400,#ff9400,#ff9400,#ff9800,#ff9800,#ff9800,#ff9800,#ff9800,#ff9c00,#ff9c00,#ff9c00,#ff9c00,#ff9c00,#ff9c00,#ff9c00,#ff9c00,#ff9c00,#ff9c00,#ff9c00,#ff9c00,#ff9c00,#ff9c00,#ff9c00,#ff9c00,#ff9c00,#ff9c00,#ff9c00,#ff9c00 99.48%)"></div><div style="top:7.83px;height:4.51px;background:linear-gradient(90deg,#ff9c00 0.52%,#ff9f00,#ff9f00,#ff9f00,#ff9f00,#ff9f00,#ff9f00,#ff9f00,#ff9c00,#ff9c00,#ff9c00,#ff9c00,#ff9c00,#ff9c00,#ff9c00,#ff9c00,#ff9c00,#ff9c00,#ff9c00,#ff9c00,#ff9800,#ff9800,#ff9800,#ff9800,#ff9400,#ff9400,#ff9400,#ff9100,#ff9100,#ff8d00,#ff8d00,#ff8900,#ff8600,#ff8600,#ff8200,#ff7e00,#ff7e00,#ff7a00,#ff7a00,#ff7a00,#ff7a00,#ff7a00,#ff7a00,#ff7a00,#ff7e00,#ff7e00,#ff8200,#ff8600,#ff8600,#ff8600,#ff8200,#ff7e00,#ff7e00,#ff7a00,#ff7a00,#ff7a00,#ff7a00,#ff7a00,#ff7a00,#ff7a00,#ff7e00,#ff7e00,#ff8200,#ff8600,#ff8600,#ff8900,#ff8d00,#ff8d00,#ff9100,#ff9100,#ff9400,#ff9400,#ff9400,#ff9800,#ff9800,#ff9800,#ff9800,#ff9c00,#ff9c00,#ff9c00,#ff9c00,#ff9c00,#ff9c00,#ff9c00,#ff9c00,#ff9c00,#ff9c00,#ff9c00,#ff9c00,#ff9f00,#ff9f00,#ff9f00,#ff9f00,#ff9f00,#ff9f00,#ff9f00,#ff9c00 99.48%)"></div><div style="top:11.74px;height:4.51px;background:linear-gradient(90deg,#ff9f00 0.52%,#ff9f00,#ff9f00,#ff9f00,#ff9f00,#ff9f00,#ff9f00,#ff9f00,#ff9f00,#ff9f00,#ff9f00,#ff9c00,#ff9c00,#ff9c00,#ff9c00,#ff9c00,#ff9c00,#ff9c00,#ff9c00,#ff9c00,#ff9800,#ff9800,#ff9800,#ff9800,#ff9400,#ff9400,#ff9100,#ff9100,#ff8d00,#ff8d00,#ff8900,#ff8600,#ff8200,#ff8200,#ff7e00,#ff7a00,#ff7a00,#ff7700,#ff7700,#ff7700,#ff7700,#ff7700,#ff7700,#ff7700,#ff7a00,#ff7a00,#ff7e00,#ff8200,#ff8600,#ff8200,#ff7e00,#ff7a00,#ff7a00,#ff7700,#ff7700,#ff7700,#ff7700,#ff7700,#ff7700,#ff7700,#ff7a00,#ff7a00,#ff7e00,#ff8200,#ff8200,#ff8600,#ff8900,#ff8d00,#ff8d00,#ff9100,#ff9100,#ff9400,#ff9400,#ff9800,#ff9800,#ff9800,#ff9800,#ff9c00,#ff9c00,#ff9c00,#ff9c00,#ff9c00,#ff9c00,#ff9c00,#ff9c00,#ff9c00,#ff9f00,#ff9f00,#ff9f00,#ff9f00,#ff9f00,#ff9f00,#ff9f00,#ff9f00,#ff9f00,#ff9f00,#ff9f00 99.48%)"></div><div style="top:15.65px;height:4.51px;background:linear-gradient(90deg,#ff9f00 0.52%,#ff9f00,#ff9f00,#ff9f00,#ff9f00,#ff9f00,#ff9f00,#ff9f00,#ff9f00,#ff9f00,#ff9f00,#ff9f00,#ff9f00,#ff9c00,#ff9c00,#ff9c00,#ff9c00,#ff9c00,#ff9c00,#ff9800,#ff9800,#ff9800,#ff9800,#ff9800,#ff9400,#ff9400,#ff9100,#ff9100,#ff8d00,#ff8900,#ff8600,#ff8600,#ff8200,#ff7e00,#ff7a00,#ff7700,#ff7700,#ff7300,#ff7300,#ff7300,#ff7300,#ff7300,#ff7300,#ff7300,#ff7700,#ff7a00,#ff7a00,#ff7e00,#ff8200,#ff7e00,#ff7a00,#ff7a00,#ff7700,#ff7300,#ff7300,#ff7300,#ff7300,#ff7300,#ff7300,#ff7300,#ff7700,#ff7700,#ff7a00,#ff7e00,#ff8200,#ff8600,#ff8600,#ff8900,#ff8d00,#ff9100,#ff9100,#ff9400,#ff9400,#ff9800,#ff9800,#ff9800,#ff9800,#ff9800,#ff9c00,#ff9c00,#ff9c00,#ff9c00,#ff9c00,#ff9c00,#ff9f00,#ff9f00,#ff9f00,#ff9f00,#ff9f00,#ff9f00,#ff9f00,#ff9f00,#ff9f00,#ff9f00,#ff9f00,#ff9f00,#ff9f00 99.48%)"></div><div style="top:19.57px;height:4.51px;background:linear-gradient(90deg,#ff9f00 0.52%,#ffa300,#ffa300,#ffa300,#ffa300,#ffa300,#ffa300,#ffa300,#ff9f00,#ff9f00,#ff9f00,#ff9f00,#ff9f00,#ff9f00,#ff9c00,#ff9c00,#ff9c00,#ff9c00,#ff9c00,#ff9c00,#ff9800,#ff9800,#ff9800,#ff9400,#ff9400,#ff9400,#ff9100,#ff8d00,#ff8d00,#ff8900,#ff8600,#ff8200,#ff7e00,#ff7a00,#ff7a00,#ff7700,#ff7300,#ff6f00,#ff6f00,#ff6f00,#ff6f00,#ff6f00,#ff6f00,#ff7300,#ff7300,#ff7700,#ff7a00,#ff7e00,#ff7e00,#ff7e00,#ff7a00,#ff7700,#ff7300,#ff7300,#ff6f00,#ff6f00,#ff6f00,#ff6f00,#ff6f00,#ff6f00,#ff7300,#ff7700,#ff7a00,#ff7a00,#ff7e00,#ff8200,#ff8600,#ff8900,#ff8d00,#ff8d00,#ff9100,#ff9400,#ff9400,#ff9400,#ff9800,#ff9800,#ff9800,#ff9c00,#ff9c00,#ff9c00,#ff9c00,#ff9c00,#ff9c00,#ff9f00,#ff9f00,#ff9f00,#ff9f00,#ff9f00,#ff9f00,#ffa300,#ffa300,#ffa300,#ffa300,#ffa300,#ffa300,#ffa300,#ff9f00 99.48%)"></div><div style="top:23.48px;height:4.51px;background:linear-gradient(90deg,#ffa300 0.52%,#ffa300,#ffa300,#ffa300,#ffa300,#ffa300,#ffa300,#ffa300,#ffa300,#ffa300,#ff9f00,#ff9f00,#ff9f00,#ff9f00,#ff9f00,#ff9c00,#ff9c00,#ff9c00,#ff9c00,#ff9c00,#ff9800,#ff9800,#ff9800,#ff9400,#ff9400,#ff9100,#ff9100,#ff8d00,#ff8d00,#ff8900,#ff8600,#ff8200,#ff7e00,#ff7a00,#ff7700,#ff7300,#ff7300,#ff6f00,#ff6f00,#ff6c00,#ff6c00,#ff6c00,#ff6f00,#ff6f00,#ff7300,#ff7700,#ff7700,#ff7a00,#ff7e00,#ff7a00,#ff7700,#ff7700,#ff7300,#ff6f00,#ff6f00,#ff6c00,#ff6c00,#ff6c00,#ff6f00,#ff6f00,#ff7300,#ff7300,#ff7700,#ff7a00,#ff7e00,#ff8200,#ff8600,#ff8900,#ff8d00,#ff8d00,#ff9100,#ff9100,#ff9400,#ff9400,#ff9800,#ff9800,#ff9800,#ff9c00,#ff9c00,#ff9c00,#ff9c00,#ff9c00,#ff9f00,#ff9f00,#ff9f00,#ff9f00,#ff9f00,#ffa300,#ffa300,#ffa300,#ffa300,#ffa300,#ffa300,#ffa300,#ffa300,#ffa300,#ffa300 99.48%)"></div><div style="top:27.39px;height:4.51px;background:linear-gradient(90deg,#ffa300 0.52%,#ffa700,#ffa700,#ffa700,#ffa700,#ffa700,#ffa700,#ffa700,#ffa300,#ffa300,#ffa300,#ffa300,#ff9f00,#ff9f00,#ff9f00,#ff9c00,#ff9c00,#ff9c00,#ff9c00,#ff9c00,#ff9800,#ff9800,#ff9800,#ff9400,#ff9400,#ff9100,#ff9100,#ff8d00,#ff8900,#ff8900,#ff8600,#ff8200,#ff7e00,#ff7a00,#ff7700,#ff7300,#ff7300,#ff6f00,#ff6f00,#ff6c00,#ff6c00,#ff6c00,#ff6f00,#ff6f00,#ff7300,#ff7700,#ff7700,#ff7a00,#ff7e00,#ff7a00,#ff7700,#ff7700,#ff7300,#ff6f00,#ff6f00,#ff6c00,#ff6c00,#ff6c00,#ff6f00,#ff6f00,#ff7300,#ff7300,#ff7700,#ff7a00,#ff7e00,#ff8200,#ff8600,#ff8900,#ff8900,#ff8d00,#ff9100,#ff9100,#ff9400,#ff9400,#ff9800,#ff9800,#ff9800,#ff9c00,#ff9c00,#ff9c00,#ff9c00,#ff9c00,#ff9f00,#ff9f00,#ff9f00,#ffa300,#ffa300,#ffa300,#ffa300,#ffa700,#ffa700,#ffa700,#ffa700,#ffa700,#ffa700,#ffa700,#ffa300 99.48%)"></div><div style="top:31.31px;height:4.51px;background:linear-gradient(90deg,#ffa700 0.52%,#ffa700,#ffa700,#ffab00,#ffab00,#ffab00,#ffa700,#ffa700,#ffa700,#ffa700,#ffa300,#ffa300,#ffa300,#ff9f00,#ff9f00,#ff9f00,#ff9c00,#ff9c00,#ff9c00,#ff9c00,#ff9800,#ff9800,#ff9800,#ff9400,#ff9400,#ff9400,#ff9100,#ff8d00,#ff8d00,#ff8900,#ff8600,#ff8200,#ff7e00,#ff7a00,#ff7700,#ff7700,#ff7300,#ff6f00,#ff6f00,#ff6f00,#ff6f00,#ff6f00,#ff6f00,#ff7300,#ff7300,#ff7700,#ff7a00,#ff7e00,#ff7e00,#ff7e00,#ff7a00,#ff7700,#ff7300,#ff7300,#ff6f00,#ff6f00,#ff6f00,#ff6f00,#ff6f00,#ff6f00,#ff7300,#ff7700,#ff7700,#ff7a00,#ff7e00,#ff8200,#ff8600,#ff8900,#ff8d00,#ff8d00,#ff9100,#ff9400,#ff9400,#ff9400,#ff9800,#ff9800,#ff9800,#ff9c00,#ff9c00,#ff9c00,#ff9c00,#ff9f00,#ff9f00,#ff9f00,#ffa300,#ffa300,#ffa300,#ffa700,#ffa700,#ffa700,#ffa700,#ffab00,#ffab00,#ffab00,#ffa700,#ffa700,#ffa700 99.48%)"></div><div style="top:35.22px;height:4.51px;background:linear-gradient(90deg,#ffa700 0.52%,#ffab00,#ffab00,#ffab00,#ffab00,#ffab00,#ffab00,#ffab00,#ffab00,#ffa700,#ffa700,#ffa300,#ffa300,#ffa300,#ff9f00,#ff9f00,#ff9f00,#ff9c00,#ff9c00,#ff9c00,#ff9800,#ff9800,#ff9800,#ff9800,#ff9400,#ff9400,#ff9100,#ff9100,#ff8d00,#ff8900,#ff8600,#ff8200,#ff8200,#ff7e00,#ff7a00,#ff7700,#ff7700,#ff7300,#ff7300,#ff7300,#ff7300,#ff7300,#ff7300,#ff7300,#ff7700,#ff7a00,#ff7a00,#ff7e00,#ff8200,#ff7e00,#ff7a00,#ff7a00,#ff7700,#ff7300,#ff7300,#ff7300,#ff7300,#ff7300,#ff7300,#ff7300,#ff7700,#ff7700,#ff7a00,#ff7e00,#ff8200,#ff8200,#ff8600,#ff8900,#ff8d00,#ff9100,#ff9100,#ff9400,#ff9400,#ff9800,#ff9800,#ff9800,#ff9800,#ff9c00,#ff9c00,#ff9c00,#ff9f00,#ff9f00,#ff9f00,#ffa300,#ffa300,#ffa300,#ffa700,#ffa700,#ffab00,#ffab00,#ffab00,#ffab00,#ffab00,#ffab00,#ffab00,#ffab00,#ffa700 99.48%)"></div><div style="top:39.13px;height:4.51px;background:linear-gradient(90deg,#ffab00 0.52%,#ffab00,#ffae00,#ffae00,#ffae00,#ffae00,#ffae00,#ffae00,#ffab00,#ffab00,#ffa700,#ffa700,#ffa300,#ffa300,#ff9f00,#ff9f00,#ff9f00,#ff9c00,#ff9c00,#ff9c00,#ff9c00,#ff9800,#ff9800,#ff9800,#ff9400,#ff9400,#ff9100,#ff9100,#ff8d00,#ff8d00,#ff8900,#ff8600,#ff8200,#ff8200,#ff7e00,#ff7a00,#ff7a00,#ff7700,#ff7700,#ff7700,#ff7700,#ff7700,#ff7700,#ff7a00,#ff7a00,#ff7e00,#ff7e00,#ff8200,#ff8600,#ff8200,#ff7e00,#ff7e00,#ff7a00,#ff7a00,#ff7700,#ff7700,#ff7700,#ff7700,#ff7700,#ff7700,#ff7a00,#ff7a00,#ff7e00,#ff8200,#ff8200,#ff8600,#ff8900,#ff8d00,#ff8d00,#ff9100,#ff9100,#ff9400,#ff9400,#ff9800,#ff9800,#ff9800,#ff9c00,#ff9c00,#ff9c00,#ff9c00,#ff9f00,#ff9f00,#ff9f00,#ffa300,#ffa300,#ffa700,#ffa700,#ffab00,#ffab00,#ffae00,#ffae00,#ffae00,#ffae00,#ffae00,#ffae00,#ffab00,#ffab00 99.48%)"></div><div style="top:43.05px;height:4.51px;background:linear-gradient(90deg,#ffae00 0.52%,#ffae00,#ffae00,#ffb200,#ffb200,#ffb200,#ffb200,#ffae00,#ffae00,#ffab00,#ffab00,#ffa700,#ffa700,#ffa300,#ffa300,#ff9f00,#ff9f00,#ff9c00,#ff9c00,#ff9c00,#ff9c00,#ff9800,#ff9800,#ff9800,#ff9400,#ff9400,#ff9400,#ff9100,#ff9100,#ff8d00,#ff8900,#ff8900,#ff8600,#ff8600,#ff8200,#ff7e00,#ff7e00,#ff7e00,#ff7e00,#ff7a00,#ff7a00,#ff7e00,#ff7e00,#ff7e00,#ff8200,#ff8200,#ff8600,#ff8600,#ff8900,#ff8600,#ff8600,#ff8200,#ff8200,#ff7e00,#ff7e00,#ff7e00,#ff7a00,#ff7a00,#ff7e00,#ff7e00,#ff7e00,#ff7e00,#ff8200,#ff8600,#ff8600,#ff8900,#ff8900,#ff8d00,#ff9100,#ff9100,#ff9400,#ff9400,#ff9400,#ff9800,#ff9800,#ff9800,#ff9c00,#ff9c00,#ff9c00,#ff9c00,#ff9f00,#ff9f00,#ffa300,#ffa300,#ffa700,#ffa700,#ffab00,#ffab00,#ffae00,#ffae00,#ffb200,#ffb200,#ffb200,#ffb200,#ffae00,#ffae00,#ffae00 99.48%)"></div><div style="top:46.96px;height:4.51px;background:linear-gradient(90deg,#ffae00 0.52%,#ffae00,#ffb200,#ffb200,#ffb200,#ffb200,#ffb200,#ffb200,#ffae00,#ffae00,#ffab00,#ffab00,#ffa700,#ffa300,#ffa300,#ff9f00,#ff9f00,#ff9f00,#ff9c00,#ff9c00,#ff9c00,#ff9800,#ff9800,#ff9800,#ff9800,#ff9400,#ff9400,#ff9400,#ff9100,#ff9100,#ff8d00,#ff8d00,#ff8900,#ff8900,#ff8600,#ff8600,#ff8600,#ff8200,#ff8200,#ff8200,#ff8200,#ff8200,#ff8600,#ff8600,#ff8600,#ff8900,#ff8900,#ff8900,#ff8d00,#ff8900,#ff8900,#ff8900,#ff8600,#ff8600,#ff8600,#ff8200,#ff8200,#ff8200,#ff8200,#ff8200,#ff8600,#ff8600,#ff8600,#ff8900,#ff8900,#ff8d00,#ff8d00,#ff9100,#ff9100,#ff9400,#ff9400,#ff9400,#ff9800,#ff9800,#ff9800,#ff9800,#ff9c00,#ff9c00,#ff9c00,#ff9f00,#ff9f00,#ff9f00,#ffa300,#ffa300,#ffa700,#ffab00,#ffab00,#ffae00,#ffae00,#ffb200,#ffb200,#ffb200,#ffb200,#ffb200,#ffb200,#ffae00,#ffae00 99.48%)"></div><div style="top:50.87px;height:4.51px;background:linear-gradient(90deg,#ffae00 0.52%,#ffb200,#ffb200,#ffb600,#ffb600,#ffb600,#ffb600,#ffb200,#ffb200,#ffae00,#ffae00,#ffab00,#ffa700,#ffa700,#ffa300,#ffa300,#ff9f00,#ff9f00,#ff9c00,#ff9c00,#ff9c00,#ff9c00,#ff9800,#ff9800,#ff9800,#ff9800,#ff9400,#ff9400,#ff9400,#ff9100,#ff9100,#ff8d00,#ff8d00,#ff8d00,#ff8900,#ff8900,#ff8900,#ff8900,#ff8900,#ff8900,#ff8900,#ff8900,#ff8d00,#ff8d00,#ff8d00,#ff8d00,#ff8d00,#ff9100,#ff9100,#ff9100,#ff8d00,#ff8d00,#ff8d00,#ff8d00,#ff8d00,#ff8900,#ff8900,#ff8900,#ff8900,#ff8900,#ff8900,#ff8900,#ff8900,#ff8d00,#ff8d00,#ff8d00,#ff9100,#ff9100,#ff9400,#ff9400,#ff9400,#ff9800,#ff9800,#ff9800,#ff9800,#ff9c00,#ff9c00,#ff9c00,#ff9c00,#ff9f00,#ff9f00,#ffa300,#ffa300,#ffa700,#ffa700,#ffab00,#ffae00,#ffae00,#ffb200,#ffb200,#ffb600,#ffb600,#ffb600,#ffb600,#ffb200,#ffb200,#ffae00 99.48%)"></div><div style="top:54.79px;height:4.51px;background:linear-gradient(90deg,#ffb200 0.52%,#ffb200,#ffb600,#ffb600,#ffb600,#ffb600,#ffb600,#ffb600,#ffb200,#ffae00,#ffae00,#ffab00,#ffa700,#ffa700,#ffa300,#ffa300,#ff9f00,#ff9f00,#ff9c00,#ff9c00,#ff9c00,#ff9c00,#ff9800,#ff9800,#ff9800,#ff9800,#ff9800,#ff9400,#ff9400,#ff9400,#ff9400,#ff9100,#ff9100,#ff9100,#ff9100,#ff9100,#ff9100,#ff9100,#ff9100,#ff9100,#ff9100,#ff9100,#ff9400,#ff9400,#ff9400,#ff9400,#ff9400,#ff9400,#ff9400,#ff9400,#ff9400,#ff9400,#ff9400,#ff9400,#ff9400,#ff9100,#ff9100,#ff9100,#ff9100,#ff9100,#ff9100,#ff9100,#ff9100,#ff9100,#ff9100,#ff9100,#ff9400,#ff9400,#ff9400,#ff9400,#ff9800,#ff9800,#ff9800,#ff9800,#ff9800,#ff9c00,#ff9c00,#ff9c00,#ff9c00,#ff9f00,#ff9f00,#ffa300,#ffa300,#ffa700,#ffa700,#ffab00,#ffae00,#ffae00,#ffb200,#ffb600,#ffb600,#ffb600,#ffb600,#ffb600,#ffb600,#ffb200,#ffb200 99.48%)"></div><div style="top:58.70px;height:4.51px;background:linear-gradient(90deg,#ffb200 0.52%,#ffb200,#ffb600,#ffb600,#ffb600,#ffb600,#ffb600,#ffb600,#ffb200,#ffb200,#ffae00,#ffab00,#ffab00,#ffa700,#ffa300,#ffa300,#ff9f00,#ff9f00,#ff9c00,#ff9c00,#ff9c00,#ff9c00,#ff9c00,#ff9800,#ff9800,#ff9800,#ff9800,#ff9800,#ff9800,#ff9400,#ff9400,#ff9400,#ff9400,#ff9400,#ff9400,#ff9400,#ff9400,#ff9800,#ff9800,#ff9800,#ff9800,#ff9800,#ff9c00,#ff9c00,#ff9c00,#ff9c00,#ff9800,#ff9800,#ff9800,#ff9800,#ff9800,#ff9c00,#ff9c00,#ff9c00,#ff9c00,#ff9800,#ff9800,#ff9800,#ff9800,#ff9800,#ff9400,#ff9400,#ff9400,#ff9400,#ff9400,#ff9400,#ff9400,#ff9400,#ff9800,#ff9800,#ff9800,#ff9800,#ff9800,#ff9800,#ff9c00,#ff9c00,#ff9c00,#ff9c00,#ff9c00,#ff9f00,#ff9f00,#ffa300,#ffa300,#ffa700,#ffab00,#ffab00,#ffae00,#ffb200,#ffb200,#ffb600,#ffb600,#ffb600,#ffb600,#ffb600,#ffb600,#ffb200,#ffb200 99.48%)"></div><div style="top:62.61px;height:4.51px;background:linear-gradient(90deg,#ffb200 0.52%,#ffb200,#ffb600,#ffb600,#ffb600,#ffb600,#ffb600,#ffb600,#ffb200,#ffb200,#ffae00,#ffab00,#ffab00,#ffa700,#ffa300,#ffa300,#ff9f00,#ff9f00,#ff9f00,#ff9c00,#ff9c00,#ff9c00,#ff9c00,#ff9c00,#ff9800,#ff9800,#ff9800,#ff9800,#ff9800,#ff9800,#ff9800,#ff9800,#ff9800,#ff9800,#ff9800,#ff9c00,#ff9c00,#ff9c00,#ff9f00,#ff9f00,#ff9f00,#ffa300,#ffa300,#ffa300,#ff9f00,#ff9f00,#ff9f00,#ff9f00,#ff9c00,#ff9f00,#ff9f00,#ff9f00,#ff9f00,#ffa300,#ffa300,#ffa300,#ff9f00,#ff9f00,#ff9f00,#ff9c00,#ff9c00,#ff9c00,#ff9800,#ff9800,#ff9800,#ff9800,#ff9800,#ff9800,#ff9800,#ff9800,#ff9800,#ff9800,#ff9800,#ff9c00,#ff9c00,#ff9c00,#ff9c00,#ff9c00,#ff9f00,#ff9f00,#ff9f00,#ffa300,#ffa300,#ffa700,#ffab00,#ffab00,#ffae00,#ffb200,#ffb200,#ffb600,#ffb600,#ffb600,#ffb600,#ffb600,#ffb600,#ffb200,#ffb200 99.48%)"></div><div style="top:66.53px;height:4.51px;background:linear-gradient(90deg,#ffb200 0.52%,#ffb200,#ffb600,#ffb600,#ffb600,#ffb600,#ffb600,#ffb600,#ffb200,#ffae00,#ffae00,#ffab00,#ffa700,#ffa700,#ffa300,#ffa300,#ff9f00,#ff9f00,#ff9c00,#ff9c00,#ff9c00,#ff9c00,#ff9c00,#ff9c00,#ff9c00,#ff9800,#ff9800,#ff9800,#ff9800,#ff9800,#ff9800,#ff9c00,#ff9c00,#ff9c00,#ff9c00,#ff9f00,#ff9f00,#ffa300,#ffa300,#ffa700,#ffa700,#ffab00,#ffab00,#ffa700,#ffa700,#ffa700,#ffa300,#ffa300,#ffa300,#ffa300,#ffa300,#ffa700,#ffa700,#ffa700,#ffab00,#ffab00,#ffa700,#ffa700,#ffa300,#ffa300,#ff9f00,#ff9f00,#ff9c00,#ff9c00,#ff9c00,#ff9c00,#ff9800,#ff9800,#ff9800,#ff9800,#ff9800,#ff9800,#ff9c00,#ff9c00,#ff9c00,#ff9c00,#ff9c00,#ff9c00,#ff9c00,#ff9f00,#ff9f00,#ffa300,#ffa300,#ffa700,#ffa700,#ffab00,#ffae00,#ffae00,#ffb200,#ffb600,#ffb600,#ffb600,#ffb600,#ffb600,#ffb600,#ffb200,#ffb200 99.48%)"></div><div style="top:70.44px;height:4.51px;background:linear-gradient(90deg,#ffae00 0.52%,#ffb200,#ffb200,#ffb600,#ffb600,#ffb600,#ffb600,#ffb200,#ffb200,#ffae00,#ffab00,#ffab00,#ffa700,#ffa700,#ffa300,#ff9f00,#ff9f00,#ff9f00,#ff9c00,#ff9c00,#ff9c00,#ff9c00,#ff9c00,#ff9c00,#ff9c00,#ff9c00,#ff9c00,#ff9c00,#ff9c00,#ff9c00,#ff9c00,#ff9c00,#ff9c00,#ff9f00,#ff9f00,#ffa300,#ffa700,#ffab00,#ffab00,#ffae00,#ffae00,#ffae00,#ffae00,#ffae00,#ffae00,#ffae00,#ffab00,#ffa700,#ffa700,#ffa700,#ffab00,#ffae00,#ffae00,#ffae00,#ffae00,#ffae00,#ffae00,#ffae00,#ffab00,#ffab00,#ffa700,#ffa300,#ff9f00,#ff9f00,#ff9c00,#ff9c00,#ff9c00,#ff9c00,#ff9c00,#ff9c00,#ff9c00,#ff9c00,#ff9c00,#ff9c00,#ff9c00,#ff9c00,#ff9c00,#ff9c00,#ff9c00,#ff9f00,#ff9f00,#ff9f00,#ffa300,#ffa700,#ffa700,#ffab00,#ffab00,#ffae00,#ffb200,#ffb200,#ffb600,#ffb600,#ffb600,#ffb600,#ffb200,#ffb200,#ffae00 99.48%)"></div><div style="top:74.35px;height:4.51px;background:linear-gradient(90deg,#ffae00 0.52%,#ffb200,#ffb200,#ffb200,#ffb200,#ffb200,#ffb200,#ffb200,#ffae00,#ffae00,#ffab00,#ffa700,#ffa700,#ffa300,#ffa300,#ff9f00,#ff9f00,#ff9f00,#ff9c00,#ff9c00,#ff9c00,#ff9c00,#ff9c00,#ff9c00,#ff9c00,#ff9c00,#ff9c00,#ff9c00,#ff9c00,#ff9c00,#ff9c00,#ff9f00,#ff9f00,#ffa300,#ffa300,#ffa700,#ffab00,#ffae00,#ffb200,#ffb200,#ffb600,#ffb600,#ffb600,#ffb600,#ffb600,#ffb200,#ffae00,#ffab00,#ffab00,#ffab00,#ffae00,#ffb200,#ffb600,#ffb600,#ffb600,#ffb600,#ffb600,#ffb200,#ffb200,#ffae00,#ffab00,#ffa700,#ffa300,#ffa300,#ff9f00,#ff9f00,#ff9c00,#ff9c00,#ff9c00,#ff9c00,#ff9c00,#ff9c00,#ff9c00,#ff9c00,#ff9c00,#ff9c00,#ff9c00,#ff9c00,#ff9c00,#ff9f00,#ff9f00,#ff9f00,#ffa300,#ffa300,#ffa700,#ffa700,#ffab00,#ffae00,#ffae00,#ffb200,#ffb200,#ffb200,#ffb200,#ffb200,#ffb200,#ffb200,#ffae00 99.48%)"></div><div style="top:78.27px;height:4.51px;background:linear-gradient(90deg,#ffae00 0.52%,#ffae00,#ffae00,#ffae00,#ffae00,#ffae00,#ffae00,#ffae00,#ffab00,#ffab00,#ffa700,#ffa700,#ffa300,#ffa300,#ff9f00,#ff9f00,#ff9f00,#ff9c00,#ff9c00,#ff9c00,#ff9c00,#ff9c00,#ff9c00,#ff9c00,#ff9c00,#ff9c00,#ff9c00,#ff9c00,#ff9c00,#ff9c00,#ff9f00,#ff9f00,#ffa300,#ffa300,#ffa700,#ffab00,#ffae00,#ffb200,#ffb600,#ffb900,#ffbd00,#ffbd00,#ffbd00,#ffbd00,#ffb900,#ffb600,#ffb600,#ffb200,#ffae00,#ffb200,#ffb600,#ffb600,#ffb900,#ffbd00,#ffbd00,#ffbd00,#ffbd00,#ffb900,#ffb600,#ffb200,#ffae00,#ffab00,#ffa700,#ffa300,#ffa300,#ff9f00,#ff9f00,#ff9c00,#ff9c00,#ff9c00,#ff9c00,#ff9c00,#ff9c00,#ff9c00,#ff9c00,#ff9c00,#ff9c00,#ff9c00,#ff9c00,#ff9c00,#ff9f00,#ff9f00,#ff9f00,#ffa300,#ffa300,#ffa700,#ffa700,#ffab00,#ffab00,#ffae00,#ffae00,#ffae00,#ffae00,#ffae00,#ffae00,#ffae00,#ffae00 99.48%)"></div><div style="top:82.18px;height:4.51px;background:linear-gradient(90deg,#ffab00 0.52%,#ffab00,#ffab00,#ffae00,#ffae00,#ffab00,#ffab00,#ffab00,#ffa700,#ffa700,#ffa300,#ffa300,#ff9f00,#ff9f00,#ff9f00,#ff9f00,#ff9c00,#ff9c00,#ff9c00,#ff9c00,#ff9c00,#ff9c00,#ff9c00,#ff9c00,#ff9c00,#ff9c00,#ff9c00,#ff9c00,#ff9c00,#ff9c00,#ff9f00,#ff9f00,#ffa300,#ffa700,#ffab00,#ffae00,#ffb200,#ffb900,#ffbd00,#ffc100,#ffc100,#ffc400,#ffc400,#ffc100,#ffc100,#ffbd00,#ffb900,#ffb600,#ffae00,#ffb600,#ffb900,#ffbd00,#ffc100,#ffc100,#ffc400,#ffc400,#ffc100,#ffc100,#ffbd00,#ffb900,#ffb200,#ffae00,#ffab00,#ffa700,#ffa300,#ff9f00,#ff9f00,#ff9c00,#ff9c00,#ff9c00,#ff9c00,#ff9c00,#ff9c00,#ff9c00,#ff9c00,#ff9c00,#ff9c00,#ff9c00,#ff9c00,#ff9c00,#ff9c00,#ff9f00,#ff9f00,#ff9f00,#ff9f00,#ffa300,#ffa300,#ffa700,#ffa700,#ffab00,#ffab00,#ffab00,#ffae00,#ffae00,#ffab00,#ffab00,#ffab00 99.48%)"></div><div style="top:86.09px;height:4.51px;background:linear-gradient(90deg,#ffa700 0.52%,#ffa700,#ffab00,#ffab00,#ffa700,#ffa700,#ffa700,#ffa700,#ffa300,#ffa300,#ff9f00,#ff9f00,#ff9f00,#ff9c00,#ff9c00,#ff9c00,#ff9c00,#ff9c00,#ff9c00,#ff9c00,#ff9c00,#ff9c00,#ff9c00,#ff9c00,#ff9c00,#ff9c00,#ff9c00,#ff9c00,#ff9c00,#ff9c00,#ff9f00,#ff9f00,#ffa300,#ffa700,#ffae00,#ffb200,#ffb600,#ffbd00,#ffc100,#ffc400,#ffc800,#ffc800,#ffc800,#ffc800,#ffc400,#ffc100,#ffbd00,#ffb600,#ffb200,#ffb600,#ffbd00,#ffc100,#ffc400,#ffc800,#ffc800,#ffc800,#ffc800,#ffc400,#ffc100,#ffbd00,#ffb600,#ffb200,#ffae00,#ffa700,#ffa300,#ff9f00,#ff9f00,#ff9c00,#ff9c00,#ff9c00,#ff9c00,#ff9c00,#ff9c00,#ff9c00,#ff9c00,#ff9c00,#ff9c00,#ff9c00,#ff9c00,#ff9c00,#ff9c00,#ff9c00,#ff9c00,#ff9c00,#ff9f00,#ff9f00,#ff9f00,#ffa300,#ffa300,#ffa700,#ffa700,#ffa700,#ffa700,#ffab00,#ffab00,#ffa700,#ffa700 99.48%)"></div><div style="top:90.01px;height:4.51px;background:linear-gradient(90deg,#ffa300 0.52%,#ffa700,#ffa700,#ffa300,#ffa300,#ffa300,#ff9f00,#ff9f00,#ff9f00,#ff9c00,#ff9c00,#ff9c00,#ff9800,#ff9800,#ff9800,#ff9800,#ff9800,#ff9800,#ff9c00,#ff9c00,#ff9c00,#ff9c00,#ff9c00,#ff9800,#ff9800,#ff9800,#ff9800,#ff9800,#ff9c00,#ff9c00,#ff9f00,#ff9f00,#ffa300,#ffab00,#ffae00,#ffb200,#ffb900,#ffbd00,#ffc400,#ffc800,#ffcc00,#ffcc00,#ffcc00,#ffcc00,#ffc800,#ffc400,#ffc100,#ffb900,#ffb600,#ffb900,#ffc100,#ffc400,#ffc800,#ffcc00,#ffcc00,#ffcc00,#ffcc00,#ffc800,#ffc400,#ffbd00,#ffb900,#ffb200,#ffae00,#ffab00,#ffa300,#ff9f00,#ff9f00,#ff9c00,#ff9c00,#ff9800,#ff9800,#ff9800,#ff9800,#ff9800,#ff9c00,#ff9c00,#ff9c00,#ff9c00,#ff9c00,#ff9800,#ff9800,#ff9800,#ff9800,#ff9800,#ff9800,#ff9c00,#ff9c00,#ff9c00,#ff9f00,#ff9f00,#ff9f00,#ffa300,#ffa300,#ffa300,#ffa700,#ffa700,#ffa300 99.48%)"></div><div style="top:93.92px;height:4.51px;background:linear-gradient(90deg,#ffa300 0.52%,#ffa300,#ff9f00,#ff9f00,#ff9f00,#ff9c00,#ff9c00,#ff9800,#ff9800,#ff9800,#ff9400,#ff9400,#ff9400,#ff9400,#ff9400,#ff9800,#ff9800,#ff9800,#ff9800,#ff9800,#ff9800,#ff9800,#ff9800,#ff9800,#ff9800,#ff9800,#ff9800,#ff9800,#ff9800,#ff9c00,#ff9c00,#ff9f00,#ffa300,#ffab00,#ffae00,#ffb600,#ffbd00,#ffc100,#ffc800,#ffcc00,#ffd000,#ffd000,#ffd000,#ffd000,#ffcc00,#ffc800,#ffc100,#ffbd00,#ffb600,#ffbd00,#ffc100,#ffc800,#ffcc00,#ffd000,#ffd000,#ffd000,#ffd000,#ffcc00,#ffc800,#ffc100,#ffbd00,#ffb600,#ffae00,#ffab00,#ffa300,#ff9f00,#ff9c00,#ff9c00,#ff9800,#ff9800,#ff9800,#ff9800,#ff9800,#ff9800,#ff9800,#ff9800,#ff9800,#ff9800,#ff9800,#ff9800,#ff9800,#ff9800,#ff9400,#ff9400,#ff9400,#ff9400,#ff9400,#ff9800,#ff9800,#ff9800,#ff9c00,#ff9c00,#ff9f00,#ff9f00,#ff9f00,#ffa300,#ffa300 99.48%)"></div><div style="top:97.84px;height:4.51px;background:linear-gradient(90deg,#ff9f00 0.52%,#ff9f00,#ff9c00,#ff9c00,#ff9800,#ff9800,#ff9400,#ff9400,#ff9100,#ff9100,#ff8d00,#ff8d00,#ff9100,#ff9100,#ff9100,#ff9400,#ff9400,#ff9400,#ff9800,#ff9800,#ff9800,#ff9800,#ff9800,#ff9800,#ff9800,#ff9400,#ff9400,#ff9400,#ff9400,#ff9800,#ff9c00,#ff9f00,#ffa300,#ffa700,#ffae00,#ffb600,#ffbd00,#ffc400,#ffc800,#ffd000,#ffd300,#ffd300,#ffd300,#ffd300,#ffd000,#ffc800,#ffc400,#ffbd00,#ffb900,#ffbd00,#ffc400,#ffc800,#ffd000,#ffd300,#ffd300,#ffd300,#ffd300,#ffd000,#ffc800,#ffc400,#ffbd00,#ffb600,#ffae00,#ffa700,#ffa300,#ff9f00,#ff9c00,#ff9800,#ff9400,#ff9400,#ff9400,#ff9400,#ff9800,#ff9800,#ff9800,#ff9800,#ff9800,#ff9800,#ff9800,#ff9400,#ff9400,#ff9400,#ff9100,#ff9100,#ff9100,#ff8d00,#ff8d00,#ff9100,#ff9100,#ff9400,#ff9400,#ff9800,#ff9800,#ff9c00,#ff9c00,#ff9f00,#ff9f00 99.48%)"></div><div style="top:101.75px;height:4.51px;background:linear-gradient(90deg,#ff9c00 0.52%,#ff9c00,#ff9800,#ff9800,#ff9400,#ff9100,#ff8d00,#ff8d00,#ff8900,#ff8900,#ff8600,#ff8900,#ff8900,#ff8900,#ff8d00,#ff9100,#ff9100,#ff9400,#ff9400,#ff9800,#ff9800,#ff9800,#ff9800,#ff9400,#ff9400,#ff9400,#ff9100,#ff9100,#ff9100,#ff9400,#ff9800,#ff9c00,#ff9f00,#ffa700,#ffae00,#ffb600,#ffbd00,#ffc400,#ffcc00,#ffd000,#ffd300,#ffd300,#ffd700,#ffd300,#ffd000,#ffcc00,#ffc400,#ffc100,#ffb900,#ffc100,#ffc400,#ffcc00,#ffd000,#ffd300,#ffd700,#ffd300,#ffd300,#ffd000,#ffcc00,#ffc400,#ffbd00,#ffb600,#ffae00,#ffa700,#ff9f00,#ff9c00,#ff9800,#ff9400,#ff9100,#ff9100,#ff9100,#ff9400,#ff9400,#ff9400,#ff9800,#ff9800,#ff9800,#ff9800,#ff9400,#ff9400,#ff9100,#ff9100,#ff8d00,#ff8900,#ff8900,#ff8900,#ff8600,#ff8900,#ff8900,#ff8d00,#ff8d00,#ff9100,#ff9400,#ff9800,#ff9800,#ff9c00,#ff9c00 99.48%)"></div><div style="top:105.66px;height:4.51px;background:linear-gradient(90deg,#ff9800 0.52%,#ff9800,#ff9400,#ff9100,#ff8d00,#ff8900,#ff8600,#ff8200,#ff8200,#ff7e00,#ff7e00,#ff8200,#ff8200,#ff8600,#ff8900,#ff8d00,#ff8d00,#ff9100,#ff9400,#ff9400,#ff9400,#ff9400,#ff9400,#ff9400,#ff9100,#ff9100,#ff8d00,#ff8d00,#ff8d00,#ff8d00,#ff9100,#ff9800,#ff9c00,#ffa300,#ffab00,#ffb600,#ffbd00,#ffc400,#ffcc00,#ffd000,#ffd300,#ffd700,#ffd700,#ffd300,#ffd000,#ffcc00,#ffc400,#ffc100,#ffb900,#ffc100,#ffc400,#ffcc00,#ffd000,#ffd300,#ffd700,#ffd700,#ffd300,#ffd000,#ffcc00,#ffc400,#ffbd00,#ffb600,#ffab00,#ffa300,#ff9c00,#ff9800,#ff9100,#ff8d00,#ff8d00,#ff8d00,#ff8d00,#ff9100,#ff9100,#ff9400,#ff9400,#ff9400,#ff9400,#ff9400,#ff9400,#ff9100,#ff8d00,#ff8d00,#ff8900,#ff8600,#ff8200,#ff8200,#ff7e00,#ff7e00,#ff8200,#ff8200,#ff8600,#ff8900,#ff8d00,#ff9100,#ff9400,#ff9800,#ff9800 99.48%)"></div><div style="top:109.58px;height:4.51px;background:linear-gradient(90deg,#ff9800 0.52%,#ff9400,#ff9100,#ff8d00,#ff8900,#ff8600,#ff7e00,#ff7e00,#ff7a00,#ff7700,#ff7700,#ff7a00,#ff7e00,#ff7e00,#ff8200,#ff8900,#ff8d00,#ff9100,#ff9100,#ff9400,#ff9400,#ff9400,#ff9400,#ff9100,#ff9100,#ff8d00,#ff8900,#ff8900,#ff8900,#ff8900,#ff8d00,#ff9100,#ff9800,#ff9f00,#ffab00,#ffb200,#ffb900,#ffc400,#ffc800,#ffd000,#ffd300,#ffd300,#ffd700,#ffd300,#ffd000,#ffcc00,#ffc400,#ffc100,#ffb900,#ffc100,#ffc400,#ffcc00,#ffd000,#ffd300,#ffd700,#ffd300,#ffd300,#ffd000,#ffc800,#ffc400,#ffb900,#ffb200,#ffab00,#ff9f00,#ff9800,#ff9100,#ff8d00,#ff8900,#ff8900,#ff8900,#ff8900,#ff8d00,#ff9100,#ff9100,#ff9400,#ff9400,#ff9400,#ff9400,#ff9100,#ff9100,#ff8d00,#ff8900,#ff8200,#ff7e00,#ff7e00,#ff7a00,#ff7700,#ff7700,#ff7a00,#ff7e00,#ff7e00,#ff8600,#ff8900,#ff8d00,#ff9100,#ff9400,#ff9800 99.48%)"></div><div style="top:113.49px;height:4.51px;background:linear-gradient(90deg,#ff9400 0.52%,#ff9100,#ff8d00,#ff8900,#ff8600,#ff7e00,#ff7a00,#ff7700,#ff7300,#ff7300,#ff7300,#ff7300,#ff7700,#ff7a00,#ff7e00,#ff8600,#ff8900,#ff8d00,#ff9100,#ff9100,#ff9400,#ff9400,#ff9100,#ff9100,#ff8d00,#ff8900,#ff8600,#ff8200,#ff8200,#ff8600,#ff8900,#ff8d00,#ff9400,#ff9f00,#ffa700,#ffb200,#ffb900,#ffc100,#ffc800,#ffcc00,#ffd000,#ffd300,#ffd300,#ffd300,#ffd000,#ffcc00,#ffc400,#ffbd00,#ffb900,#ffbd00,#ffc400,#ffcc00,#ffd000,#ffd300,#ffd300,#ffd300,#ffd000,#ffcc00,#ffc800,#ffc100,#ffb900,#ffb200,#ffa700,#ff9f00,#ff9400,#ff8d00,#ff8900,#ff8600,#ff8200,#ff8200,#ff8600,#ff8900,#ff8d00,#ff9100,#ff9100,#ff9400,#ff9400,#ff9100,#ff9100,#ff8d00,#ff8900,#ff8600,#ff7e00,#ff7a00,#ff7700,#ff7300,#ff7300,#ff7300,#ff7300,#ff7700,#ff7a00,#ff7e00,#ff8600,#ff8900,#ff8d00,#ff9100,#ff9400 99.48%)"></div><div style="top:117.40px;height:4.51px;background:linear-gradient(90deg,#ff9400 0.52%,#ff9100,#ff8900,#ff8600,#ff8200,#ff7a00,#ff7700,#ff6f00,#ff6f00,#ff6c00,#ff6c00,#ff6f00,#ff7300,#ff7700,#ff7a00,#ff8200,#ff8600,#ff8d00,#ff9100,#ff9100,#ff9100,#ff9100,#ff9100,#ff8d00,#ff8900,#ff8600,#ff8200,#ff7e00,#ff7e00,#ff7e00,#ff8600,#ff8900,#ff9100,#ff9c00,#ffa300,#ffae00,#ffb600,#ffbd00,#ffc400,#ffcc00,#ffd000,#ffd000,#ffd000,#ffd000,#ffcc00,#ffc800,#ffc400,#ffbd00,#ffb600,#ffbd00,#ffc400,#ffc800,#ffcc00,#ffd000,#ffd000,#ffd000,#ffd000,#ffcc00,#ffc400,#ffbd00,#ffb600,#ffae00,#ffa300,#ff9c00,#ff9100,#ff8900,#ff8600,#ff7e00,#ff7e00,#ff7e00,#ff8200,#ff8600,#ff8900,#ff8d00,#ff9100,#ff9100,#ff9100,#ff9100,#ff9100,#ff8d00,#ff8600,#ff8200,#ff7a00,#ff7700,#ff7300,#ff6f00,#ff6c00,#ff6c00,#ff6f00,#ff6f00,#ff7700,#ff7a00,#ff8200,#ff8600,#ff8900,#ff9100,#ff9400 99.48%)"></div><div style="top:121.32px;height:4.51px;background:linear-gradient(90deg,#ff9100 0.52%,#ff8d00,#ff8900,#ff8600,#ff7e00,#ff7700,#ff7300,#ff6f00,#ff6c00,#ff6800,#ff6800,#ff6c00,#ff6f00,#ff7300,#ff7a00,#ff7e00,#ff8600,#ff8900,#ff8d00,#ff9100,#ff9100,#ff9100,#ff9100,#ff8d00,#ff8900,#ff8600,#ff7e00,#ff7e00,#ff7a00,#ff7e00,#ff8200,#ff8900,#ff9100,#ff9800,#ffa300,#ffab00,#ffb600,#ffbd00,#ffc400,#ffc800,#ffcc00,#ffcc00,#ffcc00,#ffcc00,#ffc800,#ffc400,#ffc100,#ffb900,#ffb600,#ffb900,#ffc100,#ffc400,#ffc800,#ffcc00,#ffcc00,#ffcc00,#ffcc00,#ffc800,#ffc400,#ffbd00,#ffb600,#ffab00,#ffa300,#ff9800,#ff9100,#ff8900,#ff8200,#ff7e00,#ff7a00,#ff7e00,#ff7e00,#ff8600,#ff8900,#ff8d00,#ff9100,#ff9100,#ff9100,#ff9100,#ff8d00,#ff8900,#ff8600,#ff7e00,#ff7a00,#ff7300,#ff6f00,#ff6c00,#ff6800,#ff6800,#ff6c00,#ff6f00,#ff7300,#ff7700,#ff7e00,#ff8600,#ff8900,#ff8d00,#ff9100 99.48%)"></div><div style="top:125.23px;height:4.51px;background:linear-gradient(90deg,#ff9100 0.52%,#ff8d00,#ff8900,#ff8200,#ff7e00,#ff7700,#ff7300,#ff6c00,#ff6c00,#ff6800,#ff6800,#ff6c00,#ff6f00,#ff7300,#ff7a00,#ff7e00,#ff8600,#ff8900,#ff8d00,#ff9100,#ff9100,#ff9100,#ff9100,#ff8d00,#ff8900,#ff8600,#ff7e00,#ff7e00,#ff7a00,#ff7e00,#ff8200,#ff8600,#ff8d00,#ff9800,#ff9f00,#ffab00,#ffb200,#ffb900,#ffc100,#ffc400,#ffc800,#ffc800,#ffc800,#ffc800,#ffc400,#ffc100,#ffbd00,#ffb900,#ffb200,#ffb900,#ffbd00,#ffc100,#ffc400,#ffc800,#ffc800,#ffc800,#ffc800,#ffc400,#ffc100,#ffb900,#ffb200,#ffab00,#ff9f00,#ff9800,#ff8d00,#ff8600,#ff8200,#ff7e00,#ff7a00,#ff7e00,#ff7e00,#ff8600,#ff8900,#ff8d00,#ff9100,#ff9100,#ff9100,#ff9100,#ff8d00,#ff8900,#ff8600,#ff7e00,#ff7a00,#ff7300,#ff6f00,#ff6c00,#ff6800,#ff6800,#ff6c00,#ff6c00,#ff7300,#ff7700,#ff7e00,#ff8200,#ff8900,#ff8d00,#ff9100 99.48%)"></div><div style="top:129.14px;height:4.51px;background:linear-gradient(90deg,#ff9100 0.52%,#ff8d00,#ff8900,#ff8600,#ff7e00,#ff7700,#ff7300,#ff6f00,#ff6c00,#ff6c00,#ff6c00,#ff6c00,#ff6f00,#ff7700,#ff7a00,#ff8200,#ff8600,#ff8900,#ff8d00,#ff9100,#ff9100,#ff9100,#ff9100,#ff8d00,#ff8900,#ff8600,#ff8200,#ff7e00,#ff7e00,#ff7e00,#ff8200,#ff8900,#ff9100,#ff9800,#ff9f00,#ffab00,#ffb200,#ffb600,#ffbd00,#ffc100,#ffc400,#ffc400,#ffc400,#ffc400,#ffc100,#ffbd00,#ffb900,#ffb600,#ffb200,#ffb600,#ffb900,#ffbd00,#ffc100,#ffc400,#ffc400,#ffc400,#ffc400,#ffc100,#ffbd00,#ffb600,#ffb200,#ffab00,#ff9f00,#ff9800,#ff9100,#ff8900,#ff8200,#ff7e00,#ff7e00,#ff7e00,#ff8200,#ff8600,#ff8900,#ff8d00,#ff9100,#ff9100,#ff9100,#ff9100,#ff8d00,#ff8900,#ff8600,#ff8200,#ff7a00,#ff7700,#ff6f00,#ff6c00,#ff6c00,#ff6c00,#ff6c00,#ff6f00,#ff7300,#ff7700,#ff7e00,#ff8600,#ff8900,#ff8d00,#ff9100 99.48%)"></div><div style="top:133.06px;height:4.51px;background:linear-gradient(90deg,#ff9100 0.52%,#ff8d00,#ff8900,#ff8600,#ff8200,#ff7a00,#ff7700,#ff7300,#ff6f00,#ff6f00,#ff6f00,#ff6f00,#ff7300,#ff7700,#ff7e00,#ff8200,#ff8900,#ff8d00,#ff9100,#ff9100,#ff9400,#ff9400,#ff9100,#ff9100,#ff8d00,#ff8900,#ff8600,#ff8200,#ff8200,#ff8600,#ff8600,#ff8d00,#ff9400,#ff9c00,#ffa300,#ffab00,#ffae00,#ffb600,#ffb900,#ffbd00,#ffc100,#ffc100,#ffc100,#ffc100,#ffbd00,#ffb900,#ffb600,#ffb200,#ffae00,#ffb200,#ffb600,#ffb900,#ffbd00,#ffc100,#ffc100,#ffc100,#ffc100,#ffbd00,#ffb900,#ffb600,#ffae00,#ffab00,#ffa300,#ff9c00,#ff9400,#ff8d00,#ff8600,#ff8600,#ff8200,#ff8200,#ff8600,#ff8900,#ff8d00,#ff9100,#ff9100,#ff9400,#ff9400,#ff9100,#ff9100,#ff8d00,#ff8900,#ff8200,#ff7e00,#ff7700,#ff7300,#ff6f00,#ff6f00,#ff6f00,#ff6f00,#ff7300,#ff7700,#ff7a00,#ff8200,#ff8600,#ff8900,#ff8d00,#ff9100 99.48%)"></div><div style="top:136.97px;height:4.51px;background:linear-gradient(90deg,#ff9400 0.52%,#ff9100,#ff8d00,#ff8900,#ff8600,#ff8200,#ff7a00,#ff7700,#ff7700,#ff7300,#ff7300,#ff7700,#ff7a00,#ff7e00,#ff8200,#ff8600,#ff8900,#ff8d00,#ff9100,#ff9400,#ff9400,#ff9400,#ff9400,#ff9100,#ff9100,#ff8d00,#ff8900,#ff8900,#ff8900,#ff8d00,#ff9100,#ff9400,#ff9800,#ff9f00,#ffa700,#ffab00,#ffb200,#ffb600,#ffb900,#ffb900,#ffbd00,#ffbd00,#ffbd00,#ffb900,#ffb900,#ffb600,#ffb200,#ffae00,#ffab00,#ffae00,#ffb200,#ffb600,#ffb900,#ffb900,#ffbd00,#ffbd00,#ffbd00,#ffb900,#ffb900,#ffb600,#ffb200,#ffab00,#ffa700,#ff9f00,#ff9800,#ff9400,#ff9100,#ff8d00,#ff8900,#ff8900,#ff8900,#ff8d00,#ff9100,#ff9100,#ff9400,#ff9400,#ff9400,#ff9400,#ff9100,#ff8d00,#ff8900,#ff8600,#ff8200,#ff7e00,#ff7a00,#ff7700,#ff7300,#ff7300,#ff7700,#ff7700,#ff7a00,#ff8200,#ff8600,#ff8900,#ff8d00,#ff9100,#ff9400 99.48%)"></div><div style="top:140.88px;height:4.51px;background:linear-gradient(90deg,#ff9400 0.52%,#ff9400,#ff9100,#ff8d00,#ff8900,#ff8600,#ff8200,#ff8200,#ff7e00,#ff7e00,#ff7e00,#ff7e00,#ff7e00,#ff8200,#ff8600,#ff8900,#ff8d00,#ff9100,#ff9400,#ff9400,#ff9800,#ff9800,#ff9800,#ff9400,#ff9400,#ff9400,#ff9100,#ff9100,#ff9400,#ff9400,#ff9800,#ff9f00,#ffa300,#ffab00,#ffae00,#ffb200,#ffb600,#ffb900,#ffb900,#ffb900,#ffb900,#ffb900,#ffb900,#ffb600,#ffb600,#ffb200,#ffae00,#ffab00,#ffab00,#ffab00,#ffae00,#ffb200,#ffb600,#ffb600,#ffb900,#ffb900,#ffb900,#ffb900,#ffb900,#ffb900,#ffb600,#ffb200,#ffae00,#ffab00,#ffa300,#ff9f00,#ff9800,#ff9400,#ff9400,#ff9100,#ff9100,#ff9400,#ff9400,#ff9400,#ff9800,#ff9800,#ff9800,#ff9400,#ff9400,#ff9100,#ff8d00,#ff8900,#ff8600,#ff8200,#ff7e00,#ff7e00,#ff7e00,#ff7e00,#ff7e00,#ff8200,#ff8200,#ff8600,#ff8900,#ff8d00,#ff9100,#ff9400,#ff9400 99.48%)"></div><div style="top:144.80px;height:4.51px;background:linear-gradient(90deg,#ff9800 0.52%,#ff9800,#ff9400,#ff9400,#ff9100,#ff8d00,#ff8d00,#ff8900,#ff8900,#ff8600,#ff8600,#ff8600,#ff8900,#ff8900,#ff8d00,#ff8d00,#ff9100,#ff9400,#ff9400,#ff9800,#ff9800,#ff9800,#ff9c00,#ff9c00,#ff9c00,#ff9c00,#ff9c00,#ff9c00,#ff9f00,#ffa300,#ffa700,#ffab00,#ffb200,#ffb600,#ffb900,#ffbd00,#ffbd00,#ffbd00,#ffbd00,#ffbd00,#ffb900,#ffb900,#ffb600,#ffb200,#ffb200,#ffae00,#ffab00,#ffab00,#ffa700,#ffab00,#ffab00,#ffae00,#ffb200,#ffb200,#ffb600,#ffb900,#ffb900,#ffbd00,#ffbd00,#ffbd00,#ffbd00,#ffbd00,#ffb900,#ffb600,#ffb200,#ffab00,#ffa700,#ffa300,#ff9f00,#ff9c00,#ff9c00,#ff9c00,#ff9c00,#ff9c00,#ff9c00,#ff9800,#ff9800,#ff9800,#ff9400,#ff9400,#ff9100,#ff8d00,#ff8d00,#ff8900,#ff8900,#ff8600,#ff8600,#ff8600,#ff8900,#ff8900,#ff8d00,#ff8d00,#ff9100,#ff9400,#ff9400,#ff9800,#ff9800 99.48%)"></div><div style="top:148.71px;height:4.51px;background:linear-gradient(90deg,#ff9c00 0.52%,#ff9c00,#ff9c00,#ff9800,#ff9800,#ff9800,#ff9800,#ff9400,#ff9400,#ff9400,#ff9100,#ff9100,#ff9100,#ff9100,#ff9400,#ff9400,#ff9400,#ff9800,#ff9800,#ff9800,#ff9c00,#ff9c00,#ff9f00,#ff9f00,#ffa300,#ffa300,#ffa700,#ffab00,#ffae00,#ffb200,#ffb900,#ffc100,#ffc400,#ffc800,#ffcc00,#ffcc00,#ffcc00,#ffcc00,#ffc800,#ffc100,#ffbd00,#ffb900,#ffb600,#ffb200,#ffae00,#ffab00,#ffab00,#ffa700,#ffa300,#ffa700,#ffab00,#ffab00,#ffae00,#ffb200,#ffb600,#ffb900,#ffbd00,#ffc100,#ffc800,#ffcc00,#ffcc00,#ffcc00,#ffcc00,#ffc800,#ffc400,#ffc100,#ffb900,#ffb200,#ffae00,#ffab00,#ffa700,#ffa300,#ffa300,#ff9f00,#ff9f00,#ff9c00,#ff9c00,#ff9800,#ff9800,#ff9800,#ff9400,#ff9400,#ff9400,#ff9100,#ff9100,#ff9100,#ff9100,#ff9400,#ff9400,#ff9400,#ff9800,#ff9800,#ff9800,#ff9800,#ff9c00,#ff9c00,#ff9c00 99.48%)"></div><div style="top:152.62px;height:4.51px;background:linear-gradient(90deg,#ff9f00 0.52%,#ff9f00,#ff9f00,#ffa300,#ffa300,#ffa300,#ffa300,#ffa300,#ff9f00,#ff9f00,#ff9f00,#ff9c00,#ff9c00,#ff9c00,#ff9800,#ff9800,#ff9800,#ff9c00,#ff9c00,#ff9c00,#ff9f00,#ff9f00,#ffa300,#ffa700,#ffab00,#ffae00,#ffb200,#ffb900,#ffc100,#ffc800,#ffd000,#ffdb00,#ffde00,#ffe600,#ffea00,#ffea00,#ffe600,#ffe200,#ffdb00,#ffd000,#ffc800,#ffbd00,#ffb600,#ffae00,#ffab00,#ffa700,#ffa700,#ffa300,#ffa300,#ffa300,#ffa700,#ffa700,#ffab00,#ffae00,#ffb600,#ffbd00,#ffc800,#ffd000,#ffdb00,#ffe200,#ffe600,#ffea00,#ffea00,#ffe600,#ffde00,#ffdb00,#ffd000,#ffc800,#ffc100,#ffb900,#ffb200,#ffae00,#ffab00,#ffa700,#ffa300,#ff9f00,#ff9f00,#ff9c00,#ff9c00,#ff9c00,#ff9800,#ff9800,#ff9800,#ff9c00,#ff9c00,#ff9c00,#ff9f00,#ff9f00,#ff9f00,#ffa300,#ffa300,#ffa300,#ffa300,#ffa300,#ff9f00,#ff9f00,#ff9f00 99.48%)"></div><div style="top:156.54px;height:4.51px;background:linear-gradient(90deg,#ffa300 0.52%,#ffa300,#ffa700,#ffab00,#ffae00,#ffae00,#ffb200,#ffb200,#ffae00,#ffae00,#ffab00,#ffab00,#ffa700,#ffa300,#ff9f00,#ff9f00,#ff9f00,#ff9f00,#ff9f00,#ff9f00,#ffa300,#ffa300,#ffa700,#ffae00,#ffb200,#ffb900,#ffc400,#ffcc00,#ffd700,#ffe200,#feed00,#f4f802,#ebff0c,#e4ff13,#e1ff16,#e1ff16,#e4ff13,#ebff0c,#f4f802,#ffea00,#ffdb00,#ffcc00,#ffbd00,#ffb200,#ffab00,#ffa700,#ffa300,#ffa300,#ff9f00,#ffa300,#ffa300,#ffa700,#ffab00,#ffb200,#ffbd00,#ffcc00,#ffdb00,#ffea00,#f4f802,#ebff0c,#e4ff13,#e1ff16,#e1ff16,#e4ff13,#ebff0c,#f4f802,#feed00,#ffe200,#ffd700,#ffcc00,#ffc400,#ffb900,#ffb200,#ffae00,#ffa700,#ffa300,#ffa300,#ff9f00,#ff9f00,#ff9f00,#ff9f00,#ff9f00,#ff9f00,#ffa300,#ffa700,#ffab00,#ffab00,#ffae00,#ffae00,#ffb200,#ffb200,#ffae00,#ffae00,#ffab00,#ffa700,#ffa300,#ffa300 99.48%)"></div><div style="top:160.45px;height:4.51px;background:linear-gradient(90deg,#ffa700 0.52%,#ffab00,#ffae00,#ffb600,#ffb900,#ffbd00,#ffc100,#ffc100,#ffc100,#ffbd00,#ffb900,#ffb600,#ffb200,#ffae00,#ffab00,#ffa700,#ffa300,#ffa300,#ffa300,#ffa300,#ffa700,#ffab00,#ffae00,#ffb600,#ffbd00,#ffc800,#ffd300,#ffe200,#fbf100,#ebff0c,#deff19,#ceff29,#c4ff33,#baff3c,#b4ff43,#b4ff43,#b7ff40,#c1ff36,#ceff29,#deff19,#f4f802,#ffe200,#ffcc00,#ffbd00,#ffae00,#ffa700,#ffa300,#ff9f00,#ff9f00,#ff9f00,#ffa300,#ffa700,#ffae00,#ffbd00,#ffcc00,#ffe200,#f4f802,#deff19,#ceff29,#c1ff36,#b7ff40,#b4ff43,#b4ff43,#baff3c,#c4ff33,#ceff29,#deff19,#ebff0c,#fbf100,#ffe200,#ffd300,#ffc800,#ffbd00,#ffb600,#ffae00,#ffab00,#ffa700,#ffa300,#ffa300,#ffa300,#ffa300,#ffa700,#ffab00,#ffae00,#ffb200,#ffb600,#ffb900,#ffbd00,#ffc100,#ffc100,#ffc100,#ffbd00,#ffb900,#ffb600,#ffae00,#ffab00,#ffa700 99.48%)"></div><div style="top:164.36px;height:4.51px;background:linear-gradient(90deg,#ffab00 0.52%,#ffb200,#ffb900,#ffbd00,#ffc400,#ffcc00,#ffd000,#ffd300,#ffd300,#ffd000,#ffcc00,#ffc400,#ffbd00,#ffb900,#ffb200,#ffab00,#ffa700,#ffa700,#ffa700,#ffa700,#ffab00,#ffae00,#ffb600,#ffbd00,#ffc800,#ffd700,#ffea00,#f1fc06,#deff19,#caff2c,#b7ff40,#a4ff53,#90ff66,#83ff73,#7aff7d,#77ff80,#7aff7d,#83ff73,#97ff60,#adff49,#c7ff30,#e4ff13,#ffea00,#ffcc00,#ffb600,#ffa700,#ffa300,#ff9f00,#ff9f00,#ff9f00,#ffa300,#ffa700,#ffb600,#ffcc00,#ffea00,#e4ff13,#c7ff30,#adff49,#97ff60,#83ff73,#7aff7d,#77ff80,#7aff7d,#83ff73,#90ff66,#a4ff53,#b7ff40,#caff2c,#deff19,#f1fc06,#ffea00,#ffd700,#ffc800,#ffbd00,#ffb600,#ffae00,#ffab00,#ffa700,#ffa700,#ffa700,#ffa700,#ffab00,#ffb200,#ffb900,#ffbd00,#ffc400,#ffcc00,#ffd000,#ffd300,#ffd300,#ffd000,#ffcc00,#ffc400,#ffbd00,#ffb900,#ffb200,#ffab00 99.48%)"></div><div style="top:168.28px;height:4.51px;background:linear-gradient(90deg,#ffb200 0.52%,#ffb900,#ffc100,#ffcc00,#ffd300,#ffdb00,#ffe200,#ffe200,#ffe200,#ffe200,#ffdb00,#ffd300,#ffcc00,#ffc100,#ffb900,#ffb200,#ffae00,#ffab00,#ffab00,#ffab00,#ffae00,#ffb200,#ffbd00,#ffc800,#ffd700,#ffea00,#eeff09,#dbff1c,#c1ff36,#a7ff50,#8dff6a,#73ff83,#5aff9d,#46ffb1,#36ffc1,#30ffc7,#30ffc7,#39ffbe,#4dffaa,#66ff90,#8aff6d,#adff49,#d7ff1f,#feed00,#ffc800,#ffae00,#ffa300,#ff9f00,#ff9f00,#ff9f00,#ffa300,#ffae00,#ffc800,#feed00,#d7ff1f,#adff49,#8aff6d,#66ff90,#4dffaa,#39ffbe,#30ffc7,#30ffc7,#36ffc1,#46ffb1,#5aff9d,#73ff83,#8dff6a,#a7ff50,#c1ff36,#dbff1c,#eeff09,#ffea00,#ffd700,#ffc800,#ffbd00,#ffb200,#ffae00,#ffab00,#ffab00,#ffab00,#ffae00,#ffb200,#ffb900,#ffc100,#ffcc00,#ffd300,#ffdb00,#ffe200,#ffe200,#ffe200,#ffe200,#ffdb00,#ffd300,#ffcc00,#ffc100,#ffb900,#ffb200 99.48%)"></div><div style="top:172.19px;height:4.51px;background:linear-gradient(90deg,#ffb600 0.52%,#ffc100,#ffc800,#ffd700,#ffde00,#ffea00,#fbf100,#f8f500,#f8f500,#fbf100,#ffea00,#ffe200,#ffd700,#ffcc00,#ffc100,#ffb900,#ffb200,#ffae00,#ffab00,#ffae00,#ffb200,#ffb900,#ffc100,#ffd000,#ffe200,#f4f802,#deff19,#c1ff36,#a4ff53,#83ff73,#60ff97,#40ffb7,#1fffd7,#02e9f4,#00d0ff,#00bcff,#00b9ff,#00c0ff,#00d9ff,#0ff9e7,#36ffc1,#63ff94,#97ff60,#caff2c,#feed00,#ffc100,#ffa700,#ff9f00,#ff9c00,#ff9f00,#ffa700,#ffc100,#feed00,#caff2c,#97ff60,#63ff94,#36ffc1,#0ff9e7,#00d9ff,#00c0ff,#00b9ff,#00bcff,#00d0ff,#02e9f4,#1fffd7,#40ffb7,#60ff97,#83ff73,#a4ff53,#c1ff36,#deff19,#f4f802,#ffe200,#ffd000,#ffc100,#ffb900,#ffb200,#ffae00,#ffab00,#ffae00,#ffb200,#ffb900,#ffc100,#ffcc00,#ffd700,#ffe200,#ffea00,#fbf100,#f8f500,#f8f500,#fbf100,#ffea00,#ffde00,#ffd700,#ffc800,#ffc100,#ffb600 99.48%)"></div><div style="top:176.10px;height:4.51px;background:linear-gradient(90deg,#ffb900 0.52%,#ffc400,#ffd300,#ffde00,#feed00,#f4f802,#eeff09,#ebff0c,#ebff0c,#eeff09,#f4f802,#feed00,#ffe200,#ffd300,#ffc800,#ffbd00,#ffb600,#ffb200,#ffae00,#ffb200,#ffb600,#ffbd00,#ffc800,#ffdb00,#feed00,#e7ff0f,#caff2c,#aaff4d,#87ff70,#60ff97,#36ffc1,#0ff9e7,#00c4ff,#0099ff,#0075ff,#005dff,#0050ff,#0055ff,#0065ff,#0084ff,#00b4ff,#09f0ee,#40ffb7,#80ff77,#c1ff36,#ffea00,#ffb600,#ff9f00,#ff9c00,#ff9f00,#ffb600,#ffea00,#c1ff36,#80ff77,#40ffb7,#09f0ee,#00b4ff,#0084ff,#0065ff,#0055ff,#0050ff,#005dff,#0075ff,#0099ff,#00c4ff,#0ff9e7,#36ffc1,#60ff97,#87ff70,#aaff4d,#caff2c,#e7ff0f,#feed00,#ffdb00,#ffc800,#ffbd00,#ffb600,#ffb200,#ffae00,#ffb200,#ffb600,#ffbd00,#ffc800,#ffd300,#ffe200,#feed00,#f4f802,#eeff09,#ebff0c,#ebff0c,#eeff09,#f4f802,#feed00,#ffde00,#ffd300,#ffc400,#ffb900 99.48%)"></div><div style="top:180.02px;height:4.51px;background:linear-gradient(90deg,#ffbd00 0.52%,#ffcc00,#ffd700,#ffe600,#f8f500,#ebff0c,#e4ff13,#deff19,#deff19,#e1ff16,#ebff0c,#f4f802,#ffea00,#ffdb00,#ffd000,#ffc100,#ffb900,#ffb600,#ffb200,#ffb200,#ffb900,#ffc100,#ffd000,#ffde00,#f4f802,#dbff1c,#beff39,#9aff5d,#70ff87,#43ffb4,#16ffe1,#00c4ff,#008cff,#0058ff,#002dff,#0008ff,#0000ff,#0000ff,#0000ff,#0015ff,#0040ff,#0078ff,#00bcff,#1fffd7,#66ff90,#b7ff40,#ffe200,#ffa700,#ff9c00,#ffa700,#ffe200,#b7ff40,#66ff90,#1fffd7,#00bcff,#0078ff,#0040ff,#0015ff,#0000ff,#0000ff,#0000ff,#0008ff,#002dff,#0058ff,#008cff,#00c4ff,#16ffe1,#43ffb4,#70ff87,#9aff5d,#beff39,#dbff1c,#f4f802,#ffde00,#ffd000,#ffc100,#ffb900,#ffb200,#ffb200,#ffb600,#ffb900,#ffc100,#ffd000,#ffdb00,#ffea00,#f4f802,#ebff0c,#e1ff16,#deff19,#deff19,#e4ff13,#ebff0c,#f8f500,#ffe600,#ffd700,#ffcc00,#ffbd00 99.48%)"></div><div style="top:183.93px;height:4.51px;background:linear-gradient(90deg,#ffc100 0.52%,#ffcc00,#ffde00,#feed00,#f1fc06,#e4ff13,#deff19,#d7ff1f,#d7ff1f,#dbff1c,#e4ff13,#eeff09,#fbf100,#ffde00,#ffd300,#ffc400,#ffbd00,#ffb600,#ffb200,#ffb600,#ffb900,#ffc400,#ffd000,#ffe600,#f1fc06,#d4ff23,#b4ff43,#8dff6a,#63ff94,#33ffc4,#00e4f8,#00a4ff,#0065ff,#002dff,#0000ff,#0000da,#0000bf,#0000b2,#0000b6,#0000cd,#0000f6,#001dff,#0058ff,#009cff,#02e9f4,#49ffad,#9dff5a,#ffdb00,#ff9c00,#ffdb00,#9dff5a,#49ffad,#02e9f4,#009cff,#0058ff,#001dff,#0000f6,#0000cd,#0000b6,#0000b2,#0000bf,#0000da,#0000ff,#002dff,#0065ff,#00a4ff,#00e4f8,#33ffc4,#63ff94,#8dff6a,#b4ff43,#d4ff23,#f1fc06,#ffe600,#ffd000,#ffc400,#ffb900,#ffb600,#ffb200,#ffb600,#ffbd00,#ffc400,#ffd300,#ffde00,#fbf100,#eeff09,#e4ff13,#dbff1c,#d7ff1f,#d7ff1f,#deff19,#e4ff13,#f1fc06,#feed00,#ffde00,#ffcc00,#ffc100 99.48%)"></div><div style="top:187.84px;height:4.51px;background:linear-gradient(90deg,#ffc100 0.52%,#ffd000,#ffde00,#feed00,#eeff09,#e4ff13,#dbff1c,#d4ff23,#d4ff23,#dbff1c,#e1ff16,#eeff09,#fbf100,#ffe200,#ffd300,#ffc800,#ffbd00,#ffb600,#ffb600,#ffb600,#ffb900,#ffc400,#ffd300,#ffe600,#eeff09,#d1ff26,#b1ff46,#8aff6d,#5dff9a,#2cffca,#00dcfe,#0099ff,#0058ff,#001dff,#0000f6,#0000c4,#0000a4,#000096,#000096,#0000ad,#0000d1,#0000ff,#002dff,#006dff,#00acff,#09f0ee,#3cffba,#6dff8a,#97ff60,#6dff8a,#3cffba,#09f0ee,#00acff,#006dff,#002dff,#0000ff,#0000d1,#0000ad,#000096,#000096,#0000a4,#0000c4,#0000f6,#001dff,#0058ff,#0099ff,#00dcfe,#2cffca,#5dff9a,#8aff6d,#b1ff46,#d1ff26,#eeff09,#ffe600,#ffd300,#ffc400,#ffb900,#ffb600,#ffb600,#ffb600,#ffbd00,#ffc800,#ffd300,#ffe200,#fbf100,#eeff09,#e1ff16,#dbff1c,#d4ff23,#d4ff23,#dbff1c,#e4ff13,#eeff09,#feed00,#ffde00,#ffd000,#ffc100 99.48%)"></div><div style="top:191.76px;height:4.51px;background:linear-gradient(90deg,#ffc100 0.52%,#ffcc00,#ffde00,#feed00,#f1fc06,#e4ff13,#deff19,#d7ff1f,#d7ff1f,#dbff1c,#e4ff13,#eeff09,#fbf100,#ffde00,#ffd300,#ffc400,#ffbd00,#ffb600,#ffb200,#ffb600,#ffb900,#ffc400,#ffd000,#ffe600,#f1fc06,#d4ff23,#b4ff43,#8dff6a,#63ff94,#33ffc4,#00e4f8,#00a4ff,#0065ff,#002dff,#0000ff,#0000da,#0000bf,#0000b2,#0000b6,#0000cd,#0000f6,#001dff,#0058ff,#009cff,#02e9f4,#49ffad,#9dff5a,#ffdb00,#ff9c00,#ffdb00,#9dff5a,#49ffad,#02e9f4,#009cff,#0058ff,#001dff,#0000f6,#0000cd,#0000b6,#0000b2,#0000bf,#0000da,#0000ff,#002dff,#0065ff,#00a4ff,#00e4f8,#33ffc4,#63ff94,#8dff6a,#b4ff43,#d4ff23,#f1fc06,#ffe600,#ffd000,#ffc400,#ffb900,#ffb600,#ffb200,#ffb600,#ffbd00,#ffc400,#ffd300,#ffde00,#fbf100,#eeff09,#e4ff13,#dbff1c,#d7ff1f,#d7ff1f,#deff19,#e4ff13,#f1fc06,#feed00,#ffde00,#ffcc00,#ffc100 99.48%)"></div><div style="top:195.67px;height:4.51px;background:linear-gradient(90deg,#ffbd00 0.52%,#ffcc00,#ffd700,#ffe600,#f8f500,#ebff0c,#e4ff13,#deff19,#deff19,#e1ff16,#ebff0c,#f4f802,#ffea00,#ffdb00,#ffd000,#ffc100,#ffb900,#ffb600,#ffb200,#ffb200,#ffb900,#ffc100,#ffd000,#ffde00,#f4f802,#dbff1c,#beff39,#9aff5d,#70ff87,#43ffb4,#16ffe1,#00c4ff,#008cff,#0058ff,#002dff,#0008ff,#0000ff,#0000ff,#0000ff,#0015ff,#0040ff,#0078ff,#00bcff,#1fffd7,#66ff90,#b7ff40,#ffe200,#ffa700,#ff9c00,#ffa700,#ffe200,#b7ff40,#66ff90,#1fffd7,#00bcff,#0078ff,#0040ff,#0015ff,#0000ff,#0000ff,#0000ff,#0008ff,#002dff,#0058ff,#008cff,#00c4ff,#16ffe1,#43ffb4,#70ff87,#9aff5d,#beff39,#dbff1c,#f4f802,#ffde00,#ffd000,#ffc100,#ffb900,#ffb200,#ffb200,#ffb600,#ffb900,#ffc100,#ffd000,#ffdb00,#ffea00,#f4f802,#ebff0c,#e1ff16,#deff19,#deff19,#e4ff13,#ebff0c,#f8f500,#ffe600,#ffd700,#ffcc00,#ffbd00 99.48%)"></div><div style="top:199.58px;height:4.51px;background:linear-gradient(90deg,#ffb900 0.52%,#ffc400,#ffd300,#ffde00,#feed00,#f4f802,#eeff09,#ebff0c,#ebff0c,#eeff09,#f4f802,#feed00,#ffe200,#ffd300,#ffc800,#ffbd00,#ffb600,#ffb200,#ffae00,#ffb200,#ffb600,#ffbd00,#ffc800,#ffdb00,#feed00,#e7ff0f,#caff2c,#aaff4d,#87ff70,#60ff97,#36ffc1,#0ff9e7,#00c4ff,#0099ff,#0075ff,#005dff,#0050ff,#0055ff,#0065ff,#0084ff,#00b4ff,#09f0ee,#40ffb7,#80ff77,#c1ff36,#ffea00,#ffb600,#ff9f00,#ff9c00,#ff9f00,#ffb600,#ffea00,#c1ff36,#80ff77,#40ffb7,#09f0ee,#00b4ff,#0084ff,#0065ff,#0055ff,#0050ff,#005dff,#0075ff,#0099ff,#00c4ff,#0ff9e7,#36ffc1,#60ff97,#87ff70,#aaff4d,#caff2c,#e7ff0f,#feed00,#ffdb00,#ffc800,#ffbd00,#ffb600,#ffb200,#ffae00,#ffb200,#ffb600,#ffbd00,#ffc800,#ffd300,#ffe200,#feed00,#f4f802,#eeff09,#ebff0c,#ebff0c,#eeff09,#f4f802,#feed00,#ffde00,#ffd300,#ffc400,#ffb900 99.48%)"></div><div style="top:203.50px;height:4.51px;background:linear-gradient(90deg,#ffb600 0.52%,#ffc100,#ffc800,#ffd700,#ffde00,#ffea00,#fbf100,#f8f500,#f8f500,#fbf100,#ffea00,#ffe200,#ffd700,#ffcc00,#ffc100,#ffb900,#ffb200,#ffae00,#ffab00,#ffae00,#ffb200,#ffb900,#ffc100,#ffd000,#ffe200,#f4f802,#deff19,#c1ff36,#a4ff53,#83ff73,#60ff97,#40ffb7,#1fffd7,#02e9f4,#00d0ff,#00bcff,#00b9ff,#00c0ff,#00d9ff,#0ff9e7,#36ffc1,#63ff94,#97ff60,#caff2c,#feed00,#ffc100,#ffa700,#ff9f00,#ff9c00,#ff9f00,#ffa700,#ffc100,#feed00,#caff2c,#97ff60,#63ff94,#36ffc1,#0ff9e7,#00d9ff,#00c0ff,#00b9ff,#00bcff,#00d0ff,#02e9f4,#1fffd7,#40ffb7,#60ff97,#83ff73,#a4ff53,#c1ff36,#deff19,#f4f802,#ffe200,#ffd000,#ffc100,#ffb900,#ffb200,#ffae00,#ffab00,#ffae00,#ffb200,#ffb900,#ffc100,#ffcc00,#ffd700,#ffe200,#ffea00,#fbf100,#f8f500,#f8f500,#fbf100,#ffea00,#ffde00,#ffd700,#ffc800,#ffc100,#ffb600 99.48%)"></div><div style="top:207.41px;height:4.51px;background:linear-gradient(90deg,#ffb200 0.52%,#ffb900,#ffc100,#ffcc00,#ffd300,#ffdb00,#ffe200,#ffe200,#ffe200,#ffe200,#ffdb00,#ffd300,#ffcc00,#ffc100,#ffb900,#ffb200,#ffae00,#ffab00,#ffab00,#ffab00,#ffae00,#ffb200,#ffbd00,#ffc800,#ffd700,#ffea00,#eeff09,#dbff1c,#c1ff36,#a7ff50,#8dff6a,#73ff83,#5aff9d,#46ffb1,#36ffc1,#30ffc7,#30ffc7,#39ffbe,#4dffaa,#66ff90,#8aff6d,#adff49,#d7ff1f,#feed00,#ffc800,#ffae00,#ffa300,#ff9f00,#ff9f00,#ff9f00,#ffa300,#ffae00,#ffc800,#feed00,#d7ff1f,#adff49,#8aff6d,#66ff90,#4dffaa,#39ffbe,#30ffc7,#30ffc7,#36ffc1,#46ffb1,#5aff9d,#73ff83,#8dff6a,#a7ff50,#c1ff36,#dbff1c,#eeff09,#ffea00,#ffd700,#ffc800,#ffbd00,#ffb200,#ffae00,#ffab00,#ffab00,#ffab00,#ffae00,#ffb200,#ffb900,#ffc100,#ffcc00,#ffd300,#ffdb00,#ffe200,#ffe200,#ffe200,#ffe200,#ffdb00,#ffd300,#ffcc00,#ffc100,#ffb900,#ffb200 99.48%)"></div><div style="top:211.32px;height:4.51px;background:linear-gradient(90deg,#ffab00 0.52%,#ffb200,#ffb900,#ffbd00,#ffc400,#ffcc00,#ffd000,#ffd300,#ffd300,#ffd000,#ffcc00,#ffc400,#ffbd00,#ffb900,#ffb200,#ffab00,#ffa700,#ffa700,#ffa700,#ffa700,#ffab00,#ffae00,#ffb600,#ffbd00,#ffc800,#ffd700,#ffea00,#f1fc06,#deff19,#caff2c,#b7ff40,#a4ff53,#90ff66,#83ff73,#7aff7d,#77ff80,#7aff7d,#83ff73,#97ff60,#adff49,#c7ff30,#e4ff13,#ffea00,#ffcc00,#ffb600,#ffa700,#ffa300,#ff9f00,#ff9f00,#ff9f00,#ffa300,#ffa700,#ffb600,#ffcc00,#ffea00,#e4ff13,#c7ff30,#adff49,#97ff60,#83ff73,#7aff7d,#77ff80,#7aff7d,#83ff73,#90ff66,#a4ff53,#b7ff40,#caff2c,#deff19,#f1fc06,#ffea00,#ffd700,#ffc800,#ffbd00,#ffb600,#ffae00,#ffab00,#ffa700,#ffa700,#ffa700,#ffa700,#ffab00,#ffb200,#ffb900,#ffbd00,#ffc400,#ffcc00,#ffd000,#ffd300,#ffd300,#ffd000,#ffcc00,#ffc400,#ffbd00,#ffb900,#ffb200,#ffab00 99.48%)"></div><div style="top:215.24px;height:4.51px;background:linear-gradient(90deg,#ffa700 0.52%,#ffab00,#ffae00,#ffb600,#ffb900,#ffbd00,#ffc100,#ffc100,#ffc100,#ffbd00,#ffb900,#ffb600,#ffb200,#ffae00,#ffab00,#ffa700,#ffa300,#ffa300,#ffa300,#ffa300,#ffa700,#ffab00,#ffae00,#ffb600,#ffbd00,#ffc800,#ffd300,#ffe200,#fbf100,#ebff0c,#deff19,#ceff29,#c4ff33,#baff3c,#b4ff43,#b4ff43,#b7ff40,#c1ff36,#ceff29,#deff19,#f4f802,#ffe200,#ffcc00,#ffbd00,#ffae00,#ffa700,#ffa300,#ff9f00,#ff9f00,#ff9f00,#ffa300,#ffa700,#ffae00,#ffbd00,#ffcc00,#ffe200,#f4f802,#deff19,#ceff29,#c1ff36,#b7ff40,#b4ff43,#b4ff43,#baff3c,#c4ff33,#ceff29,#deff19,#ebff0c,#fbf100,#ffe200,#ffd300,#ffc800,#ffbd00,#ffb600,#ffae00,#ffab00,#ffa700,#ffa300,#ffa300,#ffa300,#ffa300,#ffa700,#ffab00,#ffae00,#ffb200,#ffb600,#ffb900,#ffbd00,#ffc100,#ffc100,#ffc100,#ffbd00,#ffb900,#ffb600,#ffae00,#ffab00,#ffa700 99.48%)"></div><div style="top:219.15px;height:4.51px;background:linear-gradient(90deg,#ffa300 0.52%,#ffa300,#ffa700,#ffab00,#ffae00,#ffae00,#ffb200,#ffb200,#ffae00,#ffae00,#ffab00,#ffab00,#ffa700,#ffa300,#ff9f00,#ff9f00,#ff9f00,#ff9f00,#ff9f00,#ff9f00,#ffa300,#ffa300,#ffa700,#ffae00,#ffb200,#ffb900,#ffc400,#ffcc00,#ffd700,#ffe200,#feed00,#f4f802,#ebff0c,#e4ff13,#e1ff16,#e1ff16,#e4ff13,#ebff0c,#f4f802,#ffea00,#ffdb00,#ffcc00,#ffbd00,#ffb200,#ffab00,#ffa700,#ffa300,#ffa300,#ff9f00,#ffa300,#ffa300,#ffa700,#ffab00,#ffb200,#ffbd00,#ffcc00,#ffdb00,#ffea00,#f4f802,#ebff0c,#e4ff13,#e1ff16,#e1ff16,#e4ff13,#ebff0c,#f4f802,#feed00,#ffe200,#ffd700,#ffcc00,#ffc400,#ffb900,#ffb200,#ffae00,#ffa700,#ffa300,#ffa300,#ff9f00,#ff9f00,#ff9f00,#ff9f00,#ff9f00,#ff9f00,#ffa300,#ffa700,#ffab00,#ffab00,#ffae00,#ffae00,#ffb200,#ffb200,#ffae00,#ffae00,#ffab00,#ffa700,#ffa300,#ffa300 99.48%)"></div><div style="top:223.06px;height:4.51px;background:linear-gradient(90deg,#ff9f00 0.52%,#ff9f00,#ff9f00,#ffa300,#ffa300,#ffa300,#ffa300,#ffa300,#ff9f00,#ff9f00,#ff9f00,#ff9c00,#ff9c00,#ff9c00,#ff9800,#ff9800,#ff9800,#ff9c00,#ff9c00,#ff9c00,#ff9f00,#ff9f00,#ffa300,#ffa700,#ffab00,#ffae00,#ffb200,#ffb900,#ffc100,#ffc800,#ffd000,#ffdb00,#ffde00,#ffe600,#ffea00,#ffea00,#ffe600,#ffe200,#ffdb00,#ffd000,#ffc800,#ffbd00,#ffb600,#ffae00,#ffab00,#ffa700,#ffa700,#ffa300,#ffa300,#ffa300,#ffa700,#ffa700,#ffab00,#ffae00,#ffb600,#ffbd00,#ffc800,#ffd000,#ffdb00,#ffe200,#ffe600,#ffea00,#ffea00,#ffe600,#ffde00,#ffdb00,#ffd000,#ffc800,#ffc100,#ffb900,#ffb200,#ffae00,#ffab00,#ffa700,#ffa300,#ff9f00,#ff9f00,#ff9c00,#ff9c00,#ff9c00,#ff9800,#ff9800,#ff9800,#ff9c00,#ff9c00,#ff9c00,#ff9f00,#ff9f00,#ff9f00,#ffa300,#ffa300,#ffa300,#ffa300,#ffa300,#ff9f00,#ff9f00,#ff9f00 99.48%)"></div><div style="top:226.98px;height:4.51px;background:linear-gradient(90deg,#ff9c00 0.52%,#ff9c00,#ff9c00,#ff9800,#ff9800,#ff9800,#ff9800,#ff9400,#ff9400,#ff9400,#ff9100,#ff9100,#ff9100,#ff9100,#ff9400,#ff9400,#ff9400,#ff9800,#ff9800,#ff9800,#ff9c00,#ff9c00,#ff9f00,#ff9f00,#ffa300,#ffa300,#ffa700,#ffab00,#ffae00,#ffb200,#ffb900,#ffc100,#ffc400,#ffc800,#ffcc00,#ffcc00,#ffcc00,#ffcc00,#ffc800,#ffc100,#ffbd00,#ffb900,#ffb600,#ffb200,#ffae00,#ffab00,#ffab00,#ffa700,#ffa300,#ffa700,#ffab00,#ffab00,#ffae00,#ffb200,#ffb600,#ffb900,#ffbd00,#ffc100,#ffc800,#ffcc00,#ffcc00,#ffcc00,#ffcc00,#ffc800,#ffc400,#ffc100,#ffb900,#ffb200,#ffae00,#ffab00,#ffa700,#ffa300,#ffa300,#ff9f00,#ff9f00,#ff9c00,#ff9c00,#ff9800,#ff9800,#ff9800,#ff9400,#ff9400,#ff9400,#ff9100,#ff9100,#ff9100,#ff9100,#ff9400,#ff9400,#ff9400,#ff9800,#ff9800,#ff9800,#ff9800,#ff9c00,#ff9c00,#ff9c00 99.48%)"></div><div style="top:230.89px;height:4.51px;background:linear-gradient(90deg,#ff9800 0.52%,#ff9800,#ff9400,#ff9400,#ff9100,#ff8d00,#ff8d00,#ff8900,#ff8900,#ff8600,#ff8600,#ff8600,#ff8900,#ff8900,#ff8d00,#ff8d00,#ff9100,#ff9400,#ff9400,#ff9800,#ff9800,#ff9800,#ff9c00,#ff9c00,#ff9c00,#ff9c00,#ff9c00,#ff9c00,#ff9f00,#ffa300,#ffa700,#ffab00,#ffb200,#ffb600,#ffb900,#ffbd00,#ffbd00,#ffbd00,#ffbd00,#ffbd00,#ffb900,#ffb900,#ffb600,#ffb200,#ffb200,#ffae00,#ffab00,#ffab00,#ffa700,#ffab00,#ffab00,#ffae00,#ffb200,#ffb200,#ffb600,#ffb900,#ffb900,#ffbd00,#ffbd00,#ffbd00,#ffbd00,#ffbd00,#ffb900,#ffb600,#ffb200,#ffab00,#ffa700,#ffa300,#ff9f00,#ff9c00,#ff9c00,#ff9c00,#ff9c00,#ff9c00,#ff9c00,#ff9800,#ff9800,#ff9800,#ff9400,#ff9400,#ff9100,#ff8d00,#ff8d00,#ff8900,#ff8900,#ff8600,#ff8600,#ff8600,#ff8900,#ff8900,#ff8d00,#ff8d00,#ff9100,#ff9400,#ff9400,#ff9800,#ff9800 99.48%)"></div><div style="top:234.80px;height:4.51px;background:linear-gradient(90deg,#ff9400 0.52%,#ff9400,#ff9100,#ff8d00,#ff8900,#ff8600,#ff8200,#ff8200,#ff7e00,#ff7e00,#ff7e00,#ff7e00,#ff7e00,#ff8200,#ff8600,#ff8900,#ff8d00,#ff9100,#ff9400,#ff9400,#ff9800,#ff9800,#ff9800,#ff9400,#ff9400,#ff9400,#ff9100,#ff9100,#ff9400,#ff9400,#ff9800,#ff9f00,#ffa300,#ffab00,#ffae00,#ffb200,#ffb600,#ffb900,#ffb900,#ffb900,#ffb900,#ffb900,#ffb900,#ffb600,#ffb600,#ffb200,#ffae00,#ffab00,#ffab00,#ffab00,#ffae00,#ffb200,#ffb600,#ffb600,#ffb900,#ffb900,#ffb900,#ffb900,#ffb900,#ffb900,#ffb600,#ffb200,#ffae00,#ffab00,#ffa300,#ff9f00,#ff9800,#ff9400,#ff9400,#ff9100,#ff9100,#ff9400,#ff9400,#ff9400,#ff9800,#ff9800,#ff9800,#ff9400,#ff9400,#ff9100,#ff8d00,#ff8900,#ff8600,#ff8200,#ff7e00,#ff7e00,#ff7e00,#ff7e00,#ff7e00,#ff8200,#ff8200,#ff8600,#ff8900,#ff8d00,#ff9100,#ff9400,#ff9400 99.48%)"></div><div style="top:238.72px;height:4.51px;background:linear-gradient(90deg,#ff9400 0.52%,#ff9100,#ff8d00,#ff8900,#ff8600,#ff8200,#ff7a00,#ff7700,#ff7700,#ff7300,#ff7300,#ff7700,#ff7a00,#ff7e00,#ff8200,#ff8600,#ff8900,#ff8d00,#ff9100,#ff9400,#ff9400,#ff9400,#ff9400,#ff9100,#ff9100,#ff8d00,#ff8900,#ff8900,#ff8900,#ff8d00,#ff9100,#ff9400,#ff9800,#ff9f00,#ffa700,#ffab00,#ffb200,#ffb600,#ffb900,#ffb900,#ffbd00,#ffbd00,#ffbd00,#ffb900,#ffb900,#ffb600,#ffb200,#ffae00,#ffab00,#ffae00,#ffb200,#ffb600,#ffb900,#ffb900,#ffbd00,#ffbd00,#ffbd00,#ffb900,#ffb900,#ffb600,#ffb200,#ffab00,#ffa700,#ff9f00,#ff9800,#ff9400,#ff9100,#ff8d00,#ff8900,#ff8900,#ff8900,#ff8d00,#ff9100,#ff9100,#ff9400,#ff9400,#ff9400,#ff9400,#ff9100,#ff8d00,#ff8900,#ff8600,#ff8200,#ff7e00,#ff7a00,#ff7700,#ff7300,#ff7300,#ff7700,#ff7700,#ff7a00,#ff8200,#ff8600,#ff8900,#ff8d00,#ff9100,#ff9400 99.48%)"></div><div style="top:242.63px;height:4.51px;background:linear-gradient(90deg,#ff9100 0.52%,#ff8d00,#ff8900,#ff8600,#ff8200,#ff7a00,#ff7700,#ff7300,#ff6f00,#ff6f00,#ff6f00,#ff6f00,#ff7300,#ff7700,#ff7e00,#ff8200,#ff8900,#ff8d00,#ff9100,#ff9100,#ff9400,#ff9400,#ff9100,#ff9100,#ff8d00,#ff8900,#ff8600,#ff8200,#ff8200,#ff8600,#ff8600,#ff8d00,#ff9400,#ff9c00,#ffa300,#ffab00,#ffae00,#ffb600,#ffb900,#ffbd00,#ffc100,#ffc100,#ffc100,#ffc100,#ffbd00,#ffb900,#ffb600,#ffb200,#ffae00,#ffb200,#ffb600,#ffb900,#ffbd00,#ffc100,#ffc100,#ffc100,#ffc100,#ffbd00,#ffb900,#ffb600,#ffae00,#ffab00,#ffa300,#ff9c00,#ff9400,#ff8d00,#ff8600,#ff8600,#ff8200,#ff8200,#ff8600,#ff8900,#ff8d00,#ff9100,#ff9100,#ff9400,#ff9400,#ff9100,#ff9100,#ff8d00,#ff8900,#ff8200,#ff7e00,#ff7700,#ff7300,#ff6f00,#ff6f00,#ff6f00,#ff6f00,#ff7300,#ff7700,#ff7a00,#ff8200,#ff8600,#ff8900,#ff8d00,#ff9100 99.48%)"></div><div style="top:246.54px;height:4.51px;background:linear-gradient(90deg,#ff9100 0.52%,#ff8d00,#ff8900,#ff8600,#ff7e00,#ff7700,#ff7300,#ff6f00,#ff6c00,#ff6c00,#ff6c00,#ff6c00,#ff6f00,#ff7700,#ff7a00,#ff8200,#ff8600,#ff8900,#ff8d00,#ff9100,#ff9100,#ff9100,#ff9100,#ff8d00,#ff8900,#ff8600,#ff8200,#ff7e00,#ff7e00,#ff7e00,#ff8200,#ff8900,#ff9100,#ff9800,#ff9f00,#ffab00,#ffb200,#ffb600,#ffbd00,#ffc100,#ffc400,#ffc400,#ffc400,#ffc400,#ffc100,#ffbd00,#ffb900,#ffb600,#ffb200,#ffb600,#ffb900,#ffbd00,#ffc100,#ffc400,#ffc400,#ffc400,#ffc400,#ffc100,#ffbd00,#ffb600,#ffb200,#ffab00,#ff9f00,#ff9800,#ff9100,#ff8900,#ff8200,#ff7e00,#ff7e00,#ff7e00,#ff8200,#ff8600,#ff8900,#ff8d00,#ff9100,#ff9100,#ff9100,#ff9100,#ff8d00,#ff8900,#ff8600,#ff8200,#ff7a00,#ff7700,#ff6f00,#ff6c00,#ff6c00,#ff6c00,#ff6c00,#ff6f00,#ff7300,#ff7700,#ff7e00,#ff8600,#ff8900,#ff8d00,#ff9100 99.48%)"></div><div style="top:250.46px;height:4.51px;background:linear-gradient(90deg,#ff9100 0.52%,#ff8d00,#ff8900,#ff8200,#ff7e00,#ff7700,#ff7300,#ff6c00,#ff6c00,#ff6800,#ff6800,#ff6c00,#ff6f00,#ff7300,#ff7a00,#ff7e00,#ff8600,#ff8900,#ff8d00,#ff9100,#ff9100,#ff9100,#ff9100,#ff8d00,#ff8900,#ff8600,#ff7e00,#ff7e00,#ff7a00,#ff7e00,#ff8200,#ff8600,#ff8d00,#ff9800,#ff9f00,#ffab00,#ffb200,#ffb900,#ffc100,#ffc400,#ffc800,#ffc800,#ffc800,#ffc800,#ffc400,#ffc100,#ffbd00,#ffb900,#ffb200,#ffb900,#ffbd00,#ffc100,#ffc400,#ffc800,#ffc800,#ffc800,#ffc800,#ffc400,#ffc100,#ffb900,#ffb200,#ffab00,#ff9f00,#ff9800,#ff8d00,#ff8600,#ff8200,#ff7e00,#ff7a00,#ff7e00,#ff7e00,#ff8600,#ff8900,#ff8d00,#ff9100,#ff9100,#ff9100,#ff9100,#ff8d00,#ff8900,#ff8600,#ff7e00,#ff7a00,#ff7300,#ff6f00,#ff6c00,#ff6800,#ff6800,#ff6c00,#ff6c00,#ff7300,#ff7700,#ff7e00,#ff8200,#ff8900,#ff8d00,#ff9100 99.48%)"></div><div style="top:254.37px;height:4.51px;background:linear-gradient(90deg,#ff9100 0.52%,#ff8d00,#ff8900,#ff8600,#ff7e00,#ff7700,#ff7300,#ff6f00,#ff6c00,#ff6800,#ff6800,#ff6c00,#ff6f00,#ff7300,#ff7a00,#ff7e00,#ff8600,#ff8900,#ff8d00,#ff9100,#ff9100,#ff9100,#ff9100,#ff8d00,#ff8900,#ff8600,#ff7e00,#ff7e00,#ff7a00,#ff7e00,#ff8200,#ff8900,#ff9100,#ff9800,#ffa300,#ffab00,#ffb600,#ffbd00,#ffc400,#ffc800,#ffcc00,#ffcc00,#ffcc00,#ffcc00,#ffc800,#ffc400,#ffc100,#ffb900,#ffb600,#ffb900,#ffc100,#ffc400,#ffc800,#ffcc00,#ffcc00,#ffcc00,#ffcc00,#ffc800,#ffc400,#ffbd00,#ffb600,#ffab00,#ffa300,#ff9800,#ff9100,#ff8900,#ff8200,#ff7e00,#ff7a00,#ff7e00,#ff7e00,#ff8600,#ff8900,#ff8d00,#ff9100,#ff9100,#ff9100,#ff9100,#ff8d00,#ff8900,#ff8600,#ff7e00,#ff7a00,#ff7300,#ff6f00,#ff6c00,#ff6800,#ff6800,#ff6c00,#ff6f00,#ff7300,#ff7700,#ff7e00,#ff8600,#ff8900,#ff8d00,#ff9100 99.48%)"></div><div style="top:258.28px;height:4.51px;background:linear-gradient(90deg,#ff9400 0.52%,#ff9100,#ff8900,#ff8600,#ff8200,#ff7a00,#ff7700,#ff6f00,#ff6f00,#ff6c00,#ff6c00,#ff6f00,#ff7300,#ff7700,#ff7a00,#ff8200,#ff8600,#ff8d00,#ff9100,#ff9100,#ff9100,#ff9100,#ff9100,#ff8d00,#ff8900,#ff8600,#ff8200,#ff7e00,#ff7e00,#ff7e00,#ff8600,#ff8900,#ff9100,#ff9c00,#ffa300,#ffae00,#ffb600,#ffbd00,#ffc400,#ffcc00,#ffd000,#ffd000,#ffd000,#ffd000,#ffcc00,#ffc800,#ffc400,#ffbd00,#ffb600,#ffbd00,#ffc400,#ffc800,#ffcc00,#ffd000,#ffd000,#ffd000,#ffd000,#ffcc00,#ffc400,#ffbd00,#ffb600,#ffae00,#ffa300,#ff9c00,#ff9100,#ff8900,#ff8600,#ff7e00,#ff7e00,#ff7e00,#ff8200,#ff8600,#ff8900,#ff8d00,#ff9100,#ff9100,#ff9100,#ff9100,#ff9100,#ff8d00,#ff8600,#ff8200,#ff7a00,#ff7700,#ff7300,#ff6f00,#ff6c00,#ff6c00,#ff6f00,#ff6f00,#ff7700,#ff7a00,#ff8200,#ff8600,#ff8900,#ff9100,#ff9400 99.48%)"></div><div style="top:262.20px;height:4.51px;background:linear-gradient(90deg,#ff9400 0.52%,#ff9100,#ff8d00,#ff8900,#ff8600,#ff7e00,#ff7a00,#ff7700,#ff7300,#ff7300,#ff7300,#ff7300,#ff7700,#ff7a00,#ff7e00,#ff8600,#ff8900,#ff8d00,#ff9100,#ff9100,#ff9400,#ff9400,#ff9100,#ff9100,#ff8d00,#ff8900,#ff8600,#ff8200,#ff8200,#ff8600,#ff8900,#ff8d00,#ff9400,#ff9f00,#ffa700,#ffb200,#ffb900,#ffc100,#ffc800,#ffcc00,#ffd000,#ffd300,#ffd300,#ffd300,#ffd000,#ffcc00,#ffc400,#ffbd00,#ffb900,#ffbd00,#ffc400,#ffcc00,#ffd000,#ffd300,#ffd300,#ffd300,#ffd000,#ffcc00,#ffc800,#ffc100,#ffb900,#ffb200,#ffa700,#ff9f00,#ff9400,#ff8d00,#ff8900,#ff8600,#ff8200,#ff8200,#ff8600,#ff8900,#ff8d00,#ff9100,#ff9100,#ff9400,#ff9400,#ff9100,#ff9100,#ff8d00,#ff8900,#ff8600,#ff7e00,#ff7a00,#ff7700,#ff7300,#ff7300,#ff7300,#ff7300,#ff7700,#ff7a00,#ff7e00,#ff8600,#ff8900,#ff8d00,#ff9100,#ff9400 99.48%)"></div><div style="top:266.11px;height:4.51px;background:linear-gradient(90deg,#ff9800 0.52%,#ff9400,#ff9100,#ff8d00,#ff8900,#ff8600,#ff7e00,#ff7e00,#ff7a00,#ff7700,#ff7700,#ff7a00,#ff7e00,#ff7e00,#ff8200,#ff8900,#ff8d00,#ff9100,#ff9100,#ff9400,#ff9400,#ff9400,#ff9400,#ff9100,#ff9100,#ff8d00,#ff8900,#ff8900,#ff8900,#ff8900,#ff8d00,#ff9100,#ff9800,#ff9f00,#ffab00,#ffb200,#ffb900,#ffc400,#ffc800,#ffd000,#ffd300,#ffd300,#ffd700,#ffd300,#ffd000,#ffcc00,#ffc400,#ffc100,#ffb900,#ffc100,#ffc400,#ffcc00,#ffd000,#ffd300,#ffd700,#ffd300,#ffd300,#ffd000,#ffc800,#ffc400,#ffb900,#ffb200,#ffab00,#ff9f00,#ff9800,#ff9100,#ff8d00,#ff8900,#ff8900,#ff8900,#ff8900,#ff8d00,#ff9100,#ff9100,#ff9400,#ff9400,#ff9400,#ff9400,#ff9100,#ff9100,#ff8d00,#ff8900,#ff8200,#ff7e00,#ff7e00,#ff7a00,#ff7700,#ff7700,#ff7a00,#ff7e00,#ff7e00,#ff8600,#ff8900,#ff8d00,#ff9100,#ff9400,#ff9800 99.48%)"></div><div style="top:270.02px;height:4.51px;background:linear-gradient(90deg,#ff9800 0.52%,#ff9800,#ff9400,#ff9100,#ff8d00,#ff8900,#ff8600,#ff8200,#ff8200,#ff7e00,#ff7e00,#ff8200,#ff8200,#ff8600,#ff8900,#ff8d00,#ff8d00,#ff9100,#ff9400,#ff9400,#ff9400,#ff9400,#ff9400,#ff9400,#ff9100,#ff9100,#ff8d00,#ff8d00,#ff8d00,#ff8d00,#ff9100,#ff9800,#ff9c00,#ffa300,#ffab00,#ffb600,#ffbd00,#ffc400,#ffcc00,#ffd000,#ffd300,#ffd700,#ffd700,#ffd300,#ffd000,#ffcc00,#ffc400,#ffc100,#ffb900,#ffc100,#ffc400,#ffcc00,#ffd000,#ffd300,#ffd700,#ffd700,#ffd300,#ffd000,#ffcc00,#ffc400,#ffbd00,#ffb600,#ffab00,#ffa300,#ff9c00,#ff9800,#ff9100,#ff8d00,#ff8d00,#ff8d00,#ff8d00,#ff9100,#ff9100,#ff9400,#ff9400,#ff9400,#ff9400,#ff9400,#ff9400,#ff9100,#ff8d00,#ff8d00,#ff8900,#ff8600,#ff8200,#ff8200,#ff7e00,#ff7e00,#ff8200,#ff8200,#ff8600,#ff8900,#ff8d00,#ff9100,#ff9400,#ff9800,#ff9800 99.48%)"></div><div style="top:273.94px;height:4.51px;background:linear-gradient(90deg,#ff9c00 0.52%,#ff9c00,#ff9800,#ff9800,#ff9400,#ff9100,#ff8d00,#ff8d00,#ff8900,#ff8900,#ff8600,#ff8900,#ff8900,#ff8900,#ff8d00,#ff9100,#ff9100,#ff9400,#ff9400,#ff9800,#ff9800,#ff9800,#ff9800,#ff9400,#ff9400,#ff9400,#ff9100,#ff9100,#ff9100,#ff9400,#ff9800,#ff9c00,#ff9f00,#ffa700,#ffae00,#ffb600,#ffbd00,#ffc400,#ffcc00,#ffd000,#ffd300,#ffd300,#ffd700,#ffd300,#ffd000,#ffcc00,#ffc400,#ffc100,#ffb900,#ffc100,#ffc400,#ffcc00,#ffd000,#ffd300,#ffd700,#ffd300,#ffd300,#ffd000,#ffcc00,#ffc400,#ffbd00,#ffb600,#ffae00,#ffa700,#ff9f00,#ff9c00,#ff9800,#ff9400,#ff9100,#ff9100,#ff9100,#ff9400,#ff9400,#ff9400,#ff9800,#ff9800,#ff9800,#ff9800,#ff9400,#ff9400,#ff9100,#ff9100,#ff8d00,#ff8900,#ff8900,#ff8900,#ff8600,#ff8900,#ff8900,#ff8d00,#ff8d00,#ff9100,#ff9400,#ff9800,#ff9800,#ff9c00,#ff9c00 99.48%)"></div><div style="top:277.85px;height:4.51px;background:linear-gradient(90deg,#ff9f00 0.52%,#ff9f00,#ff9c00,#ff9c00,#ff9800,#ff9800,#ff9400,#ff9400,#ff9100,#ff9100,#ff8d00,#ff8d00,#ff9100,#ff9100,#ff9100,#ff9400,#ff9400,#ff9400,#ff9800,#ff9800,#ff9800,#ff9800,#ff9800,#ff9800,#ff9800,#ff9400,#ff9400,#ff9400,#ff9400,#ff9800,#ff9c00,#ff9f00,#ffa300,#ffa700,#ffae00,#ffb600,#ffbd00,#ffc400,#ffc800,#ffd000,#ffd300,#ffd300,#ffd300,#ffd300,#ffd000,#ffc800,#ffc400,#ffbd00,#ffb900,#ffbd00,#ffc400,#ffc800,#ffd000,#ffd300,#ffd300,#ffd300,#ffd300,#ffd000,#ffc800,#ffc400,#ffbd00,#ffb600,#ffae00,#ffa700,#ffa300,#ff9f00,#ff9c00,#ff9800,#ff9400,#ff9400,#ff9400,#ff9400,#ff9800,#ff9800,#ff9800,#ff9800,#ff9800,#ff9800,#ff9800,#ff9400,#ff9400,#ff9400,#ff9100,#ff9100,#ff9100,#ff8d00,#ff8d00,#ff9100,#ff9100,#ff9400,#ff9400,#ff9800,#ff9800,#ff9c00,#ff9c00,#ff9f00,#ff9f00 99.48%)"></div><div style="top:281.76px;height:4.51px;background:linear-gradient(90deg,#ffa300 0.52%,#ffa300,#ff9f00,#ff9f00,#ff9f00,#ff9c00,#ff9c00,#ff9800,#ff9800,#ff9800,#ff9400,#ff9400,#ff9400,#ff9400,#ff9400,#ff9800,#ff9800,#ff9800,#ff9800,#ff9800,#ff9800,#ff9800,#ff9800,#ff9800,#ff9800,#ff9800,#ff9800,#ff9800,#ff9800,#ff9c00,#ff9c00,#ff9f00,#ffa300,#ffab00,#ffae00,#ffb600,#ffbd00,#ffc100,#ffc800,#ffcc00,#ffd000,#ffd000,#ffd000,#ffd000,#ffcc00,#ffc800,#ffc100,#ffbd00,#ffb600,#ffbd00,#ffc100,#ffc800,#ffcc00,#ffd000,#ffd000,#ffd000,#ffd000,#ffcc00,#ffc800,#ffc100,#ffbd00,#ffb600,#ffae00,#ffab00,#ffa300,#ff9f00,#ff9c00,#ff9c00,#ff9800,#ff9800,#ff9800,#ff9800,#ff9800,#ff9800,#ff9800,#ff9800,#ff9800,#ff9800,#ff9800,#ff9800,#ff9800,#ff9800,#ff9400,#ff9400,#ff9400,#ff9400,#ff9400,#ff9800,#ff9800,#ff9800,#ff9c00,#ff9c00,#ff9f00,#ff9f00,#ff9f00,#ffa300,#ffa300 99.48%)"></div><div style="top:285.68px;height:4.51px;background:linear-gradient(90deg,#ffa300 0.52%,#ffa700,#ffa700,#ffa300,#ffa300,#ffa300,#ff9f00,#ff9f00,#ff9f00,#ff9c00,#ff9c00,#ff9c00,#ff9800,#ff9800,#ff9800,#ff9800,#ff9800,#ff9800,#ff9c00,#ff9c00,#ff9c00,#ff9c00,#ff9c00,#ff9800,#ff9800,#ff9800,#ff9800,#ff9800,#ff9c00,#ff9c00,#ff9f00,#ff9f00,#ffa300,#ffab00,#ffae00,#ffb200,#ffb900,#ffbd00,#ffc400,#ffc800,#ffcc00,#ffcc00,#ffcc00,#ffcc00,#ffc800,#ffc400,#ffc100,#ffb900,#ffb600,#ffb900,#ffc100,#ffc400,#ffc800,#ffcc00,#ffcc00,#ffcc00,#ffcc00,#ffc800,#ffc400,#ffbd00,#ffb900,#ffb200,#ffae00,#ffab00,#ffa300,#ff9f00,#ff9f00,#ff9c00,#ff9c00,#ff9800,#ff9800,#ff9800,#ff9800,#ff9800,#ff9c00,#ff9c00,#ff9c00,#ff9c00,#ff9c00,#ff9800,#ff9800,#ff9800,#ff9800,#ff9800,#ff9800,#ff9c00,#ff9c00,#ff9c00,#ff9f00,#ff9f00,#ff9f00,#ffa300,#ffa300,#ffa300,#ffa700,#ffa700,#ffa300 99.48%)"></div><div style="top:289.59px;height:4.51px;background:linear-gradient(90deg,#ffa700 0.52%,#ffa700,#ffab00,#ffab00,#ffa700,#ffa700,#ffa700,#ffa700,#ffa300,#ffa300,#ff9f00,#ff9f00,#ff9f00,#ff9c00,#ff9c00,#ff9c00,#ff9c00,#ff9c00,#ff9c00,#ff9c00,#ff9c00,#ff9c00,#ff9c00,#ff9c00,#ff9c00,#ff9c00,#ff9c00,#ff9c00,#ff9c00,#ff9c00,#ff9f00,#ff9f00,#ffa300,#ffa700,#ffae00,#ffb200,#ffb600,#ffbd00,#ffc100,#ffc400,#ffc800,#ffc800,#ffc800,#ffc800,#ffc400,#ffc100,#ffbd00,#ffb600,#ffb200,#ffb600,#ffbd00,#ffc100,#ffc400,#ffc800,#ffc800,#ffc800,#ffc800,#ffc400,#ffc100,#ffbd00,#ffb600,#ffb200,#ffae00,#ffa700,#ffa300,#ff9f00,#ff9f00,#ff9c00,#ff9c00,#ff9c00,#ff9c00,#ff9c00,#ff9c00,#ff9c00,#ff9c00,#ff9c00,#ff9c00,#ff9c00,#ff9c00,#ff9c00,#ff9c00,#ff9c00,#ff9c00,#ff9c00,#ff9f00,#ff9f00,#ff9f00,#ffa300,#ffa300,#ffa700,#ffa700,#ffa700,#ffa700,#ffab00,#ffab00,#ffa700,#ffa700 99.48%)"></div><div style="top:293.51px;height:4.51px;background:linear-gradient(90deg,#ffab00 0.52%,#ffab00,#ffab00,#ffae00,#ffae00,#ffab00,#ffab00,#ffab00,#ffa700,#ffa700,#ffa300,#ffa300,#ff9f00,#ff9f00,#ff9f00,#ff9f00,#ff9c00,#ff9c00,#ff9c00,#ff9c00,#ff9c00,#ff9c00,#ff9c00,#ff9c00,#ff9c00,#ff9c00,#ff9c00,#ff9c00,#ff9c00,#ff9c00,#ff9f00,#ff9f00,#ffa300,#ffa700,#ffab00,#ffae00,#ffb200,#ffb900,#ffbd00,#ffc100,#ffc100,#ffc400,#ffc400,#ffc100,#ffc100,#ffbd00,#ffb900,#ffb600,#ffae00,#ffb600,#ffb900,#ffbd00,#ffc100,#ffc100,#ffc400,#ffc400,#ffc100,#ffc100,#ffbd00,#ffb900,#ffb200,#ffae00,#ffab00,#ffa700,#ffa300,#ff9f00,#ff9f00,#ff9c00,#ff9c00,#ff9c00,#ff9c00,#ff9c00,#ff9c00,#ff9c00,#ff9c00,#ff9c00,#ff9c00,#ff9c00,#ff9c00,#ff9c00,#ff9c00,#ff9f00,#ff9f00,#ff9f00,#ff9f00,#ffa300,#ffa300,#ffa700,#ffa700,#ffab00,#ffab00,#ffab00,#ffae00,#ffae00,#ffab00,#ffab00,#ffab00 99.48%)"></div><div style="top:297.42px;height:4.51px;background:linear-gradient(90deg,#ffae00 0.52%,#ffae00,#ffae00,#ffae00,#ffae00,#ffae00,#ffae00,#ffae00,#ffab00,#ffab00,#ffa700,#ffa700,#ffa300,#ffa300,#ff9f00,#ff9f00,#ff9f00,#ff9c00,#ff9c00,#ff9c00,#ff9c00,#ff9c00,#ff9c00,#ff9c00,#ff9c00,#ff9c00,#ff9c00,#ff9c00,#ff9c00,#ff9c00,#ff9f00,#ff9f00,#ffa300,#ffa300,#ffa700,#ffab00,#ffae00,#ffb200,#ffb600,#ffb900,#ffbd00,#ffbd00,#ffbd00,#ffbd00,#ffb900,#ffb600,#ffb600,#ffb200,#ffae00,#ffb200,#ffb600,#ffb600,#ffb900,#ffbd00,#ffbd00,#ffbd00,#ffbd00,#ffb900,#ffb600,#ffb200,#ffae00,#ffab00,#ffa700,#ffa300,#ffa300,#ff9f00,#ff9f00,#ff9c00,#ff9c00,#ff9c00,#ff9c00,#ff9c00,#ff9c00,#ff9c00,#ff9c00,#ff9c00,#ff9c00,#ff9c00,#ff9c00,#ff9c00,#ff9f00,#ff9f00,#ff9f00,#ffa300,#ffa300,#ffa700,#ffa700,#ffab00,#ffab00,#ffae00,#ffae00,#ffae00,#ffae00,#ffae00,#ffae00,#ffae00,#ffae00 99.48%)"></div><div style="top:301.33px;height:4.51px;background:linear-gradient(90deg,#ffae00 0.52%,#ffb200,#ffb200,#ffb200,#ffb200,#ffb200,#ffb200,#ffb200,#ffae00,#ffae00,#ffab00,#ffa700,#ffa700,#ffa300,#ffa300,#ff9f00,#ff9f00,#ff9f00,#ff9c00,#ff9c00,#ff9c00,#ff9c00,#ff9c00,#ff9c00,#ff9c00,#ff9c00,#ff9c00,#ff9c00,#ff9c00,#ff9c00,#ff9c00,#ff9f00,#ff9f00,#ffa300,#ffa300,#ffa700,#ffab00,#ffae00,#ffb200,#ffb200,#ffb600,#ffb600,#ffb600,#ffb600,#ffb600,#ffb200,#ffae00,#ffab00,#ffab00,#ffab00,#ffae00,#ffb200,#ffb600,#ffb600,#ffb600,#ffb600,#ffb600,#ffb200,#ffb200,#ffae00,#ffab00,#ffa700,#ffa300,#ffa300,#ff9f00,#ff9f00,#ff9c00,#ff9c00,#ff9c00,#ff9c00,#ff9c00,#ff9c00,#ff9c00,#ff9c00,#ff9c00,#ff9c00,#ff9c00,#ff9c00,#ff9c00,#ff9f00,#ff9f00,#ff9f00,#ffa300,#ffa300,#ffa700,#ffa700,#ffab00,#ffae00,#ffae00,#ffb200,#ffb200,#ffb200,#ffb200,#ffb200,#ffb200,#ffb200,#ffae00 99.48%)"></div><div style="top:305.25px;height:4.51px;background:linear-gradient(90deg,#ffae00 0.52%,#ffb200,#ffb200,#ffb600,#ffb600,#ffb600,#ffb600,#ffb200,#ffb200,#ffae00,#ffab00,#ffab00,#ffa700,#ffa700,#ffa300,#ff9f00,#ff9f00,#ff9f00,#ff9c00,#ff9c00,#ff9c00,#ff9c00,#ff9c00,#ff9c00,#ff9c00,#ff9c00,#ff9c00,#ff9c00,#ff9c00,#ff9c00,#ff9c00,#ff9c00,#ff9c00,#ff9f00,#ff9f00,#ffa300,#ffa700,#ffab00,#ffab00,#ffae00,#ffae00,#ffae00,#ffae00,#ffae00,#ffae00,#ffae00,#ffab00,#ffa700,#ffa700,#ffa700,#ffab00,#ffae00,#ffae00,#ffae00,#ffae00,#ffae00,#ffae00,#ffae00,#ffab00,#ffab00,#ffa700,#ffa300,#ff9f00,#ff9f00,#ff9c00,#ff9c00,#ff9c00,#ff9c00,#ff9c00,#ff9c00,#ff9c00,#ff9c00,#ff9c00,#ff9c00,#ff9c00,#ff9c00,#ff9c00,#ff9c00,#ff9c00,#ff9f00,#ff9f00,#ff9f00,#ffa300,#ffa700,#ffa700,#ffab00,#ffab00,#ffae00,#ffb200,#ffb200,#ffb600,#ffb600,#ffb600,#ffb600,#ffb200,#ffb200,#ffae00 99.48%)"></div><div style="top:309.16px;height:4.51px;background:linear-gradient(90deg,#ffb200 0.52%,#ffb200,#ffb600,#ffb600,#ffb600,#ffb600,#ffb600,#ffb600,#ffb200,#ffae00,#ffae00,#ffab00,#ffa700,#ffa700,#ffa300,#ffa300,#ff9f00,#ff9f00,#ff9c00,#ff9c00,#ff9c00,#ff9c00,#ff9c00,#ff9c00,#ff9c00,#ff9800,#ff9800,#ff9800,#ff9800,#ff9800,#ff9800,#ff9c00,#ff9c00,#ff9c00,#ff9c00,#ff9f00,#ff9f00,#ffa300,#ffa300,#ffa700,#ffa700,#ffab00,#ffab00,#ffa700,#ffa700,#ffa700,#ffa300,#ffa300,#ffa300,#ffa300,#ffa300,#ffa700,#ffa700,#ffa700,#ffab00,#ffab00,#ffa700,#ffa700,#ffa300,#ffa300,#ff9f00,#ff9f00,#ff9c00,#ff9c00,#ff9c00,#ff9c00,#ff9800,#ff9800,#ff9800,#ff9800,#ff9800,#ff9800,#ff9c00,#ff9c00,#ff9c00,#ff9c00,#ff9c00,#ff9c00,#ff9c00,#ff9f00,#ff9f00,#ffa300,#ffa300,#ffa700,#ffa700,#ffab00,#ffae00,#ffae00,#ffb200,#ffb600,#ffb600,#ffb600,#ffb600,#ffb600,#ffb600,#ffb200,#ffb200 99.48%)"></div><div style="top:313.07px;height:4.51px;background:linear-gradient(90deg,#ffb200 0.52%,#ffb200,#ffb600,#ffb600,#ffb600,#ffb600,#ffb600,#ffb600,#ffb200,#ffb200,#ffae00,#ffab00,#ffab00,#ffa700,#ffa300,#ffa300,#ff9f00,#ff9f00,#ff9f00,#ff9c00,#ff9c00,#ff9c00,#ff9c00,#ff9c00,#ff9800,#ff9800,#ff9800,#ff9800,#ff9800,#ff9800,#ff9800,#ff9800,#ff9800,#ff9800,#ff9800,#ff9c00,#ff9c00,#ff9c00,#ff9f00,#ff9f00,#ff9f00,#ffa300,#ffa300,#ffa300,#ff9f00,#ff9f00,#ff9f00,#ff9f00,#ff9c00,#ff9f00,#ff9f00,#ff9f00,#ff9f00,#ffa300,#ffa300,#ffa300,#ff9f00,#ff9f00,#ff9f00,#ff9c00,#ff9c00,#ff9c00,#ff9800,#ff9800,#ff9800,#ff9800,#ff9800,#ff9800,#ff9800,#ff9800,#ff9800,#ff9800,#ff9800,#ff9c00,#ff9c00,#ff9c00,#ff9c00,#ff9c00,#ff9f00,#ff9f00,#ff9f00,#ffa300,#ffa300,#ffa700,#ffab00,#ffab00,#ffae00,#ffb200,#ffb200,#ffb600,#ffb600,#ffb600,#ffb600,#ffb600,#ffb600,#ffb200,#ffb200 99.48%)"></div><div style="top:316.99px;height:4.51px;background:linear-gradient(90deg,#ffb200 0.52%,#ffb200,#ffb600,#ffb600,#ffb600,#ffb600,#ffb600,#ffb600,#ffb200,#ffb200,#ffae00,#ffab00,#ffab00,#ffa700,#ffa300,#ffa300,#ff9f00,#ff9f00,#ff9c00,#ff9c00,#ff9c00,#ff9c00,#ff9c00,#ff9800,#ff9800,#ff9800,#ff9800,#ff9800,#ff9800,#ff9400,#ff9400,#ff9400,#ff9400,#ff9400,#ff9400,#ff9400,#ff9400,#ff9800,#ff9800,#ff9800,#ff9800,#ff9800,#ff9c00,#ff9c00,#ff9c00,#ff9c00,#ff9800,#ff9800,#ff9800,#ff9800,#ff9800,#ff9c00,#ff9c00,#ff9c00,#ff9c00,#ff9800,#ff9800,#ff9800,#ff9800,#ff9800,#ff9400,#ff9400,#ff9400,#ff9400,#ff9400,#ff9400,#ff9400,#ff9400,#ff9800,#ff9800,#ff9800,#ff9800,#ff9800,#ff9800,#ff9c00,#ff9c00,#ff9c00,#ff9c00,#ff9c00,#ff9f00,#ff9f00,#ffa300,#ffa300,#ffa700,#ffab00,#ffab00,#ffae00,#ffb200,#ffb200,#ffb600,#ffb600,#ffb600,#ffb600,#ffb600,#ffb600,#ffb200,#ffb200 99.48%)"></div><div style="top:320.90px;height:4.51px;background:linear-gradient(90deg,#ffb200 0.52%,#ffb200,#ffb600,#ffb600,#ffb600,#ffb600,#ffb600,#ffb600,#ffb200,#ffae00,#ffae00,#ffab00,#ffa700,#ffa700,#ffa300,#ffa300,#ff9f00,#ff9f00,#ff9c00,#ff9c00,#ff9c00,#ff9c00,#ff9800,#ff9800,#ff9800,#ff9800,#ff9800,#ff9400,#ff9400,#ff9400,#ff9400,#ff9100,#ff9100,#ff9100,#ff9100,#ff9100,#ff9100,#ff9100,#ff9100,#ff9100,#ff9100,#ff9100,#ff9400,#ff9400,#ff9400,#ff9400,#ff9400,#ff9400,#ff9400,#ff9400,#ff9400,#ff9400,#ff9400,#ff9400,#ff9400,#ff9100,#ff9100,#ff9100,#ff9100,#ff9100,#ff9100,#ff9100,#ff9100,#ff9100,#ff9100,#ff9100,#ff9400,#ff9400,#ff9400,#ff9400,#ff9800,#ff9800,#ff9800,#ff9800,#ff9800,#ff9c00,#ff9c00,#ff9c00,#ff9c00,#ff9f00,#ff9f00,#ffa300,#ffa300,#ffa700,#ffa700,#ffab00,#ffae00,#ffae00,#ffb200,#ffb600,#ffb600,#ffb600,#ffb600,#ffb600,#ffb600,#ffb200,#ffb200 99.48%)"></div><div style="top:324.81px;height:4.51px;background:linear-gradient(90deg,#ffae00 0.52%,#ffb200,#ffb200,#ffb600,#ffb600,#ffb600,#ffb600,#ffb200,#ffb200,#ffae00,#ffae00,#ffab00,#ffa700,#ffa700,#ffa300,#ffa300,#ff9f00,#ff9f00,#ff9c00,#ff9c00,#ff9c00,#ff9c00,#ff9800,#ff9800,#ff9800,#ff9800,#ff9400,#ff9400,#ff9400,#ff9100,#ff9100,#ff8d00,#ff8d00,#ff8d00,#ff8900,#ff8900,#ff8900,#ff8900,#ff8900,#ff8900,#ff8900,#ff8900,#ff8d00,#ff8d00,#ff8d00,#ff8d00,#ff8d00,#ff9100,#ff9100,#ff9100,#ff8d00,#ff8d00,#ff8d00,#ff8d00,#ff8d00,#ff8900,#ff8900,#ff8900,#ff8900,#ff8900,#ff8900,#ff8900,#ff8900,#ff8d00,#ff8d00,#ff8d00,#ff9100,#ff9100,#ff9400,#ff9400,#ff9400,#ff9800,#ff9800,#ff9800,#ff9800,#ff9c00,#ff9c00,#ff9c00,#ff9c00,#ff9f00,#ff9f00,#ffa300,#ffa300,#ffa700,#ffa700,#ffab00,#ffae00,#ffae00,#ffb200,#ffb200,#ffb600,#ffb600,#ffb600,#ffb600,#ffb200,#ffb200,#ffae00 99.48%)"></div><div style="top:328.73px;height:4.51px;background:linear-gradient(90deg,#ffae00 0.52%,#ffae00,#ffb200,#ffb200,#ffb200,#ffb200,#ffb200,#ffb200,#ffae00,#ffae00,#ffab00,#ffab00,#ffa700,#ffa300,#ffa300,#ff9f00,#ff9f00,#ff9f00,#ff9c00,#ff9c00,#ff9c00,#ff9800,#ff9800,#ff9800,#ff9800,#ff9400,#ff9400,#ff9400,#ff9100,#ff9100,#ff8d00,#ff8d00,#ff8900,#ff8900,#ff8600,#ff8600,#ff8600,#ff8200,#ff8200,#ff8200,#ff8200,#ff8200,#ff8600,#ff8600,#ff8600,#ff8900,#ff8900,#ff8900,#ff8d00,#ff8900,#ff8900,#ff8900,#ff8600,#ff8600,#ff8600,#ff8200,#ff8200,#ff8200,#ff8200,#ff8200,#ff8600,#ff8600,#ff8600,#ff8900,#ff8900,#ff8d00,#ff8d00,#ff9100,#ff9100,#ff9400,#ff9400,#ff9400,#ff9800,#ff9800,#ff9800,#ff9800,#ff9c00,#ff9c00,#ff9c00,#ff9f00,#ff9f00,#ff9f00,#ffa300,#ffa300,#ffa700,#ffab00,#ffab00,#ffae00,#ffae00,#ffb200,#ffb200,#ffb200,#ffb200,#ffb200,#ffb200,#ffae00,#ffae00 99.48%)"></div><div style="top:332.64px;height:4.51px;background:linear-gradient(90deg,#ffae00 0.52%,#ffae00,#ffae00,#ffb200,#ffb200,#ffb200,#ffb200,#ffae00,#ffae00,#ffab00,#ffab00,#ffa700,#ffa700,#ffa300,#ffa300,#ff9f00,#ff9f00,#ff9c00,#ff9c00,#ff9c00,#ff9c00,#ff9800,#ff9800,#ff9800,#ff9400,#ff9400,#ff9400,#ff9100,#ff9100,#ff8d00,#ff8900,#ff8900,#ff8600,#ff8600,#ff8200,#ff7e00,#ff7e00,#ff7e00,#ff7e00,#ff7a00,#ff7a00,#ff7e00,#ff7e00,#ff7e00,#ff8200,#ff8200,#ff8600,#ff8600,#ff8900,#ff8600,#ff8600,#ff8200,#ff8200,#ff7e00,#ff7e00,#ff7e00,#ff7a00,#ff7a00,#ff7e00,#ff7e00,#ff7e00,#ff7e00,#ff8200,#ff8600,#ff8600,#ff8900,#ff8900,#ff8d00,#ff9100,#ff9100,#ff9400,#ff9400,#ff9400,#ff9800,#ff9800,#ff9800,#ff9c00,#ff9c00,#ff9c00,#ff9c00,#ff9f00,#ff9f00,#ffa300,#ffa300,#ffa700,#ffa700,#ffab00,#ffab00,#ffae00,#ffae00,#ffb200,#ffb200,#ffb200,#ffb200,#ffae00,#ffae00,#ffae00 99.48%)"></div><div style="top:336.55px;height:4.51px;background:linear-gradient(90deg,#ffab00 0.52%,#ffab00,#ffae00,#ffae00,#ffae00,#ffae00,#ffae00,#ffae00,#ffab00,#ffab00,#ffa700,#ffa700,#ffa300,#ffa300,#ff9f00,#ff9f00,#ff9f00,#ff9c00,#ff9c00,#ff9c00,#ff9c00,#ff9800,#ff9800,#ff9800,#ff9400,#ff9400,#ff9100,#ff9100,#ff8d00,#ff8d00,#ff8900,#ff8600,#ff8200,#ff8200,#ff7e00,#ff7a00,#ff7a00,#ff7700,#ff7700,#ff7700,#ff7700,#ff7700,#ff7700,#ff7a00,#ff7a00,#ff7e00,#ff7e00,#ff8200,#ff8600,#ff8200,#ff7e00,#ff7e00,#ff7a00,#ff7a00,#ff7700,#ff7700,#ff7700,#ff7700,#ff7700,#ff7700,#ff7a00,#ff7a00,#ff7e00,#ff8200,#ff8200,#ff8600,#ff8900,#ff8d00,#ff8d00,#ff9100,#ff9100,#ff9400,#ff9400,#ff9800,#ff9800,#ff9800,#ff9c00,#ff9c00,#ff9c00,#ff9c00,#ff9f00,#ff9f00,#ff9f00,#ffa300,#ffa300,#ffa700,#ffa700,#ffab00,#ffab00,#ffae00,#ffae00,#ffae00,#ffae00,#ffae00,#ffae00,#ffab00,#ffab00 99.48%)"></div><div style="top:340.47px;height:4.51px;background:linear-gradient(90deg,#ffa700 0.52%,#ffab00,#ffab00,#ffab00,#ffab00,#ffab00,#ffab00,#ffab00,#ffab00,#ffa700,#ffa700,#ffa300,#ffa300,#ffa300,#ff9f00,#ff9f00,#ff9f00,#ff9c00,#ff9c00,#ff9c00,#ff9800,#ff9800,#ff9800,#ff9800,#ff9400,#ff9400,#ff9100,#ff9100,#ff8d00,#ff8900,#ff8600,#ff8200,#ff8200,#ff7e00,#ff7a00,#ff7700,#ff7700,#ff7300,#ff7300,#ff7300,#ff7300,#ff7300,#ff7300,#ff7300,#ff7700,#ff7a00,#ff7a00,#ff7e00,#ff8200,#ff7e00,#ff7a00,#ff7a00,#ff7700,#ff7300,#ff7300,#ff7300,#ff7300,#ff7300,#ff7300,#ff7300,#ff7700,#ff7700,#ff7a00,#ff7e00,#ff8200,#ff8200,#ff8600,#ff8900,#ff8d00,#ff9100,#ff9100,#ff9400,#ff9400,#ff9800,#ff9800,#ff9800,#ff9800,#ff9c00,#ff9c00,#ff9c00,#ff9f00,#ff9f00,#ff9f00,#ffa300,#ffa300,#ffa300,#ffa700,#ffa700,#ffab00,#ffab00,#ffab00,#ffab00,#ffab00,#ffab00,#ffab00,#ffab00,#ffa700 99.48%)"></div><div style="top:344.38px;height:4.51px;background:linear-gradient(90deg,#ffa700 0.52%,#ffa700,#ffa700,#ffab00,#ffab00,#ffab00,#ffa700,#ffa700,#ffa700,#ffa700,#ffa300,#ffa300,#ffa300,#ff9f00,#ff9f00,#ff9f00,#ff9c00,#ff9c00,#ff9c00,#ff9c00,#ff9800,#ff9800,#ff9800,#ff9400,#ff9400,#ff9400,#ff9100,#ff8d00,#ff8d00,#ff8900,#ff8600,#ff8200,#ff7e00,#ff7a00,#ff7700,#ff7700,#ff7300,#ff6f00,#ff6f00,#ff6f00,#ff6f00,#ff6f00,#ff6f00,#ff7300,#ff7300,#ff7700,#ff7a00,#ff7e00,#ff7e00,#ff7e00,#ff7a00,#ff7700,#ff7300,#ff7300,#ff6f00,#ff6f00,#ff6f00,#ff6f00,#ff6f00,#ff6f00,#ff7300,#ff7700,#ff7700,#ff7a00,#ff7e00,#ff8200,#ff8600,#ff8900,#ff8d00,#ff8d00,#ff9100,#ff9400,#ff9400,#ff9400,#ff9800,#ff9800,#ff9800,#ff9c00,#ff9c00,#ff9c00,#ff9c00,#ff9f00,#ff9f00,#ff9f00,#ffa300,#ffa300,#ffa300,#ffa700,#ffa700,#ffa700,#ffa700,#ffab00,#ffab00,#ffab00,#ffa700,#ffa700,#ffa700 99.48%)"></div><div style="top:348.29px;height:4.51px;background:linear-gradient(90deg,#ffa300 0.52%,#ffa700,#ffa700,#ffa700,#ffa700,#ffa700,#ffa700,#ffa700,#ffa300,#ffa300,#ffa300,#ffa300,#ff9f00,#ff9f00,#ff9f00,#ff9c00,#ff9c00,#ff9c00,#ff9c00,#ff9c00,#ff9800,#ff9800,#ff9800,#ff9400,#ff9400,#ff9100,#ff9100,#ff8d00,#ff8900,#ff8900,#ff8600,#ff8200,#ff7e00,#ff7a00,#ff7700,#ff7300,#ff7300,#ff6f00,#ff6f00,#ff6c00,#ff6c00,#ff6c00,#ff6f00,#ff6f00,#ff7300,#ff7700,#ff7700,#ff7a00,#ff7e00,#ff7a00,#ff7700,#ff7700,#ff7300,#ff6f00,#ff6f00,#ff6c00,#ff6c00,#ff6c00,#ff6f00,#ff6f00,#ff7300,#ff7300,#ff7700,#ff7a00,#ff7e00,#ff8200,#ff8600,#ff8900,#ff8900,#ff8d00,#ff9100,#ff9100,#ff9400,#ff9400,#ff9800,#ff9800,#ff9800,#ff9c00,#ff9c00,#ff9c00,#ff9c00,#ff9c00,#ff9f00,#ff9f00,#ff9f00,#ffa300,#ffa300,#ffa300,#ffa300,#ffa700,#ffa700,#ffa700,#ffa700,#ffa700,#ffa700,#ffa700,#ffa300 99.48%)"></div><div style="top:352.21px;height:4.51px;background:linear-gradient(90deg,#ffa300 0.52%,#ffa300,#ffa300,#ffa300,#ffa300,#ffa300,#ffa300,#ffa300,#ffa300,#ffa300,#ff9f00,#ff9f00,#ff9f00,#ff9f00,#ff9f00,#ff9c00,#ff9c00,#ff9c00,#ff9c00,#ff9c00,#ff9800,#ff9800,#ff9800,#ff9400,#ff9400,#ff9100,#ff9100,#ff8d00,#ff8d00,#ff8900,#ff8600,#ff8200,#ff7e00,#ff7a00,#ff7700,#ff7300,#ff7300,#ff6f00,#ff6f00,#ff6c00,#ff6c00,#ff6c00,#ff6f00,#ff6f00,#ff7300,#ff7700,#ff7700,#ff7a00,#ff7e00,#ff7a00,#ff7700,#ff7700,#ff7300,#ff6f00,#ff6f00,#ff6c00,#ff6c00,#ff6c00,#ff6f00,#ff6f00,#ff7300,#ff7300,#ff7700,#ff7a00,#ff7e00,#ff8200,#ff8600,#ff8900,#ff8d00,#ff8d00,#ff9100,#ff9100,#ff9400,#ff9400,#ff9800,#ff9800,#ff9800,#ff9c00,#ff9c00,#ff9c00,#ff9c00,#ff9c00,#ff9f00,#ff9f00,#ff9f00,#ff9f00,#ff9f00,#ffa300,#ffa300,#ffa300,#ffa300,#ffa300,#ffa300,#ffa300,#ffa300,#ffa300,#ffa300 99.48%)"></div><div style="top:356.12px;height:4.51px;background:linear-gradient(90deg,#ff9f00 0.52%,#ffa300,#ffa300,#ffa300,#ffa300,#ffa300,#ffa300,#ffa300,#ff9f00,#ff9f00,#ff9f00,#ff9f00,#ff9f00,#ff9f00,#ff9c00,#ff9c00,#ff9c00,#ff9c00,#ff9c00,#ff9c00,#ff9800,#ff9800,#ff9800,#ff9400,#ff9400,#ff9400,#ff9100,#ff8d00,#ff8d00,#ff8900,#ff8600,#ff8200,#ff7e00,#ff7a00,#ff7a00,#ff7700,#ff7300,#ff6f00,#ff6f00,#ff6f00,#ff6f00,#ff6f00,#ff6f00,#ff7300,#ff7300,#ff7700,#ff7a00,#ff7e00,#ff7e00,#ff7e00,#ff7a00,#ff7700,#ff7300,#ff7300,#ff6f00,#ff6f00,#ff6f00,#ff6f00,#ff6f00,#ff6f00,#ff7300,#ff7700,#ff7a00,#ff7a00,#ff7e00,#ff8200,#ff8600,#ff8900,#ff8d00,#ff8d00,#ff9100,#ff9400,#ff9400,#ff9400,#ff9800,#ff9800,#ff9800,#ff9c00,#ff9c00,#ff9c00,#ff9c00,#ff9c00,#ff9c00,#ff9f00,#ff9f00,#ff9f00,#ff9f00,#ff9f00,#ff9f00,#ffa300,#ffa300,#ffa300,#ffa300,#ffa300,#ffa300,#ffa300,#ff9f00 99.48%)"></div><div style="top:360.03px;height:4.51px;background:linear-gradient(90deg,#ff9f00 0.52%,#ff9f00,#ff9f00,#ff9f00,#ff9f00,#ff9f00,#ff9f00,#ff9f00,#ff9f00,#ff9f00,#ff9f00,#ff9f00,#ff9f00,#ff9c00,#ff9c00,#ff9c00,#ff9c00,#ff9c00,#ff9c00,#ff9800,#ff9800,#ff9800,#ff9800,#ff9800,#ff9400,#ff9400,#ff9100,#ff9100,#ff8d00,#ff8900,#ff8600,#ff8600,#ff8200,#ff7e00,#ff7a00,#ff7700,#ff7700,#ff7300,#ff7300,#ff7300,#ff7300,#ff7300,#ff7300,#ff7300,#ff7700,#ff7a00,#ff7a00,#ff7e00,#ff8200,#ff7e00,#ff7a00,#ff7a00,#ff7700,#ff7300,#ff7300,#ff7300,#ff7300,#ff7300,#ff7300,#ff7300,#ff7700,#ff7700,#ff7a00,#ff7e00,#ff8200,#ff8600,#ff8600,#ff8900,#ff8d00,#ff9100,#ff9100,#ff9400,#ff9400,#ff9800,#ff9800,#ff9800,#ff9800,#ff9800,#ff9c00,#ff9c00,#ff9c00,#ff9c00,#ff9c00,#ff9c00,#ff9f00,#ff9f00,#ff9f00,#ff9f00,#ff9f00,#ff9f00,#ff9f00,#ff9f00,#ff9f00,#ff9f00,#ff9f00,#ff9f00,#ff9f00 99.48%)"></div><div style="top:363.95px;height:4.51px;background:linear-gradient(90deg,#ff9f00 0.52%,#ff9f00,#ff9f00,#ff9f00,#ff9f00,#ff9f00,#ff9f00,#ff9f00,#ff9f00,#ff9f00,#ff9f00,#ff9c00,#ff9c00,#ff9c00,#ff9c00,#ff9c00,#ff9c00,#ff9c00,#ff9c00,#ff9c00,#ff9800,#ff9800,#ff9800,#ff9800,#ff9400,#ff9400,#ff9100,#ff9100,#ff8d00,#ff8d00,#ff8900,#ff8600,#ff8200,#ff8200,#ff7e00,#ff7a00,#ff7a00,#ff7700,#ff7700,#ff7700,#ff7700,#ff7700,#ff7700,#ff7700,#ff7a00,#ff7a00,#ff7e00,#ff8200,#ff8600,#ff8200,#ff7e00,#ff7a00,#ff7a00,#ff7700,#ff7700,#ff7700,#ff7700,#ff7700,#ff7700,#ff7700,#ff7a00,#ff7a00,#ff7e00,#ff8200,#ff8200,#ff8600,#ff8900,#ff8d00,#ff8d00,#ff9100,#ff9100,#ff9400,#ff9400,#ff9800,#ff9800,#ff9800,#ff9800,#ff9c00,#ff9c00,#ff9c00,#ff9c00,#ff9c00,#ff9c00,#ff9c00,#ff9c00,#ff9c00,#ff9f00,#ff9f00,#ff9f00,#ff9f00,#ff9f00,#ff9f00,#ff9f00,#ff9f00,#ff9f00,#ff9f00,#ff9f00 99.48%)"></div><div style="top:367.86px;height:4.51px;background:linear-gradient(90deg,#ff9c00 0.52%,#ff9f00,#ff9f00,#ff9f00,#ff9f00,#ff9f00,#ff9f00,#ff9f00,#ff9c00,#ff9c00,#ff9c00,#ff9c00,#ff9c00,#ff9c00,#ff9c00,#ff9c00,#ff9c00,#ff9c00,#ff9c00,#ff9c00,#ff9800,#ff9800,#ff9800,#ff9800,#ff9400,#ff9400,#ff9400,#ff9100,#ff9100,#ff8d00,#ff8d00,#ff8900,#ff8600,#ff8600,#ff8200,#ff7e00,#ff7e00,#ff7a00,#ff7a00,#ff7a00,#ff7a00,#ff7a00,#ff7a00,#ff7a00,#ff7e00,#ff7e00,#ff8200,#ff8600,#ff8600,#ff8600,#ff8200,#ff7e00,#ff7e00,#ff7a00,#ff7a00,#ff7a00,#ff7a00,#ff7a00,#ff7a00,#ff7a00,#ff7e00,#ff7e00,#ff8200,#ff8600,#ff8600,#ff8900,#ff8d00,#ff8d00,#ff9100,#ff9100,#ff9400,#ff9400,#ff9400,#ff9800,#ff9800,#ff9800,#ff9800,#ff9c00,#ff9c00,#ff9c00,#ff9c00,#ff9c00,#ff9c00,#ff9c00,#ff9c00,#ff9c00,#ff9c00,#ff9c00,#ff9c00,#ff9f00,#ff9f00,#ff9f00,#ff9f00,#ff9f00,#ff9f00,#ff9f00,#ff9c00 99.48%)"></div><div style="top:371.77px;height:4.51px;background:linear-gradient(90deg,#ff9c00 0.52%,#ff9c00,#ff9c00,#ff9c00,#ff9c00,#ff9c00,#ff9c00,#ff9c00,#ff9c00,#ff9c00,#ff9c00,#ff9c00,#ff9c00,#ff9c00,#ff9c00,#ff9c00,#ff9c00,#ff9c00,#ff9c00,#ff9c00,#ff9800,#ff9800,#ff9800,#ff9800,#ff9800,#ff9400,#ff9400,#ff9400,#ff9100,#ff9100,#ff8d00,#ff8d00,#ff8900,#ff8900,#ff8600,#ff8200,#ff8200,#ff8200,#ff7e00,#ff7e00,#ff7e00,#ff7e00,#ff7e00,#ff8200,#ff8200,#ff8600,#ff8600,#ff8900,#ff8900,#ff8900,#ff8600,#ff8600,#ff8200,#ff8200,#ff7e00,#ff7e00,#ff7e00,#ff7e00,#ff7e00,#ff8200,#ff8200,#ff8200,#ff8600,#ff8900,#ff8900,#ff8d00,#ff8d00,#ff9100,#ff9100,#ff9400,#ff9400,#ff9400,#ff9800,#ff9800,#ff9800,#ff9800,#ff9800,#ff9c00,#ff9c00,#ff9c00,#ff9c00,#ff9c00,#ff9c00,#ff9c00,#ff9c00,#ff9c00,#ff9c00,#ff9c00,#ff9c00,#ff9c00,#ff9c00,#ff9c00,#ff9c00,#ff9c00,#ff9c00,#ff9c00,#ff9c00 99.48%)"></div><div style="top:375.69px;height:4.51px;background:linear-gradient(90deg,#ff9c00 0.52%,#ff9c00,#ff9c00,#ff9c00,#ff9c00,#ff9c00,#ff9c00,#ff9c00,#ff9c00,#ff9c00,#ff9c00,#ff9c00,#ff9c00,#ff9c00,#ff9c00,#ff9c00,#ff9c00,#ff9c00,#ff9c00,#ff9c00,#ff9c00,#ff9800,#ff9800,#ff9800,#ff9800,#ff9800,#ff9400,#ff9400,#ff9400,#ff9100,#ff9100,#ff8d00,#ff8d00,#ff8900,#ff8900,#ff8900,#ff8600,#ff8600,#ff8600,#ff8600,#ff8600,#ff8600,#ff8600,#ff8600,#ff8600,#ff8900,#ff8900,#ff8d00,#ff8d00,#ff8d00,#ff8900,#ff8900,#ff8600,#ff8600,#ff8600,#ff8600,#ff8600,#ff8600,#ff8600,#ff8600,#ff8600,#ff8900,#ff8900,#ff8900,#ff8d00,#ff8d00,#ff9100,#ff9100,#ff9400,#ff9400,#ff9400,#ff9800,#ff9800,#ff9800,#ff9800,#ff9800,#ff9c00,#ff9c00,#ff9c00,#ff9c00,#ff9c00,#ff9c00,#ff9c00,#ff9c00,#ff9c00,#ff9c00,#ff9c00,#ff9c00,#ff9c00,#ff9c00,#ff9c00,#ff9c00,#ff9c00,#ff9c00,#ff9c00,#ff9c00,#ff9c00 99.48%)"></div></div>
<canvas id="g6" class="a" style="left:718.1px;top:950.0px;width:379.8px;height:380.40000000000003px;outline:1.1px solid #000"></canvas>
<div class="t" style="top:926.74px;font-size:18.5px;line-height:18.5px;left:908.0px;transform:translateX(-50%);">Residuals for M2[GenSAS mag_cylinder.sld  #2 2D]</div>
<div class="a" style="left:717.95px;top:1330.5px;width:1.1px;height:5px;background:#000;"></div>
<div class="t" style="top:1337.14px;font-size:14.6px;line-height:14.6px;left:718.5px;transform:translateX(-50%);"><span style="display:inline-block;width:0.75em;text-align:center;transform:scaleX(1.3)">−</span>0.3</div>
<div class="a" style="left:713.0px;top:1329.45px;width:5px;height:1.1px;background:#000;"></div>
<div class="t" style="top:1323.67px;font-size:14.6px;line-height:14.6px;right:1566.3px;"><span style="display:inline-block;width:0.75em;text-align:center;transform:scaleX(1.3)">−</span>0.3</div>
<div class="a" style="left:781.1166666666667px;top:1330.5px;width:1.1px;height:5px;background:#000;"></div>
<div class="t" style="top:1337.14px;font-size:14.6px;line-height:14.6px;left:781.6666666666666px;transform:translateX(-50%);"><span style="display:inline-block;width:0.75em;text-align:center;transform:scaleX(1.3)">−</span>0.2</div>
<div class="a" style="left:713.0px;top:1266.1833333333334px;width:5px;height:1.1px;background:#000;"></div>
<div class="t" style="top:1260.40px;font-size:14.6px;line-height:14.6px;right:1566.3px;"><span style="display:inline-block;width:0.75em;text-align:center;transform:scaleX(1.3)">−</span>0.2</div>
<div class="a" style="left:844.2833333333334px;top:1330.5px;width:1.1px;height:5px;background:#000;"></div>
<div class="t" style="top:1337.14px;font-size:14.6px;line-height:14.6px;left:844.8333333333334px;transform:translateX(-50%);"><span style="display:inline-block;width:0.75em;text-align:center;transform:scaleX(1.3)">−</span>0.1</div>
<div class="a" style="left:713.0px;top:1202.9166666666667px;width:5px;height:1.1px;background:#000;"></div>
<div class="t" style="top:1197.13px;font-size:14.6px;line-height:14.6px;right:1566.3px;"><span style="display:inline-block;width:0.75em;text-align:center;transform:scaleX(1.3)">−</span>0.1</div>
<div class="a" style="left:907.45px;top:1330.5px;width:1.1px;height:5px;background:#000;"></div>
<div class="t" style="top:1337.14px;font-size:14.6px;line-height:14.6px;left:908.0px;transform:translateX(-50%);">0.0</div>
<div class="a" style="left:713.0px;top:1139.65px;width:5px;height:1.1px;background:#000;"></div>
<div class="t" style="top:1133.87px;font-size:14.6px;line-height:14.6px;right:1566.3px;">0.0</div>
<div class="a" style="left:970.6166666666667px;top:1330.5px;width:1.1px;height:5px;background:#000;"></div>
<div class="t" style="top:1337.14px;font-size:14.6px;line-height:14.6px;left:971.1666666666666px;transform:translateX(-50%);">0.1</div>
<div class="a" style="left:713.0px;top:1076.3833333333334px;width:5px;height:1.1px;background:#000;"></div>
<div class="t" style="top:1070.60px;font-size:14.6px;line-height:14.6px;right:1566.3px;">0.1</div>
<div class="a" style="left:1033.7833333333333px;top:1330.5px;width:1.1px;height:5px;background:#000;"></div>
<div class="t" style="top:1337.14px;font-size:14.6px;line-height:14.6px;left:1034.3333333333333px;transform:translateX(-50%);">0.2</div>
<div class="a" style="left:713.0px;top:1013.1166666666668px;width:5px;height:1.1px;background:#000;"></div>
<div class="t" style="top:1007.33px;font-size:14.6px;line-height:14.6px;right:1566.3px;">0.2</div>
<div class="a" style="left:1096.95px;top:1330.5px;width:1.1px;height:5px;background:#000;"></div>
<div class="t" style="top:1337.14px;font-size:14.6px;line-height:14.6px;left:1097.5px;transform:translateX(-50%);">0.3</div>
<div class="a" style="left:713.0px;top:949.8499999999999px;width:5px;height:1.1px;background:#000;"></div>
<div class="t" style="top:944.07px;font-size:14.6px;line-height:14.6px;right:1566.3px;">0.3</div>
<div class="t" style="top:1361.24px;font-size:14.6px;line-height:14.6px;left:908.0px;transform:translateX(-50%);">Q<sub class="ms">x</sub>(A<sup class="ms">−1</sup>)</div>
<div class="t" style="left:656.0px;top:1140.8px;font-size:14.6px;line-height:14.6px;transform:translate(-50%,-50%) rotate(-90deg);">Q<sub class="ms">y</sub>(A<sup class="ms">−1</sup>)</div>
<div class="a" style="left:1173.6px;top:962.6px;width:15.3px;height:336.8px;background:linear-gradient(to top,rgb(0,0,128) 0.0%,rgb(0,0,255) 11.0%,rgb(0,0,255) 12.5%,rgb(0,219,255) 34.0%,rgb(0,229,247) 35.0%,rgb(21,255,226) 37.5%,rgb(239,255,8) 64.0%,rgb(247,246,0) 65.0%,rgb(255,236,0) 66.0%,rgb(255,19,0) 89.0%,rgb(232,0,0) 91.0%,rgb(128,0,0) 100.0%);outline:1.1px solid #000"></div>
<div class="a" style="left:1189.0px;top:962.45px;width:5px;height:1.1px;background:#000;"></div>
<div class="t" style="top:956.37px;font-size:14.6px;line-height:14.6px;left:1199.0px;">0.0010</div>
<div class="a" style="left:1189.0px;top:1004.45px;width:5px;height:1.1px;background:#000;"></div>
<div class="t" style="top:998.37px;font-size:14.6px;line-height:14.6px;left:1199.0px;">0.0005</div>
<div class="a" style="left:1189.0px;top:1046.45px;width:5px;height:1.1px;background:#000;"></div>
<div class="t" style="top:1040.37px;font-size:14.6px;line-height:14.6px;left:1199.0px;">0.0000</div>
<div class="a" style="left:1189.0px;top:1088.45px;width:5px;height:1.1px;background:#000;"></div>
<div class="t" style="top:1082.37px;font-size:14.6px;line-height:14.6px;left:1199.0px;"><span style="display:inline-block;width:0.75em;text-align:center;transform:scaleX(1.3)">−</span>0.0005</div>
<div class="a" style="left:1189.0px;top:1130.45px;width:5px;height:1.1px;background:#000;"></div>
<div class="t" style="top:1124.37px;font-size:14.6px;line-height:14.6px;left:1199.0px;"><span style="display:inline-block;width:0.75em;text-align:center;transform:scaleX(1.3)">−</span>0.0010</div>
<div class="a" style="left:1189.0px;top:1172.45px;width:5px;height:1.1px;background:#000;"></div>
<div class="t" style="top:1166.37px;font-size:14.6px;line-height:14.6px;left:1199.0px;"><span style="display:inline-block;width:0.75em;text-align:center;transform:scaleX(1.3)">−</span>0.0015</div>
<div class="a" style="left:1189.0px;top:1214.45px;width:5px;height:1.1px;background:#000;"></div>
<div class="t" style="top:1208.37px;font-size:14.6px;line-height:14.6px;left:1199.0px;"><span style="display:inline-block;width:0.75em;text-align:center;transform:scaleX(1.3)">−</span>0.0020</div>
<div class="a" style="left:1189.0px;top:1256.45px;width:5px;height:1.1px;background:#000;"></div>
<div class="t" style="top:1250.37px;font-size:14.6px;line-height:14.6px;left:1199.0px;"><span style="display:inline-block;width:0.75em;text-align:center;transform:scaleX(1.3)">−</span>0.0025</div>
<div class="a" style="left:1189.0px;top:1298.45px;width:5px;height:1.1px;background:#000;"></div>
<div class="t" style="top:1292.37px;font-size:14.6px;line-height:14.6px;left:1199.0px;"><span style="display:inline-block;width:0.75em;text-align:center;transform:scaleX(1.3)">−</span>0.0030</div>
<script>
const RS=[[0,0],[0.35,0],[0.66,1],[0.89,1],[1,0.5]];
const GS=[[0,0],[0.125,0],[0.375,1],[0.64,1],[0.91,0],[1,0]];
const BS=[[0,0.5],[0.11,1],[0.34,1],[0.65,0],[1,0]];
function seg(p,t){for(let i=1;i<p.length;i++){if(t<=p[i][0]){const a=p[i-1],b=p[i];return a[1]+(b[1]-a[1])*(t-a[0])/(b[0]-a[0]);}}return p[p.length-1][1];}
function jet(t){t=Math.max(0,Math.min(1,t));t=Math.floor(t*255.999)/255;return [seg(RS,t)*255,seg(GS,t)*255,seg(BS,t)*255];}
function j1(x){const ax=Math.abs(x);let ans;
 if(ax<8){const y=x*x;const a1=x*(72362614232.0+y*(-7895059235.0+y*(242396853.1+y*(-2972611.439+y*(15704.48260+y*(-30.16036606))))));
 const a2=144725228442.0+y*(2300535178.0+y*(18583304.74+y*(99447.43394+y*(376.9991397+y*1.0))));ans=a1/a2;}
 else{const z=8/ax,y=z*z,xx=ax-2.356194491;const a1=1.0+y*(0.183105e-2+y*(-0.3516396496e-4+y*(0.2457520174e-5+y*(-0.240337019e-6))));
 const a2=0.04687499995+y*(-0.2002690873e-3+y*(0.8449199096e-5+y*(-0.88228987e-6+y*0.105787412e-6)));
 ans=Math.sqrt(0.636619772/ax)*(Math.cos(xx)*a1-z*Math.sin(xx)*a2);if(x<0)ans=-ans;}
 return ans;}
const MAGA=0.02, MAGP=1.5;
function Icyl(qx,qy){const v=qx*0.8660254*20;const u=Math.sqrt(qy*qy+0.25*qx*qx)*20;
 const fb=u<1e-9?1:2*j1(u)/u;const fs=Math.abs(v)<1e-9?1:Math.sin(v)/v;const q2=qx*qx+qy*qy;
 const A=q2<1e-14?MAGA:MAGA+(1-MAGA)*Math.pow(qx*qx/q2,MAGP);return 5.03*fb*fb*fs*fs*A+1e-13;}
function logI(qx,qy,h,S){
 let v=Math.log10(Icyl(qx,qy));
 const q0=Math.PI/(0.8660254*20);
 const dl=Math.abs(Math.abs(qx)-q0)/h;
 const qp=Math.sqrt(qy*qy+0.25*qx*qx);
 const gr=qp<1e-9?1:Math.sqrt(qy*qy+0.0625*qx*qx)/qp;
 const da=Math.abs(qp-3.8317/20)/(gr*h);
 v-=DIPL*Math.exp(-dl*dl/(DIPW*DIPW));
 v-=DIPA*Math.exp(-da*da/(DIPW*DIPW));
 return Math.max(v,-10.5);}
const DIPL=1.0, DIPA=0.7, DIPW=1.3;
function G(x,y,x0,y0,sx,sy){return Math.exp(-((x-x0)*(x-x0)/(2*sx*sx)+(y-y0)*(y-y0)/(2*sy*sy)));}
function resid(x,y){
 let r=-0.00002;
 const ax=Math.abs(x), ay=Math.abs(y);
 const q2=x*x+y*y; const ang=q2<1e-12?1:(x*x/q2);
 r+=-0.0029*G(ax,y,0.066,0,0.042,0.033)*Math.pow(ang,2.0);
 r+=-0.00055*G(ax,y,0.25,0,0.03,0.03);
 r+=0.00022*G(ax,ay,0.24,0.1,0.032,0.03);
 r+=0.00015*G(ax,ay,0.12,0.1,0.025,0.025);
 r+=0.0002*G(ax,ay,0.05,0.255,0.05,0.035);
 r+=-0.00025*G(ax,ay,0.04,0.13,0.035,0.045);
 r+=-0.00012*G(ax,ay,0.27,0.2,0.04,0.04);
 return r;}
function draw(id,cw,ch,kind){
 const c=document.getElementById(id);
 if(kind==='cb'){c.width=1;c.height=256;const ctx=c.getContext('2d');const im=ctx.createImageData(1,256);
  for(let i=0;i<256;i++){const col=jet(1-i/255);im.data[i*4]=col[0];im.data[i*4+1]=col[1];im.data[i*4+2]=col[2];im.data[i*4+3]=255;}
  ctx.putImageData(im,0,0);return;}
 const N=97;c.width=N;c.height=N;const ctx=c.getContext('2d');const im=ctx.createImageData(N,N);
 const h=0.6/N;
 let vmin,vmax;
 if(kind==='resid'){vmin=-0.003;vmax=0.001;}else{vmin=-11.34;vmax=0.674;}
 for(let j=0;j<N;j++)for(let i=0;i<N;i++){
  const qx=-0.3+(i+0.5)*h, qy=0.3-(j+0.5)*h;
  let v;
  if(kind==='resid') v=resid(qx,qy); else v=logI(qx,qy,h,kind==='data'?3:3);
  const col=jet((v-vmin)/(vmax-vmin));const k=(j*N+i)*4;
  im.data[k]=col[0];im.data[k+1]=col[1];im.data[k+2]=col[2];im.data[k+3]=255;}
 ctx.putImageData(im,0,0);
}

draw('g4',380.0,380,'data');
draw('g5',378.79999999999995,380.0,'model');
draw('g6',379.0,379.6,'resid');
</script>
</body></html>
